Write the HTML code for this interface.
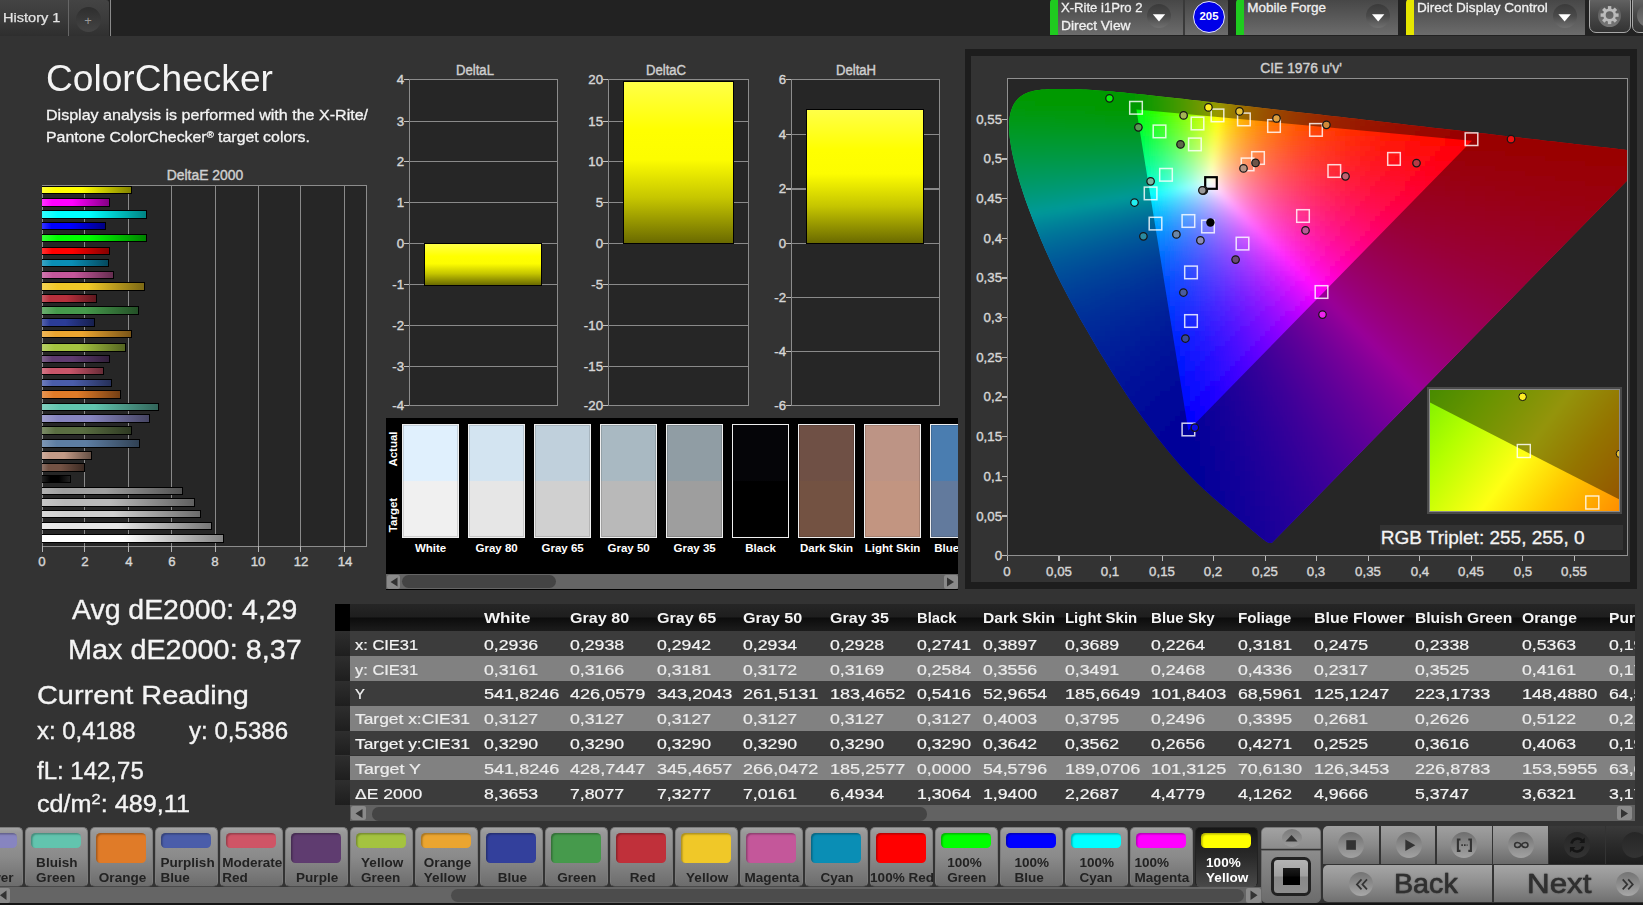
<!DOCTYPE html><html><head><meta charset="utf-8"><title>ColorChecker</title><style>
html,body{margin:0;padding:0;background:#333;}
body{width:1643px;height:905px;overflow:hidden;position:relative;font-family:"Liberation Sans",sans-serif;}
#root{position:absolute;left:0;top:0;width:1643px;height:905px;overflow:hidden;background:#333;}
#root div{position:absolute;box-sizing:border-box;}
.t{position:absolute;white-space:nowrap;line-height:1;display:inline-block;}
svg{position:absolute;left:0;top:0;overflow:visible;}
.cg rect{width:5.5px;height:5.5px;}
</style></head><body><div id="root"><div style="left:0.00px;top:0.00px;width:1643.00px;height:35.60px;background:#222;"></div><div style="left:0.00px;top:0.00px;width:68.00px;height:35.60px;background:linear-gradient(#444,#383838 60%,#2e2e2e);"></div><div style="left:68.00px;top:0.00px;width:1.20px;height:35.60px;background:#666;"></div><div style="left:69.20px;top:0.00px;width:40.30px;height:35.60px;background:linear-gradient(#444,#3a3a3a 60%,#303030);border-top-right-radius:3px;"></div><div style="left:109.50px;top:0.00px;width:1.30px;height:35.60px;background:#8a8a8a;"></div><div style="left:76.00px;top:7.00px;width:25.00px;height:25.00px;border-radius:50%;background:linear-gradient(#2e2e2e,#444);"></div><span id="t0" class="t" style="left:3.20px;transform-origin:0 0;top:11.49px;font-size:13.6px;color:#e4e4e4;transform:scaleX(1.0704);-webkit-text-stroke:0.25px #e4e4e4;">History 1</span><span id="t1" class="t" style="left:88.00px;transform-origin:0 0;top:14.00px;font-size:13px;color:#999;transform:scaleX(1.0000) translateX(-50%);">+</span><div style="left:1049.50px;top:-2.00px;width:133.50px;height:37.00px;background:linear-gradient(#454545,#5a5a5a 55%,#6c6c6c);border-radius:5px 0 0 0;"></div><div style="left:1049.50px;top:-2.00px;width:8.00px;height:37.00px;background:#1fcb1f;border-radius:5px 0 0 0;"></div><div style="left:1183.00px;top:0.00px;width:1.50px;height:35.00px;background:#3a3a3a;"></div><div style="left:1184.50px;top:-2.00px;width:43.50px;height:37.00px;background:linear-gradient(#454545,#5a5a5a 55%,#6c6c6c);border-radius:0 4px 0 0;"></div><div style="left:1235.50px;top:-2.00px;width:162.50px;height:37.00px;background:linear-gradient(#454545,#5a5a5a 55%,#6c6c6c);border-radius:5px 0 0 0;"></div><div style="left:1235.50px;top:-2.00px;width:8.00px;height:37.00px;background:#1fcb1f;border-radius:5px 0 0 0;"></div><div style="left:1406.00px;top:-2.00px;width:179.30px;height:37.00px;background:linear-gradient(#454545,#5a5a5a 55%,#6c6c6c);border-radius:5px 0 0 0;"></div><div style="left:1406.00px;top:-2.00px;width:8.00px;height:37.00px;background:#e6e600;border-radius:5px 0 0 0;"></div><div style="left:1147.00px;top:4.40px;width:24.00px;height:24.00px;border-radius:50%;background:linear-gradient(#3a3a3a,#4a4a4a 50%,#707070);"></div><svg width="1643" height="905"><path d="M1152.8 14.2h12.4l-6.2 7.2z" fill="#fff"/></svg><div style="left:1366.20px;top:4.40px;width:24.00px;height:24.00px;border-radius:50%;background:linear-gradient(#3a3a3a,#4a4a4a 50%,#707070);"></div><svg width="1643" height="905"><path d="M1372.0 14.2h12.4l-6.2 7.2z" fill="#fff"/></svg><div style="left:1552.60px;top:4.40px;width:24.00px;height:24.00px;border-radius:50%;background:linear-gradient(#3a3a3a,#4a4a4a 50%,#707070);"></div><svg width="1643" height="905"><path d="M1558.3999999999999 14.2h12.4l-6.2 7.2z" fill="#fff"/></svg><span id="t2" class="t" style="left:1061.00px;transform-origin:0 0;top:1.37px;font-size:13.5px;color:#f0f0f0;transform:scaleX(0.9702);-webkit-text-stroke:0.3px #f0f0f0;">X-Rite i1Pro 2</span><span id="t3" class="t" style="left:1061.00px;transform-origin:0 0;top:19.17px;font-size:13.5px;color:#f0f0f0;transform:scaleX(1.0221);-webkit-text-stroke:0.3px #f0f0f0;">Direct View</span><span id="t4" class="t" style="left:1247.20px;transform-origin:0 0;top:1.37px;font-size:13.5px;color:#f0f0f0;transform:scaleX(1.0000);-webkit-text-stroke:0.3px #f0f0f0;">Mobile Forge</span><span id="t5" class="t" style="left:1417.10px;transform-origin:0 0;top:1.37px;font-size:13.5px;color:#f0f0f0;transform:scaleX(1.0023);-webkit-text-stroke:0.3px #f0f0f0;">Direct Display Control</span><div style="left:1193.20px;top:0.80px;width:32.00px;height:32.00px;border-radius:50%;background:#0000e8;border:1.2px solid #e8e8ff;"></div><span id="t6" class="t" style="left:1209.20px;transform-origin:0 0;top:11.49px;font-size:11px;color:#fff;font-weight:700;transform:scaleX(1.0333) translateX(-50%);">205</span><div style="left:1589.00px;top:-6.00px;width:41.50px;height:38.70px;border:1.3px solid #a8a8a8;border-radius:7px;background:linear-gradient(#6a6a6a,#4a4a4a 50%,#333);"></div><div style="left:1631.80px;top:-6.00px;width:30.00px;height:38.70px;border:1.3px solid #a8a8a8;border-radius:7px;background:linear-gradient(#6a6a6a,#4a4a4a 50%,#333);"></div><div style="left:1598.10px;top:3.60px;width:23.00px;height:23.00px;border-radius:50%;background:linear-gradient(#555,#777);"></div><div style="left:1637.00px;top:3.60px;width:23.00px;height:23.00px;border-radius:50%;background:linear-gradient(#555,#777);"></div><svg width="1643" height="905"><rect x="1607.8999999999999" y="6.1" width="3.4" height="4" fill="#bbb" transform="rotate(0 1609.6 15.1)"/><rect x="1607.8999999999999" y="6.1" width="3.4" height="4" fill="#bbb" transform="rotate(45 1609.6 15.1)"/><rect x="1607.8999999999999" y="6.1" width="3.4" height="4" fill="#bbb" transform="rotate(90 1609.6 15.1)"/><rect x="1607.8999999999999" y="6.1" width="3.4" height="4" fill="#bbb" transform="rotate(135 1609.6 15.1)"/><rect x="1607.8999999999999" y="6.1" width="3.4" height="4" fill="#bbb" transform="rotate(180 1609.6 15.1)"/><rect x="1607.8999999999999" y="6.1" width="3.4" height="4" fill="#bbb" transform="rotate(225 1609.6 15.1)"/><rect x="1607.8999999999999" y="6.1" width="3.4" height="4" fill="#bbb" transform="rotate(270 1609.6 15.1)"/><rect x="1607.8999999999999" y="6.1" width="3.4" height="4" fill="#bbb" transform="rotate(315 1609.6 15.1)"/><circle cx="1609.6" cy="15.1" r="5.2" fill="none" stroke="#bbb" stroke-width="2.6"/></svg><span id="t7" class="t" style="left:46.40px;transform-origin:0 0;top:61.13px;font-size:36px;color:#f4f4f4;transform:scaleX(1.0309);">ColorChecker</span><span id="t8" class="t" style="left:46.40px;transform-origin:0 0;top:107.00px;font-size:15px;color:#f4f4f4;transform:scaleX(1.0701);-webkit-text-stroke:0.3px #f4f4f4;">Display analysis is performed with the X-Rite/</span><span id="t9" class="t" style="left:46.40px;transform-origin:0 0;top:128.90px;font-size:15px;color:#f4f4f4;transform:scaleX(1.0586);-webkit-text-stroke:0.3px #f4f4f4;">Pantone ColorChecker<span style="font-size:9px;position:relative;top:-4px">®</span> target colors.</span><span id="t10" class="t" style="left:204.70px;transform-origin:0 0;top:168.72px;font-size:13.8px;color:#cfcfcf;transform:scaleX(1.0066) translateX(-50%);-webkit-text-stroke:0.4px #cfcfcf;">DeltaE 2000</span><div style="left:42.00px;top:185.00px;width:325.00px;height:361.60px;background:#262626;border:1.1px solid #8c8c8c;"></div><div style="left:83.85px;top:185.00px;width:1.10px;height:361.60px;background:#8a8a8a;"></div><div style="left:127.85px;top:185.00px;width:1.10px;height:361.60px;background:#8a8a8a;"></div><div style="left:170.75px;top:185.00px;width:1.10px;height:361.60px;background:#8a8a8a;"></div><div style="left:214.55px;top:185.00px;width:1.10px;height:361.60px;background:#8a8a8a;"></div><div style="left:257.65px;top:185.00px;width:1.10px;height:361.60px;background:#8a8a8a;"></div><div style="left:300.05px;top:185.00px;width:1.10px;height:361.60px;background:#8a8a8a;"></div><div style="left:343.75px;top:185.00px;width:1.10px;height:361.60px;background:#8a8a8a;"></div><div style="left:41.90px;top:546.10px;width:1.20px;height:5.60px;background:#b4b4b4;"></div><span id="t11" class="t" style="left:41.90px;transform-origin:0 0;top:555.27px;font-size:13.5px;color:#d6d6d6;transform:scaleX(0.9800) translateX(-50%);-webkit-text-stroke:0.4px #d6d6d6;">0</span><div style="left:83.80px;top:546.10px;width:1.20px;height:5.60px;background:#b4b4b4;"></div><span id="t12" class="t" style="left:84.60px;transform-origin:0 0;top:555.27px;font-size:13.5px;color:#d6d6d6;transform:scaleX(0.9800) translateX(-50%);-webkit-text-stroke:0.4px #d6d6d6;">2</span><div style="left:127.80px;top:546.10px;width:1.20px;height:5.60px;background:#b4b4b4;"></div><span id="t13" class="t" style="left:128.60px;transform-origin:0 0;top:555.27px;font-size:13.5px;color:#d6d6d6;transform:scaleX(0.9800) translateX(-50%);-webkit-text-stroke:0.4px #d6d6d6;">4</span><div style="left:170.70px;top:546.10px;width:1.20px;height:5.60px;background:#b4b4b4;"></div><span id="t14" class="t" style="left:171.50px;transform-origin:0 0;top:555.27px;font-size:13.5px;color:#d6d6d6;transform:scaleX(0.9800) translateX(-50%);-webkit-text-stroke:0.4px #d6d6d6;">6</span><div style="left:214.50px;top:546.10px;width:1.20px;height:5.60px;background:#b4b4b4;"></div><span id="t15" class="t" style="left:215.30px;transform-origin:0 0;top:555.27px;font-size:13.5px;color:#d6d6d6;transform:scaleX(0.9800) translateX(-50%);-webkit-text-stroke:0.4px #d6d6d6;">8</span><div style="left:257.60px;top:546.10px;width:1.20px;height:5.60px;background:#b4b4b4;"></div><span id="t16" class="t" style="left:258.40px;transform-origin:0 0;top:555.27px;font-size:13.5px;color:#d6d6d6;transform:scaleX(0.9800) translateX(-50%);-webkit-text-stroke:0.4px #d6d6d6;">10</span><div style="left:300.00px;top:546.10px;width:1.20px;height:5.60px;background:#b4b4b4;"></div><span id="t17" class="t" style="left:300.80px;transform-origin:0 0;top:555.27px;font-size:13.5px;color:#d6d6d6;transform:scaleX(0.9800) translateX(-50%);-webkit-text-stroke:0.4px #d6d6d6;">12</span><div style="left:343.70px;top:546.10px;width:1.20px;height:5.60px;background:#b4b4b4;"></div><span id="t18" class="t" style="left:344.50px;transform-origin:0 0;top:555.27px;font-size:13.5px;color:#d6d6d6;transform:scaleX(0.9800) translateX(-50%);-webkit-text-stroke:0.4px #d6d6d6;">14</span><div style="left:42.40px;top:186.10px;width:89.24px;height:8.40px;background:linear-gradient(90deg,#ffff33,#ffff00 15%,#ffff00 45%,#848400);border:1.2px solid #000;border-left:none;"></div><div style="left:42.40px;top:198.20px;width:67.62px;height:8.40px;background:linear-gradient(90deg,#ff33ff,#ff00ff 15%,#ff00ff 45%,#840084);border:1.2px solid #000;border-left:none;"></div><div style="left:42.40px;top:210.20px;width:104.81px;height:8.40px;background:linear-gradient(90deg,#33ffff,#00ffff 15%,#00ffff 45%,#008484);border:1.2px solid #000;border-left:none;"></div><div style="left:42.40px;top:222.10px;width:63.30px;height:8.40px;background:linear-gradient(90deg,#3333ff,#0000ff 15%,#0000ff 45%,#000084);border:1.2px solid #000;border-left:none;"></div><div style="left:42.40px;top:233.80px;width:104.81px;height:8.40px;background:linear-gradient(90deg,#33ff33,#00ff00 15%,#00ff00 45%,#008400);border:1.2px solid #000;border-left:none;"></div><div style="left:42.40px;top:247.10px;width:68.05px;height:8.40px;background:linear-gradient(90deg,#ff3333,#ff0000 15%,#ff0000 45%,#840000);border:1.2px solid #000;border-left:none;"></div><div style="left:42.40px;top:259.00px;width:66.97px;height:8.40px;background:linear-gradient(90deg,#3ba4c3,#0a8eb5 15%,#0a8eb5 45%,#05495e);border:1.2px solid #000;border-left:none;"></div><div style="left:42.40px;top:270.70px;width:71.95px;height:8.40px;background:linear-gradient(90deg,#cf78ae,#c4579a 15%,#c4579a 45%,#652d50);border:1.2px solid #000;border-left:none;"></div><div style="left:42.40px;top:282.40px;width:102.65px;height:8.40px;background:linear-gradient(90deg,#f3d353,#f0c828 15%,#f0c828 45%,#7c6814);border:1.2px solid #000;border-left:none;"></div><div style="left:42.40px;top:294.30px;width:54.87px;height:8.40px;background:linear-gradient(90deg,#c65963,#b8303c 15%,#b8303c 45%,#5f181f);border:1.2px solid #000;border-left:none;"></div><div style="left:42.40px;top:306.30px;width:97.03px;height:8.40px;background:linear-gradient(90deg,#6bae6f,#469a4c 15%,#469a4c 45%,#245027);border:1.2px solid #000;border-left:none;"></div><div style="left:42.40px;top:318.20px;width:52.92px;height:8.40px;background:linear-gradient(90deg,#5563ab,#2b3c96 15%,#2b3c96 45%,#161f4e);border:1.2px solid #000;border-left:none;"></div><div style="left:42.40px;top:330.10px;width:89.67px;height:8.40px;background:linear-gradient(90deg,#efb759,#eba530 15%,#eba530 45%,#7a5518);border:1.2px solid #000;border-left:none;"></div><div style="left:42.40px;top:343.20px;width:83.84px;height:8.40px;background:linear-gradient(90deg,#b6cf66,#a4c340 15%,#a4c340 45%,#556521);border:1.2px solid #000;border-left:none;"></div><div style="left:42.40px;top:355.10px;width:68.05px;height:8.40px;background:linear-gradient(90deg,#7f638c,#5f3c70 15%,#5f3c70 45%,#311f3a);border:1.2px solid #000;border-left:none;"></div><div style="left:42.40px;top:366.90px;width:61.78px;height:8.40px;background:linear-gradient(90deg,#d37787,#c9566a 15%,#c9566a 45%,#682c37);border:1.2px solid #000;border-left:none;"></div><div style="left:42.40px;top:378.70px;width:69.14px;height:8.40px;background:linear-gradient(90deg,#6e7dbb,#4a5daa 15%,#4a5daa 45%,#263058);border:1.2px solid #000;border-left:none;"></div><div style="left:42.40px;top:390.40px;width:79.08px;height:8.40px;background:linear-gradient(90deg,#e69553,#e07b28 15%,#e07b28 45%,#743f14);border:1.2px solid #000;border-left:none;"></div><div style="left:42.40px;top:402.50px;width:116.70px;height:8.40px;background:linear-gradient(90deg,#81cfbe,#62c4ae 15%,#62c4ae 45%,#32655a);border:1.2px solid #000;border-left:none;"></div><div style="left:42.40px;top:414.20px;width:108.05px;height:8.40px;background:linear-gradient(90deg,#9f9dcc,#8785c0 15%,#8785c0 45%,#464563);border:1.2px solid #000;border-left:none;"></div><div style="left:42.40px;top:426.40px;width:89.89px;height:8.40px;background:linear-gradient(90deg,#7b8b67,#5a6e42 15%,#5a6e42 45%,#2e3922);border:1.2px solid #000;border-left:none;"></div><div style="left:42.40px;top:439.40px;width:97.46px;height:8.40px;background:linear-gradient(90deg,#7e97b5,#5e7ea3 15%,#5e7ea3 45%,#304154);border:1.2px solid #000;border-left:none;"></div><div style="left:42.40px;top:451.40px;width:49.68px;height:8.40px;background:linear-gradient(90deg,#cfae9e,#c39a86 15%,#c39a86 45%,#655045);border:1.2px solid #000;border-left:none;"></div><div style="left:42.40px;top:463.30px;width:42.54px;height:8.40px;background:linear-gradient(90deg,#8f7469,#735244 15%,#735244 45%,#3b2a23);border:1.2px solid #000;border-left:none;"></div><div style="left:42.40px;top:474.80px;width:28.92px;height:8.40px;background:linear-gradient(90deg,#222,#000 30%,#000 60%,#222);border:1.2px solid #000;border-left:none;"></div><div style="left:42.40px;top:486.70px;width:140.91px;height:8.40px;background:linear-gradient(90deg,#b1b1b1,#9e9e9e 15%,#9e9e9e 45%,#525252);border:1.2px solid #000;border-left:none;"></div><div style="left:42.40px;top:498.40px;width:152.37px;height:8.40px;background:linear-gradient(90deg,#c7c7c7,#b9b9b9 15%,#b9b9b9 45%,#606060);border:1.2px solid #000;border-left:none;"></div><div style="left:42.40px;top:510.10px;width:159.07px;height:8.40px;background:linear-gradient(90deg,#d9d9d9,#d0d0d0 15%,#d0d0d0 45%,#6c6c6c);border:1.2px solid #000;border-left:none;"></div><div style="left:42.40px;top:522.10px;width:169.45px;height:8.40px;background:linear-gradient(90deg,#ebebeb,#e6e6e6 15%,#e6e6e6 45%,#777777);border:1.2px solid #000;border-left:none;"></div><div style="left:42.40px;top:534.20px;width:181.56px;height:8.40px;background:linear-gradient(90deg,#ffffff,#ffffff 15%,#ffffff 45%,#848484);border:1.2px solid #000;border-left:none;"></div><span id="t19" class="t" style="left:474.90px;transform-origin:0 0;top:63.72px;font-size:13.8px;color:#cfcfcf;transform:scaleX(0.9500) translateX(-50%);-webkit-text-stroke:0.4px #cfcfcf;">DeltaL</span><div style="left:409.40px;top:78.85px;width:148.40px;height:326.90px;background:#262626;border:1.1px solid #8c8c8c;"></div><div style="left:404.40px;top:78.80px;width:5.00px;height:1.20px;background:#c0c0c0;"></div><span id="t20" class="t" style="left:404.40px;transform-origin:0 0;top:72.87px;font-size:13.5px;color:#d6d6d6;transform:scaleX(0.9800) translateX(-100%);-webkit-text-stroke:0.4px #d6d6d6;">4</span><div style="left:409.40px;top:120.85px;width:148.40px;height:1.10px;background:#8a8a8a;"></div><div style="left:404.40px;top:120.80px;width:5.00px;height:1.20px;background:#c0c0c0;"></div><span id="t21" class="t" style="left:404.40px;transform-origin:0 0;top:114.87px;font-size:13.5px;color:#d6d6d6;transform:scaleX(0.9800) translateX(-100%);-webkit-text-stroke:0.4px #d6d6d6;">3</span><div style="left:409.40px;top:160.75px;width:148.40px;height:1.10px;background:#8a8a8a;"></div><div style="left:404.40px;top:160.70px;width:5.00px;height:1.20px;background:#c0c0c0;"></div><span id="t22" class="t" style="left:404.40px;transform-origin:0 0;top:154.77px;font-size:13.5px;color:#d6d6d6;transform:scaleX(0.9800) translateX(-100%);-webkit-text-stroke:0.4px #d6d6d6;">2</span><div style="left:409.40px;top:201.75px;width:148.40px;height:1.10px;background:#8a8a8a;"></div><div style="left:404.40px;top:201.70px;width:5.00px;height:1.20px;background:#c0c0c0;"></div><span id="t23" class="t" style="left:404.40px;transform-origin:0 0;top:195.77px;font-size:13.5px;color:#d6d6d6;transform:scaleX(0.9800) translateX(-100%);-webkit-text-stroke:0.4px #d6d6d6;">1</span><div style="left:409.40px;top:242.75px;width:148.40px;height:1.10px;background:#8a8a8a;"></div><div style="left:404.40px;top:242.70px;width:5.00px;height:1.20px;background:#c0c0c0;"></div><span id="t24" class="t" style="left:404.40px;transform-origin:0 0;top:236.77px;font-size:13.5px;color:#d6d6d6;transform:scaleX(0.9800) translateX(-100%);-webkit-text-stroke:0.4px #d6d6d6;">0</span><div style="left:409.40px;top:283.95px;width:148.40px;height:1.10px;background:#8a8a8a;"></div><div style="left:404.40px;top:283.90px;width:5.00px;height:1.20px;background:#c0c0c0;"></div><span id="t25" class="t" style="left:404.40px;transform-origin:0 0;top:277.97px;font-size:13.5px;color:#d6d6d6;transform:scaleX(0.9800) translateX(-100%);-webkit-text-stroke:0.4px #d6d6d6;">-1</span><div style="left:409.40px;top:324.55px;width:148.40px;height:1.10px;background:#8a8a8a;"></div><div style="left:404.40px;top:324.50px;width:5.00px;height:1.20px;background:#c0c0c0;"></div><span id="t26" class="t" style="left:404.40px;transform-origin:0 0;top:318.57px;font-size:13.5px;color:#d6d6d6;transform:scaleX(0.9800) translateX(-100%);-webkit-text-stroke:0.4px #d6d6d6;">-2</span><div style="left:409.40px;top:365.65px;width:148.40px;height:1.10px;background:#8a8a8a;"></div><div style="left:404.40px;top:365.60px;width:5.00px;height:1.20px;background:#c0c0c0;"></div><span id="t27" class="t" style="left:404.40px;transform-origin:0 0;top:359.67px;font-size:13.5px;color:#d6d6d6;transform:scaleX(0.9800) translateX(-100%);-webkit-text-stroke:0.4px #d6d6d6;">-3</span><div style="left:404.40px;top:404.60px;width:5.00px;height:1.20px;background:#c0c0c0;"></div><span id="t28" class="t" style="left:404.40px;transform-origin:0 0;top:398.67px;font-size:13.5px;color:#d6d6d6;transform:scaleX(0.9800) translateX(-100%);-webkit-text-stroke:0.4px #d6d6d6;">-4</span><div style="left:424.00px;top:243.20px;width:118.00px;height:42.50px;background:linear-gradient(#ffff48,#ffff00 30%,#fdfd00 48%,#c6c600 72%,#6a6a00);border:1.2px solid #000;"></div><span id="t29" class="t" style="left:666.00px;transform-origin:0 0;top:63.72px;font-size:13.8px;color:#cfcfcf;transform:scaleX(0.9500) translateX(-50%);-webkit-text-stroke:0.4px #cfcfcf;">DeltaC</span><div style="left:608.40px;top:78.85px;width:140.80px;height:326.90px;background:#262626;border:1.1px solid #8c8c8c;"></div><div style="left:603.40px;top:78.80px;width:5.00px;height:1.20px;background:#c0c0c0;"></div><span id="t30" class="t" style="left:603.40px;transform-origin:0 0;top:72.87px;font-size:13.5px;color:#d6d6d6;transform:scaleX(0.9800) translateX(-100%);-webkit-text-stroke:0.4px #d6d6d6;">20</span><div style="left:608.40px;top:120.85px;width:140.80px;height:1.10px;background:#8a8a8a;"></div><div style="left:603.40px;top:120.80px;width:5.00px;height:1.20px;background:#c0c0c0;"></div><span id="t31" class="t" style="left:603.40px;transform-origin:0 0;top:114.87px;font-size:13.5px;color:#d6d6d6;transform:scaleX(0.9800) translateX(-100%);-webkit-text-stroke:0.4px #d6d6d6;">15</span><div style="left:608.40px;top:160.75px;width:140.80px;height:1.10px;background:#8a8a8a;"></div><div style="left:603.40px;top:160.70px;width:5.00px;height:1.20px;background:#c0c0c0;"></div><span id="t32" class="t" style="left:603.40px;transform-origin:0 0;top:154.77px;font-size:13.5px;color:#d6d6d6;transform:scaleX(0.9800) translateX(-100%);-webkit-text-stroke:0.4px #d6d6d6;">10</span><div style="left:608.40px;top:201.75px;width:140.80px;height:1.10px;background:#8a8a8a;"></div><div style="left:603.40px;top:201.70px;width:5.00px;height:1.20px;background:#c0c0c0;"></div><span id="t33" class="t" style="left:603.40px;transform-origin:0 0;top:195.77px;font-size:13.5px;color:#d6d6d6;transform:scaleX(0.9800) translateX(-100%);-webkit-text-stroke:0.4px #d6d6d6;">5</span><div style="left:608.40px;top:242.75px;width:140.80px;height:1.10px;background:#8a8a8a;"></div><div style="left:603.40px;top:242.70px;width:5.00px;height:1.20px;background:#c0c0c0;"></div><span id="t34" class="t" style="left:603.40px;transform-origin:0 0;top:236.77px;font-size:13.5px;color:#d6d6d6;transform:scaleX(0.9800) translateX(-100%);-webkit-text-stroke:0.4px #d6d6d6;">0</span><div style="left:608.40px;top:283.95px;width:140.80px;height:1.10px;background:#8a8a8a;"></div><div style="left:603.40px;top:283.90px;width:5.00px;height:1.20px;background:#c0c0c0;"></div><span id="t35" class="t" style="left:603.40px;transform-origin:0 0;top:277.97px;font-size:13.5px;color:#d6d6d6;transform:scaleX(0.9800) translateX(-100%);-webkit-text-stroke:0.4px #d6d6d6;">-5</span><div style="left:608.40px;top:324.55px;width:140.80px;height:1.10px;background:#8a8a8a;"></div><div style="left:603.40px;top:324.50px;width:5.00px;height:1.20px;background:#c0c0c0;"></div><span id="t36" class="t" style="left:603.40px;transform-origin:0 0;top:318.57px;font-size:13.5px;color:#d6d6d6;transform:scaleX(0.9800) translateX(-100%);-webkit-text-stroke:0.4px #d6d6d6;">-10</span><div style="left:608.40px;top:365.65px;width:140.80px;height:1.10px;background:#8a8a8a;"></div><div style="left:603.40px;top:365.60px;width:5.00px;height:1.20px;background:#c0c0c0;"></div><span id="t37" class="t" style="left:603.40px;transform-origin:0 0;top:359.67px;font-size:13.5px;color:#d6d6d6;transform:scaleX(0.9800) translateX(-100%);-webkit-text-stroke:0.4px #d6d6d6;">-15</span><div style="left:603.40px;top:404.60px;width:5.00px;height:1.20px;background:#c0c0c0;"></div><span id="t38" class="t" style="left:603.40px;transform-origin:0 0;top:398.67px;font-size:13.5px;color:#d6d6d6;transform:scaleX(0.9800) translateX(-100%);-webkit-text-stroke:0.4px #d6d6d6;">-20</span><div style="left:622.80px;top:81.20px;width:111.00px;height:162.70px;background:linear-gradient(#ffff48,#ffff00 30%,#fdfd00 48%,#c6c600 72%,#6a6a00);border:1.2px solid #000;"></div><span id="t39" class="t" style="left:856.40px;transform-origin:0 0;top:63.72px;font-size:13.8px;color:#cfcfcf;transform:scaleX(0.9500) translateX(-50%);-webkit-text-stroke:0.4px #cfcfcf;">DeltaH</span><div style="left:791.20px;top:78.85px;width:148.40px;height:326.90px;background:#262626;border:1.1px solid #8c8c8c;"></div><div style="left:786.20px;top:78.80px;width:5.00px;height:1.20px;background:#c0c0c0;"></div><span id="t40" class="t" style="left:786.20px;transform-origin:0 0;top:72.87px;font-size:13.5px;color:#d6d6d6;transform:scaleX(0.9800) translateX(-100%);-webkit-text-stroke:0.4px #d6d6d6;">6</span><div style="left:791.20px;top:134.05px;width:148.40px;height:1.10px;background:#8a8a8a;"></div><div style="left:786.20px;top:134.00px;width:5.00px;height:1.20px;background:#c0c0c0;"></div><span id="t41" class="t" style="left:786.20px;transform-origin:0 0;top:128.07px;font-size:13.5px;color:#d6d6d6;transform:scaleX(0.9800) translateX(-100%);-webkit-text-stroke:0.4px #d6d6d6;">4</span><div style="left:791.20px;top:188.45px;width:148.40px;height:1.10px;background:#8a8a8a;"></div><div style="left:786.20px;top:188.40px;width:5.00px;height:1.20px;background:#c0c0c0;"></div><span id="t42" class="t" style="left:786.20px;transform-origin:0 0;top:182.47px;font-size:13.5px;color:#d6d6d6;transform:scaleX(0.9800) translateX(-100%);-webkit-text-stroke:0.4px #d6d6d6;">2</span><div style="left:791.20px;top:242.75px;width:148.40px;height:1.10px;background:#8a8a8a;"></div><div style="left:786.20px;top:242.70px;width:5.00px;height:1.20px;background:#c0c0c0;"></div><span id="t43" class="t" style="left:786.20px;transform-origin:0 0;top:236.77px;font-size:13.5px;color:#d6d6d6;transform:scaleX(0.9800) translateX(-100%);-webkit-text-stroke:0.4px #d6d6d6;">0</span><div style="left:791.20px;top:296.75px;width:148.40px;height:1.10px;background:#8a8a8a;"></div><div style="left:786.20px;top:296.70px;width:5.00px;height:1.20px;background:#c0c0c0;"></div><span id="t44" class="t" style="left:786.20px;transform-origin:0 0;top:290.77px;font-size:13.5px;color:#d6d6d6;transform:scaleX(0.9800) translateX(-100%);-webkit-text-stroke:0.4px #d6d6d6;">-2</span><div style="left:791.20px;top:350.65px;width:148.40px;height:1.10px;background:#8a8a8a;"></div><div style="left:786.20px;top:350.60px;width:5.00px;height:1.20px;background:#c0c0c0;"></div><span id="t45" class="t" style="left:786.20px;transform-origin:0 0;top:344.67px;font-size:13.5px;color:#d6d6d6;transform:scaleX(0.9800) translateX(-100%);-webkit-text-stroke:0.4px #d6d6d6;">-4</span><div style="left:786.20px;top:404.60px;width:5.00px;height:1.20px;background:#c0c0c0;"></div><span id="t46" class="t" style="left:786.20px;transform-origin:0 0;top:398.67px;font-size:13.5px;color:#d6d6d6;transform:scaleX(0.9800) translateX(-100%);-webkit-text-stroke:0.4px #d6d6d6;">-6</span><div style="left:805.90px;top:109.30px;width:117.90px;height:134.60px;background:linear-gradient(#ffff48,#ffff00 30%,#fdfd00 48%,#c6c600 72%,#6a6a00);border:1.2px solid #000;"></div><div style="left:386.30px;top:418.00px;width:571.70px;height:171.50px;background:#000;overflow:hidden;"><div style="left:15.70px;top:6.00px;width:57.20px;height:113.80px;background:linear-gradient(#e0f0fd 49.5%,#f0f0f0 50.5%);border:1.2px solid #efefef;box-shadow:inset 0 0 0 1px rgba(0,0,0,.13);"></div><span id="t47" class="t" style="left:44.30px;transform-origin:0 0;top:124.77px;font-size:11.5px;color:#fff;font-weight:700;transform:scaleX(1.0000) translateX(-50%);">White</span><div style="left:81.70px;top:6.00px;width:57.20px;height:113.80px;background:linear-gradient(#d3e4f1 49.5%,#e6e6e6 50.5%);border:1.2px solid #efefef;box-shadow:inset 0 0 0 1px rgba(0,0,0,.13);"></div><span id="t48" class="t" style="left:110.30px;transform-origin:0 0;top:124.77px;font-size:11.5px;color:#fff;font-weight:700;transform:scaleX(1.0000) translateX(-50%);">Gray 80</span><div style="left:147.70px;top:6.00px;width:57.20px;height:113.80px;background:linear-gradient(#c0d0dc 49.5%,#d0d0d0 50.5%);border:1.2px solid #efefef;box-shadow:inset 0 0 0 1px rgba(0,0,0,.13);"></div><span id="t49" class="t" style="left:176.30px;transform-origin:0 0;top:124.77px;font-size:11.5px;color:#fff;font-weight:700;transform:scaleX(1.0000) translateX(-50%);">Gray 65</span><div style="left:213.70px;top:6.00px;width:57.20px;height:113.80px;background:linear-gradient(#a9b9c2 49.5%,#b9b9b9 50.5%);border:1.2px solid #efefef;box-shadow:inset 0 0 0 1px rgba(0,0,0,.13);"></div><span id="t50" class="t" style="left:242.30px;transform-origin:0 0;top:124.77px;font-size:11.5px;color:#fff;font-weight:700;transform:scaleX(1.0000) translateX(-50%);">Gray 50</span><div style="left:279.70px;top:6.00px;width:57.20px;height:113.80px;background:linear-gradient(#909da4 49.5%,#9e9e9e 50.5%);border:1.2px solid #efefef;box-shadow:inset 0 0 0 1px rgba(0,0,0,.13);"></div><span id="t51" class="t" style="left:308.30px;transform-origin:0 0;top:124.77px;font-size:11.5px;color:#fff;font-weight:700;transform:scaleX(1.0000) translateX(-50%);">Gray 35</span><div style="left:345.70px;top:6.00px;width:57.20px;height:113.80px;background:linear-gradient(#050508 49.5%,#000000 50.5%);border:1.2px solid #efefef;box-shadow:inset 0 0 0 1px rgba(0,0,0,.13);"></div><span id="t52" class="t" style="left:374.30px;transform-origin:0 0;top:124.77px;font-size:11.5px;color:#fff;font-weight:700;transform:scaleX(1.0000) translateX(-50%);">Black</span><div style="left:411.70px;top:6.00px;width:57.20px;height:113.80px;background:linear-gradient(#6f5045 49.5%,#735242 50.5%);border:1.2px solid #efefef;box-shadow:inset 0 0 0 1px rgba(0,0,0,.13);"></div><span id="t53" class="t" style="left:440.30px;transform-origin:0 0;top:124.77px;font-size:11.5px;color:#fff;font-weight:700;transform:scaleX(1.0000) translateX(-50%);">Dark Skin</span><div style="left:477.70px;top:6.00px;width:57.20px;height:113.80px;background:linear-gradient(#bd9485 49.5%,#c29581 50.5%);border:1.2px solid #efefef;box-shadow:inset 0 0 0 1px rgba(0,0,0,.13);"></div><span id="t54" class="t" style="left:506.30px;transform-origin:0 0;top:124.77px;font-size:11.5px;color:#fff;font-weight:700;transform:scaleX(1.0000) translateX(-50%);">Light Skin</span><div style="left:543.70px;top:6.00px;width:57.20px;height:113.80px;background:linear-gradient(#4a7db0 49.5%,#627a9d 50.5%);border:1.2px solid #efefef;box-shadow:inset 0 0 0 1px rgba(0,0,0,.13);"></div><span id="t55" class="t" style="left:572.30px;transform-origin:0 0;top:124.77px;font-size:11.5px;color:#fff;font-weight:700;transform:scaleX(1.0000) translateX(-50%);">Blue Sky</span></div><span class="t" style="left:394.3px;top:449px;font-size:11.5px;font-weight:700;color:#fff;transform:translate(-50%,-50%) rotate(-90deg);">Actual</span><span class="t" style="left:394.3px;top:514.5px;font-size:11.5px;font-weight:700;color:#fff;transform:translate(-50%,-50%) rotate(-90deg);">Target</span><div style="left:386.30px;top:574.20px;width:571.70px;height:15.30px;background:#656565;"></div><div style="left:402.00px;top:575.20px;width:153.50px;height:13.30px;background:#444;border-radius:6.5px;"></div><div style="left:386.80px;top:575.00px;width:13.50px;height:13.80px;background:#8a8a8a;border-radius:2px;"></div><div style="left:944.00px;top:575.00px;width:13.50px;height:13.80px;background:#8a8a8a;border-radius:2px;"></div><svg width="1643" height="905"><path d="M397.5 577.5v9l-7-4.500z" fill="#333"/><path d="M947 577.500v9l7-4.500z" fill="#333"/></svg><div style="left:965.00px;top:49.20px;width:671.50px;height:540.00px;background:#1d1d1d;"></div><div style="left:971.40px;top:55.90px;width:658.80px;height:526.60px;background:#333;"></div><div style="left:1006.90px;top:77.90px;width:620.80px;height:478.50px;background:#262626;border:1.3px solid #909090;"></div><span id="t56" class="t" style="left:1300.80px;transform-origin:0 0;top:61.62px;font-size:13.8px;color:#cfcfcf;transform:scaleX(1.0062) translateX(-50%);-webkit-text-stroke:0.4px #cfcfcf;">CIE 1976 u'v'</span><svg width="1643" height="905"><defs><clipPath id="cpR"><rect x="1008" y="79" width="619" height="476"/></clipPath>
<clipPath id="cpL"><polygon points="1272.3,542.6 1272.3,542.6 1272.2,542.6 1272.2,542.6 1272.1,542.6 1272.1,542.6 1272.1,542.6 1272.0,542.7 1272.0,542.7 1271.9,542.8 1271.8,542.8 1271.7,542.7 1271.6,542.7 1271.5,542.7 1271.5,542.7 1271.4,542.7 1271.4,542.8 1271.3,542.9 1271.3,543.0 1271.2,543.0 1271.2,543.1 1271.1,543.1 1271.0,543.1 1270.9,543.1 1270.8,543.1 1270.6,543.1 1270.5,543.1 1270.3,543.1 1270.2,543.1 1270.0,543.1 1269.9,543.1 1269.7,543.1 1269.6,543.1 1269.4,543.1 1269.2,543.0 1269.0,543.0 1268.8,542.9 1268.5,542.8 1268.3,542.7 1267.9,542.5 1267.5,542.3 1267.0,542.0 1266.5,541.7 1266.0,541.4 1265.4,541.0 1264.8,540.6 1264.2,540.1 1263.5,539.6 1262.8,539.0 1262.0,538.4 1261.2,537.7 1260.3,537.0 1259.3,536.3 1258.3,535.5 1257.2,534.6 1256.1,533.6 1254.9,532.6 1253.6,531.6 1252.3,530.4 1250.9,529.2 1249.5,528.0 1248.0,526.8 1246.4,525.4 1244.8,524.1 1243.0,522.6 1241.2,521.1 1239.2,519.4 1237.1,517.7 1234.9,515.9 1232.7,514.0 1230.3,512.1 1227.9,510.1 1225.3,508.0 1222.7,505.8 1219.9,503.5 1217.1,501.0 1214.1,498.5 1211.0,495.7 1207.8,492.8 1204.4,489.8 1201.0,486.6 1197.4,483.2 1193.8,479.6 1190.0,475.7 1186.0,471.5 1181.7,466.9 1177.2,461.8 1172.3,456.1 1167.1,449.8 1161.7,443.1 1156.1,435.9 1150.3,428.3 1144.4,420.3 1138.3,411.8 1132.1,402.9 1125.8,393.5 1119.3,383.6 1112.8,373.4 1106.2,362.8 1099.5,351.9 1092.9,340.8 1086.4,329.6 1079.8,318.2 1073.5,306.8 1067.3,295.2 1061.3,283.8 1055.7,272.4 1050.5,261.2 1045.5,250.2 1040.9,239.5 1036.6,229.0 1032.6,219.0 1028.9,209.2 1025.5,199.9 1022.5,191.0 1019.8,182.5 1017.5,174.5 1015.5,167.0 1013.8,160.0 1012.3,153.5 1011.2,147.4 1010.3,141.8 1009.6,136.7 1009.2,132.0 1009.0,127.6 1009.1,123.5 1009.3,119.7 1009.8,116.2 1010.4,112.9 1011.3,109.9 1012.4,107.1 1013.6,104.6 1015.0,102.2 1016.6,100.2 1018.4,98.3 1020.2,96.7 1022.3,95.3 1024.4,94.0 1026.7,93.0 1029.0,92.1 1031.4,91.4 1033.9,90.8 1036.5,90.3 1039.2,89.9 1041.9,89.6 1044.7,89.4 1047.5,89.2 1050.4,89.1 1053.3,89.0 1056.3,88.9 1059.2,88.9 1062.1,88.9 1065.0,88.9 1068.0,89.0 1070.9,89.0 1073.9,89.1 1076.9,89.2 1079.9,89.3 1083.0,89.5 1086.1,89.6 1089.2,89.8 1092.4,90.0 1095.7,90.2 1099.0,90.5 1102.4,90.7 1105.8,91.0 1109.2,91.3 1112.8,91.6 1116.4,91.9 1120.0,92.3 1123.7,92.6 1127.5,93.0 1131.4,93.4 1135.4,93.8 1139.4,94.2 1143.5,94.6 1147.7,95.1 1152.0,95.5 1156.4,96.0 1160.8,96.5 1165.4,97.0 1170.0,97.5 1174.8,98.0 1179.6,98.6 1184.5,99.1 1189.6,99.7 1194.7,100.3 1200.0,100.8 1205.3,101.5 1210.8,102.1 1216.4,102.7 1222.0,103.4 1227.8,104.0 1233.7,104.7 1239.7,105.4 1245.8,106.1 1252.0,106.8 1258.3,107.5 1264.8,108.3 1271.3,109.0 1277.9,109.8 1284.7,110.6 1291.5,111.4 1298.4,112.2 1305.5,113.0 1312.6,113.8 1319.7,114.6 1327.0,115.4 1334.3,116.3 1341.7,117.1 1349.2,118.0 1356.7,118.8 1364.3,119.7 1371.9,120.6 1379.4,121.5 1386.9,122.3 1394.3,123.2 1401.7,124.0 1408.9,124.9 1416.2,125.7 1423.4,126.5 1430.6,127.4 1437.9,128.2 1445.0,129.0 1452.0,129.8 1458.9,130.6 1465.7,131.4 1472.2,132.1 1478.6,132.9 1484.9,133.6 1491.0,134.3 1497.0,135.0 1502.9,135.7 1508.6,136.3 1514.1,136.9 1519.4,137.6 1524.6,138.2 1529.6,138.7 1534.5,139.3 1539.2,139.8 1543.7,140.4 1548.0,140.9 1552.2,141.3 1556.3,141.8 1560.2,142.3 1564.0,142.7 1567.6,143.1 1571.1,143.5 1574.5,143.9 1577.8,144.3 1581.1,144.7 1584.2,145.0 1587.3,145.4 1590.2,145.7 1593.1,146.1 1595.9,146.4 1598.6,146.7 1601.2,147.0 1603.7,147.3 1606.1,147.6 1608.4,147.8 1610.6,148.1 1612.8,148.3 1614.8,148.6 1616.8,148.8 1618.7,149.0 1620.4,149.2 1622.0,149.4 1623.6,149.6 1625.0,149.8 1626.4,149.9 1627.7,150.1 1629.0,150.2 1630.2,150.4 1631.4,150.5 1632.5,150.6 1633.5,150.8 1634.5,150.9 1635.4,151.0 1636.2,151.1 1637.0,151.2 1637.7,151.3 1638.4,151.3 1639.0,151.4 1639.5,151.5 1640.1,151.5 1640.6,151.6 1641.1,151.6 1641.6,151.7 1642.1,151.8 1642.5,151.8 1643.0,151.9 1643.4,151.9 1643.8,152.0 1644.1,152.0 1644.5,152.0 1644.9,152.1 1645.3,152.1 1645.7,152.2 1646.1,152.2 1646.5,152.3 1646.8,152.3 1647.2,152.4 1647.5,152.4 1647.9,152.4 1648.2,152.5 1648.5,152.5 1648.7,152.5 1648.9,152.6 1649.0,152.6 1649.1,152.6 1649.3,152.6 1649.4,152.6 1649.5,152.6 1649.6,152.6 1649.7,152.7 1649.8,152.7 1649.9,152.7 1649.9,152.7 1650.0,152.7 1650.0,152.7 1650.0,157.2"/></clipPath>
<filter id="fb" filterUnits="userSpaceOnUse" x="978" y="49" width="679" height="536"><feGaussianBlur stdDeviation="2.4"/></filter></defs>
<g clip-path="url(#cpR)"><g clip-path="url(#cpL)"><g filter="url(#fb)" class="cg">
<g transform="translate(990,76)"><rect x="40" fill="#00ff00"/><rect x="45" fill="#00ff00"/><rect x="50" fill="#00ff00"/><rect x="55" fill="#00ff00"/><rect x="60" fill="#00ff00"/><rect x="65" fill="#00ff00"/><rect x="70" fill="#00ff00"/><rect x="75" fill="#00ff00"/><rect x="80" fill="#00ff00"/><rect x="85" fill="#00ff00"/><rect x="90" fill="#00ff00"/><rect x="95" fill="#00ff00"/><rect x="100" fill="#00ff00"/><rect x="105" fill="#00ff00"/></g>
<g transform="translate(990,81)"><rect x="25" fill="#00ff00"/><rect x="30" fill="#00ff00"/><rect x="35" fill="#00ff00"/><rect x="40" fill="#00ff00"/><rect x="45" fill="#00ff00"/><rect x="50" fill="#00ff00"/><rect x="55" fill="#00ff00"/><rect x="60" fill="#00ff00"/><rect x="65" fill="#00ff00"/><rect x="70" fill="#00ff00"/><rect x="75" fill="#00ff00"/><rect x="80" fill="#00ff00"/><rect x="85" fill="#00ff00"/><rect x="90" fill="#00ff00"/><rect x="95" fill="#00ff00"/><rect x="100" fill="#00ff00"/><rect x="105" fill="#00ff00"/><rect x="110" fill="#00ff00"/><rect x="115" fill="#00ff00"/><rect x="120" fill="#00ff00"/><rect x="125" fill="#00ff00"/><rect x="130" fill="#00ff00"/><rect x="135" fill="#00ff00"/><rect x="140" fill="#01ff00"/><rect x="145" fill="#0cff00"/><rect x="150" fill="#18ff00"/><rect x="155" fill="#23ff00"/><rect x="160" fill="#30ff00"/></g>
<g transform="translate(990,86)"><rect x="15" fill="#00ff00"/><rect x="20" fill="#00ff00"/><rect x="25" fill="#00ff00"/><rect x="30" fill="#00ff00"/><rect x="35" fill="#00ff00"/><rect x="40" fill="#00ff00"/><rect x="45" fill="#00ff00"/><rect x="50" fill="#00ff00"/><rect x="55" fill="#00ff00"/><rect x="60" fill="#00ff00"/><rect x="65" fill="#00ff00"/><rect x="70" fill="#00ff00"/><rect x="75" fill="#00ff00"/><rect x="80" fill="#00ff00"/><rect x="85" fill="#00ff00"/><rect x="90" fill="#00ff00"/><rect x="95" fill="#00ff00"/><rect x="100" fill="#00ff00"/><rect x="105" fill="#00ff00"/><rect x="110" fill="#00ff00"/><rect x="115" fill="#00ff00"/><rect x="120" fill="#00ff00"/><rect x="125" fill="#00ff00"/><rect x="130" fill="#00ff00"/><rect x="135" fill="#00ff00"/><rect x="140" fill="#00ff00"/><rect x="145" fill="#0aff00"/><rect x="150" fill="#16ff00"/><rect x="155" fill="#22ff00"/><rect x="160" fill="#2eff00"/><rect x="165" fill="#3bff00"/><rect x="170" fill="#48ff00"/><rect x="175" fill="#56ff00"/><rect x="180" fill="#63ff00"/><rect x="185" fill="#72ff00"/><rect x="190" fill="#80ff00"/><rect x="195" fill="#8fff00"/><rect x="200" fill="#9fff00"/><rect x="205" fill="#afff00"/></g>
<g transform="translate(990,91)"><rect x="10" fill="#00ff00"/><rect x="15" fill="#00ff00"/><rect x="20" fill="#00ff00"/><rect x="25" fill="#00ff00"/><rect x="30" fill="#00ff00"/><rect x="35" fill="#00ff00"/><rect x="40" fill="#00ff00"/><rect x="45" fill="#00ff00"/><rect x="50" fill="#00ff00"/><rect x="55" fill="#00ff00"/><rect x="60" fill="#00ff00"/><rect x="65" fill="#00ff00"/><rect x="70" fill="#00ff00"/><rect x="75" fill="#00ff00"/><rect x="80" fill="#00ff00"/><rect x="85" fill="#00ff00"/><rect x="90" fill="#00ff00"/><rect x="95" fill="#00ff00"/><rect x="100" fill="#00ff00"/><rect x="105" fill="#00ff00"/><rect x="110" fill="#00ff00"/><rect x="115" fill="#00ff00"/><rect x="120" fill="#00ff00"/><rect x="125" fill="#00ff00"/><rect x="130" fill="#00ff00"/><rect x="135" fill="#00ff00"/><rect x="140" fill="#00ff00"/><rect x="145" fill="#08ff00"/><rect x="150" fill="#14ff00"/><rect x="155" fill="#21ff00"/><rect x="160" fill="#2dff00"/><rect x="165" fill="#3aff00"/><rect x="170" fill="#47ff00"/><rect x="175" fill="#55ff00"/><rect x="180" fill="#63ff00"/><rect x="185" fill="#71ff00"/><rect x="190" fill="#80ff00"/><rect x="195" fill="#8fff00"/><rect x="200" fill="#9fff00"/><rect x="205" fill="#afff00"/><rect x="210" fill="#c0ff00"/><rect x="215" fill="#d1ff00"/><rect x="220" fill="#e3ff00"/><rect x="225" fill="#f6ff00"/><rect x="230" fill="#fff600"/><rect x="235" fill="#ffe500"/><rect x="240" fill="#ffd500"/><rect x="245" fill="#ffc700"/><rect x="250" fill="#ffbb00"/></g>
<g transform="translate(990,96)"><rect x="10" fill="#00ff03"/><rect x="15" fill="#00ff02"/><rect x="20" fill="#00ff01"/><rect x="25" fill="#00ff00"/><rect x="30" fill="#00ff00"/><rect x="35" fill="#00ff00"/><rect x="40" fill="#00ff00"/><rect x="45" fill="#00ff00"/><rect x="50" fill="#00ff00"/><rect x="55" fill="#00ff00"/><rect x="60" fill="#00ff00"/><rect x="65" fill="#00ff00"/><rect x="70" fill="#00ff00"/><rect x="75" fill="#00ff00"/><rect x="80" fill="#00ff00"/><rect x="85" fill="#00ff00"/><rect x="90" fill="#00ff00"/><rect x="95" fill="#00ff00"/><rect x="100" fill="#00ff00"/><rect x="105" fill="#00ff00"/><rect x="110" fill="#00ff00"/><rect x="115" fill="#00ff00"/><rect x="120" fill="#00ff00"/><rect x="125" fill="#00ff00"/><rect x="130" fill="#00ff00"/><rect x="135" fill="#00ff00"/><rect x="140" fill="#00ff00"/><rect x="145" fill="#07ff00"/><rect x="150" fill="#13ff00"/><rect x="155" fill="#1fff00"/><rect x="160" fill="#2cff00"/><rect x="165" fill="#39ff00"/><rect x="170" fill="#46ff00"/><rect x="175" fill="#54ff00"/><rect x="180" fill="#62ff00"/><rect x="185" fill="#71ff00"/><rect x="190" fill="#80ff00"/><rect x="195" fill="#8fff00"/><rect x="200" fill="#9fff00"/><rect x="205" fill="#b0ff00"/><rect x="210" fill="#c1ff00"/><rect x="215" fill="#d2ff00"/><rect x="220" fill="#e5ff00"/><rect x="225" fill="#f7ff00"/><rect x="230" fill="#fff400"/><rect x="235" fill="#ffe300"/><rect x="240" fill="#ffd300"/><rect x="245" fill="#ffc500"/><rect x="250" fill="#ffb900"/><rect x="255" fill="#ffad00"/><rect x="260" fill="#ffa300"/><rect x="265" fill="#ff9900"/><rect x="270" fill="#ff9000"/><rect x="275" fill="#ff8800"/><rect x="280" fill="#ff8100"/><rect x="285" fill="#ff7a00"/><rect x="290" fill="#ff7300"/><rect x="295" fill="#ff6d00"/></g>
<g transform="translate(990,101)"><rect x="10" fill="#00ff0b"/><rect x="15" fill="#00ff0a"/><rect x="20" fill="#00ff0a"/><rect x="25" fill="#00ff09"/><rect x="30" fill="#00ff08"/><rect x="35" fill="#00ff07"/><rect x="40" fill="#00ff07"/><rect x="45" fill="#00ff06"/><rect x="50" fill="#00ff05"/><rect x="55" fill="#00ff04"/><rect x="60" fill="#00ff04"/><rect x="65" fill="#00ff03"/><rect x="70" fill="#00ff02"/><rect x="75" fill="#00ff01"/><rect x="80" fill="#00ff00"/><rect x="85" fill="#00ff00"/><rect x="90" fill="#00ff00"/><rect x="95" fill="#00ff00"/><rect x="100" fill="#00ff00"/><rect x="105" fill="#00ff00"/><rect x="110" fill="#00ff00"/><rect x="115" fill="#00ff00"/><rect x="120" fill="#00ff00"/><rect x="125" fill="#00ff00"/><rect x="130" fill="#00ff00"/><rect x="135" fill="#00ff00"/><rect x="140" fill="#00ff00"/><rect x="145" fill="#05ff00"/><rect x="150" fill="#11ff00"/><rect x="155" fill="#1dff00"/><rect x="160" fill="#2aff00"/><rect x="165" fill="#37ff00"/><rect x="170" fill="#45ff00"/><rect x="175" fill="#53ff00"/><rect x="180" fill="#61ff00"/><rect x="185" fill="#70ff00"/><rect x="190" fill="#7fff00"/><rect x="195" fill="#8fff00"/><rect x="200" fill="#9fff00"/><rect x="205" fill="#b0ff00"/><rect x="210" fill="#c2ff00"/><rect x="215" fill="#d3ff00"/><rect x="220" fill="#e6ff00"/><rect x="225" fill="#f9ff00"/><rect x="230" fill="#fff200"/><rect x="235" fill="#ffe100"/><rect x="240" fill="#ffd100"/><rect x="245" fill="#ffc400"/><rect x="250" fill="#ffb700"/><rect x="255" fill="#ffab00"/><rect x="260" fill="#ffa100"/><rect x="265" fill="#ff9700"/><rect x="270" fill="#ff8f00"/><rect x="275" fill="#ff8600"/><rect x="280" fill="#ff7f00"/><rect x="285" fill="#ff7800"/><rect x="290" fill="#ff7100"/><rect x="295" fill="#ff6b00"/><rect x="300" fill="#ff6500"/><rect x="305" fill="#ff6000"/><rect x="310" fill="#ff5b00"/><rect x="315" fill="#ff5600"/><rect x="320" fill="#ff5200"/><rect x="325" fill="#ff4d00"/><rect x="330" fill="#ff4900"/><rect x="335" fill="#ff4500"/></g>
<g transform="translate(990,106)"><rect x="10" fill="#00ff13"/><rect x="15" fill="#00ff13"/><rect x="20" fill="#00ff12"/><rect x="25" fill="#00ff11"/><rect x="30" fill="#00ff11"/><rect x="35" fill="#00ff10"/><rect x="40" fill="#00ff0f"/><rect x="45" fill="#00ff0f"/><rect x="50" fill="#00ff0e"/><rect x="55" fill="#00ff0d"/><rect x="60" fill="#00ff0d"/><rect x="65" fill="#00ff0c"/><rect x="70" fill="#00ff0b"/><rect x="75" fill="#00ff0b"/><rect x="80" fill="#00ff0a"/><rect x="85" fill="#00ff09"/><rect x="90" fill="#00ff08"/><rect x="95" fill="#00ff07"/><rect x="100" fill="#00ff07"/><rect x="105" fill="#00ff06"/><rect x="110" fill="#00ff05"/><rect x="115" fill="#00ff04"/><rect x="120" fill="#00ff03"/><rect x="125" fill="#00ff02"/><rect x="130" fill="#00ff01"/><rect x="135" fill="#00ff00"/><rect x="140" fill="#00ff00"/><rect x="145" fill="#03ff00"/><rect x="150" fill="#0fff00"/><rect x="155" fill="#1cff00"/><rect x="160" fill="#29ff00"/><rect x="165" fill="#36ff00"/><rect x="170" fill="#44ff00"/><rect x="175" fill="#52ff00"/><rect x="180" fill="#61ff00"/><rect x="185" fill="#70ff00"/><rect x="190" fill="#7fff00"/><rect x="195" fill="#8fff00"/><rect x="200" fill="#a0ff00"/><rect x="205" fill="#b1ff00"/><rect x="210" fill="#c2ff00"/><rect x="215" fill="#d4ff00"/><rect x="220" fill="#e7ff00"/><rect x="225" fill="#fbff00"/><rect x="230" fill="#fff000"/><rect x="235" fill="#ffdf00"/><rect x="240" fill="#ffcf00"/><rect x="245" fill="#ffc200"/><rect x="250" fill="#ffb500"/><rect x="255" fill="#ffaa00"/><rect x="260" fill="#ff9f00"/><rect x="265" fill="#ff9500"/><rect x="270" fill="#ff8d00"/><rect x="275" fill="#ff8400"/><rect x="280" fill="#ff7d00"/><rect x="285" fill="#ff7600"/><rect x="290" fill="#ff6f00"/><rect x="295" fill="#ff6900"/><rect x="300" fill="#ff6300"/><rect x="305" fill="#ff5e00"/><rect x="310" fill="#ff5900"/><rect x="315" fill="#ff5400"/><rect x="320" fill="#ff5000"/><rect x="325" fill="#ff4c00"/><rect x="330" fill="#ff4800"/><rect x="335" fill="#ff4400"/><rect x="340" fill="#ff4000"/><rect x="345" fill="#ff3d00"/><rect x="350" fill="#ff3a00"/><rect x="355" fill="#ff3600"/><rect x="360" fill="#ff3300"/><rect x="365" fill="#ff3100"/><rect x="370" fill="#ff2e00"/><rect x="375" fill="#ff2b00"/><rect x="380" fill="#ff2900"/></g>
<g transform="translate(990,111)"><rect x="10" fill="#00ff1c"/><rect x="15" fill="#00ff1b"/><rect x="20" fill="#00ff1b"/><rect x="25" fill="#00ff1a"/><rect x="30" fill="#00ff1a"/><rect x="35" fill="#00ff19"/><rect x="40" fill="#00ff18"/><rect x="45" fill="#00ff18"/><rect x="50" fill="#00ff17"/><rect x="55" fill="#00ff17"/><rect x="60" fill="#00ff16"/><rect x="65" fill="#00ff15"/><rect x="70" fill="#00ff15"/><rect x="75" fill="#00ff14"/><rect x="80" fill="#00ff14"/><rect x="85" fill="#00ff13"/><rect x="90" fill="#00ff12"/><rect x="95" fill="#00ff11"/><rect x="100" fill="#00ff11"/><rect x="105" fill="#00ff10"/><rect x="110" fill="#00ff0f"/><rect x="115" fill="#00ff0e"/><rect x="120" fill="#00ff0e"/><rect x="125" fill="#00ff0d"/><rect x="130" fill="#00ff0c"/><rect x="135" fill="#00ff0b"/><rect x="140" fill="#00ff0a"/><rect x="145" fill="#01ff09"/><rect x="150" fill="#0dff08"/><rect x="155" fill="#1aff07"/><rect x="160" fill="#27ff06"/><rect x="165" fill="#35ff05"/><rect x="170" fill="#43ff04"/><rect x="175" fill="#51ff03"/><rect x="180" fill="#60ff02"/><rect x="185" fill="#6fff01"/><rect x="190" fill="#7fff00"/><rect x="195" fill="#8fff00"/><rect x="200" fill="#a0ff00"/><rect x="205" fill="#b1ff00"/><rect x="210" fill="#c3ff00"/><rect x="215" fill="#d6ff00"/><rect x="220" fill="#e9ff00"/><rect x="225" fill="#fdff00"/><rect x="230" fill="#ffee00"/><rect x="235" fill="#ffdd00"/><rect x="240" fill="#ffcd00"/><rect x="245" fill="#ffbf00"/><rect x="250" fill="#ffb300"/><rect x="255" fill="#ffa700"/><rect x="260" fill="#ff9d00"/><rect x="265" fill="#ff9300"/><rect x="270" fill="#ff8b00"/><rect x="275" fill="#ff8300"/><rect x="280" fill="#ff7b00"/><rect x="285" fill="#ff7400"/><rect x="290" fill="#ff6d00"/><rect x="295" fill="#ff6700"/><rect x="300" fill="#ff6200"/><rect x="305" fill="#ff5c00"/><rect x="310" fill="#ff5700"/><rect x="315" fill="#ff5300"/><rect x="320" fill="#ff4e00"/><rect x="325" fill="#ff4a00"/><rect x="330" fill="#ff4600"/><rect x="335" fill="#ff4200"/><rect x="340" fill="#ff3f00"/><rect x="345" fill="#ff3b00"/><rect x="350" fill="#ff3800"/><rect x="355" fill="#ff3500"/><rect x="360" fill="#ff3200"/><rect x="365" fill="#ff2f00"/><rect x="370" fill="#ff2d00"/><rect x="375" fill="#ff2a00"/><rect x="380" fill="#ff2700"/><rect x="385" fill="#ff2500"/><rect x="390" fill="#ff2300"/><rect x="395" fill="#ff2100"/><rect x="400" fill="#ff1f00"/><rect x="405" fill="#ff1d00"/><rect x="410" fill="#ff1b00"/><rect x="415" fill="#ff1900"/><rect x="420" fill="#ff1700"/><rect x="425" fill="#ff1500"/></g>
<g transform="translate(990,116)"><rect x="10" fill="#00ff24"/><rect x="15" fill="#00ff24"/><rect x="20" fill="#00ff23"/><rect x="25" fill="#00ff23"/><rect x="30" fill="#00ff23"/><rect x="35" fill="#00ff22"/><rect x="40" fill="#00ff22"/><rect x="45" fill="#00ff21"/><rect x="50" fill="#00ff21"/><rect x="55" fill="#00ff20"/><rect x="60" fill="#00ff20"/><rect x="65" fill="#00ff1f"/><rect x="70" fill="#00ff1f"/><rect x="75" fill="#00ff1e"/><rect x="80" fill="#00ff1e"/><rect x="85" fill="#00ff1d"/><rect x="90" fill="#00ff1c"/><rect x="95" fill="#00ff1c"/><rect x="100" fill="#00ff1b"/><rect x="105" fill="#00ff1b"/><rect x="110" fill="#00ff1a"/><rect x="115" fill="#00ff19"/><rect x="120" fill="#00ff19"/><rect x="125" fill="#00ff18"/><rect x="130" fill="#00ff17"/><rect x="135" fill="#00ff16"/><rect x="140" fill="#00ff16"/><rect x="145" fill="#00ff15"/><rect x="150" fill="#0cff14"/><rect x="155" fill="#19ff13"/><rect x="160" fill="#26ff12"/><rect x="165" fill="#34ff12"/><rect x="170" fill="#42ff11"/><rect x="175" fill="#50ff10"/><rect x="180" fill="#5fff0f"/><rect x="185" fill="#6fff0e"/><rect x="190" fill="#7fff0d"/><rect x="195" fill="#8fff0c"/><rect x="200" fill="#a0ff0b"/><rect x="205" fill="#b2ff09"/><rect x="210" fill="#c4ff08"/><rect x="215" fill="#d7ff07"/><rect x="220" fill="#eaff06"/><rect x="225" fill="#ffff05"/><rect x="230" fill="#ffec03"/><rect x="235" fill="#ffdb02"/><rect x="240" fill="#ffcb00"/><rect x="245" fill="#ffbd00"/><rect x="250" fill="#ffb100"/><rect x="255" fill="#ffa500"/><rect x="260" fill="#ff9b00"/><rect x="265" fill="#ff9100"/><rect x="270" fill="#ff8900"/><rect x="275" fill="#ff8100"/><rect x="280" fill="#ff7900"/><rect x="285" fill="#ff7200"/><rect x="290" fill="#ff6c00"/><rect x="295" fill="#ff6600"/><rect x="300" fill="#ff6000"/><rect x="305" fill="#ff5b00"/><rect x="310" fill="#ff5600"/><rect x="315" fill="#ff5100"/><rect x="320" fill="#ff4c00"/><rect x="325" fill="#ff4800"/><rect x="330" fill="#ff4400"/><rect x="335" fill="#ff4100"/><rect x="340" fill="#ff3d00"/><rect x="345" fill="#ff3a00"/><rect x="350" fill="#ff3600"/><rect x="355" fill="#ff3300"/><rect x="360" fill="#ff3100"/><rect x="365" fill="#ff2e00"/><rect x="370" fill="#ff2b00"/><rect x="375" fill="#ff2900"/><rect x="380" fill="#ff2600"/><rect x="385" fill="#ff2400"/><rect x="390" fill="#ff2200"/><rect x="395" fill="#ff1f00"/><rect x="400" fill="#ff1d00"/><rect x="405" fill="#ff1b00"/><rect x="410" fill="#ff1900"/><rect x="415" fill="#ff1800"/><rect x="420" fill="#ff1600"/><rect x="425" fill="#ff1400"/><rect x="430" fill="#ff1200"/><rect x="435" fill="#ff1100"/><rect x="440" fill="#ff0f00"/><rect x="445" fill="#ff0e00"/><rect x="450" fill="#ff0c00"/><rect x="455" fill="#ff0b00"/><rect x="460" fill="#ff0a00"/><rect x="465" fill="#ff0800"/><rect x="470" fill="#ff0700"/></g>
<g transform="translate(990,121)"><rect x="10" fill="#00ff2d"/><rect x="15" fill="#00ff2d"/><rect x="20" fill="#00ff2c"/><rect x="25" fill="#00ff2c"/><rect x="30" fill="#00ff2c"/><rect x="35" fill="#00ff2b"/><rect x="40" fill="#00ff2b"/><rect x="45" fill="#00ff2b"/><rect x="50" fill="#00ff2a"/><rect x="55" fill="#00ff2a"/><rect x="60" fill="#00ff29"/><rect x="65" fill="#00ff29"/><rect x="70" fill="#00ff29"/><rect x="75" fill="#00ff28"/><rect x="80" fill="#00ff28"/><rect x="85" fill="#00ff27"/><rect x="90" fill="#00ff27"/><rect x="95" fill="#00ff26"/><rect x="100" fill="#00ff26"/><rect x="105" fill="#00ff25"/><rect x="110" fill="#00ff25"/><rect x="115" fill="#00ff24"/><rect x="120" fill="#00ff24"/><rect x="125" fill="#00ff23"/><rect x="130" fill="#00ff23"/><rect x="135" fill="#00ff22"/><rect x="140" fill="#00ff21"/><rect x="145" fill="#00ff21"/><rect x="150" fill="#0aff20"/><rect x="155" fill="#17ff20"/><rect x="160" fill="#24ff1f"/><rect x="165" fill="#32ff1e"/><rect x="170" fill="#40ff1d"/><rect x="175" fill="#4fff1d"/><rect x="180" fill="#5eff1c"/><rect x="185" fill="#6eff1b"/><rect x="190" fill="#7eff1a"/><rect x="195" fill="#8fff1a"/><rect x="200" fill="#a0ff19"/><rect x="205" fill="#b2ff18"/><rect x="210" fill="#c5ff17"/><rect x="215" fill="#d8ff16"/><rect x="220" fill="#ecff15"/><rect x="225" fill="#fffe14"/><rect x="230" fill="#ffea11"/><rect x="235" fill="#ffd90f"/><rect x="240" fill="#ffc90d"/><rect x="245" fill="#ffbb0b"/><rect x="250" fill="#ffaf0a"/><rect x="255" fill="#ffa308"/><rect x="260" fill="#ff9907"/><rect x="265" fill="#ff8f06"/><rect x="270" fill="#ff8704"/><rect x="275" fill="#ff7f03"/><rect x="280" fill="#ff7702"/><rect x="285" fill="#ff7002"/><rect x="290" fill="#ff6a01"/><rect x="295" fill="#ff6400"/><rect x="300" fill="#ff5e00"/><rect x="305" fill="#ff5900"/><rect x="310" fill="#ff5400"/><rect x="315" fill="#ff4f00"/><rect x="320" fill="#ff4b00"/><rect x="325" fill="#ff4700"/><rect x="330" fill="#ff4300"/><rect x="335" fill="#ff3f00"/><rect x="340" fill="#ff3b00"/><rect x="345" fill="#ff3800"/><rect x="350" fill="#ff3500"/><rect x="355" fill="#ff3200"/><rect x="360" fill="#ff2f00"/><rect x="365" fill="#ff2c00"/><rect x="370" fill="#ff2a00"/><rect x="375" fill="#ff2700"/><rect x="380" fill="#ff2500"/><rect x="385" fill="#ff2200"/><rect x="390" fill="#ff2000"/><rect x="395" fill="#ff1e00"/><rect x="400" fill="#ff1c00"/><rect x="405" fill="#ff1a00"/><rect x="410" fill="#ff1800"/><rect x="415" fill="#ff1600"/><rect x="420" fill="#ff1500"/><rect x="425" fill="#ff1300"/><rect x="430" fill="#ff1100"/><rect x="435" fill="#ff1000"/><rect x="440" fill="#ff0e00"/><rect x="445" fill="#ff0d00"/><rect x="450" fill="#ff0b00"/><rect x="455" fill="#ff0a00"/><rect x="460" fill="#ff0900"/><rect x="465" fill="#ff0700"/><rect x="470" fill="#ff0600"/><rect x="475" fill="#ff0500"/><rect x="480" fill="#ff0400"/><rect x="485" fill="#ff0300"/><rect x="490" fill="#ff0100"/><rect x="495" fill="#ff0000"/><rect x="500" fill="#ff0000"/><rect x="505" fill="#ff0000"/><rect x="510" fill="#ff0000"/><rect x="515" fill="#ff0000"/></g>
<g transform="translate(990,126)"><rect x="10" fill="#00ff36"/><rect x="15" fill="#00ff36"/><rect x="20" fill="#00ff36"/><rect x="25" fill="#00ff35"/><rect x="30" fill="#00ff35"/><rect x="35" fill="#00ff35"/><rect x="40" fill="#00ff35"/><rect x="45" fill="#00ff34"/><rect x="50" fill="#00ff34"/><rect x="55" fill="#00ff34"/><rect x="60" fill="#00ff33"/><rect x="65" fill="#00ff33"/><rect x="70" fill="#00ff33"/><rect x="75" fill="#00ff32"/><rect x="80" fill="#00ff32"/><rect x="85" fill="#00ff32"/><rect x="90" fill="#00ff32"/><rect x="95" fill="#00ff31"/><rect x="100" fill="#00ff31"/><rect x="105" fill="#00ff30"/><rect x="110" fill="#00ff30"/><rect x="115" fill="#00ff30"/><rect x="120" fill="#00ff2f"/><rect x="125" fill="#00ff2f"/><rect x="130" fill="#00ff2e"/><rect x="135" fill="#00ff2e"/><rect x="140" fill="#00ff2e"/><rect x="145" fill="#00ff2d"/><rect x="150" fill="#08ff2d"/><rect x="155" fill="#15ff2c"/><rect x="160" fill="#23ff2c"/><rect x="165" fill="#31ff2b"/><rect x="170" fill="#3fff2b"/><rect x="175" fill="#4eff2a"/><rect x="180" fill="#5eff2a"/><rect x="185" fill="#6dff29"/><rect x="190" fill="#7eff28"/><rect x="195" fill="#8fff28"/><rect x="200" fill="#a1ff27"/><rect x="205" fill="#b3ff26"/><rect x="210" fill="#c6ff26"/><rect x="215" fill="#d9ff25"/><rect x="220" fill="#edff24"/><rect x="225" fill="#fffc23"/><rect x="230" fill="#ffe820"/><rect x="235" fill="#ffd71d"/><rect x="240" fill="#ffc71a"/><rect x="245" fill="#ffb917"/><rect x="250" fill="#ffad15"/><rect x="255" fill="#ffa113"/><rect x="260" fill="#ff9711"/><rect x="265" fill="#ff8d10"/><rect x="270" fill="#ff850e"/><rect x="275" fill="#ff7d0d"/><rect x="280" fill="#ff750b"/><rect x="285" fill="#ff6e0a"/><rect x="290" fill="#ff6809"/><rect x="295" fill="#ff6208"/><rect x="300" fill="#ff5c07"/><rect x="305" fill="#ff5706"/><rect x="310" fill="#ff5205"/><rect x="315" fill="#ff4d04"/><rect x="320" fill="#ff4904"/><rect x="325" fill="#ff4503"/><rect x="330" fill="#ff4102"/><rect x="335" fill="#ff3d02"/><rect x="340" fill="#ff3a01"/><rect x="345" fill="#ff3700"/><rect x="350" fill="#ff3300"/><rect x="355" fill="#ff3000"/><rect x="360" fill="#ff2d00"/><rect x="365" fill="#ff2b00"/><rect x="370" fill="#ff2800"/><rect x="375" fill="#ff2600"/><rect x="380" fill="#ff2300"/><rect x="385" fill="#ff2100"/><rect x="390" fill="#ff1f00"/><rect x="395" fill="#ff1d00"/><rect x="400" fill="#ff1b00"/><rect x="405" fill="#ff1900"/><rect x="410" fill="#ff1700"/><rect x="415" fill="#ff1500"/><rect x="420" fill="#ff1300"/><rect x="425" fill="#ff1200"/><rect x="430" fill="#ff1000"/><rect x="435" fill="#ff0e00"/><rect x="440" fill="#ff0d00"/><rect x="445" fill="#ff0c00"/><rect x="450" fill="#ff0a00"/><rect x="455" fill="#ff0900"/><rect x="460" fill="#ff0700"/><rect x="465" fill="#ff0600"/><rect x="470" fill="#ff0500"/><rect x="475" fill="#ff0400"/><rect x="480" fill="#ff0300"/><rect x="485" fill="#ff0100"/><rect x="490" fill="#ff0000"/><rect x="495" fill="#ff0000"/><rect x="500" fill="#ff0000"/><rect x="505" fill="#ff0000"/><rect x="510" fill="#ff0000"/><rect x="515" fill="#ff0000"/><rect x="520" fill="#ff0000"/><rect x="525" fill="#ff0000"/><rect x="530" fill="#ff0000"/><rect x="535" fill="#ff0000"/><rect x="540" fill="#ff0000"/><rect x="545" fill="#ff0000"/><rect x="550" fill="#ff0000"/><rect x="555" fill="#ff0000"/></g>
<g transform="translate(990,131)"><rect x="10" fill="#00ff3f"/><rect x="15" fill="#00ff3f"/><rect x="20" fill="#00ff3f"/><rect x="25" fill="#00ff3f"/><rect x="30" fill="#00ff3f"/><rect x="35" fill="#00ff3e"/><rect x="40" fill="#00ff3e"/><rect x="45" fill="#00ff3e"/><rect x="50" fill="#00ff3e"/><rect x="55" fill="#00ff3e"/><rect x="60" fill="#00ff3e"/><rect x="65" fill="#00ff3d"/><rect x="70" fill="#00ff3d"/><rect x="75" fill="#00ff3d"/><rect x="80" fill="#00ff3d"/><rect x="85" fill="#00ff3d"/><rect x="90" fill="#00ff3c"/><rect x="95" fill="#00ff3c"/><rect x="100" fill="#00ff3c"/><rect x="105" fill="#00ff3c"/><rect x="110" fill="#00ff3c"/><rect x="115" fill="#00ff3b"/><rect x="120" fill="#00ff3b"/><rect x="125" fill="#00ff3b"/><rect x="130" fill="#00ff3b"/><rect x="135" fill="#00ff3a"/><rect x="140" fill="#00ff3a"/><rect x="145" fill="#00ff3a"/><rect x="150" fill="#06ff3a"/><rect x="155" fill="#13ff39"/><rect x="160" fill="#21ff39"/><rect x="165" fill="#2fff39"/><rect x="170" fill="#3eff38"/><rect x="175" fill="#4dff38"/><rect x="180" fill="#5dff38"/><rect x="185" fill="#6dff37"/><rect x="190" fill="#7eff37"/><rect x="195" fill="#8fff37"/><rect x="200" fill="#a1ff36"/><rect x="205" fill="#b3ff36"/><rect x="210" fill="#c7ff35"/><rect x="215" fill="#daff35"/><rect x="220" fill="#efff34"/><rect x="225" fill="#fffa33"/><rect x="230" fill="#ffe62e"/><rect x="235" fill="#ffd42a"/><rect x="240" fill="#ffc527"/><rect x="245" fill="#ffb724"/><rect x="250" fill="#ffaa21"/><rect x="255" fill="#ff9f1e"/><rect x="260" fill="#ff951c"/><rect x="265" fill="#ff8b1a"/><rect x="270" fill="#ff8318"/><rect x="275" fill="#ff7b16"/><rect x="280" fill="#ff7314"/><rect x="285" fill="#ff6c13"/><rect x="290" fill="#ff6611"/><rect x="295" fill="#ff6010"/><rect x="300" fill="#ff5a0f"/><rect x="305" fill="#ff550e"/><rect x="310" fill="#ff500d"/><rect x="315" fill="#ff4c0c"/><rect x="320" fill="#ff470b"/><rect x="325" fill="#ff430a"/><rect x="330" fill="#ff3f09"/><rect x="335" fill="#ff3c08"/><rect x="340" fill="#ff3807"/><rect x="345" fill="#ff3506"/><rect x="350" fill="#ff3206"/><rect x="355" fill="#ff2f05"/><rect x="360" fill="#ff2c04"/><rect x="365" fill="#ff2904"/><rect x="370" fill="#ff2703"/><rect x="375" fill="#ff2403"/><rect x="380" fill="#ff2202"/><rect x="385" fill="#ff2002"/><rect x="390" fill="#ff1d01"/><rect x="395" fill="#ff1b01"/><rect x="400" fill="#ff1900"/><rect x="405" fill="#ff1700"/><rect x="410" fill="#ff1600"/><rect x="415" fill="#ff1400"/><rect x="420" fill="#ff1200"/><rect x="425" fill="#ff1000"/><rect x="430" fill="#ff0f00"/><rect x="435" fill="#ff0d00"/><rect x="440" fill="#ff0c00"/><rect x="445" fill="#ff0a00"/><rect x="450" fill="#ff0900"/><rect x="455" fill="#ff0800"/><rect x="460" fill="#ff0600"/><rect x="465" fill="#ff0500"/><rect x="470" fill="#ff0400"/><rect x="475" fill="#ff0300"/><rect x="480" fill="#ff0200"/><rect x="485" fill="#ff0000"/><rect x="490" fill="#ff0000"/><rect x="495" fill="#ff0000"/><rect x="500" fill="#ff0000"/><rect x="505" fill="#ff0000"/><rect x="510" fill="#ff0000"/><rect x="515" fill="#ff0000"/><rect x="520" fill="#ff0000"/><rect x="525" fill="#ff0000"/><rect x="530" fill="#ff0000"/><rect x="535" fill="#ff0000"/><rect x="540" fill="#ff0000"/><rect x="545" fill="#ff0000"/><rect x="550" fill="#ff0000"/><rect x="555" fill="#ff0000"/><rect x="560" fill="#ff0000"/><rect x="565" fill="#ff0000"/><rect x="570" fill="#ff0000"/><rect x="575" fill="#ff0000"/><rect x="580" fill="#ff0000"/><rect x="585" fill="#ff0000"/><rect x="590" fill="#ff0000"/><rect x="595" fill="#ff0000"/><rect x="600" fill="#ff0000"/></g>
<g transform="translate(990,136)"><rect x="10" fill="#00ff49"/><rect x="15" fill="#00ff49"/><rect x="20" fill="#00ff49"/><rect x="25" fill="#00ff48"/><rect x="30" fill="#00ff48"/><rect x="35" fill="#00ff48"/><rect x="40" fill="#00ff48"/><rect x="45" fill="#00ff48"/><rect x="50" fill="#00ff48"/><rect x="55" fill="#00ff48"/><rect x="60" fill="#00ff48"/><rect x="65" fill="#00ff48"/><rect x="70" fill="#00ff48"/><rect x="75" fill="#00ff48"/><rect x="80" fill="#00ff48"/><rect x="85" fill="#00ff48"/><rect x="90" fill="#00ff48"/><rect x="95" fill="#00ff48"/><rect x="100" fill="#00ff48"/><rect x="105" fill="#00ff48"/><rect x="110" fill="#00ff47"/><rect x="115" fill="#00ff47"/><rect x="120" fill="#00ff47"/><rect x="125" fill="#00ff47"/><rect x="130" fill="#00ff47"/><rect x="135" fill="#00ff47"/><rect x="140" fill="#00ff47"/><rect x="145" fill="#00ff47"/><rect x="150" fill="#04ff47"/><rect x="155" fill="#11ff47"/><rect x="160" fill="#1fff47"/><rect x="165" fill="#2eff46"/><rect x="170" fill="#3dff46"/><rect x="175" fill="#4cff46"/><rect x="180" fill="#5cff46"/><rect x="185" fill="#6cff46"/><rect x="190" fill="#7dff46"/><rect x="195" fill="#8fff46"/><rect x="200" fill="#a1ff46"/><rect x="205" fill="#b4ff46"/><rect x="210" fill="#c8ff45"/><rect x="215" fill="#dcff45"/><rect x="220" fill="#f1ff45"/><rect x="225" fill="#fff743"/><rect x="230" fill="#ffe43d"/><rect x="235" fill="#ffd239"/><rect x="240" fill="#ffc334"/><rect x="245" fill="#ffb530"/><rect x="250" fill="#ffa82d"/><rect x="255" fill="#ff9d2a"/><rect x="260" fill="#ff9327"/><rect x="265" fill="#ff8924"/><rect x="270" fill="#ff8022"/><rect x="275" fill="#ff7820"/><rect x="280" fill="#ff711e"/><rect x="285" fill="#ff6a1c"/><rect x="290" fill="#ff641a"/><rect x="295" fill="#ff5e18"/><rect x="300" fill="#ff5817"/><rect x="305" fill="#ff5315"/><rect x="310" fill="#ff4e14"/><rect x="315" fill="#ff4a13"/><rect x="320" fill="#ff4512"/><rect x="325" fill="#ff4110"/><rect x="330" fill="#ff3e0f"/><rect x="335" fill="#ff3a0e"/><rect x="340" fill="#ff370d"/><rect x="345" fill="#ff330c"/><rect x="350" fill="#ff300c"/><rect x="355" fill="#ff2d0b"/><rect x="360" fill="#ff2a0a"/><rect x="365" fill="#ff2809"/><rect x="370" fill="#ff2509"/><rect x="375" fill="#ff2308"/><rect x="380" fill="#ff2007"/><rect x="385" fill="#ff1e07"/><rect x="390" fill="#ff1c06"/><rect x="395" fill="#ff1a05"/><rect x="400" fill="#ff1805"/><rect x="405" fill="#ff1604"/><rect x="410" fill="#ff1404"/><rect x="415" fill="#ff1203"/><rect x="420" fill="#ff1103"/><rect x="425" fill="#ff0f02"/><rect x="430" fill="#ff0e02"/><rect x="435" fill="#ff0c02"/><rect x="440" fill="#ff0b01"/><rect x="445" fill="#ff0901"/><rect x="450" fill="#ff0800"/><rect x="455" fill="#ff0600"/><rect x="460" fill="#ff0500"/><rect x="465" fill="#ff0400"/><rect x="470" fill="#ff0300"/><rect x="475" fill="#ff0200"/><rect x="480" fill="#ff0000"/><rect x="485" fill="#ff0000"/><rect x="490" fill="#ff0000"/><rect x="495" fill="#ff0000"/><rect x="500" fill="#ff0000"/><rect x="505" fill="#ff0000"/><rect x="510" fill="#ff0000"/><rect x="515" fill="#ff0000"/><rect x="520" fill="#ff0000"/><rect x="525" fill="#ff0000"/><rect x="530" fill="#ff0000"/><rect x="535" fill="#ff0000"/><rect x="540" fill="#ff0000"/><rect x="545" fill="#ff0000"/><rect x="550" fill="#ff0000"/><rect x="555" fill="#ff0000"/><rect x="560" fill="#ff0000"/><rect x="565" fill="#ff0000"/><rect x="570" fill="#ff0000"/><rect x="575" fill="#ff0000"/><rect x="580" fill="#ff0000"/><rect x="585" fill="#ff0000"/><rect x="590" fill="#ff0000"/><rect x="595" fill="#ff0000"/><rect x="600" fill="#ff0000"/><rect x="605" fill="#ff0000"/><rect x="610" fill="#ff0000"/><rect x="615" fill="#ff0000"/><rect x="620" fill="#ff0000"/><rect x="625" fill="#ff0000"/><rect x="630" fill="#ff0000"/><rect x="635" fill="#ff0000"/><rect x="640" fill="#ff0000"/><rect x="645" fill="#ff0000"/></g>
<g transform="translate(990,141)"><rect x="10" fill="#00ff52"/><rect x="15" fill="#00ff52"/><rect x="20" fill="#00ff52"/><rect x="25" fill="#00ff52"/><rect x="30" fill="#00ff52"/><rect x="35" fill="#00ff52"/><rect x="40" fill="#00ff53"/><rect x="45" fill="#00ff53"/><rect x="50" fill="#00ff53"/><rect x="55" fill="#00ff53"/><rect x="60" fill="#00ff53"/><rect x="65" fill="#00ff53"/><rect x="70" fill="#00ff53"/><rect x="75" fill="#00ff53"/><rect x="80" fill="#00ff53"/><rect x="85" fill="#00ff53"/><rect x="90" fill="#00ff53"/><rect x="95" fill="#00ff53"/><rect x="100" fill="#00ff53"/><rect x="105" fill="#00ff54"/><rect x="110" fill="#00ff54"/><rect x="115" fill="#00ff54"/><rect x="120" fill="#00ff54"/><rect x="125" fill="#00ff54"/><rect x="130" fill="#00ff54"/><rect x="135" fill="#00ff54"/><rect x="140" fill="#00ff54"/><rect x="145" fill="#00ff54"/><rect x="150" fill="#02ff54"/><rect x="155" fill="#0fff55"/><rect x="160" fill="#1dff55"/><rect x="165" fill="#2cff55"/><rect x="170" fill="#3bff55"/><rect x="175" fill="#4bff55"/><rect x="180" fill="#5bff55"/><rect x="185" fill="#6cff55"/><rect x="190" fill="#7dff55"/><rect x="195" fill="#8fff56"/><rect x="200" fill="#a1ff56"/><rect x="205" fill="#b5ff56"/><rect x="210" fill="#c8ff56"/><rect x="215" fill="#ddff56"/><rect x="220" fill="#f3ff56"/><rect x="225" fill="#fff553"/><rect x="230" fill="#ffe24d"/><rect x="235" fill="#ffd047"/><rect x="240" fill="#ffc142"/><rect x="245" fill="#ffb33d"/><rect x="250" fill="#ffa639"/><rect x="255" fill="#ff9b35"/><rect x="260" fill="#ff9032"/><rect x="265" fill="#ff872f"/><rect x="270" fill="#ff7e2c"/><rect x="275" fill="#ff7629"/><rect x="280" fill="#ff6f27"/><rect x="285" fill="#ff6825"/><rect x="290" fill="#ff6223"/><rect x="295" fill="#ff5c21"/><rect x="300" fill="#ff561f"/><rect x="305" fill="#ff511d"/><rect x="310" fill="#ff4d1b"/><rect x="315" fill="#ff481a"/><rect x="320" fill="#ff4419"/><rect x="325" fill="#ff4017"/><rect x="330" fill="#ff3c16"/><rect x="335" fill="#ff3815"/><rect x="340" fill="#ff3514"/><rect x="345" fill="#ff3213"/><rect x="350" fill="#ff2f12"/><rect x="355" fill="#ff2c11"/><rect x="360" fill="#ff2910"/><rect x="365" fill="#ff260f"/><rect x="370" fill="#ff240e"/><rect x="375" fill="#ff210d"/><rect x="380" fill="#ff1f0c"/><rect x="385" fill="#ff1d0c"/><rect x="390" fill="#ff1b0b"/><rect x="395" fill="#ff190a"/><rect x="400" fill="#ff170a"/><rect x="405" fill="#ff1509"/><rect x="410" fill="#ff1308"/><rect x="415" fill="#ff1108"/><rect x="420" fill="#ff1007"/><rect x="425" fill="#ff0e07"/><rect x="430" fill="#ff0c06"/><rect x="435" fill="#ff0b06"/><rect x="440" fill="#ff0905"/><rect x="445" fill="#ff0805"/><rect x="450" fill="#ff0704"/><rect x="455" fill="#ff0504"/><rect x="460" fill="#ff0403"/><rect x="465" fill="#ff0303"/><rect x="470" fill="#ff0203"/><rect x="475" fill="#ff0002"/><rect x="480" fill="#ff0002"/><rect x="485" fill="#ff0002"/><rect x="490" fill="#ff0001"/><rect x="495" fill="#ff0001"/><rect x="500" fill="#ff0001"/><rect x="505" fill="#ff0000"/><rect x="510" fill="#ff0000"/><rect x="515" fill="#ff0000"/><rect x="520" fill="#ff0000"/><rect x="525" fill="#ff0000"/><rect x="530" fill="#ff0000"/><rect x="535" fill="#ff0000"/><rect x="540" fill="#ff0000"/><rect x="545" fill="#ff0000"/><rect x="550" fill="#ff0000"/><rect x="555" fill="#ff0000"/><rect x="560" fill="#ff0000"/><rect x="565" fill="#ff0000"/><rect x="570" fill="#ff0000"/><rect x="575" fill="#ff0000"/><rect x="580" fill="#ff0000"/><rect x="585" fill="#ff0000"/><rect x="590" fill="#ff0000"/><rect x="595" fill="#ff0000"/><rect x="600" fill="#ff0000"/><rect x="605" fill="#ff0000"/><rect x="610" fill="#ff0000"/><rect x="615" fill="#ff0000"/><rect x="620" fill="#ff0000"/><rect x="625" fill="#ff0000"/><rect x="630" fill="#ff0000"/><rect x="635" fill="#ff0000"/><rect x="640" fill="#ff0000"/><rect x="645" fill="#ff0000"/><rect x="650" fill="#ff0000"/></g>
<g transform="translate(990,146)"><rect x="10" fill="#00ff5c"/><rect x="15" fill="#00ff5c"/><rect x="20" fill="#00ff5c"/><rect x="25" fill="#00ff5c"/><rect x="30" fill="#00ff5d"/><rect x="35" fill="#00ff5d"/><rect x="40" fill="#00ff5d"/><rect x="45" fill="#00ff5d"/><rect x="50" fill="#00ff5d"/><rect x="55" fill="#00ff5e"/><rect x="60" fill="#00ff5e"/><rect x="65" fill="#00ff5e"/><rect x="70" fill="#00ff5e"/><rect x="75" fill="#00ff5e"/><rect x="80" fill="#00ff5f"/><rect x="85" fill="#00ff5f"/><rect x="90" fill="#00ff5f"/><rect x="95" fill="#00ff5f"/><rect x="100" fill="#00ff60"/><rect x="105" fill="#00ff60"/><rect x="110" fill="#00ff60"/><rect x="115" fill="#00ff60"/><rect x="120" fill="#00ff61"/><rect x="125" fill="#00ff61"/><rect x="130" fill="#00ff61"/><rect x="135" fill="#00ff61"/><rect x="140" fill="#00ff62"/><rect x="145" fill="#00ff62"/><rect x="150" fill="#00ff62"/><rect x="155" fill="#0dff63"/><rect x="160" fill="#1cff63"/><rect x="165" fill="#2aff63"/><rect x="170" fill="#3aff64"/><rect x="175" fill="#4aff64"/><rect x="180" fill="#5aff65"/><rect x="185" fill="#6bff65"/><rect x="190" fill="#7dff65"/><rect x="195" fill="#8fff66"/><rect x="200" fill="#a2ff66"/><rect x="205" fill="#b5ff67"/><rect x="210" fill="#caff67"/><rect x="215" fill="#dfff68"/><rect x="220" fill="#f5ff68"/><rect x="225" fill="#fff364"/><rect x="230" fill="#ffdf5c"/><rect x="235" fill="#ffce56"/><rect x="240" fill="#ffbe50"/><rect x="245" fill="#ffb04a"/><rect x="250" fill="#ffa445"/><rect x="255" fill="#ff9841"/><rect x="260" fill="#ff8e3d"/><rect x="265" fill="#ff8539"/><rect x="270" fill="#ff7c36"/><rect x="275" fill="#ff7433"/><rect x="280" fill="#ff6d30"/><rect x="285" fill="#ff662e"/><rect x="290" fill="#ff602b"/><rect x="295" fill="#ff5a29"/><rect x="300" fill="#ff5527"/><rect x="305" fill="#ff4f25"/><rect x="310" fill="#ff4b23"/><rect x="315" fill="#ff4621"/><rect x="320" fill="#ff4220"/><rect x="325" fill="#ff3e1e"/><rect x="330" fill="#ff3a1d"/><rect x="335" fill="#ff371b"/><rect x="340" fill="#ff331a"/><rect x="345" fill="#ff3019"/><rect x="350" fill="#ff2d18"/><rect x="355" fill="#ff2a16"/><rect x="360" fill="#ff2715"/><rect x="365" fill="#ff2514"/><rect x="370" fill="#ff2213"/><rect x="375" fill="#ff2012"/><rect x="380" fill="#ff1d12"/><rect x="385" fill="#ff1b11"/><rect x="390" fill="#ff1910"/><rect x="395" fill="#ff170f"/><rect x="400" fill="#ff150e"/><rect x="405" fill="#ff130e"/><rect x="410" fill="#ff120d"/><rect x="415" fill="#ff100c"/><rect x="420" fill="#ff0e0c"/><rect x="425" fill="#ff0d0b"/><rect x="430" fill="#ff0b0a"/><rect x="435" fill="#ff0a0a"/><rect x="440" fill="#ff0809"/><rect x="445" fill="#ff0709"/><rect x="450" fill="#ff0508"/><rect x="455" fill="#ff0408"/><rect x="460" fill="#ff0307"/><rect x="465" fill="#ff0207"/><rect x="470" fill="#ff0006"/><rect x="475" fill="#ff0006"/><rect x="480" fill="#ff0006"/><rect x="485" fill="#ff0005"/><rect x="490" fill="#ff0005"/><rect x="495" fill="#ff0004"/><rect x="500" fill="#ff0004"/><rect x="505" fill="#ff0004"/><rect x="510" fill="#ff0003"/><rect x="515" fill="#ff0003"/><rect x="520" fill="#ff0003"/><rect x="525" fill="#ff0002"/><rect x="530" fill="#ff0002"/><rect x="535" fill="#ff0002"/><rect x="540" fill="#ff0001"/><rect x="545" fill="#ff0001"/><rect x="550" fill="#ff0001"/><rect x="555" fill="#ff0000"/><rect x="560" fill="#ff0000"/><rect x="565" fill="#ff0000"/><rect x="570" fill="#ff0000"/><rect x="575" fill="#ff0000"/><rect x="580" fill="#ff0000"/><rect x="585" fill="#ff0000"/><rect x="590" fill="#ff0000"/><rect x="595" fill="#ff0000"/><rect x="600" fill="#ff0000"/><rect x="605" fill="#ff0000"/><rect x="610" fill="#ff0000"/><rect x="615" fill="#ff0000"/><rect x="620" fill="#ff0000"/><rect x="625" fill="#ff0000"/><rect x="630" fill="#ff0000"/><rect x="635" fill="#ff0000"/><rect x="640" fill="#ff0000"/><rect x="645" fill="#ff0000"/><rect x="650" fill="#ff0000"/></g>
<g transform="translate(990,151)"><rect x="10" fill="#00ff66"/><rect x="15" fill="#00ff66"/><rect x="20" fill="#00ff66"/><rect x="25" fill="#00ff67"/><rect x="30" fill="#00ff67"/><rect x="35" fill="#00ff67"/><rect x="40" fill="#00ff68"/><rect x="45" fill="#00ff68"/><rect x="50" fill="#00ff68"/><rect x="55" fill="#00ff69"/><rect x="60" fill="#00ff69"/><rect x="65" fill="#00ff69"/><rect x="70" fill="#00ff6a"/><rect x="75" fill="#00ff6a"/><rect x="80" fill="#00ff6a"/><rect x="85" fill="#00ff6b"/><rect x="90" fill="#00ff6b"/><rect x="95" fill="#00ff6c"/><rect x="100" fill="#00ff6c"/><rect x="105" fill="#00ff6c"/><rect x="110" fill="#00ff6d"/><rect x="115" fill="#00ff6d"/><rect x="120" fill="#00ff6e"/><rect x="125" fill="#00ff6e"/><rect x="130" fill="#00ff6f"/><rect x="135" fill="#00ff6f"/><rect x="140" fill="#00ff70"/><rect x="145" fill="#00ff70"/><rect x="150" fill="#00ff71"/><rect x="155" fill="#0bff72"/><rect x="160" fill="#1aff72"/><rect x="165" fill="#29ff73"/><rect x="170" fill="#38ff73"/><rect x="175" fill="#48ff74"/><rect x="180" fill="#59ff75"/><rect x="185" fill="#6aff75"/><rect x="190" fill="#7cff76"/><rect x="195" fill="#8fff77"/><rect x="200" fill="#a2ff78"/><rect x="205" fill="#b6ff78"/><rect x="210" fill="#cbff79"/><rect x="215" fill="#e0ff7a"/><rect x="220" fill="#f7ff7b"/><rect x="225" fill="#fff175"/><rect x="230" fill="#ffdd6c"/><rect x="235" fill="#ffcb65"/><rect x="240" fill="#ffbc5e"/><rect x="245" fill="#ffae58"/><rect x="250" fill="#ffa152"/><rect x="255" fill="#ff964d"/><rect x="260" fill="#ff8c48"/><rect x="265" fill="#ff8344"/><rect x="270" fill="#ff7a40"/><rect x="275" fill="#ff723d"/><rect x="280" fill="#ff6b3a"/><rect x="285" fill="#ff6437"/><rect x="290" fill="#ff5e34"/><rect x="295" fill="#ff5831"/><rect x="300" fill="#ff532f"/><rect x="305" fill="#ff4e2d"/><rect x="310" fill="#ff492b"/><rect x="315" fill="#ff4429"/><rect x="320" fill="#ff4027"/><rect x="325" fill="#ff3c25"/><rect x="330" fill="#ff3823"/><rect x="335" fill="#ff3522"/><rect x="340" fill="#ff3220"/><rect x="345" fill="#ff2e1f"/><rect x="350" fill="#ff2b1e"/><rect x="355" fill="#ff281c"/><rect x="360" fill="#ff261b"/><rect x="365" fill="#ff231a"/><rect x="370" fill="#ff2119"/><rect x="375" fill="#ff1e18"/><rect x="380" fill="#ff1c17"/><rect x="385" fill="#ff1a16"/><rect x="390" fill="#ff1815"/><rect x="395" fill="#ff1614"/><rect x="400" fill="#ff1413"/><rect x="405" fill="#ff1212"/><rect x="410" fill="#ff1012"/><rect x="415" fill="#ff0f11"/><rect x="420" fill="#ff0d10"/><rect x="425" fill="#ff0b0f"/><rect x="430" fill="#ff0a0f"/><rect x="435" fill="#ff080e"/><rect x="440" fill="#ff070d"/><rect x="445" fill="#ff060d"/><rect x="450" fill="#ff040c"/><rect x="455" fill="#ff030c"/><rect x="460" fill="#ff020b"/><rect x="465" fill="#ff010b"/><rect x="470" fill="#ff000a"/><rect x="475" fill="#ff000a"/><rect x="480" fill="#ff0009"/><rect x="485" fill="#ff0009"/><rect x="490" fill="#ff0008"/><rect x="495" fill="#ff0008"/><rect x="500" fill="#ff0007"/><rect x="505" fill="#ff0007"/><rect x="510" fill="#ff0007"/><rect x="515" fill="#ff0006"/><rect x="520" fill="#ff0006"/><rect x="525" fill="#ff0005"/><rect x="530" fill="#ff0005"/><rect x="535" fill="#ff0005"/><rect x="540" fill="#ff0004"/><rect x="545" fill="#ff0004"/><rect x="550" fill="#ff0004"/><rect x="555" fill="#ff0003"/><rect x="560" fill="#ff0003"/><rect x="565" fill="#ff0003"/><rect x="570" fill="#ff0002"/><rect x="575" fill="#ff0002"/><rect x="580" fill="#ff0002"/><rect x="585" fill="#ff0002"/><rect x="590" fill="#ff0001"/><rect x="595" fill="#ff0001"/><rect x="600" fill="#ff0001"/><rect x="605" fill="#ff0001"/><rect x="610" fill="#ff0000"/><rect x="615" fill="#ff0000"/><rect x="620" fill="#ff0000"/><rect x="625" fill="#ff0000"/><rect x="630" fill="#ff0000"/><rect x="635" fill="#ff0000"/><rect x="640" fill="#ff0000"/><rect x="645" fill="#ff0000"/><rect x="650" fill="#ff0000"/></g>
<g transform="translate(990,156)"><rect x="10" fill="#00ff70"/><rect x="15" fill="#00ff71"/><rect x="20" fill="#00ff71"/><rect x="25" fill="#00ff71"/><rect x="30" fill="#00ff72"/><rect x="35" fill="#00ff72"/><rect x="40" fill="#00ff73"/><rect x="45" fill="#00ff73"/><rect x="50" fill="#00ff74"/><rect x="55" fill="#00ff74"/><rect x="60" fill="#00ff74"/><rect x="65" fill="#00ff75"/><rect x="70" fill="#00ff75"/><rect x="75" fill="#00ff76"/><rect x="80" fill="#00ff77"/><rect x="85" fill="#00ff77"/><rect x="90" fill="#00ff78"/><rect x="95" fill="#00ff78"/><rect x="100" fill="#00ff79"/><rect x="105" fill="#00ff79"/><rect x="110" fill="#00ff7a"/><rect x="115" fill="#00ff7b"/><rect x="120" fill="#00ff7b"/><rect x="125" fill="#00ff7c"/><rect x="130" fill="#00ff7d"/><rect x="135" fill="#00ff7e"/><rect x="140" fill="#00ff7e"/><rect x="145" fill="#00ff7f"/><rect x="150" fill="#00ff80"/><rect x="155" fill="#09ff81"/><rect x="160" fill="#18ff82"/><rect x="165" fill="#27ff82"/><rect x="170" fill="#37ff83"/><rect x="175" fill="#47ff84"/><rect x="180" fill="#58ff85"/><rect x="185" fill="#6aff86"/><rect x="190" fill="#7cff87"/><rect x="195" fill="#8fff88"/><rect x="200" fill="#a2ff8a"/><rect x="205" fill="#b7ff8b"/><rect x="210" fill="#ccff8c"/><rect x="215" fill="#e2ff8d"/><rect x="220" fill="#f9ff8f"/><rect x="225" fill="#ffef87"/><rect x="230" fill="#ffdb7d"/><rect x="235" fill="#ffc974"/><rect x="240" fill="#ffba6c"/><rect x="245" fill="#ffac65"/><rect x="250" fill="#ff9f5f"/><rect x="255" fill="#ff9459"/><rect x="260" fill="#ff8a54"/><rect x="265" fill="#ff804f"/><rect x="270" fill="#ff784b"/><rect x="275" fill="#ff7047"/><rect x="280" fill="#ff6943"/><rect x="285" fill="#ff6240"/><rect x="290" fill="#ff5c3d"/><rect x="295" fill="#ff563a"/><rect x="300" fill="#ff5137"/><rect x="305" fill="#ff4c35"/><rect x="310" fill="#ff4732"/><rect x="315" fill="#ff4230"/><rect x="320" fill="#ff3e2e"/><rect x="325" fill="#ff3a2c"/><rect x="330" fill="#ff372a"/><rect x="335" fill="#ff3328"/><rect x="340" fill="#ff3027"/><rect x="345" fill="#ff2d25"/><rect x="350" fill="#ff2a24"/><rect x="355" fill="#ff2722"/><rect x="360" fill="#ff2421"/><rect x="365" fill="#ff2220"/><rect x="370" fill="#ff1f1e"/><rect x="375" fill="#ff1d1d"/><rect x="380" fill="#ff1b1c"/><rect x="385" fill="#ff181b"/><rect x="390" fill="#ff161a"/><rect x="395" fill="#ff1419"/><rect x="400" fill="#ff1218"/><rect x="405" fill="#ff1117"/><rect x="410" fill="#ff0f16"/><rect x="415" fill="#ff0d15"/><rect x="420" fill="#ff0c15"/><rect x="425" fill="#ff0a14"/><rect x="430" fill="#ff0913"/><rect x="435" fill="#ff0712"/><rect x="440" fill="#ff0612"/><rect x="445" fill="#ff0411"/><rect x="450" fill="#ff0310"/><rect x="455" fill="#ff0210"/><rect x="460" fill="#ff010f"/><rect x="465" fill="#ff000e"/><rect x="470" fill="#ff000e"/><rect x="475" fill="#ff000d"/><rect x="480" fill="#ff000d"/><rect x="485" fill="#ff000c"/><rect x="490" fill="#ff000c"/><rect x="495" fill="#ff000b"/><rect x="500" fill="#ff000b"/><rect x="505" fill="#ff000a"/><rect x="510" fill="#ff000a"/><rect x="515" fill="#ff0009"/><rect x="520" fill="#ff0009"/><rect x="525" fill="#ff0009"/><rect x="530" fill="#ff0008"/><rect x="535" fill="#ff0008"/><rect x="540" fill="#ff0007"/><rect x="545" fill="#ff0007"/><rect x="550" fill="#ff0007"/><rect x="555" fill="#ff0006"/><rect x="560" fill="#ff0006"/><rect x="565" fill="#ff0006"/><rect x="570" fill="#ff0005"/><rect x="575" fill="#ff0005"/><rect x="580" fill="#ff0005"/><rect x="585" fill="#ff0004"/><rect x="590" fill="#ff0004"/><rect x="595" fill="#ff0004"/><rect x="600" fill="#ff0003"/><rect x="605" fill="#ff0003"/><rect x="610" fill="#ff0003"/><rect x="615" fill="#ff0003"/><rect x="620" fill="#ff0002"/><rect x="625" fill="#ff0002"/><rect x="630" fill="#ff0002"/><rect x="635" fill="#ff0002"/><rect x="640" fill="#ff0001"/><rect x="645" fill="#ff0001"/><rect x="650" fill="#ff0001"/></g>
<g transform="translate(990,161)"><rect x="10" fill="#00ff7b"/><rect x="15" fill="#00ff7b"/><rect x="20" fill="#00ff7c"/><rect x="25" fill="#00ff7c"/><rect x="30" fill="#00ff7d"/><rect x="35" fill="#00ff7d"/><rect x="40" fill="#00ff7e"/><rect x="45" fill="#00ff7e"/><rect x="50" fill="#00ff7f"/><rect x="55" fill="#00ff80"/><rect x="60" fill="#00ff80"/><rect x="65" fill="#00ff81"/><rect x="70" fill="#00ff82"/><rect x="75" fill="#00ff82"/><rect x="80" fill="#00ff83"/><rect x="85" fill="#00ff84"/><rect x="90" fill="#00ff84"/><rect x="95" fill="#00ff85"/><rect x="100" fill="#00ff86"/><rect x="105" fill="#00ff87"/><rect x="110" fill="#00ff88"/><rect x="115" fill="#00ff88"/><rect x="120" fill="#00ff89"/><rect x="125" fill="#00ff8a"/><rect x="130" fill="#00ff8b"/><rect x="135" fill="#00ff8c"/><rect x="140" fill="#00ff8d"/><rect x="145" fill="#00ff8e"/><rect x="150" fill="#00ff8f"/><rect x="155" fill="#07ff90"/><rect x="160" fill="#16ff91"/><rect x="165" fill="#25ff93"/><rect x="170" fill="#35ff94"/><rect x="175" fill="#46ff95"/><rect x="180" fill="#57ff96"/><rect x="185" fill="#69ff98"/><rect x="190" fill="#7bff99"/><rect x="195" fill="#8fff9b"/><rect x="200" fill="#a3ff9c"/><rect x="205" fill="#b7ff9e"/><rect x="210" fill="#cdff9f"/><rect x="215" fill="#e3ffa1"/><rect x="220" fill="#fbffa3"/><rect x="225" fill="#ffec99"/><rect x="230" fill="#ffd88d"/><rect x="235" fill="#ffc783"/><rect x="240" fill="#ffb77b"/><rect x="245" fill="#ffa973"/><rect x="250" fill="#ff9d6c"/><rect x="255" fill="#ff9265"/><rect x="260" fill="#ff8760"/><rect x="265" fill="#ff7e5a"/><rect x="270" fill="#ff7656"/><rect x="275" fill="#ff6e51"/><rect x="280" fill="#ff674d"/><rect x="285" fill="#ff6049"/><rect x="290" fill="#ff5a46"/><rect x="295" fill="#ff5443"/><rect x="300" fill="#ff4f40"/><rect x="305" fill="#ff4a3d"/><rect x="310" fill="#ff453a"/><rect x="315" fill="#ff4138"/><rect x="320" fill="#ff3c35"/><rect x="325" fill="#ff3933"/><rect x="330" fill="#ff3531"/><rect x="335" fill="#ff312f"/><rect x="340" fill="#ff2e2d"/><rect x="345" fill="#ff2b2c"/><rect x="350" fill="#ff282a"/><rect x="355" fill="#ff2528"/><rect x="360" fill="#ff2327"/><rect x="365" fill="#ff2025"/><rect x="370" fill="#ff1e24"/><rect x="375" fill="#ff1b23"/><rect x="380" fill="#ff1921"/><rect x="385" fill="#ff1720"/><rect x="390" fill="#ff151f"/><rect x="395" fill="#ff131e"/><rect x="400" fill="#ff111d"/><rect x="405" fill="#ff0f1c"/><rect x="410" fill="#ff0e1b"/><rect x="415" fill="#ff0c1a"/><rect x="420" fill="#ff0a19"/><rect x="425" fill="#ff0918"/><rect x="430" fill="#ff0717"/><rect x="435" fill="#ff0617"/><rect x="440" fill="#ff0416"/><rect x="445" fill="#ff0315"/><rect x="450" fill="#ff0214"/><rect x="455" fill="#ff0114"/><rect x="460" fill="#ff0013"/><rect x="465" fill="#ff0012"/><rect x="470" fill="#ff0012"/><rect x="475" fill="#ff0011"/><rect x="480" fill="#ff0010"/><rect x="485" fill="#ff0010"/><rect x="490" fill="#ff000f"/><rect x="495" fill="#ff000f"/><rect x="500" fill="#ff000e"/><rect x="505" fill="#ff000e"/><rect x="510" fill="#ff000d"/><rect x="515" fill="#ff000d"/><rect x="520" fill="#ff000c"/><rect x="525" fill="#ff000c"/><rect x="530" fill="#ff000b"/><rect x="535" fill="#ff000b"/><rect x="540" fill="#ff000a"/><rect x="545" fill="#ff000a"/><rect x="550" fill="#ff000a"/><rect x="555" fill="#ff0009"/><rect x="560" fill="#ff0009"/><rect x="565" fill="#ff0008"/><rect x="570" fill="#ff0008"/><rect x="575" fill="#ff0008"/><rect x="580" fill="#ff0007"/><rect x="585" fill="#ff0007"/><rect x="590" fill="#ff0007"/><rect x="595" fill="#ff0006"/><rect x="600" fill="#ff0006"/><rect x="605" fill="#ff0006"/><rect x="610" fill="#ff0005"/><rect x="615" fill="#ff0005"/><rect x="620" fill="#ff0005"/><rect x="625" fill="#ff0005"/><rect x="630" fill="#ff0004"/><rect x="635" fill="#ff0004"/><rect x="640" fill="#ff0004"/><rect x="645" fill="#ff0003"/><rect x="650" fill="#ff0003"/></g>
<g transform="translate(990,166)"><rect x="10" fill="#00ff85"/><rect x="15" fill="#00ff86"/><rect x="20" fill="#00ff86"/><rect x="25" fill="#00ff87"/><rect x="30" fill="#00ff88"/><rect x="35" fill="#00ff89"/><rect x="40" fill="#00ff89"/><rect x="45" fill="#00ff8a"/><rect x="50" fill="#00ff8b"/><rect x="55" fill="#00ff8c"/><rect x="60" fill="#00ff8c"/><rect x="65" fill="#00ff8d"/><rect x="70" fill="#00ff8e"/><rect x="75" fill="#00ff8f"/><rect x="80" fill="#00ff90"/><rect x="85" fill="#00ff91"/><rect x="90" fill="#00ff92"/><rect x="95" fill="#00ff93"/><rect x="100" fill="#00ff94"/><rect x="105" fill="#00ff95"/><rect x="110" fill="#00ff96"/><rect x="115" fill="#00ff97"/><rect x="120" fill="#00ff98"/><rect x="125" fill="#00ff99"/><rect x="130" fill="#00ff9a"/><rect x="135" fill="#00ff9b"/><rect x="140" fill="#00ff9d"/><rect x="145" fill="#00ff9e"/><rect x="150" fill="#00ff9f"/><rect x="155" fill="#04ffa1"/><rect x="160" fill="#14ffa2"/><rect x="165" fill="#23ffa3"/><rect x="170" fill="#34ffa5"/><rect x="175" fill="#45ffa7"/><rect x="180" fill="#56ffa8"/><rect x="185" fill="#68ffaa"/><rect x="190" fill="#7bffac"/><rect x="195" fill="#8effae"/><rect x="200" fill="#a3ffaf"/><rect x="205" fill="#b8ffb1"/><rect x="210" fill="#ceffb4"/><rect x="215" fill="#e5ffb6"/><rect x="220" fill="#fdffb8"/><rect x="225" fill="#ffeaab"/><rect x="230" fill="#ffd69e"/><rect x="235" fill="#ffc493"/><rect x="240" fill="#ffb589"/><rect x="245" fill="#ffa781"/><rect x="250" fill="#ff9a79"/><rect x="255" fill="#ff8f72"/><rect x="260" fill="#ff856b"/><rect x="265" fill="#ff7c66"/><rect x="270" fill="#ff7360"/><rect x="275" fill="#ff6b5b"/><rect x="280" fill="#ff6457"/><rect x="285" fill="#ff5e53"/><rect x="290" fill="#ff584f"/><rect x="295" fill="#ff524b"/><rect x="300" fill="#ff4d48"/><rect x="305" fill="#ff4845"/><rect x="310" fill="#ff4342"/><rect x="315" fill="#ff3f3f"/><rect x="320" fill="#ff3b3d"/><rect x="325" fill="#ff373a"/><rect x="330" fill="#ff3338"/><rect x="335" fill="#ff3036"/><rect x="340" fill="#ff2c34"/><rect x="345" fill="#ff2932"/><rect x="350" fill="#ff2630"/><rect x="355" fill="#ff242e"/><rect x="360" fill="#ff212d"/><rect x="365" fill="#ff1e2b"/><rect x="370" fill="#ff1c2a"/><rect x="375" fill="#ff1a28"/><rect x="380" fill="#ff1827"/><rect x="385" fill="#ff1525"/><rect x="390" fill="#ff1324"/><rect x="395" fill="#ff1223"/><rect x="400" fill="#ff1022"/><rect x="405" fill="#ff0e21"/><rect x="410" fill="#ff0c20"/><rect x="415" fill="#ff0b1f"/><rect x="420" fill="#ff091e"/><rect x="425" fill="#ff071d"/><rect x="430" fill="#ff061c"/><rect x="435" fill="#ff051b"/><rect x="440" fill="#ff031a"/><rect x="445" fill="#ff0219"/><rect x="450" fill="#ff0118"/><rect x="455" fill="#ff0018"/><rect x="460" fill="#ff0017"/><rect x="465" fill="#ff0016"/><rect x="470" fill="#ff0015"/><rect x="475" fill="#ff0015"/><rect x="480" fill="#ff0014"/><rect x="485" fill="#ff0013"/><rect x="490" fill="#ff0013"/><rect x="495" fill="#ff0012"/><rect x="500" fill="#ff0012"/><rect x="505" fill="#ff0011"/><rect x="510" fill="#ff0011"/><rect x="515" fill="#ff0010"/><rect x="520" fill="#ff000f"/><rect x="525" fill="#ff000f"/><rect x="530" fill="#ff000e"/><rect x="535" fill="#ff000e"/><rect x="540" fill="#ff000e"/><rect x="545" fill="#ff000d"/><rect x="550" fill="#ff000d"/><rect x="555" fill="#ff000c"/><rect x="560" fill="#ff000c"/><rect x="565" fill="#ff000b"/><rect x="570" fill="#ff000b"/><rect x="575" fill="#ff000b"/><rect x="580" fill="#ff000a"/><rect x="585" fill="#ff000a"/><rect x="590" fill="#ff0009"/><rect x="595" fill="#ff0009"/><rect x="600" fill="#ff0009"/><rect x="605" fill="#ff0008"/><rect x="610" fill="#ff0008"/><rect x="615" fill="#ff0008"/><rect x="620" fill="#ff0007"/><rect x="625" fill="#ff0007"/><rect x="630" fill="#ff0007"/><rect x="635" fill="#ff0006"/><rect x="640" fill="#ff0006"/><rect x="645" fill="#ff0006"/><rect x="650" fill="#ff0006"/></g>
<g transform="translate(990,171)"><rect x="15" fill="#00ff91"/><rect x="20" fill="#00ff92"/><rect x="25" fill="#00ff92"/><rect x="30" fill="#00ff93"/><rect x="35" fill="#00ff94"/><rect x="40" fill="#00ff95"/><rect x="45" fill="#00ff96"/><rect x="50" fill="#00ff97"/><rect x="55" fill="#00ff98"/><rect x="60" fill="#00ff99"/><rect x="65" fill="#00ff9a"/><rect x="70" fill="#00ff9b"/><rect x="75" fill="#00ff9c"/><rect x="80" fill="#00ff9d"/><rect x="85" fill="#00ff9e"/><rect x="90" fill="#00ff9f"/><rect x="95" fill="#00ffa0"/><rect x="100" fill="#00ffa1"/><rect x="105" fill="#00ffa3"/><rect x="110" fill="#00ffa4"/><rect x="115" fill="#00ffa5"/><rect x="120" fill="#00ffa7"/><rect x="125" fill="#00ffa8"/><rect x="130" fill="#00ffa9"/><rect x="135" fill="#00ffab"/><rect x="140" fill="#00ffac"/><rect x="145" fill="#00ffae"/><rect x="150" fill="#00ffb0"/><rect x="155" fill="#02ffb1"/><rect x="160" fill="#12ffb3"/><rect x="165" fill="#21ffb5"/><rect x="170" fill="#32ffb7"/><rect x="175" fill="#43ffb9"/><rect x="180" fill="#55ffbb"/><rect x="185" fill="#67ffbd"/><rect x="190" fill="#7bffbf"/><rect x="195" fill="#8effc1"/><rect x="200" fill="#a3ffc4"/><rect x="205" fill="#b9ffc6"/><rect x="210" fill="#cfffc9"/><rect x="215" fill="#e7ffcb"/><rect x="220" fill="#ffffce"/><rect x="225" fill="#ffe8be"/><rect x="230" fill="#ffd3b0"/><rect x="235" fill="#ffc2a3"/><rect x="240" fill="#ffb299"/><rect x="245" fill="#ffa48f"/><rect x="250" fill="#ff9886"/><rect x="255" fill="#ff8d7f"/><rect x="260" fill="#ff8378"/><rect x="265" fill="#ff7971"/><rect x="270" fill="#ff716b"/><rect x="275" fill="#ff6966"/><rect x="280" fill="#ff6261"/><rect x="285" fill="#ff5c5c"/><rect x="290" fill="#ff5558"/><rect x="295" fill="#ff5054"/><rect x="300" fill="#ff4b51"/><rect x="305" fill="#ff464d"/><rect x="310" fill="#ff414a"/><rect x="315" fill="#ff3d47"/><rect x="320" fill="#ff3944"/><rect x="325" fill="#ff3542"/><rect x="330" fill="#ff313f"/><rect x="335" fill="#ff2e3d"/><rect x="340" fill="#ff2b3a"/><rect x="345" fill="#ff2838"/><rect x="350" fill="#ff2536"/><rect x="355" fill="#ff2234"/><rect x="360" fill="#ff1f33"/><rect x="365" fill="#ff1d31"/><rect x="370" fill="#ff1a2f"/><rect x="375" fill="#ff182e"/><rect x="380" fill="#ff162c"/><rect x="385" fill="#ff142b"/><rect x="390" fill="#ff1229"/><rect x="395" fill="#ff1028"/><rect x="400" fill="#ff0e27"/><rect x="405" fill="#ff0d26"/><rect x="410" fill="#ff0b24"/><rect x="415" fill="#ff0923"/><rect x="420" fill="#ff0822"/><rect x="425" fill="#ff0621"/><rect x="430" fill="#ff0520"/><rect x="435" fill="#ff031f"/><rect x="440" fill="#ff021e"/><rect x="445" fill="#ff011d"/><rect x="450" fill="#ff001c"/><rect x="455" fill="#ff001c"/><rect x="460" fill="#ff001b"/><rect x="465" fill="#ff001a"/><rect x="470" fill="#ff0019"/><rect x="475" fill="#ff0019"/><rect x="480" fill="#ff0018"/><rect x="485" fill="#ff0017"/><rect x="490" fill="#ff0016"/><rect x="495" fill="#ff0016"/><rect x="500" fill="#ff0015"/><rect x="505" fill="#ff0015"/><rect x="510" fill="#ff0014"/><rect x="515" fill="#ff0013"/><rect x="520" fill="#ff0013"/><rect x="525" fill="#ff0012"/><rect x="530" fill="#ff0012"/><rect x="535" fill="#ff0011"/><rect x="540" fill="#ff0011"/><rect x="545" fill="#ff0010"/><rect x="550" fill="#ff0010"/><rect x="555" fill="#ff000f"/><rect x="560" fill="#ff000f"/><rect x="565" fill="#ff000e"/><rect x="570" fill="#ff000e"/><rect x="575" fill="#ff000d"/><rect x="580" fill="#ff000d"/><rect x="585" fill="#ff000d"/><rect x="590" fill="#ff000c"/><rect x="595" fill="#ff000c"/><rect x="600" fill="#ff000b"/><rect x="605" fill="#ff000b"/><rect x="610" fill="#ff000b"/><rect x="615" fill="#ff000a"/><rect x="620" fill="#ff000a"/><rect x="625" fill="#ff000a"/><rect x="630" fill="#ff0009"/><rect x="635" fill="#ff0009"/><rect x="640" fill="#ff0009"/><rect x="645" fill="#ff0008"/><rect x="650" fill="#ff0008"/></g>
<g transform="translate(990,176)"><rect x="15" fill="#00ff9c"/><rect x="20" fill="#00ff9d"/><rect x="25" fill="#00ff9e"/><rect x="30" fill="#00ff9f"/><rect x="35" fill="#00ffa0"/><rect x="40" fill="#00ffa1"/><rect x="45" fill="#00ffa2"/><rect x="50" fill="#00ffa3"/><rect x="55" fill="#00ffa4"/><rect x="60" fill="#00ffa5"/><rect x="65" fill="#00ffa7"/><rect x="70" fill="#00ffa8"/><rect x="75" fill="#00ffa9"/><rect x="80" fill="#00ffaa"/><rect x="85" fill="#00ffac"/><rect x="90" fill="#00ffad"/><rect x="95" fill="#00ffae"/><rect x="100" fill="#00ffb0"/><rect x="105" fill="#00ffb1"/><rect x="110" fill="#00ffb3"/><rect x="115" fill="#00ffb4"/><rect x="120" fill="#00ffb6"/><rect x="125" fill="#00ffb7"/><rect x="130" fill="#00ffb9"/><rect x="135" fill="#00ffbb"/><rect x="140" fill="#00ffbd"/><rect x="145" fill="#00ffbf"/><rect x="150" fill="#00ffc1"/><rect x="155" fill="#00ffc3"/><rect x="160" fill="#0fffc5"/><rect x="165" fill="#1fffc7"/><rect x="170" fill="#30ffc9"/><rect x="175" fill="#42ffcb"/><rect x="180" fill="#54ffce"/><rect x="185" fill="#67ffd0"/><rect x="190" fill="#7affd3"/><rect x="195" fill="#8effd6"/><rect x="200" fill="#a3ffd8"/><rect x="205" fill="#baffdb"/><rect x="210" fill="#d1ffde"/><rect x="215" fill="#e8ffe2"/><rect x="220" fill="#fffce3"/><rect x="225" fill="#ffe5d1"/><rect x="230" fill="#ffd1c1"/><rect x="235" fill="#ffbfb4"/><rect x="240" fill="#ffb0a8"/><rect x="245" fill="#ffa29d"/><rect x="250" fill="#ff9594"/><rect x="255" fill="#ff8a8b"/><rect x="260" fill="#ff8084"/><rect x="265" fill="#ff777d"/><rect x="270" fill="#ff6f76"/><rect x="275" fill="#ff6770"/><rect x="280" fill="#ff606b"/><rect x="285" fill="#ff5966"/><rect x="290" fill="#ff5362"/><rect x="295" fill="#ff4e5d"/><rect x="300" fill="#ff4859"/><rect x="305" fill="#ff4456"/><rect x="310" fill="#ff3f52"/><rect x="315" fill="#ff3b4f"/><rect x="320" fill="#ff374c"/><rect x="325" fill="#ff3349"/><rect x="330" fill="#ff2f46"/><rect x="335" fill="#ff2c44"/><rect x="340" fill="#ff2941"/><rect x="345" fill="#ff263f"/><rect x="350" fill="#ff233d"/><rect x="355" fill="#ff203b"/><rect x="360" fill="#ff1e39"/><rect x="365" fill="#ff1b37"/><rect x="370" fill="#ff1935"/><rect x="375" fill="#ff1733"/><rect x="380" fill="#ff1532"/><rect x="385" fill="#ff1230"/><rect x="390" fill="#ff112f"/><rect x="395" fill="#ff0f2d"/><rect x="400" fill="#ff0d2c"/><rect x="405" fill="#ff0b2a"/><rect x="410" fill="#ff0929"/><rect x="415" fill="#ff0828"/><rect x="420" fill="#ff0627"/><rect x="425" fill="#ff0526"/><rect x="430" fill="#ff0325"/><rect x="435" fill="#ff0223"/><rect x="440" fill="#ff0122"/><rect x="445" fill="#ff0022"/><rect x="450" fill="#ff0021"/><rect x="455" fill="#ff0020"/><rect x="460" fill="#ff001f"/><rect x="465" fill="#ff001e"/><rect x="470" fill="#ff001d"/><rect x="475" fill="#ff001c"/><rect x="480" fill="#ff001c"/><rect x="485" fill="#ff001b"/><rect x="490" fill="#ff001a"/><rect x="495" fill="#ff0019"/><rect x="500" fill="#ff0019"/><rect x="505" fill="#ff0018"/><rect x="510" fill="#ff0017"/><rect x="515" fill="#ff0017"/><rect x="520" fill="#ff0016"/><rect x="525" fill="#ff0015"/><rect x="530" fill="#ff0015"/><rect x="535" fill="#ff0014"/><rect x="540" fill="#ff0014"/><rect x="545" fill="#ff0013"/><rect x="550" fill="#ff0013"/><rect x="555" fill="#ff0012"/><rect x="560" fill="#ff0012"/><rect x="565" fill="#ff0011"/><rect x="570" fill="#ff0011"/><rect x="575" fill="#ff0010"/><rect x="580" fill="#ff0010"/><rect x="585" fill="#ff000f"/><rect x="590" fill="#ff000f"/><rect x="595" fill="#ff000f"/><rect x="600" fill="#ff000e"/><rect x="605" fill="#ff000e"/><rect x="610" fill="#ff000d"/><rect x="615" fill="#ff000d"/><rect x="620" fill="#ff000d"/><rect x="625" fill="#ff000c"/><rect x="630" fill="#ff000c"/><rect x="635" fill="#ff000b"/><rect x="640" fill="#ff000b"/><rect x="645" fill="#ff000b"/><rect x="650" fill="#ff000a"/></g>
<g transform="translate(990,181)"><rect x="15" fill="#00ffa8"/><rect x="20" fill="#00ffa9"/><rect x="25" fill="#00ffaa"/><rect x="30" fill="#00ffab"/><rect x="35" fill="#00ffac"/><rect x="40" fill="#00ffad"/><rect x="45" fill="#00ffaf"/><rect x="50" fill="#00ffb0"/><rect x="55" fill="#00ffb1"/><rect x="60" fill="#00ffb2"/><rect x="65" fill="#00ffb4"/><rect x="70" fill="#00ffb5"/><rect x="75" fill="#00ffb7"/><rect x="80" fill="#00ffb8"/><rect x="85" fill="#00ffba"/><rect x="90" fill="#00ffbb"/><rect x="95" fill="#00ffbd"/><rect x="100" fill="#00ffbe"/><rect x="105" fill="#00ffc0"/><rect x="110" fill="#00ffc2"/><rect x="115" fill="#00ffc4"/><rect x="120" fill="#00ffc6"/><rect x="125" fill="#00ffc8"/><rect x="130" fill="#00ffc9"/><rect x="135" fill="#00ffcc"/><rect x="140" fill="#00ffce"/><rect x="145" fill="#00ffd0"/><rect x="150" fill="#00ffd2"/><rect x="155" fill="#00ffd5"/><rect x="160" fill="#0dffd7"/><rect x="165" fill="#1dffd9"/><rect x="170" fill="#2effdc"/><rect x="175" fill="#40ffdf"/><rect x="180" fill="#53ffe2"/><rect x="185" fill="#66ffe5"/><rect x="190" fill="#7affe8"/><rect x="195" fill="#8effeb"/><rect x="200" fill="#a4ffee"/><rect x="205" fill="#bafff2"/><rect x="210" fill="#d2fff5"/><rect x="215" fill="#eafff9"/><rect x="220" fill="#fffaf8"/><rect x="225" fill="#ffe3e4"/><rect x="230" fill="#ffced4"/><rect x="235" fill="#ffbdc5"/><rect x="240" fill="#ffadb8"/><rect x="245" fill="#ff9fac"/><rect x="250" fill="#ff93a2"/><rect x="255" fill="#ff8899"/><rect x="260" fill="#ff7e90"/><rect x="265" fill="#ff7589"/><rect x="270" fill="#ff6c82"/><rect x="275" fill="#ff657b"/><rect x="280" fill="#ff5e75"/><rect x="285" fill="#ff5770"/><rect x="290" fill="#ff516b"/><rect x="295" fill="#ff4c66"/><rect x="300" fill="#ff4662"/><rect x="305" fill="#ff425e"/><rect x="310" fill="#ff3d5a"/><rect x="315" fill="#ff3957"/><rect x="320" fill="#ff3553"/><rect x="325" fill="#ff3150"/><rect x="330" fill="#ff2e4d"/><rect x="335" fill="#ff2a4a"/><rect x="340" fill="#ff2748"/><rect x="345" fill="#ff2445"/><rect x="350" fill="#ff2143"/><rect x="355" fill="#ff1f41"/><rect x="360" fill="#ff1c3f"/><rect x="365" fill="#ff1a3d"/><rect x="370" fill="#ff173b"/><rect x="375" fill="#ff1539"/><rect x="380" fill="#ff1337"/><rect x="385" fill="#ff1135"/><rect x="390" fill="#ff0f34"/><rect x="395" fill="#ff0d32"/><rect x="400" fill="#ff0b31"/><rect x="405" fill="#ff0a2f"/><rect x="410" fill="#ff082e"/><rect x="415" fill="#ff062d"/><rect x="420" fill="#ff052b"/><rect x="425" fill="#ff042a"/><rect x="430" fill="#ff0229"/><rect x="435" fill="#ff0128"/><rect x="440" fill="#ff0027"/><rect x="445" fill="#ff0026"/><rect x="450" fill="#ff0025"/><rect x="455" fill="#ff0024"/><rect x="460" fill="#ff0023"/><rect x="465" fill="#ff0022"/><rect x="470" fill="#ff0021"/><rect x="475" fill="#ff0020"/><rect x="480" fill="#ff001f"/><rect x="485" fill="#ff001e"/><rect x="490" fill="#ff001e"/><rect x="495" fill="#ff001d"/><rect x="500" fill="#ff001c"/><rect x="505" fill="#ff001b"/><rect x="510" fill="#ff001b"/><rect x="515" fill="#ff001a"/><rect x="520" fill="#ff0019"/><rect x="525" fill="#ff0019"/><rect x="530" fill="#ff0018"/><rect x="535" fill="#ff0017"/><rect x="540" fill="#ff0017"/><rect x="545" fill="#ff0016"/><rect x="550" fill="#ff0016"/><rect x="555" fill="#ff0015"/><rect x="560" fill="#ff0015"/><rect x="565" fill="#ff0014"/><rect x="570" fill="#ff0014"/><rect x="575" fill="#ff0013"/><rect x="580" fill="#ff0013"/><rect x="585" fill="#ff0012"/><rect x="590" fill="#ff0012"/><rect x="595" fill="#ff0011"/><rect x="600" fill="#ff0011"/><rect x="605" fill="#ff0010"/><rect x="610" fill="#ff0010"/><rect x="615" fill="#ff0010"/><rect x="620" fill="#ff000f"/><rect x="625" fill="#ff000f"/><rect x="630" fill="#ff000e"/><rect x="635" fill="#ff000e"/><rect x="640" fill="#ff000e"/><rect x="645" fill="#ff000d"/><rect x="650" fill="#ff000d"/></g>
<g transform="translate(990,186)"><rect x="15" fill="#00ffb3"/><rect x="20" fill="#00ffb5"/><rect x="25" fill="#00ffb6"/><rect x="30" fill="#00ffb7"/><rect x="35" fill="#00ffb9"/><rect x="40" fill="#00ffba"/><rect x="45" fill="#00ffbb"/><rect x="50" fill="#00ffbd"/><rect x="55" fill="#00ffbe"/><rect x="60" fill="#00ffc0"/><rect x="65" fill="#00ffc1"/><rect x="70" fill="#00ffc3"/><rect x="75" fill="#00ffc5"/><rect x="80" fill="#00ffc6"/><rect x="85" fill="#00ffc8"/><rect x="90" fill="#00ffca"/><rect x="95" fill="#00ffcc"/><rect x="100" fill="#00ffce"/><rect x="105" fill="#00ffd0"/><rect x="110" fill="#00ffd2"/><rect x="115" fill="#00ffd4"/><rect x="120" fill="#00ffd6"/><rect x="125" fill="#00ffd8"/><rect x="130" fill="#00ffda"/><rect x="135" fill="#00ffdd"/><rect x="140" fill="#00ffdf"/><rect x="145" fill="#00ffe2"/><rect x="150" fill="#00ffe4"/><rect x="155" fill="#00ffe7"/><rect x="160" fill="#0bffea"/><rect x="165" fill="#1bffed"/><rect x="170" fill="#2dfff0"/><rect x="175" fill="#3ffff3"/><rect x="180" fill="#51fff6"/><rect x="185" fill="#65fffa"/><rect x="190" fill="#79fffd"/><rect x="195" fill="#8dfdff"/><rect x="200" fill="#a1f9ff"/><rect x="205" fill="#b4f6ff"/><rect x="210" fill="#c8f2ff"/><rect x="215" fill="#dceeff"/><rect x="220" fill="#f1eaff"/><rect x="225" fill="#ffe0f9"/><rect x="230" fill="#ffcce6"/><rect x="235" fill="#ffbad6"/><rect x="240" fill="#ffaac8"/><rect x="245" fill="#ff9dbb"/><rect x="250" fill="#ff90b0"/><rect x="255" fill="#ff85a6"/><rect x="260" fill="#ff7b9d"/><rect x="265" fill="#ff7295"/><rect x="270" fill="#ff6a8d"/><rect x="275" fill="#ff6286"/><rect x="280" fill="#ff5b80"/><rect x="285" fill="#ff557a"/><rect x="290" fill="#ff4f74"/><rect x="295" fill="#ff496f"/><rect x="300" fill="#ff446b"/><rect x="305" fill="#ff3f66"/><rect x="310" fill="#ff3b62"/><rect x="315" fill="#ff375f"/><rect x="320" fill="#ff335b"/><rect x="325" fill="#ff2f58"/><rect x="330" fill="#ff2c54"/><rect x="335" fill="#ff2851"/><rect x="340" fill="#ff254f"/><rect x="345" fill="#ff224c"/><rect x="350" fill="#ff2049"/><rect x="355" fill="#ff1d47"/><rect x="360" fill="#ff1a45"/><rect x="365" fill="#ff1843"/><rect x="370" fill="#ff1640"/><rect x="375" fill="#ff143e"/><rect x="380" fill="#ff113d"/><rect x="385" fill="#ff0f3b"/><rect x="390" fill="#ff0e39"/><rect x="395" fill="#ff0c37"/><rect x="400" fill="#ff0a36"/><rect x="405" fill="#ff0834"/><rect x="410" fill="#ff0733"/><rect x="415" fill="#ff0531"/><rect x="420" fill="#ff0430"/><rect x="425" fill="#ff022f"/><rect x="430" fill="#ff012d"/><rect x="435" fill="#ff002c"/><rect x="440" fill="#ff002b"/><rect x="445" fill="#ff002a"/><rect x="450" fill="#ff0029"/><rect x="455" fill="#ff0028"/><rect x="460" fill="#ff0027"/><rect x="465" fill="#ff0026"/><rect x="470" fill="#ff0025"/><rect x="475" fill="#ff0024"/><rect x="480" fill="#ff0023"/><rect x="485" fill="#ff0022"/><rect x="490" fill="#ff0021"/><rect x="495" fill="#ff0020"/><rect x="500" fill="#ff0020"/><rect x="505" fill="#ff001f"/><rect x="510" fill="#ff001e"/><rect x="515" fill="#ff001d"/><rect x="520" fill="#ff001d"/><rect x="525" fill="#ff001c"/><rect x="530" fill="#ff001b"/><rect x="535" fill="#ff001b"/><rect x="540" fill="#ff001a"/><rect x="545" fill="#ff0019"/><rect x="550" fill="#ff0019"/><rect x="555" fill="#ff0018"/><rect x="560" fill="#ff0018"/><rect x="565" fill="#ff0017"/><rect x="570" fill="#ff0017"/><rect x="575" fill="#ff0016"/><rect x="580" fill="#ff0015"/><rect x="585" fill="#ff0015"/><rect x="590" fill="#ff0014"/><rect x="595" fill="#ff0014"/><rect x="600" fill="#ff0013"/><rect x="605" fill="#ff0013"/><rect x="610" fill="#ff0013"/><rect x="615" fill="#ff0012"/><rect x="620" fill="#ff0012"/><rect x="625" fill="#ff0011"/><rect x="630" fill="#ff0011"/><rect x="635" fill="#ff0010"/><rect x="640" fill="#ff0010"/><rect x="645" fill="#ff0010"/></g>
<g transform="translate(990,191)"><rect x="20" fill="#00ffc1"/><rect x="25" fill="#00ffc2"/><rect x="30" fill="#00ffc4"/><rect x="35" fill="#00ffc5"/><rect x="40" fill="#00ffc7"/><rect x="45" fill="#00ffc8"/><rect x="50" fill="#00ffca"/><rect x="55" fill="#00ffcc"/><rect x="60" fill="#00ffce"/><rect x="65" fill="#00ffcf"/><rect x="70" fill="#00ffd1"/><rect x="75" fill="#00ffd3"/><rect x="80" fill="#00ffd5"/><rect x="85" fill="#00ffd7"/><rect x="90" fill="#00ffd9"/><rect x="95" fill="#00ffdb"/><rect x="100" fill="#00ffdd"/><rect x="105" fill="#00ffdf"/><rect x="110" fill="#00ffe2"/><rect x="115" fill="#00ffe4"/><rect x="120" fill="#00ffe7"/><rect x="125" fill="#00ffe9"/><rect x="130" fill="#00ffec"/><rect x="135" fill="#00ffee"/><rect x="140" fill="#00fff1"/><rect x="145" fill="#00fff4"/><rect x="150" fill="#00fff7"/><rect x="155" fill="#00fffa"/><rect x="160" fill="#08fffd"/><rect x="165" fill="#19fdff"/><rect x="170" fill="#2afaff"/><rect x="175" fill="#3bf6ff"/><rect x="180" fill="#4cf3ff"/><rect x="185" fill="#5eefff"/><rect x="190" fill="#70ecff"/><rect x="195" fill="#81e8ff"/><rect x="200" fill="#94e5ff"/><rect x="205" fill="#a6e1ff"/><rect x="210" fill="#b9ddff"/><rect x="215" fill="#cbd9ff"/><rect x="220" fill="#ded6ff"/><rect x="225" fill="#f2d2ff"/><rect x="230" fill="#ffc9f9"/><rect x="235" fill="#ffb7e7"/><rect x="240" fill="#ffa8d8"/><rect x="245" fill="#ff9aca"/><rect x="250" fill="#ff8ebe"/><rect x="255" fill="#ff83b3"/><rect x="260" fill="#ff79aa"/><rect x="265" fill="#ff70a1"/><rect x="270" fill="#ff6799"/><rect x="275" fill="#ff6091"/><rect x="280" fill="#ff598a"/><rect x="285" fill="#ff5384"/><rect x="290" fill="#ff4d7e"/><rect x="295" fill="#ff4779"/><rect x="300" fill="#ff4274"/><rect x="305" fill="#ff3d6f"/><rect x="310" fill="#ff396b"/><rect x="315" fill="#ff3567"/><rect x="320" fill="#ff3163"/><rect x="325" fill="#ff2d5f"/><rect x="330" fill="#ff2a5c"/><rect x="335" fill="#ff2759"/><rect x="340" fill="#ff2355"/><rect x="345" fill="#ff2153"/><rect x="350" fill="#ff1e50"/><rect x="355" fill="#ff1b4d"/><rect x="360" fill="#ff194b"/><rect x="365" fill="#ff1649"/><rect x="370" fill="#ff1446"/><rect x="375" fill="#ff1244"/><rect x="380" fill="#ff1042"/><rect x="385" fill="#ff0e40"/><rect x="390" fill="#ff0c3e"/><rect x="395" fill="#ff0a3d"/><rect x="400" fill="#ff093b"/><rect x="405" fill="#ff0739"/><rect x="410" fill="#ff0538"/><rect x="415" fill="#ff0436"/><rect x="420" fill="#ff0235"/><rect x="425" fill="#ff0133"/><rect x="430" fill="#ff0032"/><rect x="435" fill="#ff0031"/><rect x="440" fill="#ff002f"/><rect x="445" fill="#ff002e"/><rect x="450" fill="#ff002d"/><rect x="455" fill="#ff002c"/><rect x="460" fill="#ff002b"/><rect x="465" fill="#ff002a"/><rect x="470" fill="#ff0029"/><rect x="475" fill="#ff0028"/><rect x="480" fill="#ff0027"/><rect x="485" fill="#ff0026"/><rect x="490" fill="#ff0025"/><rect x="495" fill="#ff0024"/><rect x="500" fill="#ff0023"/><rect x="505" fill="#ff0022"/><rect x="510" fill="#ff0022"/><rect x="515" fill="#ff0021"/><rect x="520" fill="#ff0020"/><rect x="525" fill="#ff001f"/><rect x="530" fill="#ff001f"/><rect x="535" fill="#ff001e"/><rect x="540" fill="#ff001d"/><rect x="545" fill="#ff001d"/><rect x="550" fill="#ff001c"/><rect x="555" fill="#ff001b"/><rect x="560" fill="#ff001b"/><rect x="565" fill="#ff001a"/><rect x="570" fill="#ff0019"/><rect x="575" fill="#ff0019"/><rect x="580" fill="#ff0018"/><rect x="585" fill="#ff0018"/><rect x="590" fill="#ff0017"/><rect x="595" fill="#ff0017"/><rect x="600" fill="#ff0016"/><rect x="605" fill="#ff0016"/><rect x="610" fill="#ff0015"/><rect x="615" fill="#ff0015"/><rect x="620" fill="#ff0014"/><rect x="625" fill="#ff0014"/><rect x="630" fill="#ff0013"/><rect x="635" fill="#ff0013"/><rect x="640" fill="#ff0013"/></g>
<g transform="translate(990,196)"><rect x="20" fill="#00ffcd"/><rect x="25" fill="#00ffcf"/><rect x="30" fill="#00ffd1"/><rect x="35" fill="#00ffd2"/><rect x="40" fill="#00ffd4"/><rect x="45" fill="#00ffd6"/><rect x="50" fill="#00ffd8"/><rect x="55" fill="#00ffda"/><rect x="60" fill="#00ffdc"/><rect x="65" fill="#00ffde"/><rect x="70" fill="#00ffe0"/><rect x="75" fill="#00ffe2"/><rect x="80" fill="#00ffe4"/><rect x="85" fill="#00ffe6"/><rect x="90" fill="#00ffe8"/><rect x="95" fill="#00ffeb"/><rect x="100" fill="#00ffed"/><rect x="105" fill="#00fff0"/><rect x="110" fill="#00fff2"/><rect x="115" fill="#00fff5"/><rect x="120" fill="#00fff8"/><rect x="125" fill="#00fffb"/><rect x="130" fill="#00fffe"/><rect x="135" fill="#00fdff"/><rect x="140" fill="#00faff"/><rect x="145" fill="#00f7ff"/><rect x="150" fill="#00f4ff"/><rect x="155" fill="#00f1ff"/><rect x="160" fill="#05edff"/><rect x="165" fill="#15eaff"/><rect x="170" fill="#25e7ff"/><rect x="175" fill="#35e4ff"/><rect x="180" fill="#45e0ff"/><rect x="185" fill="#56ddff"/><rect x="190" fill="#66d9ff"/><rect x="195" fill="#77d6ff"/><rect x="200" fill="#88d2ff"/><rect x="205" fill="#99cfff"/><rect x="210" fill="#abcbff"/><rect x="215" fill="#bcc8ff"/><rect x="220" fill="#cec4ff"/><rect x="225" fill="#e0c0ff"/><rect x="230" fill="#f2bcff"/><rect x="235" fill="#ffb5f9"/><rect x="240" fill="#ffa5e9"/><rect x="245" fill="#ff97da"/><rect x="250" fill="#ff8bcd"/><rect x="255" fill="#ff80c1"/><rect x="260" fill="#ff76b7"/><rect x="265" fill="#ff6dad"/><rect x="270" fill="#ff65a4"/><rect x="275" fill="#ff5d9c"/><rect x="280" fill="#ff5795"/><rect x="285" fill="#ff508e"/><rect x="290" fill="#ff4a88"/><rect x="295" fill="#ff4582"/><rect x="300" fill="#ff407d"/><rect x="305" fill="#ff3b78"/><rect x="310" fill="#ff3773"/><rect x="315" fill="#ff336f"/><rect x="320" fill="#ff2f6b"/><rect x="325" fill="#ff2b67"/><rect x="330" fill="#ff2863"/><rect x="335" fill="#ff2560"/><rect x="340" fill="#ff225c"/><rect x="345" fill="#ff1f59"/><rect x="350" fill="#ff1c56"/><rect x="355" fill="#ff1954"/><rect x="360" fill="#ff1751"/><rect x="365" fill="#ff154f"/><rect x="370" fill="#ff124c"/><rect x="375" fill="#ff104a"/><rect x="380" fill="#ff0e48"/><rect x="385" fill="#ff0c46"/><rect x="390" fill="#ff0b44"/><rect x="395" fill="#ff0942"/><rect x="400" fill="#ff0740"/><rect x="405" fill="#ff053e"/><rect x="410" fill="#ff043d"/><rect x="415" fill="#ff023b"/><rect x="420" fill="#ff0139"/><rect x="425" fill="#ff0038"/><rect x="430" fill="#ff0036"/><rect x="435" fill="#ff0035"/><rect x="440" fill="#ff0034"/><rect x="445" fill="#ff0032"/><rect x="450" fill="#ff0031"/><rect x="455" fill="#ff0030"/><rect x="460" fill="#ff002f"/><rect x="465" fill="#ff002e"/><rect x="470" fill="#ff002d"/><rect x="475" fill="#ff002c"/><rect x="480" fill="#ff002b"/><rect x="485" fill="#ff002a"/><rect x="490" fill="#ff0029"/><rect x="495" fill="#ff0028"/><rect x="500" fill="#ff0027"/><rect x="505" fill="#ff0026"/><rect x="510" fill="#ff0025"/><rect x="515" fill="#ff0024"/><rect x="520" fill="#ff0023"/><rect x="525" fill="#ff0023"/><rect x="530" fill="#ff0022"/><rect x="535" fill="#ff0021"/><rect x="540" fill="#ff0020"/><rect x="545" fill="#ff0020"/><rect x="550" fill="#ff001f"/><rect x="555" fill="#ff001e"/><rect x="560" fill="#ff001e"/><rect x="565" fill="#ff001d"/><rect x="570" fill="#ff001c"/><rect x="575" fill="#ff001c"/><rect x="580" fill="#ff001b"/><rect x="585" fill="#ff001b"/><rect x="590" fill="#ff001a"/><rect x="595" fill="#ff0019"/><rect x="600" fill="#ff0019"/><rect x="605" fill="#ff0018"/><rect x="610" fill="#ff0018"/><rect x="615" fill="#ff0017"/><rect x="620" fill="#ff0017"/><rect x="625" fill="#ff0016"/><rect x="630" fill="#ff0016"/><rect x="635" fill="#ff0015"/></g>
<g transform="translate(990,201)"><rect x="20" fill="#00ffda"/><rect x="25" fill="#00ffdc"/><rect x="30" fill="#00ffde"/><rect x="35" fill="#00ffe0"/><rect x="40" fill="#00ffe2"/><rect x="45" fill="#00ffe4"/><rect x="50" fill="#00ffe6"/><rect x="55" fill="#00ffe8"/><rect x="60" fill="#00ffea"/><rect x="65" fill="#00ffec"/><rect x="70" fill="#00ffef"/><rect x="75" fill="#00fff1"/><rect x="80" fill="#00fff3"/><rect x="85" fill="#00fff6"/><rect x="90" fill="#00fff8"/><rect x="95" fill="#00fffb"/><rect x="100" fill="#00fffe"/><rect x="105" fill="#00fdff"/><rect x="110" fill="#00fbff"/><rect x="115" fill="#00f8ff"/><rect x="120" fill="#00f5ff"/><rect x="125" fill="#00f2ff"/><rect x="130" fill="#00efff"/><rect x="135" fill="#00ecff"/><rect x="140" fill="#00e9ff"/><rect x="145" fill="#00e6ff"/><rect x="150" fill="#00e3ff"/><rect x="155" fill="#00e0ff"/><rect x="160" fill="#02dcff"/><rect x="165" fill="#11d9ff"/><rect x="170" fill="#20d6ff"/><rect x="175" fill="#30d3ff"/><rect x="180" fill="#3fd0ff"/><rect x="185" fill="#4eccff"/><rect x="190" fill="#5ec9ff"/><rect x="195" fill="#6ec6ff"/><rect x="200" fill="#7ec2ff"/><rect x="205" fill="#8ebfff"/><rect x="210" fill="#9ebbff"/><rect x="215" fill="#afb8ff"/><rect x="220" fill="#c0b4ff"/><rect x="225" fill="#d1b1ff"/><rect x="230" fill="#e2adff"/><rect x="235" fill="#f3a9ff"/><rect x="240" fill="#ffa2fa"/><rect x="245" fill="#ff94ea"/><rect x="250" fill="#ff88dc"/><rect x="255" fill="#ff7dcf"/><rect x="260" fill="#ff73c4"/><rect x="265" fill="#ff6aba"/><rect x="270" fill="#ff62b0"/><rect x="275" fill="#ff5ba8"/><rect x="280" fill="#ff54a0"/><rect x="285" fill="#ff4e99"/><rect x="290" fill="#ff4892"/><rect x="295" fill="#ff438c"/><rect x="300" fill="#ff3e86"/><rect x="305" fill="#ff3981"/><rect x="310" fill="#ff357c"/><rect x="315" fill="#ff3177"/><rect x="320" fill="#ff2d72"/><rect x="325" fill="#ff296e"/><rect x="330" fill="#ff266a"/><rect x="335" fill="#ff2367"/><rect x="340" fill="#ff2063"/><rect x="345" fill="#ff1d60"/><rect x="350" fill="#ff1a5d"/><rect x="355" fill="#ff185a"/><rect x="360" fill="#ff1557"/><rect x="365" fill="#ff1355"/><rect x="370" fill="#ff1152"/><rect x="375" fill="#ff0f50"/><rect x="380" fill="#ff0d4d"/><rect x="385" fill="#ff0b4b"/><rect x="390" fill="#ff0949"/><rect x="395" fill="#ff0747"/><rect x="400" fill="#ff0645"/><rect x="405" fill="#ff0443"/><rect x="410" fill="#ff0241"/><rect x="415" fill="#ff0140"/><rect x="420" fill="#ff003e"/><rect x="425" fill="#ff003d"/><rect x="430" fill="#ff003b"/><rect x="435" fill="#ff003a"/><rect x="440" fill="#ff0038"/><rect x="445" fill="#ff0037"/><rect x="450" fill="#ff0035"/><rect x="455" fill="#ff0034"/><rect x="460" fill="#ff0033"/><rect x="465" fill="#ff0032"/><rect x="470" fill="#ff0031"/><rect x="475" fill="#ff002f"/><rect x="480" fill="#ff002e"/><rect x="485" fill="#ff002d"/><rect x="490" fill="#ff002c"/><rect x="495" fill="#ff002b"/><rect x="500" fill="#ff002a"/><rect x="505" fill="#ff0029"/><rect x="510" fill="#ff0028"/><rect x="515" fill="#ff0028"/><rect x="520" fill="#ff0027"/><rect x="525" fill="#ff0026"/><rect x="530" fill="#ff0025"/><rect x="535" fill="#ff0024"/><rect x="540" fill="#ff0024"/><rect x="545" fill="#ff0023"/><rect x="550" fill="#ff0022"/><rect x="555" fill="#ff0021"/><rect x="560" fill="#ff0021"/><rect x="565" fill="#ff0020"/><rect x="570" fill="#ff001f"/><rect x="575" fill="#ff001f"/><rect x="580" fill="#ff001e"/><rect x="585" fill="#ff001d"/><rect x="590" fill="#ff001d"/><rect x="595" fill="#ff001c"/><rect x="600" fill="#ff001c"/><rect x="605" fill="#ff001b"/><rect x="610" fill="#ff001b"/><rect x="615" fill="#ff001a"/><rect x="620" fill="#ff001a"/><rect x="625" fill="#ff0019"/><rect x="630" fill="#ff0018"/></g>
<g transform="translate(990,206)"><rect x="25" fill="#00ffe9"/><rect x="30" fill="#00ffec"/><rect x="35" fill="#00ffee"/><rect x="40" fill="#00fff0"/><rect x="45" fill="#00fff2"/><rect x="50" fill="#00fff4"/><rect x="55" fill="#00fff7"/><rect x="60" fill="#00fff9"/><rect x="65" fill="#00fffb"/><rect x="70" fill="#00fffe"/><rect x="75" fill="#00fdff"/><rect x="80" fill="#00fbff"/><rect x="85" fill="#00f8ff"/><rect x="90" fill="#00f5ff"/><rect x="95" fill="#00f3ff"/><rect x="100" fill="#00f0ff"/><rect x="105" fill="#00edff"/><rect x="110" fill="#00eaff"/><rect x="115" fill="#00e8ff"/><rect x="120" fill="#00e5ff"/><rect x="125" fill="#00e2ff"/><rect x="130" fill="#00dfff"/><rect x="135" fill="#00dcff"/><rect x="140" fill="#00d9ff"/><rect x="145" fill="#00d6ff"/><rect x="150" fill="#00d3ff"/><rect x="155" fill="#00d0ff"/><rect x="160" fill="#00cdff"/><rect x="165" fill="#0ecaff"/><rect x="170" fill="#1cc7ff"/><rect x="175" fill="#2bc4ff"/><rect x="180" fill="#39c1ff"/><rect x="185" fill="#48beff"/><rect x="190" fill="#57baff"/><rect x="195" fill="#66b7ff"/><rect x="200" fill="#75b4ff"/><rect x="205" fill="#84b0ff"/><rect x="210" fill="#94adff"/><rect x="215" fill="#a3aaff"/><rect x="220" fill="#b3a6ff"/><rect x="225" fill="#c3a3ff"/><rect x="230" fill="#d39fff"/><rect x="235" fill="#e39cff"/><rect x="240" fill="#f398ff"/><rect x="245" fill="#ff92fa"/><rect x="250" fill="#ff85eb"/><rect x="255" fill="#ff7bdd"/><rect x="260" fill="#ff71d1"/><rect x="265" fill="#ff68c6"/><rect x="270" fill="#ff60bc"/><rect x="275" fill="#ff58b3"/><rect x="280" fill="#ff52ab"/><rect x="285" fill="#ff4ba3"/><rect x="290" fill="#ff469c"/><rect x="295" fill="#ff4095"/><rect x="300" fill="#ff3c8f"/><rect x="305" fill="#ff3789"/><rect x="310" fill="#ff3384"/><rect x="315" fill="#ff2f7f"/><rect x="320" fill="#ff2b7a"/><rect x="325" fill="#ff2776"/><rect x="330" fill="#ff2472"/><rect x="335" fill="#ff216e"/><rect x="340" fill="#ff1e6a"/><rect x="345" fill="#ff1b67"/><rect x="350" fill="#ff1964"/><rect x="355" fill="#ff1661"/><rect x="360" fill="#ff145e"/><rect x="365" fill="#ff115b"/><rect x="370" fill="#ff0f58"/><rect x="375" fill="#ff0d55"/><rect x="380" fill="#ff0b53"/><rect x="385" fill="#ff0951"/><rect x="390" fill="#ff074e"/><rect x="395" fill="#ff064c"/><rect x="400" fill="#ff044a"/><rect x="405" fill="#ff0248"/><rect x="410" fill="#ff0146"/><rect x="415" fill="#ff0045"/><rect x="420" fill="#ff0043"/><rect x="425" fill="#ff0041"/><rect x="430" fill="#ff0040"/><rect x="435" fill="#ff003e"/><rect x="440" fill="#ff003c"/><rect x="445" fill="#ff003b"/><rect x="450" fill="#ff003a"/><rect x="455" fill="#ff0038"/><rect x="460" fill="#ff0037"/><rect x="465" fill="#ff0036"/><rect x="470" fill="#ff0034"/><rect x="475" fill="#ff0033"/><rect x="480" fill="#ff0032"/><rect x="485" fill="#ff0031"/><rect x="490" fill="#ff0030"/><rect x="495" fill="#ff002f"/><rect x="500" fill="#ff002e"/><rect x="505" fill="#ff002d"/><rect x="510" fill="#ff002c"/><rect x="515" fill="#ff002b"/><rect x="520" fill="#ff002a"/><rect x="525" fill="#ff0029"/><rect x="530" fill="#ff0028"/><rect x="535" fill="#ff0028"/><rect x="540" fill="#ff0027"/><rect x="545" fill="#ff0026"/><rect x="550" fill="#ff0025"/><rect x="555" fill="#ff0024"/><rect x="560" fill="#ff0024"/><rect x="565" fill="#ff0023"/><rect x="570" fill="#ff0022"/><rect x="575" fill="#ff0022"/><rect x="580" fill="#ff0021"/><rect x="585" fill="#ff0020"/><rect x="590" fill="#ff0020"/><rect x="595" fill="#ff001f"/><rect x="600" fill="#ff001e"/><rect x="605" fill="#ff001e"/><rect x="610" fill="#ff001d"/><rect x="615" fill="#ff001d"/><rect x="620" fill="#ff001c"/><rect x="625" fill="#ff001c"/></g>
<g transform="translate(990,211)"><rect x="25" fill="#00fff7"/><rect x="30" fill="#00fff9"/><rect x="35" fill="#00fffc"/><rect x="40" fill="#00fffe"/><rect x="45" fill="#00fdff"/><rect x="50" fill="#00fbff"/><rect x="55" fill="#00f9ff"/><rect x="60" fill="#00f6ff"/><rect x="65" fill="#00f4ff"/><rect x="70" fill="#00f1ff"/><rect x="75" fill="#00eeff"/><rect x="80" fill="#00ecff"/><rect x="85" fill="#00e9ff"/><rect x="90" fill="#00e7ff"/><rect x="95" fill="#00e4ff"/><rect x="100" fill="#00e1ff"/><rect x="105" fill="#00dfff"/><rect x="110" fill="#00dcff"/><rect x="115" fill="#00d9ff"/><rect x="120" fill="#00d6ff"/><rect x="125" fill="#00d4ff"/><rect x="130" fill="#00d1ff"/><rect x="135" fill="#00ceff"/><rect x="140" fill="#00cbff"/><rect x="145" fill="#00c8ff"/><rect x="150" fill="#00c5ff"/><rect x="155" fill="#00c2ff"/><rect x="160" fill="#00bfff"/><rect x="165" fill="#0bbcff"/><rect x="170" fill="#19b9ff"/><rect x="175" fill="#27b6ff"/><rect x="180" fill="#34b3ff"/><rect x="185" fill="#42b0ff"/><rect x="190" fill="#50adff"/><rect x="195" fill="#5eaaff"/><rect x="200" fill="#6da7ff"/><rect x="205" fill="#7ba3ff"/><rect x="210" fill="#8aa0ff"/><rect x="215" fill="#999dff"/><rect x="220" fill="#a79aff"/><rect x="225" fill="#b696ff"/><rect x="230" fill="#c693ff"/><rect x="235" fill="#d58fff"/><rect x="240" fill="#e48cff"/><rect x="245" fill="#f489ff"/><rect x="250" fill="#ff83fa"/><rect x="255" fill="#ff78ec"/><rect x="260" fill="#ff6edf"/><rect x="265" fill="#ff65d3"/><rect x="270" fill="#ff5dc8"/><rect x="275" fill="#ff56bf"/><rect x="280" fill="#ff4fb6"/><rect x="285" fill="#ff49ae"/><rect x="290" fill="#ff43a6"/><rect x="295" fill="#ff3e9f"/><rect x="300" fill="#ff3998"/><rect x="305" fill="#ff3592"/><rect x="310" fill="#ff318d"/><rect x="315" fill="#ff2d88"/><rect x="320" fill="#ff2983"/><rect x="325" fill="#ff257e"/><rect x="330" fill="#ff227a"/><rect x="335" fill="#ff1f75"/><rect x="340" fill="#ff1c72"/><rect x="345" fill="#ff196e"/><rect x="350" fill="#ff176a"/><rect x="355" fill="#ff1467"/><rect x="360" fill="#ff1264"/><rect x="365" fill="#ff1061"/><rect x="370" fill="#ff0e5e"/><rect x="375" fill="#ff0b5b"/><rect x="380" fill="#ff0a59"/><rect x="385" fill="#ff0856"/><rect x="390" fill="#ff0654"/><rect x="395" fill="#ff0452"/><rect x="400" fill="#ff034f"/><rect x="405" fill="#ff014d"/><rect x="410" fill="#ff004b"/><rect x="415" fill="#ff0049"/><rect x="420" fill="#ff0048"/><rect x="425" fill="#ff0046"/><rect x="430" fill="#ff0044"/><rect x="435" fill="#ff0042"/><rect x="440" fill="#ff0041"/><rect x="445" fill="#ff003f"/><rect x="450" fill="#ff003e"/><rect x="455" fill="#ff003c"/><rect x="460" fill="#ff003b"/><rect x="465" fill="#ff003a"/><rect x="470" fill="#ff0038"/><rect x="475" fill="#ff0037"/><rect x="480" fill="#ff0036"/><rect x="485" fill="#ff0035"/><rect x="490" fill="#ff0034"/><rect x="495" fill="#ff0033"/><rect x="500" fill="#ff0031"/><rect x="505" fill="#ff0030"/><rect x="510" fill="#ff002f"/><rect x="515" fill="#ff002e"/><rect x="520" fill="#ff002e"/><rect x="525" fill="#ff002d"/><rect x="530" fill="#ff002c"/><rect x="535" fill="#ff002b"/><rect x="540" fill="#ff002a"/><rect x="545" fill="#ff0029"/><rect x="550" fill="#ff0028"/><rect x="555" fill="#ff0027"/><rect x="560" fill="#ff0027"/><rect x="565" fill="#ff0026"/><rect x="570" fill="#ff0025"/><rect x="575" fill="#ff0025"/><rect x="580" fill="#ff0024"/><rect x="585" fill="#ff0023"/><rect x="590" fill="#ff0022"/><rect x="595" fill="#ff0022"/><rect x="600" fill="#ff0021"/><rect x="605" fill="#ff0021"/><rect x="610" fill="#ff0020"/><rect x="615" fill="#ff001f"/><rect x="620" fill="#ff001f"/></g>
<g transform="translate(990,216)"><rect x="25" fill="#00f9ff"/><rect x="30" fill="#00f7ff"/><rect x="35" fill="#00f4ff"/><rect x="40" fill="#00f2ff"/><rect x="45" fill="#00f0ff"/><rect x="50" fill="#00edff"/><rect x="55" fill="#00ebff"/><rect x="60" fill="#00e8ff"/><rect x="65" fill="#00e6ff"/><rect x="70" fill="#00e3ff"/><rect x="75" fill="#00e1ff"/><rect x="80" fill="#00deff"/><rect x="85" fill="#00dcff"/><rect x="90" fill="#00d9ff"/><rect x="95" fill="#00d7ff"/><rect x="100" fill="#00d4ff"/><rect x="105" fill="#00d1ff"/><rect x="110" fill="#00cfff"/><rect x="115" fill="#00ccff"/><rect x="120" fill="#00c9ff"/><rect x="125" fill="#00c7ff"/><rect x="130" fill="#00c4ff"/><rect x="135" fill="#00c1ff"/><rect x="140" fill="#00beff"/><rect x="145" fill="#00bcff"/><rect x="150" fill="#00b9ff"/><rect x="155" fill="#00b6ff"/><rect x="160" fill="#00b3ff"/><rect x="165" fill="#09b0ff"/><rect x="170" fill="#16adff"/><rect x="175" fill="#23aaff"/><rect x="180" fill="#30a7ff"/><rect x="185" fill="#3da4ff"/><rect x="190" fill="#4aa1ff"/><rect x="195" fill="#589eff"/><rect x="200" fill="#659bff"/><rect x="205" fill="#7398ff"/><rect x="210" fill="#8195ff"/><rect x="215" fill="#8f91ff"/><rect x="220" fill="#9d8eff"/><rect x="225" fill="#ab8bff"/><rect x="230" fill="#ba88ff"/><rect x="235" fill="#c884ff"/><rect x="240" fill="#d781ff"/><rect x="245" fill="#e57eff"/><rect x="250" fill="#f47aff"/><rect x="255" fill="#ff75fb"/><rect x="260" fill="#ff6bed"/><rect x="265" fill="#ff63e0"/><rect x="270" fill="#ff5bd5"/><rect x="275" fill="#ff53cb"/><rect x="280" fill="#ff4dc1"/><rect x="285" fill="#ff47b8"/><rect x="290" fill="#ff41b0"/><rect x="295" fill="#ff3ca9"/><rect x="300" fill="#ff37a2"/><rect x="305" fill="#ff339c"/><rect x="310" fill="#ff2e96"/><rect x="315" fill="#ff2a90"/><rect x="320" fill="#ff278b"/><rect x="325" fill="#ff2386"/><rect x="330" fill="#ff2081"/><rect x="335" fill="#ff1d7d"/><rect x="340" fill="#ff1a79"/><rect x="345" fill="#ff1775"/><rect x="350" fill="#ff1571"/><rect x="355" fill="#ff126e"/><rect x="360" fill="#ff106a"/><rect x="365" fill="#ff0e67"/><rect x="370" fill="#ff0c64"/><rect x="375" fill="#ff0a61"/><rect x="380" fill="#ff085f"/><rect x="385" fill="#ff065c"/><rect x="390" fill="#ff0459"/><rect x="395" fill="#ff0357"/><rect x="400" fill="#ff0155"/><rect x="405" fill="#ff0053"/><rect x="410" fill="#ff0050"/><rect x="415" fill="#ff004e"/><rect x="420" fill="#ff004c"/><rect x="425" fill="#ff004b"/><rect x="430" fill="#ff0049"/><rect x="435" fill="#ff0047"/><rect x="440" fill="#ff0045"/><rect x="445" fill="#ff0044"/><rect x="450" fill="#ff0042"/><rect x="455" fill="#ff0041"/><rect x="460" fill="#ff003f"/><rect x="465" fill="#ff003e"/><rect x="470" fill="#ff003c"/><rect x="475" fill="#ff003b"/><rect x="480" fill="#ff003a"/><rect x="485" fill="#ff0039"/><rect x="490" fill="#ff0037"/><rect x="495" fill="#ff0036"/><rect x="500" fill="#ff0035"/><rect x="505" fill="#ff0034"/><rect x="510" fill="#ff0033"/><rect x="515" fill="#ff0032"/><rect x="520" fill="#ff0031"/><rect x="525" fill="#ff0030"/><rect x="530" fill="#ff002f"/><rect x="535" fill="#ff002e"/><rect x="540" fill="#ff002d"/><rect x="545" fill="#ff002c"/><rect x="550" fill="#ff002b"/><rect x="555" fill="#ff002b"/><rect x="560" fill="#ff002a"/><rect x="565" fill="#ff0029"/><rect x="570" fill="#ff0028"/><rect x="575" fill="#ff0027"/><rect x="580" fill="#ff0027"/><rect x="585" fill="#ff0026"/><rect x="590" fill="#ff0025"/><rect x="595" fill="#ff0025"/><rect x="600" fill="#ff0024"/><rect x="605" fill="#ff0023"/><rect x="610" fill="#ff0023"/><rect x="615" fill="#ff0022"/></g>
<g transform="translate(990,221)"><rect x="30" fill="#00eaff"/><rect x="35" fill="#00e7ff"/><rect x="40" fill="#00e5ff"/><rect x="45" fill="#00e3ff"/><rect x="50" fill="#00e0ff"/><rect x="55" fill="#00deff"/><rect x="60" fill="#00dcff"/><rect x="65" fill="#00d9ff"/><rect x="70" fill="#00d7ff"/><rect x="75" fill="#00d4ff"/><rect x="80" fill="#00d2ff"/><rect x="85" fill="#00cfff"/><rect x="90" fill="#00cdff"/><rect x="95" fill="#00caff"/><rect x="100" fill="#00c8ff"/><rect x="105" fill="#00c5ff"/><rect x="110" fill="#00c3ff"/><rect x="115" fill="#00c0ff"/><rect x="120" fill="#00bdff"/><rect x="125" fill="#00bbff"/><rect x="130" fill="#00b8ff"/><rect x="135" fill="#00b5ff"/><rect x="140" fill="#00b3ff"/><rect x="145" fill="#00b0ff"/><rect x="150" fill="#00adff"/><rect x="155" fill="#00aaff"/><rect x="160" fill="#00a8ff"/><rect x="165" fill="#06a5ff"/><rect x="170" fill="#13a2ff"/><rect x="175" fill="#1f9fff"/><rect x="180" fill="#2c9cff"/><rect x="185" fill="#3899ff"/><rect x="190" fill="#4596ff"/><rect x="195" fill="#5293ff"/><rect x="200" fill="#5f90ff"/><rect x="205" fill="#6c8dff"/><rect x="210" fill="#798aff"/><rect x="215" fill="#8687ff"/><rect x="220" fill="#9484ff"/><rect x="225" fill="#a181ff"/><rect x="230" fill="#af7eff"/><rect x="235" fill="#bc7bff"/><rect x="240" fill="#ca77ff"/><rect x="245" fill="#d874ff"/><rect x="250" fill="#e771ff"/><rect x="255" fill="#f56eff"/><rect x="260" fill="#ff68fb"/><rect x="265" fill="#ff60ee"/><rect x="270" fill="#ff58e2"/><rect x="275" fill="#ff51d7"/><rect x="280" fill="#ff4acc"/><rect x="285" fill="#ff44c3"/><rect x="290" fill="#ff3fbb"/><rect x="295" fill="#ff39b3"/><rect x="300" fill="#ff35ac"/><rect x="305" fill="#ff30a5"/><rect x="310" fill="#ff2c9e"/><rect x="315" fill="#ff2898"/><rect x="320" fill="#ff2593"/><rect x="325" fill="#ff218e"/><rect x="330" fill="#ff1e89"/><rect x="335" fill="#ff1b84"/><rect x="340" fill="#ff1880"/><rect x="345" fill="#ff167c"/><rect x="350" fill="#ff1378"/><rect x="355" fill="#ff1174"/><rect x="360" fill="#ff0e71"/><rect x="365" fill="#ff0c6d"/><rect x="370" fill="#ff0a6a"/><rect x="375" fill="#ff0867"/><rect x="380" fill="#ff0664"/><rect x="385" fill="#ff0562"/><rect x="390" fill="#ff035f"/><rect x="395" fill="#ff015c"/><rect x="400" fill="#ff005a"/><rect x="405" fill="#ff0058"/><rect x="410" fill="#ff0055"/><rect x="415" fill="#ff0053"/><rect x="420" fill="#ff0051"/><rect x="425" fill="#ff004f"/><rect x="430" fill="#ff004d"/><rect x="435" fill="#ff004c"/><rect x="440" fill="#ff004a"/><rect x="445" fill="#ff0048"/><rect x="450" fill="#ff0046"/><rect x="455" fill="#ff0045"/><rect x="460" fill="#ff0043"/><rect x="465" fill="#ff0042"/><rect x="470" fill="#ff0040"/><rect x="475" fill="#ff003f"/><rect x="480" fill="#ff003e"/><rect x="485" fill="#ff003c"/><rect x="490" fill="#ff003b"/><rect x="495" fill="#ff003a"/><rect x="500" fill="#ff0039"/><rect x="505" fill="#ff0038"/><rect x="510" fill="#ff0036"/><rect x="515" fill="#ff0035"/><rect x="520" fill="#ff0034"/><rect x="525" fill="#ff0033"/><rect x="530" fill="#ff0032"/><rect x="535" fill="#ff0031"/><rect x="540" fill="#ff0030"/><rect x="545" fill="#ff002f"/><rect x="550" fill="#ff002f"/><rect x="555" fill="#ff002e"/><rect x="560" fill="#ff002d"/><rect x="565" fill="#ff002c"/><rect x="570" fill="#ff002b"/><rect x="575" fill="#ff002a"/><rect x="580" fill="#ff002a"/><rect x="585" fill="#ff0029"/><rect x="590" fill="#ff0028"/><rect x="595" fill="#ff0027"/><rect x="600" fill="#ff0027"/><rect x="605" fill="#ff0026"/><rect x="610" fill="#ff0025"/></g>
<g transform="translate(990,226)"><rect x="30" fill="#00deff"/><rect x="35" fill="#00dbff"/><rect x="40" fill="#00d9ff"/><rect x="45" fill="#00d7ff"/><rect x="50" fill="#00d5ff"/><rect x="55" fill="#00d2ff"/><rect x="60" fill="#00d0ff"/><rect x="65" fill="#00cdff"/><rect x="70" fill="#00cbff"/><rect x="75" fill="#00c9ff"/><rect x="80" fill="#00c6ff"/><rect x="85" fill="#00c4ff"/><rect x="90" fill="#00c1ff"/><rect x="95" fill="#00bfff"/><rect x="100" fill="#00bcff"/><rect x="105" fill="#00baff"/><rect x="110" fill="#00b7ff"/><rect x="115" fill="#00b5ff"/><rect x="120" fill="#00b2ff"/><rect x="125" fill="#00b0ff"/><rect x="130" fill="#00adff"/><rect x="135" fill="#00abff"/><rect x="140" fill="#00a8ff"/><rect x="145" fill="#00a5ff"/><rect x="150" fill="#00a3ff"/><rect x="155" fill="#00a0ff"/><rect x="160" fill="#009dff"/><rect x="165" fill="#049aff"/><rect x="170" fill="#1098ff"/><rect x="175" fill="#1c95ff"/><rect x="180" fill="#2892ff"/><rect x="185" fill="#348fff"/><rect x="190" fill="#408cff"/><rect x="195" fill="#4c89ff"/><rect x="200" fill="#5987ff"/><rect x="205" fill="#6584ff"/><rect x="210" fill="#7281ff"/><rect x="215" fill="#7e7eff"/><rect x="220" fill="#8b7bff"/><rect x="225" fill="#9878ff"/><rect x="230" fill="#a575ff"/><rect x="235" fill="#b272ff"/><rect x="240" fill="#bf6eff"/><rect x="245" fill="#cc6bff"/><rect x="250" fill="#da68ff"/><rect x="255" fill="#e765ff"/><rect x="260" fill="#f562ff"/><rect x="265" fill="#ff5dfb"/><rect x="270" fill="#ff55ee"/><rect x="275" fill="#ff4ee3"/><rect x="280" fill="#ff48d8"/><rect x="285" fill="#ff42ce"/><rect x="290" fill="#ff3cc5"/><rect x="295" fill="#ff37bd"/><rect x="300" fill="#ff32b5"/><rect x="305" fill="#ff2eae"/><rect x="310" fill="#ff2aa7"/><rect x="315" fill="#ff26a1"/><rect x="320" fill="#ff239b"/><rect x="325" fill="#ff1f96"/><rect x="330" fill="#ff1c91"/><rect x="335" fill="#ff198c"/><rect x="340" fill="#ff1687"/><rect x="345" fill="#ff1483"/><rect x="350" fill="#ff117f"/><rect x="355" fill="#ff0f7b"/><rect x="360" fill="#ff0d77"/><rect x="365" fill="#ff0a74"/><rect x="370" fill="#ff0870"/><rect x="375" fill="#ff076d"/><rect x="380" fill="#ff056a"/><rect x="385" fill="#ff0367"/><rect x="390" fill="#ff0164"/><rect x="395" fill="#ff0062"/><rect x="400" fill="#ff005f"/><rect x="405" fill="#ff005d"/><rect x="410" fill="#ff005b"/><rect x="415" fill="#ff0058"/><rect x="420" fill="#ff0056"/><rect x="425" fill="#ff0054"/><rect x="430" fill="#ff0052"/><rect x="435" fill="#ff0050"/><rect x="440" fill="#ff004e"/><rect x="445" fill="#ff004d"/><rect x="450" fill="#ff004b"/><rect x="455" fill="#ff0049"/><rect x="460" fill="#ff0048"/><rect x="465" fill="#ff0046"/><rect x="470" fill="#ff0044"/><rect x="475" fill="#ff0043"/><rect x="480" fill="#ff0042"/><rect x="485" fill="#ff0040"/><rect x="490" fill="#ff003f"/><rect x="495" fill="#ff003e"/><rect x="500" fill="#ff003c"/><rect x="505" fill="#ff003b"/><rect x="510" fill="#ff003a"/><rect x="515" fill="#ff0039"/><rect x="520" fill="#ff0038"/><rect x="525" fill="#ff0037"/><rect x="530" fill="#ff0036"/><rect x="535" fill="#ff0035"/><rect x="540" fill="#ff0034"/><rect x="545" fill="#ff0033"/><rect x="550" fill="#ff0032"/><rect x="555" fill="#ff0031"/><rect x="560" fill="#ff0030"/><rect x="565" fill="#ff002f"/><rect x="570" fill="#ff002e"/><rect x="575" fill="#ff002d"/><rect x="580" fill="#ff002d"/><rect x="585" fill="#ff002c"/><rect x="590" fill="#ff002b"/><rect x="595" fill="#ff002a"/><rect x="600" fill="#ff002a"/><rect x="605" fill="#ff0029"/></g>
<g transform="translate(990,231)"><rect x="30" fill="#00d3ff"/><rect x="35" fill="#00d0ff"/><rect x="40" fill="#00ceff"/><rect x="45" fill="#00ccff"/><rect x="50" fill="#00caff"/><rect x="55" fill="#00c7ff"/><rect x="60" fill="#00c5ff"/><rect x="65" fill="#00c3ff"/><rect x="70" fill="#00c0ff"/><rect x="75" fill="#00beff"/><rect x="80" fill="#00bcff"/><rect x="85" fill="#00b9ff"/><rect x="90" fill="#00b7ff"/><rect x="95" fill="#00b5ff"/><rect x="100" fill="#00b2ff"/><rect x="105" fill="#00b0ff"/><rect x="110" fill="#00adff"/><rect x="115" fill="#00abff"/><rect x="120" fill="#00a8ff"/><rect x="125" fill="#00a6ff"/><rect x="130" fill="#00a3ff"/><rect x="135" fill="#00a1ff"/><rect x="140" fill="#009eff"/><rect x="145" fill="#009bff"/><rect x="150" fill="#0099ff"/><rect x="155" fill="#0096ff"/><rect x="160" fill="#0094ff"/><rect x="165" fill="#0291ff"/><rect x="170" fill="#0d8eff"/><rect x="175" fill="#198cff"/><rect x="180" fill="#2489ff"/><rect x="185" fill="#3086ff"/><rect x="190" fill="#3b83ff"/><rect x="195" fill="#4780ff"/><rect x="200" fill="#537eff"/><rect x="205" fill="#5f7bff"/><rect x="210" fill="#6b78ff"/><rect x="215" fill="#7775ff"/><rect x="220" fill="#8372ff"/><rect x="225" fill="#8f6fff"/><rect x="230" fill="#9c6cff"/><rect x="235" fill="#a869ff"/><rect x="240" fill="#b566ff"/><rect x="245" fill="#c263ff"/><rect x="250" fill="#ce60ff"/><rect x="255" fill="#db5dff"/><rect x="260" fill="#e85aff"/><rect x="265" fill="#f557ff"/><rect x="270" fill="#ff52fb"/><rect x="275" fill="#ff4bef"/><rect x="280" fill="#ff45e4"/><rect x="285" fill="#ff3fd9"/><rect x="290" fill="#ff3ad0"/><rect x="295" fill="#ff35c7"/><rect x="300" fill="#ff30bf"/><rect x="305" fill="#ff2cb7"/><rect x="310" fill="#ff28b0"/><rect x="315" fill="#ff24aa"/><rect x="320" fill="#ff20a4"/><rect x="325" fill="#ff1d9e"/><rect x="330" fill="#ff1a98"/><rect x="335" fill="#ff1793"/><rect x="340" fill="#ff148f"/><rect x="345" fill="#ff128a"/><rect x="350" fill="#ff0f86"/><rect x="355" fill="#ff0d82"/><rect x="360" fill="#ff0b7e"/><rect x="365" fill="#ff097a"/><rect x="370" fill="#ff0777"/><rect x="375" fill="#ff0573"/><rect x="380" fill="#ff0370"/><rect x="385" fill="#ff016d"/><rect x="390" fill="#ff006a"/><rect x="395" fill="#ff0067"/><rect x="400" fill="#ff0065"/><rect x="405" fill="#ff0062"/><rect x="410" fill="#ff0060"/><rect x="415" fill="#ff005d"/><rect x="420" fill="#ff005b"/><rect x="425" fill="#ff0059"/><rect x="430" fill="#ff0057"/><rect x="435" fill="#ff0055"/><rect x="440" fill="#ff0053"/><rect x="445" fill="#ff0051"/><rect x="450" fill="#ff004f"/><rect x="455" fill="#ff004d"/><rect x="460" fill="#ff004c"/><rect x="465" fill="#ff004a"/><rect x="470" fill="#ff0049"/><rect x="475" fill="#ff0047"/><rect x="480" fill="#ff0046"/><rect x="485" fill="#ff0044"/><rect x="490" fill="#ff0043"/><rect x="495" fill="#ff0041"/><rect x="500" fill="#ff0040"/><rect x="505" fill="#ff003f"/><rect x="510" fill="#ff003e"/><rect x="515" fill="#ff003c"/><rect x="520" fill="#ff003b"/><rect x="525" fill="#ff003a"/><rect x="530" fill="#ff0039"/><rect x="535" fill="#ff0038"/><rect x="540" fill="#ff0037"/><rect x="545" fill="#ff0036"/><rect x="550" fill="#ff0035"/><rect x="555" fill="#ff0034"/><rect x="560" fill="#ff0033"/><rect x="565" fill="#ff0032"/><rect x="570" fill="#ff0031"/><rect x="575" fill="#ff0030"/><rect x="580" fill="#ff002f"/><rect x="585" fill="#ff002f"/><rect x="590" fill="#ff002e"/><rect x="595" fill="#ff002d"/><rect x="600" fill="#ff002c"/></g>
<g transform="translate(990,236)"><rect x="35" fill="#00c6ff"/><rect x="40" fill="#00c4ff"/><rect x="45" fill="#00c2ff"/><rect x="50" fill="#00bfff"/><rect x="55" fill="#00bdff"/><rect x="60" fill="#00bbff"/><rect x="65" fill="#00b9ff"/><rect x="70" fill="#00b6ff"/><rect x="75" fill="#00b4ff"/><rect x="80" fill="#00b2ff"/><rect x="85" fill="#00b0ff"/><rect x="90" fill="#00adff"/><rect x="95" fill="#00abff"/><rect x="100" fill="#00a9ff"/><rect x="105" fill="#00a6ff"/><rect x="110" fill="#00a4ff"/><rect x="115" fill="#00a1ff"/><rect x="120" fill="#009fff"/><rect x="125" fill="#009cff"/><rect x="130" fill="#009aff"/><rect x="135" fill="#0097ff"/><rect x="140" fill="#0095ff"/><rect x="145" fill="#0092ff"/><rect x="150" fill="#0090ff"/><rect x="155" fill="#008dff"/><rect x="160" fill="#008bff"/><rect x="165" fill="#0088ff"/><rect x="170" fill="#0b86ff"/><rect x="175" fill="#1683ff"/><rect x="180" fill="#2180ff"/><rect x="185" fill="#2c7eff"/><rect x="190" fill="#377bff"/><rect x="195" fill="#4378ff"/><rect x="200" fill="#4e75ff"/><rect x="205" fill="#5973ff"/><rect x="210" fill="#6570ff"/><rect x="215" fill="#706dff"/><rect x="220" fill="#7c6aff"/><rect x="225" fill="#8867ff"/><rect x="230" fill="#9465ff"/><rect x="235" fill="#a062ff"/><rect x="240" fill="#ac5fff"/><rect x="245" fill="#b85cff"/><rect x="250" fill="#c459ff"/><rect x="255" fill="#d056ff"/><rect x="260" fill="#dd53ff"/><rect x="265" fill="#e950ff"/><rect x="270" fill="#f64dff"/><rect x="275" fill="#ff49fc"/><rect x="280" fill="#ff42f0"/><rect x="285" fill="#ff3de5"/><rect x="290" fill="#ff37db"/><rect x="295" fill="#ff32d1"/><rect x="300" fill="#ff2ec9"/><rect x="305" fill="#ff29c1"/><rect x="310" fill="#ff25ba"/><rect x="315" fill="#ff22b3"/><rect x="320" fill="#ff1eac"/><rect x="325" fill="#ff1ba6"/><rect x="330" fill="#ff18a0"/><rect x="335" fill="#ff159b"/><rect x="340" fill="#ff1296"/><rect x="345" fill="#ff1091"/><rect x="350" fill="#ff0d8d"/><rect x="355" fill="#ff0b88"/><rect x="360" fill="#ff0984"/><rect x="365" fill="#ff0780"/><rect x="370" fill="#ff057d"/><rect x="375" fill="#ff0379"/><rect x="380" fill="#ff0176"/><rect x="385" fill="#ff0073"/><rect x="390" fill="#ff0070"/><rect x="395" fill="#ff006d"/><rect x="400" fill="#ff006a"/><rect x="405" fill="#ff0067"/><rect x="410" fill="#ff0065"/><rect x="415" fill="#ff0062"/><rect x="420" fill="#ff0060"/><rect x="425" fill="#ff005e"/><rect x="430" fill="#ff005c"/><rect x="435" fill="#ff0059"/><rect x="440" fill="#ff0057"/><rect x="445" fill="#ff0055"/><rect x="450" fill="#ff0054"/><rect x="455" fill="#ff0052"/><rect x="460" fill="#ff0050"/><rect x="465" fill="#ff004e"/><rect x="470" fill="#ff004d"/><rect x="475" fill="#ff004b"/><rect x="480" fill="#ff0049"/><rect x="485" fill="#ff0048"/><rect x="490" fill="#ff0047"/><rect x="495" fill="#ff0045"/><rect x="500" fill="#ff0044"/><rect x="505" fill="#ff0042"/><rect x="510" fill="#ff0041"/><rect x="515" fill="#ff0040"/><rect x="520" fill="#ff003f"/><rect x="525" fill="#ff003e"/><rect x="530" fill="#ff003c"/><rect x="535" fill="#ff003b"/><rect x="540" fill="#ff003a"/><rect x="545" fill="#ff0039"/><rect x="550" fill="#ff0038"/><rect x="555" fill="#ff0037"/><rect x="560" fill="#ff0036"/><rect x="565" fill="#ff0035"/><rect x="570" fill="#ff0034"/><rect x="575" fill="#ff0033"/><rect x="580" fill="#ff0032"/><rect x="585" fill="#ff0032"/><rect x="590" fill="#ff0031"/><rect x="595" fill="#ff0030"/></g>
<g transform="translate(990,241)"><rect x="35" fill="#00bdff"/><rect x="40" fill="#00baff"/><rect x="45" fill="#00b8ff"/><rect x="50" fill="#00b6ff"/><rect x="55" fill="#00b4ff"/><rect x="60" fill="#00b2ff"/><rect x="65" fill="#00afff"/><rect x="70" fill="#00adff"/><rect x="75" fill="#00abff"/><rect x="80" fill="#00a9ff"/><rect x="85" fill="#00a7ff"/><rect x="90" fill="#00a4ff"/><rect x="95" fill="#00a2ff"/><rect x="100" fill="#00a0ff"/><rect x="105" fill="#009dff"/><rect x="110" fill="#009bff"/><rect x="115" fill="#0099ff"/><rect x="120" fill="#0096ff"/><rect x="125" fill="#0094ff"/><rect x="130" fill="#0091ff"/><rect x="135" fill="#008fff"/><rect x="140" fill="#008dff"/><rect x="145" fill="#008aff"/><rect x="150" fill="#0088ff"/><rect x="155" fill="#0085ff"/><rect x="160" fill="#0083ff"/><rect x="165" fill="#0080ff"/><rect x="170" fill="#097eff"/><rect x="175" fill="#147bff"/><rect x="180" fill="#1e78ff"/><rect x="185" fill="#2976ff"/><rect x="190" fill="#3373ff"/><rect x="195" fill="#3e71ff"/><rect x="200" fill="#496eff"/><rect x="205" fill="#546bff"/><rect x="210" fill="#5f68ff"/><rect x="215" fill="#6a66ff"/><rect x="220" fill="#7563ff"/><rect x="225" fill="#8160ff"/><rect x="230" fill="#8c5dff"/><rect x="235" fill="#975bff"/><rect x="240" fill="#a358ff"/><rect x="245" fill="#af55ff"/><rect x="250" fill="#ba52ff"/><rect x="255" fill="#c64fff"/><rect x="260" fill="#d24cff"/><rect x="265" fill="#de49ff"/><rect x="270" fill="#ea46ff"/><rect x="275" fill="#f644ff"/><rect x="280" fill="#ff40fc"/><rect x="285" fill="#ff3af0"/><rect x="290" fill="#ff35e6"/><rect x="295" fill="#ff30dc"/><rect x="300" fill="#ff2bd3"/><rect x="305" fill="#ff27cb"/><rect x="310" fill="#ff23c3"/><rect x="315" fill="#ff20bc"/><rect x="320" fill="#ff1cb5"/><rect x="325" fill="#ff19ae"/><rect x="330" fill="#ff16a8"/><rect x="335" fill="#ff13a3"/><rect x="340" fill="#ff109d"/><rect x="345" fill="#ff0e98"/><rect x="350" fill="#ff0c94"/><rect x="355" fill="#ff098f"/><rect x="360" fill="#ff078b"/><rect x="365" fill="#ff0587"/><rect x="370" fill="#ff0383"/><rect x="375" fill="#ff017f"/><rect x="380" fill="#ff007c"/><rect x="385" fill="#ff0079"/><rect x="390" fill="#ff0075"/><rect x="395" fill="#ff0072"/><rect x="400" fill="#ff006f"/><rect x="405" fill="#ff006d"/><rect x="410" fill="#ff006a"/><rect x="415" fill="#ff0067"/><rect x="420" fill="#ff0065"/><rect x="425" fill="#ff0063"/><rect x="430" fill="#ff0060"/><rect x="435" fill="#ff005e"/><rect x="440" fill="#ff005c"/><rect x="445" fill="#ff005a"/><rect x="450" fill="#ff0058"/><rect x="455" fill="#ff0056"/><rect x="460" fill="#ff0054"/><rect x="465" fill="#ff0052"/><rect x="470" fill="#ff0051"/><rect x="475" fill="#ff004f"/><rect x="480" fill="#ff004d"/><rect x="485" fill="#ff004c"/><rect x="490" fill="#ff004a"/><rect x="495" fill="#ff0049"/><rect x="500" fill="#ff0047"/><rect x="505" fill="#ff0046"/><rect x="510" fill="#ff0045"/><rect x="515" fill="#ff0043"/><rect x="520" fill="#ff0042"/><rect x="525" fill="#ff0041"/><rect x="530" fill="#ff0040"/><rect x="535" fill="#ff003f"/><rect x="540" fill="#ff003d"/><rect x="545" fill="#ff003c"/><rect x="550" fill="#ff003b"/><rect x="555" fill="#ff003a"/><rect x="560" fill="#ff0039"/><rect x="565" fill="#ff0038"/><rect x="570" fill="#ff0037"/><rect x="575" fill="#ff0036"/><rect x="580" fill="#ff0035"/><rect x="585" fill="#ff0035"/><rect x="590" fill="#ff0034"/><rect x="595" fill="#ff0033"/></g>
<g transform="translate(990,246)"><rect x="40" fill="#00b2ff"/><rect x="45" fill="#00afff"/><rect x="50" fill="#00adff"/><rect x="55" fill="#00abff"/><rect x="60" fill="#00a9ff"/><rect x="65" fill="#00a7ff"/><rect x="70" fill="#00a5ff"/><rect x="75" fill="#00a3ff"/><rect x="80" fill="#00a0ff"/><rect x="85" fill="#009eff"/><rect x="90" fill="#009cff"/><rect x="95" fill="#009aff"/><rect x="100" fill="#0097ff"/><rect x="105" fill="#0095ff"/><rect x="110" fill="#0093ff"/><rect x="115" fill="#0090ff"/><rect x="120" fill="#008eff"/><rect x="125" fill="#008cff"/><rect x="130" fill="#0089ff"/><rect x="135" fill="#0087ff"/><rect x="140" fill="#0085ff"/><rect x="145" fill="#0082ff"/><rect x="150" fill="#0080ff"/><rect x="155" fill="#007eff"/><rect x="160" fill="#007bff"/><rect x="165" fill="#0079ff"/><rect x="170" fill="#0776ff"/><rect x="175" fill="#1174ff"/><rect x="180" fill="#1b71ff"/><rect x="185" fill="#266fff"/><rect x="190" fill="#306cff"/><rect x="195" fill="#3a69ff"/><rect x="200" fill="#4567ff"/><rect x="205" fill="#4f64ff"/><rect x="210" fill="#5a62ff"/><rect x="215" fill="#645fff"/><rect x="220" fill="#6f5cff"/><rect x="225" fill="#7a5aff"/><rect x="230" fill="#8557ff"/><rect x="235" fill="#9054ff"/><rect x="240" fill="#9b52ff"/><rect x="245" fill="#a64fff"/><rect x="250" fill="#b14cff"/><rect x="255" fill="#bd49ff"/><rect x="260" fill="#c846ff"/><rect x="265" fill="#d344ff"/><rect x="270" fill="#df41ff"/><rect x="275" fill="#eb3eff"/><rect x="280" fill="#f63bff"/><rect x="285" fill="#ff37fc"/><rect x="290" fill="#ff32f1"/><rect x="295" fill="#ff2de7"/><rect x="300" fill="#ff29dd"/><rect x="305" fill="#ff25d4"/><rect x="310" fill="#ff21cc"/><rect x="315" fill="#ff1dc5"/><rect x="320" fill="#ff1abd"/><rect x="325" fill="#ff17b7"/><rect x="330" fill="#ff14b0"/><rect x="335" fill="#ff11ab"/><rect x="340" fill="#ff0ea5"/><rect x="345" fill="#ff0ca0"/><rect x="350" fill="#ff0a9b"/><rect x="355" fill="#ff0796"/><rect x="360" fill="#ff0592"/><rect x="365" fill="#ff038d"/><rect x="370" fill="#ff0189"/><rect x="375" fill="#ff0086"/><rect x="380" fill="#ff0082"/><rect x="385" fill="#ff007e"/><rect x="390" fill="#ff007b"/><rect x="395" fill="#ff0078"/><rect x="400" fill="#ff0075"/><rect x="405" fill="#ff0072"/><rect x="410" fill="#ff006f"/><rect x="415" fill="#ff006d"/><rect x="420" fill="#ff006a"/><rect x="425" fill="#ff0067"/><rect x="430" fill="#ff0065"/><rect x="435" fill="#ff0063"/><rect x="440" fill="#ff0061"/><rect x="445" fill="#ff005e"/><rect x="450" fill="#ff005c"/><rect x="455" fill="#ff005a"/><rect x="460" fill="#ff0058"/><rect x="465" fill="#ff0057"/><rect x="470" fill="#ff0055"/><rect x="475" fill="#ff0053"/><rect x="480" fill="#ff0051"/><rect x="485" fill="#ff0050"/><rect x="490" fill="#ff004e"/><rect x="495" fill="#ff004d"/><rect x="500" fill="#ff004b"/><rect x="505" fill="#ff004a"/><rect x="510" fill="#ff0048"/><rect x="515" fill="#ff0047"/><rect x="520" fill="#ff0046"/><rect x="525" fill="#ff0044"/><rect x="530" fill="#ff0043"/><rect x="535" fill="#ff0042"/><rect x="540" fill="#ff0041"/><rect x="545" fill="#ff0040"/><rect x="550" fill="#ff003f"/><rect x="555" fill="#ff003d"/><rect x="560" fill="#ff003c"/><rect x="565" fill="#ff003b"/><rect x="570" fill="#ff003a"/><rect x="575" fill="#ff0039"/><rect x="580" fill="#ff0038"/><rect x="585" fill="#ff0037"/><rect x="590" fill="#ff0037"/></g>
<g transform="translate(990,251)"><rect x="40" fill="#00a9ff"/><rect x="45" fill="#00a7ff"/><rect x="50" fill="#00a5ff"/><rect x="55" fill="#00a3ff"/><rect x="60" fill="#00a1ff"/><rect x="65" fill="#009fff"/><rect x="70" fill="#009dff"/><rect x="75" fill="#009bff"/><rect x="80" fill="#0098ff"/><rect x="85" fill="#0096ff"/><rect x="90" fill="#0094ff"/><rect x="95" fill="#0092ff"/><rect x="100" fill="#0090ff"/><rect x="105" fill="#008dff"/><rect x="110" fill="#008bff"/><rect x="115" fill="#0089ff"/><rect x="120" fill="#0087ff"/><rect x="125" fill="#0084ff"/><rect x="130" fill="#0082ff"/><rect x="135" fill="#0080ff"/><rect x="140" fill="#007dff"/><rect x="145" fill="#007bff"/><rect x="150" fill="#0079ff"/><rect x="155" fill="#0076ff"/><rect x="160" fill="#0074ff"/><rect x="165" fill="#0072ff"/><rect x="170" fill="#056fff"/><rect x="175" fill="#0f6dff"/><rect x="180" fill="#196aff"/><rect x="185" fill="#2368ff"/><rect x="190" fill="#2d65ff"/><rect x="195" fill="#3763ff"/><rect x="200" fill="#4160ff"/><rect x="205" fill="#4b5eff"/><rect x="210" fill="#555bff"/><rect x="215" fill="#5f59ff"/><rect x="220" fill="#6a56ff"/><rect x="225" fill="#7454ff"/><rect x="230" fill="#7e51ff"/><rect x="235" fill="#894eff"/><rect x="240" fill="#944cff"/><rect x="245" fill="#9e49ff"/><rect x="250" fill="#a946ff"/><rect x="255" fill="#b444ff"/><rect x="260" fill="#bf41ff"/><rect x="265" fill="#ca3eff"/><rect x="270" fill="#d53bff"/><rect x="275" fill="#e039ff"/><rect x="280" fill="#eb36ff"/><rect x="285" fill="#f733ff"/><rect x="290" fill="#ff2ffc"/><rect x="295" fill="#ff2bf1"/><rect x="300" fill="#ff26e7"/><rect x="305" fill="#ff22de"/><rect x="310" fill="#ff1fd6"/><rect x="315" fill="#ff1bce"/><rect x="320" fill="#ff18c6"/><rect x="325" fill="#ff15bf"/><rect x="330" fill="#ff12b9"/><rect x="335" fill="#ff0fb2"/><rect x="340" fill="#ff0cad"/><rect x="345" fill="#ff0aa7"/><rect x="350" fill="#ff08a2"/><rect x="355" fill="#ff069d"/><rect x="360" fill="#ff0498"/><rect x="365" fill="#ff0294"/><rect x="370" fill="#ff0090"/><rect x="375" fill="#ff008c"/><rect x="380" fill="#ff0088"/><rect x="385" fill="#ff0084"/><rect x="390" fill="#ff0081"/><rect x="395" fill="#ff007e"/><rect x="400" fill="#ff007a"/><rect x="405" fill="#ff0077"/><rect x="410" fill="#ff0074"/><rect x="415" fill="#ff0072"/><rect x="420" fill="#ff006f"/><rect x="425" fill="#ff006c"/><rect x="430" fill="#ff006a"/><rect x="435" fill="#ff0068"/><rect x="440" fill="#ff0065"/><rect x="445" fill="#ff0063"/><rect x="450" fill="#ff0061"/><rect x="455" fill="#ff005f"/><rect x="460" fill="#ff005d"/><rect x="465" fill="#ff005b"/><rect x="470" fill="#ff0059"/><rect x="475" fill="#ff0057"/><rect x="480" fill="#ff0055"/><rect x="485" fill="#ff0054"/><rect x="490" fill="#ff0052"/><rect x="495" fill="#ff0051"/><rect x="500" fill="#ff004f"/><rect x="505" fill="#ff004d"/><rect x="510" fill="#ff004c"/><rect x="515" fill="#ff004b"/><rect x="520" fill="#ff0049"/><rect x="525" fill="#ff0048"/><rect x="530" fill="#ff0047"/><rect x="535" fill="#ff0045"/><rect x="540" fill="#ff0044"/><rect x="545" fill="#ff0043"/><rect x="550" fill="#ff0042"/><rect x="555" fill="#ff0041"/><rect x="560" fill="#ff0040"/><rect x="565" fill="#ff003e"/><rect x="570" fill="#ff003d"/><rect x="575" fill="#ff003c"/><rect x="580" fill="#ff003b"/><rect x="585" fill="#ff003a"/></g>
<g transform="translate(990,256)"><rect x="45" fill="#009fff"/><rect x="50" fill="#009dff"/><rect x="55" fill="#009bff"/><rect x="60" fill="#0099ff"/><rect x="65" fill="#0097ff"/><rect x="70" fill="#0095ff"/><rect x="75" fill="#0093ff"/><rect x="80" fill="#0091ff"/><rect x="85" fill="#008fff"/><rect x="90" fill="#008dff"/><rect x="95" fill="#008bff"/><rect x="100" fill="#0088ff"/><rect x="105" fill="#0086ff"/><rect x="110" fill="#0084ff"/><rect x="115" fill="#0082ff"/><rect x="120" fill="#0080ff"/><rect x="125" fill="#007dff"/><rect x="130" fill="#007bff"/><rect x="135" fill="#0079ff"/><rect x="140" fill="#0077ff"/><rect x="145" fill="#0074ff"/><rect x="150" fill="#0072ff"/><rect x="155" fill="#0070ff"/><rect x="160" fill="#006dff"/><rect x="165" fill="#006bff"/><rect x="170" fill="#0469ff"/><rect x="175" fill="#0d66ff"/><rect x="180" fill="#1664ff"/><rect x="185" fill="#2062ff"/><rect x="190" fill="#2a5fff"/><rect x="195" fill="#335dff"/><rect x="200" fill="#3d5aff"/><rect x="205" fill="#4758ff"/><rect x="210" fill="#5055ff"/><rect x="215" fill="#5a53ff"/><rect x="220" fill="#6450ff"/><rect x="225" fill="#6e4eff"/><rect x="230" fill="#784bff"/><rect x="235" fill="#8349ff"/><rect x="240" fill="#8d46ff"/><rect x="245" fill="#9744ff"/><rect x="250" fill="#a141ff"/><rect x="255" fill="#ac3eff"/><rect x="260" fill="#b63cff"/><rect x="265" fill="#c139ff"/><rect x="270" fill="#cc36ff"/><rect x="275" fill="#d634ff"/><rect x="280" fill="#e131ff"/><rect x="285" fill="#ec2eff"/><rect x="290" fill="#f72bff"/><rect x="295" fill="#ff28fc"/><rect x="300" fill="#ff24f2"/><rect x="305" fill="#ff20e8"/><rect x="310" fill="#ff1cdf"/><rect x="315" fill="#ff19d7"/><rect x="320" fill="#ff15cf"/><rect x="325" fill="#ff12c8"/><rect x="330" fill="#ff10c1"/><rect x="335" fill="#ff0dba"/><rect x="340" fill="#ff0ab4"/><rect x="345" fill="#ff08af"/><rect x="350" fill="#ff06a9"/><rect x="355" fill="#ff04a4"/><rect x="360" fill="#ff029f"/><rect x="365" fill="#ff009b"/><rect x="370" fill="#ff0096"/><rect x="375" fill="#ff0092"/><rect x="380" fill="#ff008e"/><rect x="385" fill="#ff008a"/><rect x="390" fill="#ff0087"/><rect x="395" fill="#ff0083"/><rect x="400" fill="#ff0080"/><rect x="405" fill="#ff007d"/><rect x="410" fill="#ff007a"/><rect x="415" fill="#ff0077"/><rect x="420" fill="#ff0074"/><rect x="425" fill="#ff0071"/><rect x="430" fill="#ff006f"/><rect x="435" fill="#ff006c"/><rect x="440" fill="#ff006a"/><rect x="445" fill="#ff0068"/><rect x="450" fill="#ff0065"/><rect x="455" fill="#ff0063"/><rect x="460" fill="#ff0061"/><rect x="465" fill="#ff005f"/><rect x="470" fill="#ff005d"/><rect x="475" fill="#ff005b"/><rect x="480" fill="#ff0059"/><rect x="485" fill="#ff0058"/><rect x="490" fill="#ff0056"/><rect x="495" fill="#ff0054"/><rect x="500" fill="#ff0053"/><rect x="505" fill="#ff0051"/><rect x="510" fill="#ff0050"/><rect x="515" fill="#ff004e"/><rect x="520" fill="#ff004d"/><rect x="525" fill="#ff004b"/><rect x="530" fill="#ff004a"/><rect x="535" fill="#ff0049"/><rect x="540" fill="#ff0047"/><rect x="545" fill="#ff0046"/><rect x="550" fill="#ff0045"/><rect x="555" fill="#ff0044"/><rect x="560" fill="#ff0043"/><rect x="565" fill="#ff0042"/><rect x="570" fill="#ff0040"/><rect x="575" fill="#ff003f"/><rect x="580" fill="#ff003e"/></g>
<g transform="translate(990,261)"><rect x="45" fill="#0098ff"/><rect x="50" fill="#0096ff"/><rect x="55" fill="#0094ff"/><rect x="60" fill="#0092ff"/><rect x="65" fill="#0090ff"/><rect x="70" fill="#008eff"/><rect x="75" fill="#008cff"/><rect x="80" fill="#008aff"/><rect x="85" fill="#0088ff"/><rect x="90" fill="#0086ff"/><rect x="95" fill="#0084ff"/><rect x="100" fill="#0082ff"/><rect x="105" fill="#0080ff"/><rect x="110" fill="#007dff"/><rect x="115" fill="#007bff"/><rect x="120" fill="#0079ff"/><rect x="125" fill="#0077ff"/><rect x="130" fill="#0075ff"/><rect x="135" fill="#0073ff"/><rect x="140" fill="#0070ff"/><rect x="145" fill="#006eff"/><rect x="150" fill="#006cff"/><rect x="155" fill="#006aff"/><rect x="160" fill="#0067ff"/><rect x="165" fill="#0065ff"/><rect x="170" fill="#0263ff"/><rect x="175" fill="#0b60ff"/><rect x="180" fill="#145eff"/><rect x="185" fill="#1d5cff"/><rect x="190" fill="#2759ff"/><rect x="195" fill="#3057ff"/><rect x="200" fill="#3955ff"/><rect x="205" fill="#4352ff"/><rect x="210" fill="#4c50ff"/><rect x="215" fill="#564dff"/><rect x="220" fill="#5f4bff"/><rect x="225" fill="#6949ff"/><rect x="230" fill="#7346ff"/><rect x="235" fill="#7d44ff"/><rect x="240" fill="#8641ff"/><rect x="245" fill="#903fff"/><rect x="250" fill="#9a3cff"/><rect x="255" fill="#a439ff"/><rect x="260" fill="#ae37ff"/><rect x="265" fill="#b934ff"/><rect x="270" fill="#c332ff"/><rect x="275" fill="#cd2fff"/><rect x="280" fill="#d72cff"/><rect x="285" fill="#e22aff"/><rect x="290" fill="#ec27ff"/><rect x="295" fill="#f724ff"/><rect x="300" fill="#ff21fc"/><rect x="305" fill="#ff1df2"/><rect x="310" fill="#ff1ae9"/><rect x="315" fill="#ff16e0"/><rect x="320" fill="#ff13d8"/><rect x="325" fill="#ff10d0"/><rect x="330" fill="#ff0dc9"/><rect x="335" fill="#ff0bc2"/><rect x="340" fill="#ff08bc"/><rect x="345" fill="#ff06b6"/><rect x="350" fill="#ff04b1"/><rect x="355" fill="#ff02ab"/><rect x="360" fill="#ff00a6"/><rect x="365" fill="#ff00a1"/><rect x="370" fill="#ff009d"/><rect x="375" fill="#ff0098"/><rect x="380" fill="#ff0094"/><rect x="385" fill="#ff0090"/><rect x="390" fill="#ff008d"/><rect x="395" fill="#ff0089"/><rect x="400" fill="#ff0086"/><rect x="405" fill="#ff0082"/><rect x="410" fill="#ff007f"/><rect x="415" fill="#ff007c"/><rect x="420" fill="#ff0079"/><rect x="425" fill="#ff0076"/><rect x="430" fill="#ff0074"/><rect x="435" fill="#ff0071"/><rect x="440" fill="#ff006f"/><rect x="445" fill="#ff006c"/><rect x="450" fill="#ff006a"/><rect x="455" fill="#ff0068"/><rect x="460" fill="#ff0065"/><rect x="465" fill="#ff0063"/><rect x="470" fill="#ff0061"/><rect x="475" fill="#ff005f"/><rect x="480" fill="#ff005e"/><rect x="485" fill="#ff005c"/><rect x="490" fill="#ff005a"/><rect x="495" fill="#ff0058"/><rect x="500" fill="#ff0057"/><rect x="505" fill="#ff0055"/><rect x="510" fill="#ff0053"/><rect x="515" fill="#ff0052"/><rect x="520" fill="#ff0050"/><rect x="525" fill="#ff004f"/><rect x="530" fill="#ff004d"/><rect x="535" fill="#ff004c"/><rect x="540" fill="#ff004b"/><rect x="545" fill="#ff004a"/><rect x="550" fill="#ff0048"/><rect x="555" fill="#ff0047"/><rect x="560" fill="#ff0046"/><rect x="565" fill="#ff0045"/><rect x="570" fill="#ff0044"/><rect x="575" fill="#ff0042"/></g>
<g transform="translate(990,266)"><rect x="45" fill="#0091ff"/><rect x="50" fill="#008fff"/><rect x="55" fill="#008dff"/><rect x="60" fill="#008cff"/><rect x="65" fill="#008aff"/><rect x="70" fill="#0088ff"/><rect x="75" fill="#0086ff"/><rect x="80" fill="#0084ff"/><rect x="85" fill="#0081ff"/><rect x="90" fill="#007fff"/><rect x="95" fill="#007dff"/><rect x="100" fill="#007bff"/><rect x="105" fill="#0079ff"/><rect x="110" fill="#0077ff"/><rect x="115" fill="#0075ff"/><rect x="120" fill="#0073ff"/><rect x="125" fill="#0071ff"/><rect x="130" fill="#006fff"/><rect x="135" fill="#006dff"/><rect x="140" fill="#006aff"/><rect x="145" fill="#0068ff"/><rect x="150" fill="#0066ff"/><rect x="155" fill="#0064ff"/><rect x="160" fill="#0062ff"/><rect x="165" fill="#005fff"/><rect x="170" fill="#015dff"/><rect x="175" fill="#095bff"/><rect x="180" fill="#1259ff"/><rect x="185" fill="#1b56ff"/><rect x="190" fill="#2454ff"/><rect x="195" fill="#2d52ff"/><rect x="200" fill="#364fff"/><rect x="205" fill="#3f4dff"/><rect x="210" fill="#484bff"/><rect x="215" fill="#5148ff"/><rect x="220" fill="#5b46ff"/><rect x="225" fill="#6444ff"/><rect x="230" fill="#6d41ff"/><rect x="235" fill="#773fff"/><rect x="240" fill="#803cff"/><rect x="245" fill="#8a3aff"/><rect x="250" fill="#9437ff"/><rect x="255" fill="#9d35ff"/><rect x="260" fill="#a732ff"/><rect x="265" fill="#b130ff"/><rect x="270" fill="#bb2dff"/><rect x="275" fill="#c52bff"/><rect x="280" fill="#cf28ff"/><rect x="285" fill="#d926ff"/><rect x="290" fill="#e323ff"/><rect x="295" fill="#ed20ff"/><rect x="300" fill="#f71eff"/><rect x="305" fill="#ff1bfc"/><rect x="310" fill="#ff17f3"/><rect x="315" fill="#ff14ea"/><rect x="320" fill="#ff11e1"/><rect x="325" fill="#ff0ed9"/><rect x="330" fill="#ff0bd2"/><rect x="335" fill="#ff09cb"/><rect x="340" fill="#ff06c4"/><rect x="345" fill="#ff04be"/><rect x="350" fill="#ff02b8"/><rect x="355" fill="#ff00b2"/><rect x="360" fill="#ff00ad"/><rect x="365" fill="#ff00a8"/><rect x="370" fill="#ff00a3"/><rect x="375" fill="#ff009f"/><rect x="380" fill="#ff009b"/><rect x="385" fill="#ff0096"/><rect x="390" fill="#ff0092"/><rect x="395" fill="#ff008f"/><rect x="400" fill="#ff008b"/><rect x="405" fill="#ff0088"/><rect x="410" fill="#ff0084"/><rect x="415" fill="#ff0081"/><rect x="420" fill="#ff007e"/><rect x="425" fill="#ff007b"/><rect x="430" fill="#ff0079"/><rect x="435" fill="#ff0076"/><rect x="440" fill="#ff0073"/><rect x="445" fill="#ff0071"/><rect x="450" fill="#ff006e"/><rect x="455" fill="#ff006c"/><rect x="460" fill="#ff006a"/><rect x="465" fill="#ff0068"/><rect x="470" fill="#ff0066"/><rect x="475" fill="#ff0064"/><rect x="480" fill="#ff0062"/><rect x="485" fill="#ff0060"/><rect x="490" fill="#ff005e"/><rect x="495" fill="#ff005c"/><rect x="500" fill="#ff005a"/><rect x="505" fill="#ff0059"/><rect x="510" fill="#ff0057"/><rect x="515" fill="#ff0055"/><rect x="520" fill="#ff0054"/><rect x="525" fill="#ff0052"/><rect x="530" fill="#ff0051"/><rect x="535" fill="#ff0050"/><rect x="540" fill="#ff004e"/><rect x="545" fill="#ff004d"/><rect x="550" fill="#ff004c"/><rect x="555" fill="#ff004a"/><rect x="560" fill="#ff0049"/><rect x="565" fill="#ff0048"/><rect x="570" fill="#ff0047"/></g>
<g transform="translate(990,271)"><rect x="50" fill="#0089ff"/><rect x="55" fill="#0087ff"/><rect x="60" fill="#0085ff"/><rect x="65" fill="#0083ff"/><rect x="70" fill="#0081ff"/><rect x="75" fill="#007fff"/><rect x="80" fill="#007dff"/><rect x="85" fill="#007bff"/><rect x="90" fill="#0079ff"/><rect x="95" fill="#0077ff"/><rect x="100" fill="#0075ff"/><rect x="105" fill="#0073ff"/><rect x="110" fill="#0071ff"/><rect x="115" fill="#006fff"/><rect x="120" fill="#006dff"/><rect x="125" fill="#006bff"/><rect x="130" fill="#0069ff"/><rect x="135" fill="#0067ff"/><rect x="140" fill="#0065ff"/><rect x="145" fill="#0063ff"/><rect x="150" fill="#0061ff"/><rect x="155" fill="#005eff"/><rect x="160" fill="#005cff"/><rect x="165" fill="#005aff"/><rect x="170" fill="#0058ff"/><rect x="175" fill="#0856ff"/><rect x="180" fill="#1053ff"/><rect x="185" fill="#1951ff"/><rect x="190" fill="#214fff"/><rect x="195" fill="#2a4dff"/><rect x="200" fill="#334aff"/><rect x="205" fill="#3c48ff"/><rect x="210" fill="#4546ff"/><rect x="215" fill="#4d44ff"/><rect x="220" fill="#5641ff"/><rect x="225" fill="#5f3fff"/><rect x="230" fill="#693dff"/><rect x="235" fill="#723aff"/><rect x="240" fill="#7b38ff"/><rect x="245" fill="#8436ff"/><rect x="250" fill="#8d33ff"/><rect x="255" fill="#9731ff"/><rect x="260" fill="#a02eff"/><rect x="265" fill="#aa2cff"/><rect x="270" fill="#b329ff"/><rect x="275" fill="#bd27ff"/><rect x="280" fill="#c624ff"/><rect x="285" fill="#d022ff"/><rect x="290" fill="#da1fff"/><rect x="295" fill="#e41dff"/><rect x="300" fill="#ed1aff"/><rect x="305" fill="#f718ff"/><rect x="310" fill="#ff15fd"/><rect x="315" fill="#ff12f3"/><rect x="320" fill="#ff0fea"/><rect x="325" fill="#ff0ce2"/><rect x="330" fill="#ff09da"/><rect x="335" fill="#ff07d3"/><rect x="340" fill="#ff04cc"/><rect x="345" fill="#ff02c5"/><rect x="350" fill="#ff00bf"/><rect x="355" fill="#ff00ba"/><rect x="360" fill="#ff00b4"/><rect x="365" fill="#ff00af"/><rect x="370" fill="#ff00aa"/><rect x="375" fill="#ff00a5"/><rect x="380" fill="#ff00a1"/><rect x="385" fill="#ff009d"/><rect x="390" fill="#ff0098"/><rect x="395" fill="#ff0095"/><rect x="400" fill="#ff0091"/><rect x="405" fill="#ff008d"/><rect x="410" fill="#ff008a"/><rect x="415" fill="#ff0087"/><rect x="420" fill="#ff0083"/><rect x="425" fill="#ff0080"/><rect x="430" fill="#ff007e"/><rect x="435" fill="#ff007b"/><rect x="440" fill="#ff0078"/><rect x="445" fill="#ff0075"/><rect x="450" fill="#ff0073"/><rect x="455" fill="#ff0071"/><rect x="460" fill="#ff006e"/><rect x="465" fill="#ff006c"/><rect x="470" fill="#ff006a"/><rect x="475" fill="#ff0068"/><rect x="480" fill="#ff0066"/><rect x="485" fill="#ff0064"/><rect x="490" fill="#ff0062"/><rect x="495" fill="#ff0060"/><rect x="500" fill="#ff005e"/><rect x="505" fill="#ff005c"/><rect x="510" fill="#ff005b"/><rect x="515" fill="#ff0059"/><rect x="520" fill="#ff0057"/><rect x="525" fill="#ff0056"/><rect x="530" fill="#ff0054"/><rect x="535" fill="#ff0053"/><rect x="540" fill="#ff0052"/><rect x="545" fill="#ff0050"/><rect x="550" fill="#ff004f"/><rect x="555" fill="#ff004d"/><rect x="560" fill="#ff004c"/><rect x="565" fill="#ff004b"/></g>
<g transform="translate(990,276)"><rect x="50" fill="#0083ff"/><rect x="55" fill="#0081ff"/><rect x="60" fill="#007fff"/><rect x="65" fill="#007dff"/><rect x="70" fill="#007bff"/><rect x="75" fill="#007aff"/><rect x="80" fill="#0078ff"/><rect x="85" fill="#0076ff"/><rect x="90" fill="#0074ff"/><rect x="95" fill="#0072ff"/><rect x="100" fill="#0070ff"/><rect x="105" fill="#006eff"/><rect x="110" fill="#006cff"/><rect x="115" fill="#006aff"/><rect x="120" fill="#0068ff"/><rect x="125" fill="#0066ff"/><rect x="130" fill="#0064ff"/><rect x="135" fill="#0062ff"/><rect x="140" fill="#0060ff"/><rect x="145" fill="#005dff"/><rect x="150" fill="#005bff"/><rect x="155" fill="#0059ff"/><rect x="160" fill="#0057ff"/><rect x="165" fill="#0055ff"/><rect x="170" fill="#0053ff"/><rect x="175" fill="#0651ff"/><rect x="180" fill="#0e4fff"/><rect x="185" fill="#174cff"/><rect x="190" fill="#1f4aff"/><rect x="195" fill="#2848ff"/><rect x="200" fill="#3046ff"/><rect x="205" fill="#3944ff"/><rect x="210" fill="#4141ff"/><rect x="215" fill="#4a3fff"/><rect x="220" fill="#523dff"/><rect x="225" fill="#5b3bff"/><rect x="230" fill="#6438ff"/><rect x="235" fill="#6d36ff"/><rect x="240" fill="#7634ff"/><rect x="245" fill="#7f31ff"/><rect x="250" fill="#882fff"/><rect x="255" fill="#912dff"/><rect x="260" fill="#9a2aff"/><rect x="265" fill="#a328ff"/><rect x="270" fill="#ac26ff"/><rect x="275" fill="#b523ff"/><rect x="280" fill="#bf21ff"/><rect x="285" fill="#c81eff"/><rect x="290" fill="#d11cff"/><rect x="295" fill="#db19ff"/><rect x="300" fill="#e417ff"/><rect x="305" fill="#ee14ff"/><rect x="310" fill="#f812ff"/><rect x="315" fill="#ff0ffd"/><rect x="320" fill="#ff0cf3"/><rect x="325" fill="#ff09eb"/><rect x="330" fill="#ff07e3"/><rect x="335" fill="#ff04db"/><rect x="340" fill="#ff02d4"/><rect x="345" fill="#ff00cd"/><rect x="350" fill="#ff00c7"/><rect x="355" fill="#ff00c1"/><rect x="360" fill="#ff00bb"/><rect x="365" fill="#ff00b6"/><rect x="370" fill="#ff00b1"/><rect x="375" fill="#ff00ac"/><rect x="380" fill="#ff00a7"/><rect x="385" fill="#ff00a3"/><rect x="390" fill="#ff009e"/><rect x="395" fill="#ff009a"/><rect x="400" fill="#ff0097"/><rect x="405" fill="#ff0093"/><rect x="410" fill="#ff008f"/><rect x="415" fill="#ff008c"/><rect x="420" fill="#ff0089"/><rect x="425" fill="#ff0086"/><rect x="430" fill="#ff0082"/><rect x="435" fill="#ff0080"/><rect x="440" fill="#ff007d"/><rect x="445" fill="#ff007a"/><rect x="450" fill="#ff0078"/><rect x="455" fill="#ff0075"/><rect x="460" fill="#ff0073"/><rect x="465" fill="#ff0070"/><rect x="470" fill="#ff006e"/><rect x="475" fill="#ff006c"/><rect x="480" fill="#ff006a"/><rect x="485" fill="#ff0068"/><rect x="490" fill="#ff0066"/><rect x="495" fill="#ff0064"/><rect x="500" fill="#ff0062"/><rect x="505" fill="#ff0060"/><rect x="510" fill="#ff005e"/><rect x="515" fill="#ff005d"/><rect x="520" fill="#ff005b"/><rect x="525" fill="#ff0059"/><rect x="530" fill="#ff0058"/><rect x="535" fill="#ff0056"/><rect x="540" fill="#ff0055"/><rect x="545" fill="#ff0054"/><rect x="550" fill="#ff0052"/><rect x="555" fill="#ff0051"/><rect x="560" fill="#ff004f"/></g>
<g transform="translate(990,281)"><rect x="55" fill="#007bff"/><rect x="60" fill="#007aff"/><rect x="65" fill="#0078ff"/><rect x="70" fill="#0076ff"/><rect x="75" fill="#0074ff"/><rect x="80" fill="#0072ff"/><rect x="85" fill="#0070ff"/><rect x="90" fill="#006eff"/><rect x="95" fill="#006cff"/><rect x="100" fill="#006aff"/><rect x="105" fill="#0068ff"/><rect x="110" fill="#0067ff"/><rect x="115" fill="#0065ff"/><rect x="120" fill="#0063ff"/><rect x="125" fill="#0061ff"/><rect x="130" fill="#005fff"/><rect x="135" fill="#005dff"/><rect x="140" fill="#005bff"/><rect x="145" fill="#0059ff"/><rect x="150" fill="#0057ff"/><rect x="155" fill="#0054ff"/><rect x="160" fill="#0052ff"/><rect x="165" fill="#0050ff"/><rect x="170" fill="#004eff"/><rect x="175" fill="#054cff"/><rect x="180" fill="#0d4aff"/><rect x="185" fill="#1548ff"/><rect x="190" fill="#1d46ff"/><rect x="195" fill="#2544ff"/><rect x="200" fill="#2d41ff"/><rect x="205" fill="#363fff"/><rect x="210" fill="#3e3dff"/><rect x="215" fill="#463bff"/><rect x="220" fill="#4f39ff"/><rect x="225" fill="#5737ff"/><rect x="230" fill="#6034ff"/><rect x="235" fill="#6832ff"/><rect x="240" fill="#7130ff"/><rect x="245" fill="#792eff"/><rect x="250" fill="#822bff"/><rect x="255" fill="#8b29ff"/><rect x="260" fill="#9427ff"/><rect x="265" fill="#9c24ff"/><rect x="270" fill="#a522ff"/><rect x="275" fill="#ae20ff"/><rect x="280" fill="#b71dff"/><rect x="285" fill="#c01bff"/><rect x="290" fill="#c919ff"/><rect x="295" fill="#d316ff"/><rect x="300" fill="#dc14ff"/><rect x="305" fill="#e511ff"/><rect x="310" fill="#ee0fff"/><rect x="315" fill="#f80cff"/><rect x="320" fill="#ff0afd"/><rect x="325" fill="#ff07f4"/><rect x="330" fill="#ff05eb"/><rect x="335" fill="#ff02e3"/><rect x="340" fill="#ff00dc"/><rect x="345" fill="#ff00d5"/><rect x="350" fill="#ff00ce"/><rect x="355" fill="#ff00c8"/><rect x="360" fill="#ff00c2"/><rect x="365" fill="#ff00bd"/><rect x="370" fill="#ff00b7"/><rect x="375" fill="#ff00b2"/><rect x="380" fill="#ff00ad"/><rect x="385" fill="#ff00a9"/><rect x="390" fill="#ff00a4"/><rect x="395" fill="#ff00a0"/><rect x="400" fill="#ff009c"/><rect x="405" fill="#ff0098"/><rect x="410" fill="#ff0095"/><rect x="415" fill="#ff0091"/><rect x="420" fill="#ff008e"/><rect x="425" fill="#ff008b"/><rect x="430" fill="#ff0088"/><rect x="435" fill="#ff0085"/><rect x="440" fill="#ff0082"/><rect x="445" fill="#ff007f"/><rect x="450" fill="#ff007c"/><rect x="455" fill="#ff007a"/><rect x="460" fill="#ff0077"/><rect x="465" fill="#ff0075"/><rect x="470" fill="#ff0072"/><rect x="475" fill="#ff0070"/><rect x="480" fill="#ff006e"/><rect x="485" fill="#ff006c"/><rect x="490" fill="#ff006a"/><rect x="495" fill="#ff0068"/><rect x="500" fill="#ff0066"/><rect x="505" fill="#ff0064"/><rect x="510" fill="#ff0062"/><rect x="515" fill="#ff0060"/><rect x="520" fill="#ff005f"/><rect x="525" fill="#ff005d"/><rect x="530" fill="#ff005b"/><rect x="535" fill="#ff005a"/><rect x="540" fill="#ff0058"/><rect x="545" fill="#ff0057"/><rect x="550" fill="#ff0055"/><rect x="555" fill="#ff0054"/></g>
<g transform="translate(990,286)"><rect x="55" fill="#0076ff"/><rect x="60" fill="#0074ff"/><rect x="65" fill="#0072ff"/><rect x="70" fill="#0071ff"/><rect x="75" fill="#006fff"/><rect x="80" fill="#006dff"/><rect x="85" fill="#006bff"/><rect x="90" fill="#0069ff"/><rect x="95" fill="#0067ff"/><rect x="100" fill="#0065ff"/><rect x="105" fill="#0064ff"/><rect x="110" fill="#0062ff"/><rect x="115" fill="#0060ff"/><rect x="120" fill="#005eff"/><rect x="125" fill="#005cff"/><rect x="130" fill="#005aff"/><rect x="135" fill="#0058ff"/><rect x="140" fill="#0056ff"/><rect x="145" fill="#0054ff"/><rect x="150" fill="#0052ff"/><rect x="155" fill="#0050ff"/><rect x="160" fill="#004eff"/><rect x="165" fill="#004cff"/><rect x="170" fill="#004aff"/><rect x="175" fill="#0348ff"/><rect x="180" fill="#0b46ff"/><rect x="185" fill="#1344ff"/><rect x="190" fill="#1b42ff"/><rect x="195" fill="#233fff"/><rect x="200" fill="#2b3dff"/><rect x="205" fill="#333bff"/><rect x="210" fill="#3b39ff"/><rect x="215" fill="#4337ff"/><rect x="220" fill="#4b35ff"/><rect x="225" fill="#5333ff"/><rect x="230" fill="#5b31ff"/><rect x="235" fill="#642eff"/><rect x="240" fill="#6c2cff"/><rect x="245" fill="#742aff"/><rect x="250" fill="#7d28ff"/><rect x="255" fill="#8525ff"/><rect x="260" fill="#8e23ff"/><rect x="265" fill="#9621ff"/><rect x="270" fill="#9f1fff"/><rect x="275" fill="#a81cff"/><rect x="280" fill="#b01aff"/><rect x="285" fill="#b918ff"/><rect x="290" fill="#c215ff"/><rect x="295" fill="#cb13ff"/><rect x="300" fill="#d411ff"/><rect x="305" fill="#dd0eff"/><rect x="310" fill="#e60cff"/><rect x="315" fill="#ef0aff"/><rect x="320" fill="#f807ff"/><rect x="325" fill="#ff05fd"/><rect x="330" fill="#ff02f4"/><rect x="335" fill="#ff00ec"/><rect x="340" fill="#ff00e4"/><rect x="345" fill="#ff00dd"/><rect x="350" fill="#ff00d6"/><rect x="355" fill="#ff00d0"/><rect x="360" fill="#ff00c9"/><rect x="365" fill="#ff00c4"/><rect x="370" fill="#ff00be"/><rect x="375" fill="#ff00b9"/><rect x="380" fill="#ff00b4"/><rect x="385" fill="#ff00af"/><rect x="390" fill="#ff00ab"/><rect x="395" fill="#ff00a6"/><rect x="400" fill="#ff00a2"/><rect x="405" fill="#ff009e"/><rect x="410" fill="#ff009a"/><rect x="415" fill="#ff0097"/><rect x="420" fill="#ff0093"/><rect x="425" fill="#ff0090"/><rect x="430" fill="#ff008d"/><rect x="435" fill="#ff0089"/><rect x="440" fill="#ff0086"/><rect x="445" fill="#ff0084"/><rect x="450" fill="#ff0081"/><rect x="455" fill="#ff007e"/><rect x="460" fill="#ff007c"/><rect x="465" fill="#ff0079"/><rect x="470" fill="#ff0077"/><rect x="475" fill="#ff0074"/><rect x="480" fill="#ff0072"/><rect x="485" fill="#ff0070"/><rect x="490" fill="#ff006e"/><rect x="495" fill="#ff006c"/><rect x="500" fill="#ff006a"/><rect x="505" fill="#ff0068"/><rect x="510" fill="#ff0066"/><rect x="515" fill="#ff0064"/><rect x="520" fill="#ff0062"/><rect x="525" fill="#ff0061"/><rect x="530" fill="#ff005f"/><rect x="535" fill="#ff005d"/><rect x="540" fill="#ff005c"/><rect x="545" fill="#ff005a"/><rect x="550" fill="#ff0059"/></g>
<g transform="translate(990,291)"><rect x="60" fill="#006fff"/><rect x="65" fill="#006dff"/><rect x="70" fill="#006cff"/><rect x="75" fill="#006aff"/><rect x="80" fill="#0068ff"/><rect x="85" fill="#0066ff"/><rect x="90" fill="#0064ff"/><rect x="95" fill="#0063ff"/><rect x="100" fill="#0061ff"/><rect x="105" fill="#005fff"/><rect x="110" fill="#005dff"/><rect x="115" fill="#005bff"/><rect x="120" fill="#0059ff"/><rect x="125" fill="#0057ff"/><rect x="130" fill="#0055ff"/><rect x="135" fill="#0053ff"/><rect x="140" fill="#0051ff"/><rect x="145" fill="#0050ff"/><rect x="150" fill="#004eff"/><rect x="155" fill="#004cff"/><rect x="160" fill="#004aff"/><rect x="165" fill="#0048ff"/><rect x="170" fill="#0046ff"/><rect x="175" fill="#0244ff"/><rect x="180" fill="#0a42ff"/><rect x="185" fill="#1140ff"/><rect x="190" fill="#193eff"/><rect x="195" fill="#213cff"/><rect x="200" fill="#2839ff"/><rect x="205" fill="#3037ff"/><rect x="210" fill="#3835ff"/><rect x="215" fill="#4033ff"/><rect x="220" fill="#4831ff"/><rect x="225" fill="#502fff"/><rect x="230" fill="#582dff"/><rect x="235" fill="#602bff"/><rect x="240" fill="#6829ff"/><rect x="245" fill="#7027ff"/><rect x="250" fill="#7824ff"/><rect x="255" fill="#8022ff"/><rect x="260" fill="#8920ff"/><rect x="265" fill="#911eff"/><rect x="270" fill="#991cff"/><rect x="275" fill="#a219ff"/><rect x="280" fill="#aa17ff"/><rect x="285" fill="#b215ff"/><rect x="290" fill="#bb13ff"/><rect x="295" fill="#c410ff"/><rect x="300" fill="#cc0eff"/><rect x="305" fill="#d50cff"/><rect x="310" fill="#de09ff"/><rect x="315" fill="#e607ff"/><rect x="320" fill="#ef05ff"/><rect x="325" fill="#f802ff"/><rect x="330" fill="#ff00fd"/><rect x="335" fill="#ff00f4"/><rect x="340" fill="#ff00ec"/><rect x="345" fill="#ff00e5"/><rect x="350" fill="#ff00de"/><rect x="355" fill="#ff00d7"/><rect x="360" fill="#ff00d1"/><rect x="365" fill="#ff00cb"/><rect x="370" fill="#ff00c5"/><rect x="375" fill="#ff00bf"/><rect x="380" fill="#ff00ba"/><rect x="385" fill="#ff00b5"/><rect x="390" fill="#ff00b1"/><rect x="395" fill="#ff00ac"/><rect x="400" fill="#ff00a8"/><rect x="405" fill="#ff00a4"/><rect x="410" fill="#ff00a0"/><rect x="415" fill="#ff009c"/><rect x="420" fill="#ff0098"/><rect x="425" fill="#ff0095"/><rect x="430" fill="#ff0092"/><rect x="435" fill="#ff008e"/><rect x="440" fill="#ff008b"/><rect x="445" fill="#ff0088"/><rect x="450" fill="#ff0085"/><rect x="455" fill="#ff0083"/><rect x="460" fill="#ff0080"/><rect x="465" fill="#ff007d"/><rect x="470" fill="#ff007b"/><rect x="475" fill="#ff0079"/><rect x="480" fill="#ff0076"/><rect x="485" fill="#ff0074"/><rect x="490" fill="#ff0072"/><rect x="495" fill="#ff0070"/><rect x="500" fill="#ff006e"/><rect x="505" fill="#ff006c"/><rect x="510" fill="#ff006a"/><rect x="515" fill="#ff0068"/><rect x="520" fill="#ff0066"/><rect x="525" fill="#ff0064"/><rect x="530" fill="#ff0063"/><rect x="535" fill="#ff0061"/><rect x="540" fill="#ff005f"/><rect x="545" fill="#ff005e"/></g>
<g transform="translate(990,296)"><rect x="60" fill="#006aff"/><rect x="65" fill="#0069ff"/><rect x="70" fill="#0067ff"/><rect x="75" fill="#0065ff"/><rect x="80" fill="#0063ff"/><rect x="85" fill="#0062ff"/><rect x="90" fill="#0060ff"/><rect x="95" fill="#005eff"/><rect x="100" fill="#005cff"/><rect x="105" fill="#005aff"/><rect x="110" fill="#0058ff"/><rect x="115" fill="#0057ff"/><rect x="120" fill="#0055ff"/><rect x="125" fill="#0053ff"/><rect x="130" fill="#0051ff"/><rect x="135" fill="#004fff"/><rect x="140" fill="#004dff"/><rect x="145" fill="#004bff"/><rect x="150" fill="#0049ff"/><rect x="155" fill="#0048ff"/><rect x="160" fill="#0046ff"/><rect x="165" fill="#0044ff"/><rect x="170" fill="#0042ff"/><rect x="175" fill="#0140ff"/><rect x="180" fill="#083eff"/><rect x="185" fill="#0f3cff"/><rect x="190" fill="#173aff"/><rect x="195" fill="#1e38ff"/><rect x="200" fill="#2636ff"/><rect x="205" fill="#2e34ff"/><rect x="210" fill="#3532ff"/><rect x="215" fill="#3d30ff"/><rect x="220" fill="#442eff"/><rect x="225" fill="#4c2cff"/><rect x="230" fill="#542aff"/><rect x="235" fill="#5c27ff"/><rect x="240" fill="#6425ff"/><rect x="245" fill="#6c23ff"/><rect x="250" fill="#7321ff"/><rect x="255" fill="#7b1fff"/><rect x="260" fill="#831dff"/><rect x="265" fill="#8b1bff"/><rect x="270" fill="#9419ff"/><rect x="275" fill="#9c16ff"/><rect x="280" fill="#a414ff"/><rect x="285" fill="#ac12ff"/><rect x="290" fill="#b410ff"/><rect x="295" fill="#bd0eff"/><rect x="300" fill="#c50bff"/><rect x="305" fill="#ce09ff"/><rect x="310" fill="#d607ff"/><rect x="315" fill="#de05ff"/><rect x="320" fill="#e702ff"/><rect x="325" fill="#f000ff"/><rect x="330" fill="#f800ff"/><rect x="335" fill="#ff00fd"/><rect x="340" fill="#ff00f5"/><rect x="345" fill="#ff00ed"/><rect x="350" fill="#ff00e6"/><rect x="355" fill="#ff00df"/><rect x="360" fill="#ff00d8"/><rect x="365" fill="#ff00d2"/><rect x="370" fill="#ff00cc"/><rect x="375" fill="#ff00c6"/><rect x="380" fill="#ff00c1"/><rect x="385" fill="#ff00bc"/><rect x="390" fill="#ff00b7"/><rect x="395" fill="#ff00b2"/><rect x="400" fill="#ff00ae"/><rect x="405" fill="#ff00a9"/><rect x="410" fill="#ff00a5"/><rect x="415" fill="#ff00a2"/><rect x="420" fill="#ff009e"/><rect x="425" fill="#ff009a"/><rect x="430" fill="#ff0097"/><rect x="435" fill="#ff0093"/><rect x="440" fill="#ff0090"/><rect x="445" fill="#ff008d"/><rect x="450" fill="#ff008a"/><rect x="455" fill="#ff0087"/><rect x="460" fill="#ff0085"/><rect x="465" fill="#ff0082"/><rect x="470" fill="#ff007f"/><rect x="475" fill="#ff007d"/><rect x="480" fill="#ff007a"/><rect x="485" fill="#ff0078"/><rect x="490" fill="#ff0076"/><rect x="495" fill="#ff0074"/><rect x="500" fill="#ff0072"/><rect x="505" fill="#ff006f"/><rect x="510" fill="#ff006d"/><rect x="515" fill="#ff006c"/><rect x="520" fill="#ff006a"/><rect x="525" fill="#ff0068"/><rect x="530" fill="#ff0066"/><rect x="535" fill="#ff0064"/><rect x="540" fill="#ff0063"/></g>
<g transform="translate(990,301)"><rect x="65" fill="#0064ff"/><rect x="70" fill="#0062ff"/><rect x="75" fill="#0061ff"/><rect x="80" fill="#005fff"/><rect x="85" fill="#005dff"/><rect x="90" fill="#005bff"/><rect x="95" fill="#005aff"/><rect x="100" fill="#0058ff"/><rect x="105" fill="#0056ff"/><rect x="110" fill="#0054ff"/><rect x="115" fill="#0052ff"/><rect x="120" fill="#0051ff"/><rect x="125" fill="#004fff"/><rect x="130" fill="#004dff"/><rect x="135" fill="#004bff"/><rect x="140" fill="#0049ff"/><rect x="145" fill="#0047ff"/><rect x="150" fill="#0046ff"/><rect x="155" fill="#0044ff"/><rect x="160" fill="#0042ff"/><rect x="165" fill="#0040ff"/><rect x="170" fill="#003eff"/><rect x="175" fill="#003cff"/><rect x="180" fill="#073aff"/><rect x="185" fill="#0e38ff"/><rect x="190" fill="#1536ff"/><rect x="195" fill="#1c34ff"/><rect x="200" fill="#2432ff"/><rect x="205" fill="#2b30ff"/><rect x="210" fill="#332eff"/><rect x="215" fill="#3a2cff"/><rect x="220" fill="#412aff"/><rect x="225" fill="#4928ff"/><rect x="230" fill="#5126ff"/><rect x="235" fill="#5824ff"/><rect x="240" fill="#6022ff"/><rect x="245" fill="#6720ff"/><rect x="250" fill="#6f1eff"/><rect x="255" fill="#771cff"/><rect x="260" fill="#7f1aff"/><rect x="265" fill="#8618ff"/><rect x="270" fill="#8e16ff"/><rect x="275" fill="#9614ff"/><rect x="280" fill="#9e12ff"/><rect x="285" fill="#a60fff"/><rect x="290" fill="#ae0dff"/><rect x="295" fill="#b60bff"/><rect x="300" fill="#be09ff"/><rect x="305" fill="#c707ff"/><rect x="310" fill="#cf05ff"/><rect x="315" fill="#d702ff"/><rect x="320" fill="#df00ff"/><rect x="325" fill="#e800ff"/><rect x="330" fill="#f000ff"/><rect x="335" fill="#f800ff"/><rect x="340" fill="#ff00fd"/><rect x="345" fill="#ff00f5"/><rect x="350" fill="#ff00ed"/><rect x="355" fill="#ff00e6"/><rect x="360" fill="#ff00df"/><rect x="365" fill="#ff00d9"/><rect x="370" fill="#ff00d3"/><rect x="375" fill="#ff00cd"/><rect x="380" fill="#ff00c7"/><rect x="385" fill="#ff00c2"/><rect x="390" fill="#ff00bd"/><rect x="395" fill="#ff00b8"/><rect x="400" fill="#ff00b4"/><rect x="405" fill="#ff00af"/><rect x="410" fill="#ff00ab"/><rect x="415" fill="#ff00a7"/><rect x="420" fill="#ff00a3"/><rect x="425" fill="#ff009f"/><rect x="430" fill="#ff009c"/><rect x="435" fill="#ff0098"/><rect x="440" fill="#ff0095"/><rect x="445" fill="#ff0092"/><rect x="450" fill="#ff008f"/><rect x="455" fill="#ff008c"/><rect x="460" fill="#ff0089"/><rect x="465" fill="#ff0086"/><rect x="470" fill="#ff0084"/><rect x="475" fill="#ff0081"/><rect x="480" fill="#ff007f"/><rect x="485" fill="#ff007c"/><rect x="490" fill="#ff007a"/><rect x="495" fill="#ff0078"/><rect x="500" fill="#ff0075"/><rect x="505" fill="#ff0073"/><rect x="510" fill="#ff0071"/><rect x="515" fill="#ff006f"/><rect x="520" fill="#ff006d"/><rect x="525" fill="#ff006b"/><rect x="530" fill="#ff006a"/><rect x="535" fill="#ff0068"/></g>
<g transform="translate(990,306)"><rect x="65" fill="#0060ff"/><rect x="70" fill="#005eff"/><rect x="75" fill="#005cff"/><rect x="80" fill="#005bff"/><rect x="85" fill="#0059ff"/><rect x="90" fill="#0057ff"/><rect x="95" fill="#0056ff"/><rect x="100" fill="#0054ff"/><rect x="105" fill="#0052ff"/><rect x="110" fill="#0050ff"/><rect x="115" fill="#004fff"/><rect x="120" fill="#004dff"/><rect x="125" fill="#004bff"/><rect x="130" fill="#0049ff"/><rect x="135" fill="#0047ff"/><rect x="140" fill="#0046ff"/><rect x="145" fill="#0044ff"/><rect x="150" fill="#0042ff"/><rect x="155" fill="#0040ff"/><rect x="160" fill="#003eff"/><rect x="165" fill="#003cff"/><rect x="170" fill="#003aff"/><rect x="175" fill="#0039ff"/><rect x="180" fill="#0537ff"/><rect x="185" fill="#0c35ff"/><rect x="190" fill="#1333ff"/><rect x="195" fill="#1b31ff"/><rect x="200" fill="#222fff"/><rect x="205" fill="#292dff"/><rect x="210" fill="#302bff"/><rect x="215" fill="#3729ff"/><rect x="220" fill="#3f27ff"/><rect x="225" fill="#4625ff"/><rect x="230" fill="#4d23ff"/><rect x="235" fill="#5521ff"/><rect x="240" fill="#5c1fff"/><rect x="245" fill="#641dff"/><rect x="250" fill="#6b1bff"/><rect x="255" fill="#7319ff"/><rect x="260" fill="#7a17ff"/><rect x="265" fill="#8215ff"/><rect x="270" fill="#8913ff"/><rect x="275" fill="#9111ff"/><rect x="280" fill="#990fff"/><rect x="285" fill="#a10dff"/><rect x="290" fill="#a80bff"/><rect x="295" fill="#b009ff"/><rect x="300" fill="#b807ff"/><rect x="305" fill="#c004ff"/><rect x="310" fill="#c802ff"/><rect x="315" fill="#d000ff"/><rect x="320" fill="#d800ff"/><rect x="325" fill="#e000ff"/><rect x="330" fill="#e800ff"/><rect x="335" fill="#f000ff"/><rect x="340" fill="#f900ff"/><rect x="345" fill="#ff00fd"/><rect x="350" fill="#ff00f5"/><rect x="355" fill="#ff00ee"/><rect x="360" fill="#ff00e7"/><rect x="365" fill="#ff00e0"/><rect x="370" fill="#ff00da"/><rect x="375" fill="#ff00d4"/><rect x="380" fill="#ff00ce"/><rect x="385" fill="#ff00c9"/><rect x="390" fill="#ff00c3"/><rect x="395" fill="#ff00be"/><rect x="400" fill="#ff00ba"/><rect x="405" fill="#ff00b5"/><rect x="410" fill="#ff00b1"/><rect x="415" fill="#ff00ad"/><rect x="420" fill="#ff00a9"/><rect x="425" fill="#ff00a5"/><rect x="430" fill="#ff00a1"/><rect x="435" fill="#ff009d"/><rect x="440" fill="#ff009a"/><rect x="445" fill="#ff0097"/><rect x="450" fill="#ff0094"/><rect x="455" fill="#ff0091"/><rect x="460" fill="#ff008e"/><rect x="465" fill="#ff008b"/><rect x="470" fill="#ff0088"/><rect x="475" fill="#ff0085"/><rect x="480" fill="#ff0083"/><rect x="485" fill="#ff0080"/><rect x="490" fill="#ff007e"/><rect x="495" fill="#ff007c"/><rect x="500" fill="#ff0079"/><rect x="505" fill="#ff0077"/><rect x="510" fill="#ff0075"/><rect x="515" fill="#ff0073"/><rect x="520" fill="#ff0071"/><rect x="525" fill="#ff006f"/><rect x="530" fill="#ff006d"/></g>
<g transform="translate(990,311)"><rect x="70" fill="#005aff"/><rect x="75" fill="#0058ff"/><rect x="80" fill="#0057ff"/><rect x="85" fill="#0055ff"/><rect x="90" fill="#0053ff"/><rect x="95" fill="#0052ff"/><rect x="100" fill="#0050ff"/><rect x="105" fill="#004eff"/><rect x="110" fill="#004cff"/><rect x="115" fill="#004bff"/><rect x="120" fill="#0049ff"/><rect x="125" fill="#0047ff"/><rect x="130" fill="#0045ff"/><rect x="135" fill="#0044ff"/><rect x="140" fill="#0042ff"/><rect x="145" fill="#0040ff"/><rect x="150" fill="#003eff"/><rect x="155" fill="#003dff"/><rect x="160" fill="#003bff"/><rect x="165" fill="#0039ff"/><rect x="170" fill="#0037ff"/><rect x="175" fill="#0035ff"/><rect x="180" fill="#0433ff"/><rect x="185" fill="#0b32ff"/><rect x="190" fill="#1230ff"/><rect x="195" fill="#192eff"/><rect x="200" fill="#202cff"/><rect x="205" fill="#272aff"/><rect x="210" fill="#2e28ff"/><rect x="215" fill="#3526ff"/><rect x="220" fill="#3c24ff"/><rect x="225" fill="#4322ff"/><rect x="230" fill="#4a20ff"/><rect x="235" fill="#511fff"/><rect x="240" fill="#591dff"/><rect x="245" fill="#601bff"/><rect x="250" fill="#6719ff"/><rect x="255" fill="#6e17ff"/><rect x="260" fill="#7615ff"/><rect x="265" fill="#7d13ff"/><rect x="270" fill="#8511ff"/><rect x="275" fill="#8c0fff"/><rect x="280" fill="#940dff"/><rect x="285" fill="#9b0bff"/><rect x="290" fill="#a308ff"/><rect x="295" fill="#aa06ff"/><rect x="300" fill="#b204ff"/><rect x="305" fill="#ba02ff"/><rect x="310" fill="#c100ff"/><rect x="315" fill="#c900ff"/><rect x="320" fill="#d100ff"/><rect x="325" fill="#d900ff"/><rect x="330" fill="#e100ff"/><rect x="335" fill="#e900ff"/><rect x="340" fill="#f100ff"/><rect x="345" fill="#f900ff"/><rect x="350" fill="#ff00fd"/><rect x="355" fill="#ff00f6"/><rect x="360" fill="#ff00ee"/><rect x="365" fill="#ff00e7"/><rect x="370" fill="#ff00e1"/><rect x="375" fill="#ff00db"/><rect x="380" fill="#ff00d5"/><rect x="385" fill="#ff00cf"/><rect x="390" fill="#ff00ca"/><rect x="395" fill="#ff00c4"/><rect x="400" fill="#ff00c0"/><rect x="405" fill="#ff00bb"/><rect x="410" fill="#ff00b6"/><rect x="415" fill="#ff00b2"/><rect x="420" fill="#ff00ae"/><rect x="425" fill="#ff00aa"/><rect x="430" fill="#ff00a6"/><rect x="435" fill="#ff00a3"/><rect x="440" fill="#ff009f"/><rect x="445" fill="#ff009c"/><rect x="450" fill="#ff0098"/><rect x="455" fill="#ff0095"/><rect x="460" fill="#ff0092"/><rect x="465" fill="#ff008f"/><rect x="470" fill="#ff008d"/><rect x="475" fill="#ff008a"/><rect x="480" fill="#ff0087"/><rect x="485" fill="#ff0085"/><rect x="490" fill="#ff0082"/><rect x="495" fill="#ff0080"/><rect x="500" fill="#ff007d"/><rect x="505" fill="#ff007b"/><rect x="510" fill="#ff0079"/><rect x="515" fill="#ff0077"/><rect x="520" fill="#ff0075"/><rect x="525" fill="#ff0073"/></g>
<g transform="translate(990,316)"><rect x="75" fill="#0055ff"/><rect x="80" fill="#0053ff"/><rect x="85" fill="#0051ff"/><rect x="90" fill="#0050ff"/><rect x="95" fill="#004eff"/><rect x="100" fill="#004cff"/><rect x="105" fill="#004bff"/><rect x="110" fill="#0049ff"/><rect x="115" fill="#0047ff"/><rect x="120" fill="#0045ff"/><rect x="125" fill="#0044ff"/><rect x="130" fill="#0042ff"/><rect x="135" fill="#0040ff"/><rect x="140" fill="#003eff"/><rect x="145" fill="#003dff"/><rect x="150" fill="#003bff"/><rect x="155" fill="#0039ff"/><rect x="160" fill="#0037ff"/><rect x="165" fill="#0036ff"/><rect x="170" fill="#0034ff"/><rect x="175" fill="#0032ff"/><rect x="180" fill="#0330ff"/><rect x="185" fill="#0a2eff"/><rect x="190" fill="#102dff"/><rect x="195" fill="#172bff"/><rect x="200" fill="#1e29ff"/><rect x="205" fill="#2527ff"/><rect x="210" fill="#2c25ff"/><rect x="215" fill="#3223ff"/><rect x="220" fill="#3921ff"/><rect x="225" fill="#4020ff"/><rect x="230" fill="#471eff"/><rect x="235" fill="#4e1cff"/><rect x="240" fill="#551aff"/><rect x="245" fill="#5c18ff"/><rect x="250" fill="#6316ff"/><rect x="255" fill="#6b14ff"/><rect x="260" fill="#7212ff"/><rect x="265" fill="#7910ff"/><rect x="270" fill="#800eff"/><rect x="275" fill="#870cff"/><rect x="280" fill="#8f0aff"/><rect x="285" fill="#9608ff"/><rect x="290" fill="#9d06ff"/><rect x="295" fill="#a504ff"/><rect x="300" fill="#ac02ff"/><rect x="305" fill="#b400ff"/><rect x="310" fill="#bb00ff"/><rect x="315" fill="#c300ff"/><rect x="320" fill="#ca00ff"/><rect x="325" fill="#d200ff"/><rect x="330" fill="#da00ff"/><rect x="335" fill="#e100ff"/><rect x="340" fill="#e900ff"/><rect x="345" fill="#f100ff"/><rect x="350" fill="#f900ff"/><rect x="355" fill="#ff00fd"/><rect x="360" fill="#ff00f6"/><rect x="365" fill="#ff00ef"/><rect x="370" fill="#ff00e8"/><rect x="375" fill="#ff00e1"/><rect x="380" fill="#ff00db"/><rect x="385" fill="#ff00d6"/><rect x="390" fill="#ff00d0"/><rect x="395" fill="#ff00cb"/><rect x="400" fill="#ff00c6"/><rect x="405" fill="#ff00c1"/><rect x="410" fill="#ff00bc"/><rect x="415" fill="#ff00b8"/><rect x="420" fill="#ff00b3"/><rect x="425" fill="#ff00af"/><rect x="430" fill="#ff00ab"/><rect x="435" fill="#ff00a8"/><rect x="440" fill="#ff00a4"/><rect x="445" fill="#ff00a1"/><rect x="450" fill="#ff009d"/><rect x="455" fill="#ff009a"/><rect x="460" fill="#ff0097"/><rect x="465" fill="#ff0094"/><rect x="470" fill="#ff0091"/><rect x="475" fill="#ff008e"/><rect x="480" fill="#ff008b"/><rect x="485" fill="#ff0089"/><rect x="490" fill="#ff0086"/><rect x="495" fill="#ff0084"/><rect x="500" fill="#ff0081"/><rect x="505" fill="#ff007f"/><rect x="510" fill="#ff007d"/><rect x="515" fill="#ff007b"/><rect x="520" fill="#ff0079"/></g>
<g transform="translate(990,321)"><rect x="75" fill="#0051ff"/><rect x="80" fill="#004fff"/><rect x="85" fill="#004eff"/><rect x="90" fill="#004cff"/><rect x="95" fill="#004aff"/><rect x="100" fill="#0049ff"/><rect x="105" fill="#0047ff"/><rect x="110" fill="#0045ff"/><rect x="115" fill="#0044ff"/><rect x="120" fill="#0042ff"/><rect x="125" fill="#0040ff"/><rect x="130" fill="#003fff"/><rect x="135" fill="#003dff"/><rect x="140" fill="#003bff"/><rect x="145" fill="#003aff"/><rect x="150" fill="#0038ff"/><rect x="155" fill="#0036ff"/><rect x="160" fill="#0034ff"/><rect x="165" fill="#0033ff"/><rect x="170" fill="#0031ff"/><rect x="175" fill="#002fff"/><rect x="180" fill="#022dff"/><rect x="185" fill="#082bff"/><rect x="190" fill="#0f2aff"/><rect x="195" fill="#1528ff"/><rect x="200" fill="#1c26ff"/><rect x="205" fill="#2324ff"/><rect x="210" fill="#2922ff"/><rect x="215" fill="#3021ff"/><rect x="220" fill="#371fff"/><rect x="225" fill="#3e1dff"/><rect x="230" fill="#441bff"/><rect x="235" fill="#4b19ff"/><rect x="240" fill="#5217ff"/><rect x="245" fill="#5916ff"/><rect x="250" fill="#6014ff"/><rect x="255" fill="#6712ff"/><rect x="260" fill="#6e10ff"/><rect x="265" fill="#750eff"/><rect x="270" fill="#7c0cff"/><rect x="275" fill="#830aff"/><rect x="280" fill="#8a08ff"/><rect x="285" fill="#9106ff"/><rect x="290" fill="#9804ff"/><rect x="295" fill="#a002ff"/><rect x="300" fill="#a700ff"/><rect x="305" fill="#ae00ff"/><rect x="310" fill="#b500ff"/><rect x="315" fill="#bd00ff"/><rect x="320" fill="#c400ff"/><rect x="325" fill="#cc00ff"/><rect x="330" fill="#d300ff"/><rect x="335" fill="#db00ff"/><rect x="340" fill="#e200ff"/><rect x="345" fill="#ea00ff"/><rect x="350" fill="#f100ff"/><rect x="355" fill="#f900ff"/><rect x="360" fill="#ff00fd"/><rect x="365" fill="#ff00f6"/><rect x="370" fill="#ff00ef"/><rect x="375" fill="#ff00e8"/><rect x="380" fill="#ff00e2"/><rect x="385" fill="#ff00dc"/><rect x="390" fill="#ff00d6"/><rect x="395" fill="#ff00d1"/><rect x="400" fill="#ff00cc"/><rect x="405" fill="#ff00c7"/><rect x="410" fill="#ff00c2"/><rect x="415" fill="#ff00bd"/><rect x="420" fill="#ff00b9"/><rect x="425" fill="#ff00b5"/><rect x="430" fill="#ff00b1"/><rect x="435" fill="#ff00ad"/><rect x="440" fill="#ff00a9"/><rect x="445" fill="#ff00a6"/><rect x="450" fill="#ff00a2"/><rect x="455" fill="#ff009f"/><rect x="460" fill="#ff009c"/><rect x="465" fill="#ff0098"/><rect x="470" fill="#ff0095"/><rect x="475" fill="#ff0093"/><rect x="480" fill="#ff0090"/><rect x="485" fill="#ff008d"/><rect x="490" fill="#ff008a"/><rect x="495" fill="#ff0088"/><rect x="500" fill="#ff0085"/><rect x="505" fill="#ff0083"/><rect x="510" fill="#ff0081"/><rect x="515" fill="#ff007e"/></g>
<g transform="translate(990,326)"><rect x="80" fill="#004cff"/><rect x="85" fill="#004aff"/><rect x="90" fill="#0049ff"/><rect x="95" fill="#0047ff"/><rect x="100" fill="#0045ff"/><rect x="105" fill="#0044ff"/><rect x="110" fill="#0042ff"/><rect x="115" fill="#0040ff"/><rect x="120" fill="#003fff"/><rect x="125" fill="#003dff"/><rect x="130" fill="#003bff"/><rect x="135" fill="#003aff"/><rect x="140" fill="#0038ff"/><rect x="145" fill="#0036ff"/><rect x="150" fill="#0035ff"/><rect x="155" fill="#0033ff"/><rect x="160" fill="#0031ff"/><rect x="165" fill="#0030ff"/><rect x="170" fill="#002eff"/><rect x="175" fill="#002cff"/><rect x="180" fill="#012aff"/><rect x="185" fill="#0729ff"/><rect x="190" fill="#0e27ff"/><rect x="195" fill="#1425ff"/><rect x="200" fill="#1a23ff"/><rect x="205" fill="#2122ff"/><rect x="210" fill="#2720ff"/><rect x="215" fill="#2e1eff"/><rect x="220" fill="#351cff"/><rect x="225" fill="#3b1aff"/><rect x="230" fill="#4219ff"/><rect x="235" fill="#4817ff"/><rect x="240" fill="#4f15ff"/><rect x="245" fill="#5613ff"/><rect x="250" fill="#5d11ff"/><rect x="255" fill="#630fff"/><rect x="260" fill="#6a0eff"/><rect x="265" fill="#710cff"/><rect x="270" fill="#780aff"/><rect x="275" fill="#7f08ff"/><rect x="280" fill="#8606ff"/><rect x="285" fill="#8d04ff"/><rect x="290" fill="#9402ff"/><rect x="295" fill="#9b00ff"/><rect x="300" fill="#a200ff"/><rect x="305" fill="#a900ff"/><rect x="310" fill="#b000ff"/><rect x="315" fill="#b700ff"/><rect x="320" fill="#be00ff"/><rect x="325" fill="#c500ff"/><rect x="330" fill="#cd00ff"/><rect x="335" fill="#d400ff"/><rect x="340" fill="#db00ff"/><rect x="345" fill="#e300ff"/><rect x="350" fill="#ea00ff"/><rect x="355" fill="#f100ff"/><rect x="360" fill="#f900ff"/><rect x="365" fill="#ff00fe"/><rect x="370" fill="#ff00f6"/><rect x="375" fill="#ff00ef"/><rect x="380" fill="#ff00e9"/><rect x="385" fill="#ff00e3"/><rect x="390" fill="#ff00dd"/><rect x="395" fill="#ff00d7"/><rect x="400" fill="#ff00d2"/><rect x="405" fill="#ff00cd"/><rect x="410" fill="#ff00c8"/><rect x="415" fill="#ff00c3"/><rect x="420" fill="#ff00bf"/><rect x="425" fill="#ff00ba"/><rect x="430" fill="#ff00b6"/><rect x="435" fill="#ff00b2"/><rect x="440" fill="#ff00ae"/><rect x="445" fill="#ff00aa"/><rect x="450" fill="#ff00a7"/><rect x="455" fill="#ff00a4"/><rect x="460" fill="#ff00a0"/><rect x="465" fill="#ff009d"/><rect x="470" fill="#ff009a"/><rect x="475" fill="#ff0097"/><rect x="480" fill="#ff0094"/><rect x="485" fill="#ff0091"/><rect x="490" fill="#ff008f"/><rect x="495" fill="#ff008c"/><rect x="500" fill="#ff0089"/><rect x="505" fill="#ff0087"/><rect x="510" fill="#ff0085"/></g>
<g transform="translate(990,331)"><rect x="80" fill="#0048ff"/><rect x="85" fill="#0047ff"/><rect x="90" fill="#0045ff"/><rect x="95" fill="#0044ff"/><rect x="100" fill="#0042ff"/><rect x="105" fill="#0041ff"/><rect x="110" fill="#003fff"/><rect x="115" fill="#003dff"/><rect x="120" fill="#003cff"/><rect x="125" fill="#003aff"/><rect x="130" fill="#0038ff"/><rect x="135" fill="#0037ff"/><rect x="140" fill="#0035ff"/><rect x="145" fill="#0033ff"/><rect x="150" fill="#0032ff"/><rect x="155" fill="#0030ff"/><rect x="160" fill="#002eff"/><rect x="165" fill="#002dff"/><rect x="170" fill="#002bff"/><rect x="175" fill="#0029ff"/><rect x="180" fill="#0028ff"/><rect x="185" fill="#0626ff"/><rect x="190" fill="#0c24ff"/><rect x="195" fill="#1223ff"/><rect x="200" fill="#1921ff"/><rect x="205" fill="#1f1fff"/><rect x="210" fill="#251dff"/><rect x="215" fill="#2c1cff"/><rect x="220" fill="#321aff"/><rect x="225" fill="#3918ff"/><rect x="230" fill="#3f16ff"/><rect x="235" fill="#4614ff"/><rect x="240" fill="#4c13ff"/><rect x="245" fill="#5311ff"/><rect x="250" fill="#590fff"/><rect x="255" fill="#600dff"/><rect x="260" fill="#670bff"/><rect x="265" fill="#6d0aff"/><rect x="270" fill="#7408ff"/><rect x="275" fill="#7b06ff"/><rect x="280" fill="#8104ff"/><rect x="285" fill="#8802ff"/><rect x="290" fill="#8f00ff"/><rect x="295" fill="#9600ff"/><rect x="300" fill="#9d00ff"/><rect x="305" fill="#a400ff"/><rect x="310" fill="#ab00ff"/><rect x="315" fill="#b200ff"/><rect x="320" fill="#b900ff"/><rect x="325" fill="#c000ff"/><rect x="330" fill="#c700ff"/><rect x="335" fill="#ce00ff"/><rect x="340" fill="#d500ff"/><rect x="345" fill="#dc00ff"/><rect x="350" fill="#e300ff"/><rect x="355" fill="#eb00ff"/><rect x="360" fill="#f200ff"/><rect x="365" fill="#f900ff"/><rect x="370" fill="#ff00fe"/><rect x="375" fill="#ff00f7"/><rect x="380" fill="#ff00f0"/><rect x="385" fill="#ff00e9"/><rect x="390" fill="#ff00e3"/><rect x="395" fill="#ff00de"/><rect x="400" fill="#ff00d8"/><rect x="405" fill="#ff00d3"/><rect x="410" fill="#ff00ce"/><rect x="415" fill="#ff00c9"/><rect x="420" fill="#ff00c4"/><rect x="425" fill="#ff00c0"/><rect x="430" fill="#ff00bb"/><rect x="435" fill="#ff00b7"/><rect x="440" fill="#ff00b3"/><rect x="445" fill="#ff00af"/><rect x="450" fill="#ff00ac"/><rect x="455" fill="#ff00a8"/><rect x="460" fill="#ff00a5"/><rect x="465" fill="#ff00a2"/><rect x="470" fill="#ff009e"/><rect x="475" fill="#ff009b"/><rect x="480" fill="#ff0098"/><rect x="485" fill="#ff0096"/><rect x="490" fill="#ff0093"/><rect x="495" fill="#ff0090"/><rect x="500" fill="#ff008d"/><rect x="505" fill="#ff008b"/></g>
<g transform="translate(990,336)"><rect x="85" fill="#0044ff"/><rect x="90" fill="#0042ff"/><rect x="95" fill="#0041ff"/><rect x="100" fill="#003fff"/><rect x="105" fill="#003dff"/><rect x="110" fill="#003cff"/><rect x="115" fill="#003aff"/><rect x="120" fill="#0039ff"/><rect x="125" fill="#0037ff"/><rect x="130" fill="#0036ff"/><rect x="135" fill="#0034ff"/><rect x="140" fill="#0032ff"/><rect x="145" fill="#0031ff"/><rect x="150" fill="#002fff"/><rect x="155" fill="#002dff"/><rect x="160" fill="#002cff"/><rect x="165" fill="#002aff"/><rect x="170" fill="#0028ff"/><rect x="175" fill="#0027ff"/><rect x="180" fill="#0025ff"/><rect x="185" fill="#0523ff"/><rect x="190" fill="#0b22ff"/><rect x="195" fill="#1120ff"/><rect x="200" fill="#171eff"/><rect x="205" fill="#1d1dff"/><rect x="210" fill="#241bff"/><rect x="215" fill="#2a19ff"/><rect x="220" fill="#3017ff"/><rect x="225" fill="#3616ff"/><rect x="230" fill="#3d14ff"/><rect x="235" fill="#4312ff"/><rect x="240" fill="#4911ff"/><rect x="245" fill="#500fff"/><rect x="250" fill="#560dff"/><rect x="255" fill="#5d0bff"/><rect x="260" fill="#6309ff"/><rect x="265" fill="#6a08ff"/><rect x="270" fill="#7006ff"/><rect x="275" fill="#7704ff"/><rect x="280" fill="#7d02ff"/><rect x="285" fill="#8400ff"/><rect x="290" fill="#8b00ff"/><rect x="295" fill="#9100ff"/><rect x="300" fill="#9800ff"/><rect x="305" fill="#9f00ff"/><rect x="310" fill="#a600ff"/><rect x="315" fill="#ac00ff"/><rect x="320" fill="#b300ff"/><rect x="325" fill="#ba00ff"/><rect x="330" fill="#c100ff"/><rect x="335" fill="#c800ff"/><rect x="340" fill="#cf00ff"/><rect x="345" fill="#d600ff"/><rect x="350" fill="#dd00ff"/><rect x="355" fill="#e400ff"/><rect x="360" fill="#eb00ff"/><rect x="365" fill="#f200ff"/><rect x="370" fill="#f900ff"/><rect x="375" fill="#ff00fe"/><rect x="380" fill="#ff00f7"/><rect x="385" fill="#ff00f0"/><rect x="390" fill="#ff00ea"/><rect x="395" fill="#ff00e4"/><rect x="400" fill="#ff00de"/><rect x="405" fill="#ff00d9"/><rect x="410" fill="#ff00d4"/><rect x="415" fill="#ff00cf"/><rect x="420" fill="#ff00ca"/><rect x="425" fill="#ff00c5"/><rect x="430" fill="#ff00c1"/><rect x="435" fill="#ff00bd"/><rect x="440" fill="#ff00b8"/><rect x="445" fill="#ff00b5"/><rect x="450" fill="#ff00b1"/><rect x="455" fill="#ff00ad"/><rect x="460" fill="#ff00aa"/><rect x="465" fill="#ff00a6"/><rect x="470" fill="#ff00a3"/><rect x="475" fill="#ff00a0"/><rect x="480" fill="#ff009d"/><rect x="485" fill="#ff009a"/><rect x="490" fill="#ff0097"/><rect x="495" fill="#ff0094"/><rect x="500" fill="#ff0092"/></g>
<g transform="translate(990,341)"><rect x="85" fill="#0041ff"/><rect x="90" fill="#003fff"/><rect x="95" fill="#003eff"/><rect x="100" fill="#003cff"/><rect x="105" fill="#003bff"/><rect x="110" fill="#0039ff"/><rect x="115" fill="#0037ff"/><rect x="120" fill="#0036ff"/><rect x="125" fill="#0034ff"/><rect x="130" fill="#0033ff"/><rect x="135" fill="#0031ff"/><rect x="140" fill="#0030ff"/><rect x="145" fill="#002eff"/><rect x="150" fill="#002cff"/><rect x="155" fill="#002bff"/><rect x="160" fill="#0029ff"/><rect x="165" fill="#0028ff"/><rect x="170" fill="#0026ff"/><rect x="175" fill="#0024ff"/><rect x="180" fill="#0023ff"/><rect x="185" fill="#0421ff"/><rect x="190" fill="#0a1fff"/><rect x="195" fill="#101eff"/><rect x="200" fill="#161cff"/><rect x="205" fill="#1c1aff"/><rect x="210" fill="#2219ff"/><rect x="215" fill="#2817ff"/><rect x="220" fill="#2e15ff"/><rect x="225" fill="#3414ff"/><rect x="230" fill="#3a12ff"/><rect x="235" fill="#4110ff"/><rect x="240" fill="#470eff"/><rect x="245" fill="#4d0dff"/><rect x="250" fill="#530bff"/><rect x="255" fill="#5a09ff"/><rect x="260" fill="#6007ff"/><rect x="265" fill="#6606ff"/><rect x="270" fill="#6d04ff"/><rect x="275" fill="#7302ff"/><rect x="280" fill="#7a00ff"/><rect x="285" fill="#8000ff"/><rect x="290" fill="#8700ff"/><rect x="295" fill="#8d00ff"/><rect x="300" fill="#9400ff"/><rect x="305" fill="#9a00ff"/><rect x="310" fill="#a100ff"/><rect x="315" fill="#a700ff"/><rect x="320" fill="#ae00ff"/><rect x="325" fill="#b500ff"/><rect x="330" fill="#bb00ff"/><rect x="335" fill="#c200ff"/><rect x="340" fill="#c900ff"/><rect x="345" fill="#d000ff"/><rect x="350" fill="#d700ff"/><rect x="355" fill="#dd00ff"/><rect x="360" fill="#e400ff"/><rect x="365" fill="#eb00ff"/><rect x="370" fill="#f200ff"/><rect x="375" fill="#f900ff"/><rect x="380" fill="#ff00fe"/><rect x="385" fill="#ff00f7"/><rect x="390" fill="#ff00f0"/><rect x="395" fill="#ff00ea"/><rect x="400" fill="#ff00e4"/><rect x="405" fill="#ff00df"/><rect x="410" fill="#ff00d9"/><rect x="415" fill="#ff00d4"/><rect x="420" fill="#ff00cf"/><rect x="425" fill="#ff00cb"/><rect x="430" fill="#ff00c6"/><rect x="435" fill="#ff00c2"/><rect x="440" fill="#ff00be"/><rect x="445" fill="#ff00ba"/><rect x="450" fill="#ff00b6"/><rect x="455" fill="#ff00b2"/><rect x="460" fill="#ff00ae"/><rect x="465" fill="#ff00ab"/><rect x="470" fill="#ff00a8"/><rect x="475" fill="#ff00a4"/><rect x="480" fill="#ff00a1"/><rect x="485" fill="#ff009e"/><rect x="490" fill="#ff009b"/><rect x="495" fill="#ff0098"/></g>
<g transform="translate(990,346)"><rect x="90" fill="#003cff"/><rect x="95" fill="#003bff"/><rect x="100" fill="#0039ff"/><rect x="105" fill="#0038ff"/><rect x="110" fill="#0036ff"/><rect x="115" fill="#0035ff"/><rect x="120" fill="#0033ff"/><rect x="125" fill="#0032ff"/><rect x="130" fill="#0030ff"/><rect x="135" fill="#002fff"/><rect x="140" fill="#002dff"/><rect x="145" fill="#002bff"/><rect x="150" fill="#002aff"/><rect x="155" fill="#0028ff"/><rect x="160" fill="#0027ff"/><rect x="165" fill="#0025ff"/><rect x="170" fill="#0023ff"/><rect x="175" fill="#0022ff"/><rect x="180" fill="#0020ff"/><rect x="185" fill="#031fff"/><rect x="190" fill="#091dff"/><rect x="195" fill="#0e1bff"/><rect x="200" fill="#141aff"/><rect x="205" fill="#1a18ff"/><rect x="210" fill="#2016ff"/><rect x="215" fill="#2615ff"/><rect x="220" fill="#2c13ff"/><rect x="225" fill="#3211ff"/><rect x="230" fill="#3810ff"/><rect x="235" fill="#3e0eff"/><rect x="240" fill="#440cff"/><rect x="245" fill="#4a0bff"/><rect x="250" fill="#5109ff"/><rect x="255" fill="#5707ff"/><rect x="260" fill="#5d06ff"/><rect x="265" fill="#6304ff"/><rect x="270" fill="#6902ff"/><rect x="275" fill="#7000ff"/><rect x="280" fill="#7600ff"/><rect x="285" fill="#7c00ff"/><rect x="290" fill="#8300ff"/><rect x="295" fill="#8900ff"/><rect x="300" fill="#8f00ff"/><rect x="305" fill="#9600ff"/><rect x="310" fill="#9c00ff"/><rect x="315" fill="#a300ff"/><rect x="320" fill="#a900ff"/><rect x="325" fill="#b000ff"/><rect x="330" fill="#b600ff"/><rect x="335" fill="#bd00ff"/><rect x="340" fill="#c300ff"/><rect x="345" fill="#ca00ff"/><rect x="350" fill="#d100ff"/><rect x="355" fill="#d700ff"/><rect x="360" fill="#de00ff"/><rect x="365" fill="#e500ff"/><rect x="370" fill="#ec00ff"/><rect x="375" fill="#f300ff"/><rect x="380" fill="#f900ff"/><rect x="385" fill="#ff00fe"/><rect x="390" fill="#ff00f7"/><rect x="395" fill="#ff00f1"/><rect x="400" fill="#ff00eb"/><rect x="405" fill="#ff00e5"/><rect x="410" fill="#ff00df"/><rect x="415" fill="#ff00da"/><rect x="420" fill="#ff00d5"/><rect x="425" fill="#ff00d0"/><rect x="430" fill="#ff00cc"/><rect x="435" fill="#ff00c7"/><rect x="440" fill="#ff00c3"/><rect x="445" fill="#ff00bf"/><rect x="450" fill="#ff00bb"/><rect x="455" fill="#ff00b7"/><rect x="460" fill="#ff00b3"/><rect x="465" fill="#ff00b0"/><rect x="470" fill="#ff00ac"/><rect x="475" fill="#ff00a9"/><rect x="480" fill="#ff00a6"/><rect x="485" fill="#ff00a3"/><rect x="490" fill="#ff00a0"/></g>
<g transform="translate(990,351)"><rect x="90" fill="#003aff"/><rect x="95" fill="#0038ff"/><rect x="100" fill="#0037ff"/><rect x="105" fill="#0035ff"/><rect x="110" fill="#0034ff"/><rect x="115" fill="#0032ff"/><rect x="120" fill="#0031ff"/><rect x="125" fill="#002fff"/><rect x="130" fill="#002eff"/><rect x="135" fill="#002cff"/><rect x="140" fill="#002aff"/><rect x="145" fill="#0029ff"/><rect x="150" fill="#0027ff"/><rect x="155" fill="#0026ff"/><rect x="160" fill="#0024ff"/><rect x="165" fill="#0023ff"/><rect x="170" fill="#0021ff"/><rect x="175" fill="#0020ff"/><rect x="180" fill="#001eff"/><rect x="185" fill="#021cff"/><rect x="190" fill="#071bff"/><rect x="195" fill="#0d19ff"/><rect x="200" fill="#1318ff"/><rect x="205" fill="#1916ff"/><rect x="210" fill="#1f14ff"/><rect x="215" fill="#2413ff"/><rect x="220" fill="#2a11ff"/><rect x="225" fill="#300fff"/><rect x="230" fill="#360eff"/><rect x="235" fill="#3c0cff"/><rect x="240" fill="#420bff"/><rect x="245" fill="#4809ff"/><rect x="250" fill="#4e07ff"/><rect x="255" fill="#5405ff"/><rect x="260" fill="#5a04ff"/><rect x="265" fill="#6002ff"/><rect x="270" fill="#6600ff"/><rect x="275" fill="#6c00ff"/><rect x="280" fill="#7200ff"/><rect x="285" fill="#7900ff"/><rect x="290" fill="#7f00ff"/><rect x="295" fill="#8500ff"/><rect x="300" fill="#8b00ff"/><rect x="305" fill="#9200ff"/><rect x="310" fill="#9800ff"/><rect x="315" fill="#9e00ff"/><rect x="320" fill="#a400ff"/><rect x="325" fill="#ab00ff"/><rect x="330" fill="#b100ff"/><rect x="335" fill="#b800ff"/><rect x="340" fill="#be00ff"/><rect x="345" fill="#c500ff"/><rect x="350" fill="#cb00ff"/><rect x="355" fill="#d200ff"/><rect x="360" fill="#d800ff"/><rect x="365" fill="#df00ff"/><rect x="370" fill="#e500ff"/><rect x="375" fill="#ec00ff"/><rect x="380" fill="#f300ff"/><rect x="385" fill="#f900ff"/><rect x="390" fill="#ff00fe"/><rect x="395" fill="#ff00f7"/><rect x="400" fill="#ff00f1"/><rect x="405" fill="#ff00eb"/><rect x="410" fill="#ff00e5"/><rect x="415" fill="#ff00e0"/><rect x="420" fill="#ff00db"/><rect x="425" fill="#ff00d6"/><rect x="430" fill="#ff00d1"/><rect x="435" fill="#ff00cc"/><rect x="440" fill="#ff00c8"/><rect x="445" fill="#ff00c4"/><rect x="450" fill="#ff00c0"/><rect x="455" fill="#ff00bc"/><rect x="460" fill="#ff00b8"/><rect x="465" fill="#ff00b4"/><rect x="470" fill="#ff00b1"/><rect x="475" fill="#ff00ad"/><rect x="480" fill="#ff00aa"/><rect x="485" fill="#ff00a7"/></g>
<g transform="translate(990,356)"><rect x="95" fill="#0035ff"/><rect x="100" fill="#0034ff"/><rect x="105" fill="#0032ff"/><rect x="110" fill="#0031ff"/><rect x="115" fill="#0030ff"/><rect x="120" fill="#002eff"/><rect x="125" fill="#002dff"/><rect x="130" fill="#002bff"/><rect x="135" fill="#002aff"/><rect x="140" fill="#0028ff"/><rect x="145" fill="#0027ff"/><rect x="150" fill="#0025ff"/><rect x="155" fill="#0023ff"/><rect x="160" fill="#0022ff"/><rect x="165" fill="#0020ff"/><rect x="170" fill="#001fff"/><rect x="175" fill="#001dff"/><rect x="180" fill="#001cff"/><rect x="185" fill="#011aff"/><rect x="190" fill="#0619ff"/><rect x="195" fill="#0c17ff"/><rect x="200" fill="#1216ff"/><rect x="205" fill="#1714ff"/><rect x="210" fill="#1d12ff"/><rect x="215" fill="#2311ff"/><rect x="220" fill="#280fff"/><rect x="225" fill="#2e0eff"/><rect x="230" fill="#340cff"/><rect x="235" fill="#3a0aff"/><rect x="240" fill="#4009ff"/><rect x="245" fill="#4507ff"/><rect x="250" fill="#4b05ff"/><rect x="255" fill="#5104ff"/><rect x="260" fill="#5702ff"/><rect x="265" fill="#5d00ff"/><rect x="270" fill="#6300ff"/><rect x="275" fill="#6900ff"/><rect x="280" fill="#6f00ff"/><rect x="285" fill="#7500ff"/><rect x="290" fill="#7b00ff"/><rect x="295" fill="#8100ff"/><rect x="300" fill="#8700ff"/><rect x="305" fill="#8d00ff"/><rect x="310" fill="#9400ff"/><rect x="315" fill="#9a00ff"/><rect x="320" fill="#a000ff"/><rect x="325" fill="#a600ff"/><rect x="330" fill="#ac00ff"/><rect x="335" fill="#b300ff"/><rect x="340" fill="#b900ff"/><rect x="345" fill="#bf00ff"/><rect x="350" fill="#c600ff"/><rect x="355" fill="#cc00ff"/><rect x="360" fill="#d300ff"/><rect x="365" fill="#d900ff"/><rect x="370" fill="#df00ff"/><rect x="375" fill="#e600ff"/><rect x="380" fill="#ec00ff"/><rect x="385" fill="#f300ff"/><rect x="390" fill="#fa00ff"/><rect x="395" fill="#ff00fe"/><rect x="400" fill="#ff00f8"/><rect x="405" fill="#ff00f1"/><rect x="410" fill="#ff00ec"/><rect x="415" fill="#ff00e6"/><rect x="420" fill="#ff00e1"/><rect x="425" fill="#ff00db"/><rect x="430" fill="#ff00d7"/><rect x="435" fill="#ff00d2"/><rect x="440" fill="#ff00cd"/><rect x="445" fill="#ff00c9"/><rect x="450" fill="#ff00c5"/><rect x="455" fill="#ff00c1"/><rect x="460" fill="#ff00bd"/><rect x="465" fill="#ff00b9"/><rect x="470" fill="#ff00b5"/><rect x="475" fill="#ff00b2"/><rect x="480" fill="#ff00af"/></g>
<g transform="translate(990,361)"><rect x="100" fill="#0031ff"/><rect x="105" fill="#0030ff"/><rect x="110" fill="#002fff"/><rect x="115" fill="#002dff"/><rect x="120" fill="#002cff"/><rect x="125" fill="#002aff"/><rect x="130" fill="#0029ff"/><rect x="135" fill="#0027ff"/><rect x="140" fill="#0026ff"/><rect x="145" fill="#0024ff"/><rect x="150" fill="#0023ff"/><rect x="155" fill="#0021ff"/><rect x="160" fill="#0020ff"/><rect x="165" fill="#001eff"/><rect x="170" fill="#001dff"/><rect x="175" fill="#001bff"/><rect x="180" fill="#001aff"/><rect x="185" fill="#0018ff"/><rect x="190" fill="#0517ff"/><rect x="195" fill="#0b15ff"/><rect x="200" fill="#1014ff"/><rect x="205" fill="#1612ff"/><rect x="210" fill="#1c10ff"/><rect x="215" fill="#210fff"/><rect x="220" fill="#270dff"/><rect x="225" fill="#2c0cff"/><rect x="230" fill="#320aff"/><rect x="235" fill="#3809ff"/><rect x="240" fill="#3d07ff"/><rect x="245" fill="#4305ff"/><rect x="250" fill="#4904ff"/><rect x="255" fill="#4f02ff"/><rect x="260" fill="#5400ff"/><rect x="265" fill="#5a00ff"/><rect x="270" fill="#6000ff"/><rect x="275" fill="#6600ff"/><rect x="280" fill="#6c00ff"/><rect x="285" fill="#7200ff"/><rect x="290" fill="#7800ff"/><rect x="295" fill="#7e00ff"/><rect x="300" fill="#8400ff"/><rect x="305" fill="#8a00ff"/><rect x="310" fill="#9000ff"/><rect x="315" fill="#9600ff"/><rect x="320" fill="#9c00ff"/><rect x="325" fill="#a200ff"/><rect x="330" fill="#a800ff"/><rect x="335" fill="#ae00ff"/><rect x="340" fill="#b400ff"/><rect x="345" fill="#ba00ff"/><rect x="350" fill="#c100ff"/><rect x="355" fill="#c700ff"/><rect x="360" fill="#cd00ff"/><rect x="365" fill="#d300ff"/><rect x="370" fill="#da00ff"/><rect x="375" fill="#e000ff"/><rect x="380" fill="#e600ff"/><rect x="385" fill="#ed00ff"/><rect x="390" fill="#f300ff"/><rect x="395" fill="#fa00ff"/><rect x="400" fill="#ff00fe"/><rect x="405" fill="#ff00f8"/><rect x="410" fill="#ff00f2"/><rect x="415" fill="#ff00ec"/><rect x="420" fill="#ff00e6"/><rect x="425" fill="#ff00e1"/><rect x="430" fill="#ff00dc"/><rect x="435" fill="#ff00d7"/><rect x="440" fill="#ff00d3"/><rect x="445" fill="#ff00ce"/><rect x="450" fill="#ff00ca"/><rect x="455" fill="#ff00c6"/><rect x="460" fill="#ff00c2"/><rect x="465" fill="#ff00be"/><rect x="470" fill="#ff00ba"/><rect x="475" fill="#ff00b7"/></g>
<g transform="translate(990,366)"><rect x="100" fill="#002fff"/><rect x="105" fill="#002eff"/><rect x="110" fill="#002cff"/><rect x="115" fill="#002bff"/><rect x="120" fill="#0029ff"/><rect x="125" fill="#0028ff"/><rect x="130" fill="#0026ff"/><rect x="135" fill="#0025ff"/><rect x="140" fill="#0024ff"/><rect x="145" fill="#0022ff"/><rect x="150" fill="#0021ff"/><rect x="155" fill="#001fff"/><rect x="160" fill="#001eff"/><rect x="165" fill="#001cff"/><rect x="170" fill="#001bff"/><rect x="175" fill="#0019ff"/><rect x="180" fill="#0018ff"/><rect x="185" fill="#0016ff"/><rect x="190" fill="#0415ff"/><rect x="195" fill="#0a13ff"/><rect x="200" fill="#0f12ff"/><rect x="205" fill="#1510ff"/><rect x="210" fill="#1a0fff"/><rect x="215" fill="#200dff"/><rect x="220" fill="#250bff"/><rect x="225" fill="#2b0aff"/><rect x="230" fill="#3008ff"/><rect x="235" fill="#3607ff"/><rect x="240" fill="#3b05ff"/><rect x="245" fill="#4104ff"/><rect x="250" fill="#4702ff"/><rect x="255" fill="#4c00ff"/><rect x="260" fill="#5200ff"/><rect x="265" fill="#5800ff"/><rect x="270" fill="#5d00ff"/><rect x="275" fill="#6300ff"/><rect x="280" fill="#6900ff"/><rect x="285" fill="#6f00ff"/><rect x="290" fill="#7400ff"/><rect x="295" fill="#7a00ff"/><rect x="300" fill="#8000ff"/><rect x="305" fill="#8600ff"/><rect x="310" fill="#8c00ff"/><rect x="315" fill="#9200ff"/><rect x="320" fill="#9800ff"/><rect x="325" fill="#9e00ff"/><rect x="330" fill="#a300ff"/><rect x="335" fill="#a900ff"/><rect x="340" fill="#b000ff"/><rect x="345" fill="#b600ff"/><rect x="350" fill="#bc00ff"/><rect x="355" fill="#c200ff"/><rect x="360" fill="#c800ff"/><rect x="365" fill="#ce00ff"/><rect x="370" fill="#d400ff"/><rect x="375" fill="#da00ff"/><rect x="380" fill="#e100ff"/><rect x="385" fill="#e700ff"/><rect x="390" fill="#ed00ff"/><rect x="395" fill="#f300ff"/><rect x="400" fill="#fa00ff"/><rect x="405" fill="#ff00fe"/><rect x="410" fill="#ff00f8"/><rect x="415" fill="#ff00f2"/><rect x="420" fill="#ff00ec"/><rect x="425" fill="#ff00e7"/><rect x="430" fill="#ff00e2"/><rect x="435" fill="#ff00dd"/><rect x="440" fill="#ff00d8"/><rect x="445" fill="#ff00d3"/><rect x="450" fill="#ff00cf"/><rect x="455" fill="#ff00cb"/><rect x="460" fill="#ff00c7"/><rect x="465" fill="#ff00c3"/><rect x="470" fill="#ff00bf"/></g>
<g transform="translate(990,371)"><rect x="105" fill="#002bff"/><rect x="110" fill="#002aff"/><rect x="115" fill="#0029ff"/><rect x="120" fill="#0027ff"/><rect x="125" fill="#0026ff"/><rect x="130" fill="#0024ff"/><rect x="135" fill="#0023ff"/><rect x="140" fill="#0021ff"/><rect x="145" fill="#0020ff"/><rect x="150" fill="#001fff"/><rect x="155" fill="#001dff"/><rect x="160" fill="#001cff"/><rect x="165" fill="#001aff"/><rect x="170" fill="#0019ff"/><rect x="175" fill="#0017ff"/><rect x="180" fill="#0016ff"/><rect x="185" fill="#0014ff"/><rect x="190" fill="#0313ff"/><rect x="195" fill="#0911ff"/><rect x="200" fill="#0e10ff"/><rect x="205" fill="#130eff"/><rect x="210" fill="#190dff"/><rect x="215" fill="#1e0bff"/><rect x="220" fill="#240aff"/><rect x="225" fill="#2908ff"/><rect x="230" fill="#2e07ff"/><rect x="235" fill="#3405ff"/><rect x="240" fill="#3904ff"/><rect x="245" fill="#3f02ff"/><rect x="250" fill="#4401ff"/><rect x="255" fill="#4a00ff"/><rect x="260" fill="#4f00ff"/><rect x="265" fill="#5500ff"/><rect x="270" fill="#5b00ff"/><rect x="275" fill="#6000ff"/><rect x="280" fill="#6600ff"/><rect x="285" fill="#6b00ff"/><rect x="290" fill="#7100ff"/><rect x="295" fill="#7700ff"/><rect x="300" fill="#7d00ff"/><rect x="305" fill="#8200ff"/><rect x="310" fill="#8800ff"/><rect x="315" fill="#8e00ff"/><rect x="320" fill="#9400ff"/><rect x="325" fill="#9900ff"/><rect x="330" fill="#9f00ff"/><rect x="335" fill="#a500ff"/><rect x="340" fill="#ab00ff"/><rect x="345" fill="#b100ff"/><rect x="350" fill="#b700ff"/><rect x="355" fill="#bd00ff"/><rect x="360" fill="#c300ff"/><rect x="365" fill="#c900ff"/><rect x="370" fill="#cf00ff"/><rect x="375" fill="#d500ff"/><rect x="380" fill="#db00ff"/><rect x="385" fill="#e100ff"/><rect x="390" fill="#e700ff"/><rect x="395" fill="#ed00ff"/><rect x="400" fill="#f400ff"/><rect x="405" fill="#fa00ff"/><rect x="410" fill="#ff00fe"/><rect x="415" fill="#ff00f8"/><rect x="420" fill="#ff00f2"/><rect x="425" fill="#ff00ed"/><rect x="430" fill="#ff00e7"/><rect x="435" fill="#ff00e2"/><rect x="440" fill="#ff00dd"/><rect x="445" fill="#ff00d9"/><rect x="450" fill="#ff00d4"/><rect x="455" fill="#ff00d0"/><rect x="460" fill="#ff00cc"/><rect x="465" fill="#ff00c7"/></g>
<g transform="translate(990,376)"><rect x="110" fill="#0028ff"/><rect x="115" fill="#0026ff"/><rect x="120" fill="#0025ff"/><rect x="125" fill="#0024ff"/><rect x="130" fill="#0022ff"/><rect x="135" fill="#0021ff"/><rect x="140" fill="#001fff"/><rect x="145" fill="#001eff"/><rect x="150" fill="#001cff"/><rect x="155" fill="#001bff"/><rect x="160" fill="#001aff"/><rect x="165" fill="#0018ff"/><rect x="170" fill="#0017ff"/><rect x="175" fill="#0015ff"/><rect x="180" fill="#0014ff"/><rect x="185" fill="#0012ff"/><rect x="190" fill="#0311ff"/><rect x="195" fill="#080fff"/><rect x="200" fill="#0d0eff"/><rect x="205" fill="#120dff"/><rect x="210" fill="#170bff"/><rect x="215" fill="#1d0aff"/><rect x="220" fill="#2208ff"/><rect x="225" fill="#2707ff"/><rect x="230" fill="#2d05ff"/><rect x="235" fill="#3204ff"/><rect x="240" fill="#3702ff"/><rect x="245" fill="#3d01ff"/><rect x="250" fill="#4200ff"/><rect x="255" fill="#4800ff"/><rect x="260" fill="#4d00ff"/><rect x="265" fill="#5200ff"/><rect x="270" fill="#5800ff"/><rect x="275" fill="#5d00ff"/><rect x="280" fill="#6300ff"/><rect x="285" fill="#6800ff"/><rect x="290" fill="#6e00ff"/><rect x="295" fill="#7400ff"/><rect x="300" fill="#7900ff"/><rect x="305" fill="#7f00ff"/><rect x="310" fill="#8400ff"/><rect x="315" fill="#8a00ff"/><rect x="320" fill="#9000ff"/><rect x="325" fill="#9600ff"/><rect x="330" fill="#9b00ff"/><rect x="335" fill="#a100ff"/><rect x="340" fill="#a700ff"/><rect x="345" fill="#ad00ff"/><rect x="350" fill="#b200ff"/><rect x="355" fill="#b800ff"/><rect x="360" fill="#be00ff"/><rect x="365" fill="#c400ff"/><rect x="370" fill="#ca00ff"/><rect x="375" fill="#d000ff"/><rect x="380" fill="#d600ff"/><rect x="385" fill="#dc00ff"/><rect x="390" fill="#e200ff"/><rect x="395" fill="#e800ff"/><rect x="400" fill="#ee00ff"/><rect x="405" fill="#f400ff"/><rect x="410" fill="#fa00ff"/><rect x="415" fill="#ff00fe"/><rect x="420" fill="#ff00f8"/><rect x="425" fill="#ff00f2"/><rect x="430" fill="#ff00ed"/><rect x="435" fill="#ff00e8"/><rect x="440" fill="#ff00e3"/><rect x="445" fill="#ff00de"/><rect x="450" fill="#ff00d9"/><rect x="455" fill="#ff00d5"/><rect x="460" fill="#ff00d0"/></g>
<g transform="translate(990,381)"><rect x="110" fill="#0026ff"/><rect x="115" fill="#0024ff"/><rect x="120" fill="#0023ff"/><rect x="125" fill="#0021ff"/><rect x="130" fill="#0020ff"/><rect x="135" fill="#001fff"/><rect x="140" fill="#001dff"/><rect x="145" fill="#001cff"/><rect x="150" fill="#001bff"/><rect x="155" fill="#0019ff"/><rect x="160" fill="#0018ff"/><rect x="165" fill="#0016ff"/><rect x="170" fill="#0015ff"/><rect x="175" fill="#0013ff"/><rect x="180" fill="#0012ff"/><rect x="185" fill="#0011ff"/><rect x="190" fill="#020fff"/><rect x="195" fill="#070eff"/><rect x="200" fill="#0c0cff"/><rect x="205" fill="#110bff"/><rect x="210" fill="#1609ff"/><rect x="215" fill="#1b08ff"/><rect x="220" fill="#2106ff"/><rect x="225" fill="#2605ff"/><rect x="230" fill="#2b04ff"/><rect x="235" fill="#3002ff"/><rect x="240" fill="#3501ff"/><rect x="245" fill="#3b00ff"/><rect x="250" fill="#4000ff"/><rect x="255" fill="#4500ff"/><rect x="260" fill="#4b00ff"/><rect x="265" fill="#5000ff"/><rect x="270" fill="#5500ff"/><rect x="275" fill="#5b00ff"/><rect x="280" fill="#6000ff"/><rect x="285" fill="#6600ff"/><rect x="290" fill="#6b00ff"/><rect x="295" fill="#7100ff"/><rect x="300" fill="#7600ff"/><rect x="305" fill="#7c00ff"/><rect x="310" fill="#8100ff"/><rect x="315" fill="#8700ff"/><rect x="320" fill="#8c00ff"/><rect x="325" fill="#9200ff"/><rect x="330" fill="#9700ff"/><rect x="335" fill="#9d00ff"/><rect x="340" fill="#a300ff"/><rect x="345" fill="#a800ff"/><rect x="350" fill="#ae00ff"/><rect x="355" fill="#b400ff"/><rect x="360" fill="#b900ff"/><rect x="365" fill="#bf00ff"/><rect x="370" fill="#c500ff"/><rect x="375" fill="#cb00ff"/><rect x="380" fill="#d100ff"/><rect x="385" fill="#d600ff"/><rect x="390" fill="#dc00ff"/><rect x="395" fill="#e200ff"/><rect x="400" fill="#e800ff"/><rect x="405" fill="#ee00ff"/><rect x="410" fill="#f400ff"/><rect x="415" fill="#fa00ff"/><rect x="420" fill="#ff00fe"/><rect x="425" fill="#ff00f8"/><rect x="430" fill="#ff00f3"/><rect x="435" fill="#ff00ed"/><rect x="440" fill="#ff00e8"/><rect x="445" fill="#ff00e3"/><rect x="450" fill="#ff00de"/><rect x="455" fill="#ff00da"/></g>
<g transform="translate(990,386)"><rect x="115" fill="#0022ff"/><rect x="120" fill="#0021ff"/><rect x="125" fill="#0020ff"/><rect x="130" fill="#001eff"/><rect x="135" fill="#001dff"/><rect x="140" fill="#001bff"/><rect x="145" fill="#001aff"/><rect x="150" fill="#0019ff"/><rect x="155" fill="#0017ff"/><rect x="160" fill="#0016ff"/><rect x="165" fill="#0015ff"/><rect x="170" fill="#0013ff"/><rect x="175" fill="#0012ff"/><rect x="180" fill="#0010ff"/><rect x="185" fill="#000fff"/><rect x="190" fill="#010eff"/><rect x="195" fill="#060cff"/><rect x="200" fill="#0b0bff"/><rect x="205" fill="#1009ff"/><rect x="210" fill="#1508ff"/><rect x="215" fill="#1a06ff"/><rect x="220" fill="#1f05ff"/><rect x="225" fill="#2403ff"/><rect x="230" fill="#2902ff"/><rect x="235" fill="#2e01ff"/><rect x="240" fill="#3400ff"/><rect x="245" fill="#3900ff"/><rect x="250" fill="#3e00ff"/><rect x="255" fill="#4300ff"/><rect x="260" fill="#4800ff"/><rect x="265" fill="#4e00ff"/><rect x="270" fill="#5300ff"/><rect x="275" fill="#5800ff"/><rect x="280" fill="#5e00ff"/><rect x="285" fill="#6300ff"/><rect x="290" fill="#6800ff"/><rect x="295" fill="#6e00ff"/><rect x="300" fill="#7300ff"/><rect x="305" fill="#7800ff"/><rect x="310" fill="#7e00ff"/><rect x="315" fill="#8300ff"/><rect x="320" fill="#8900ff"/><rect x="325" fill="#8e00ff"/><rect x="330" fill="#9400ff"/><rect x="335" fill="#9900ff"/><rect x="340" fill="#9f00ff"/><rect x="345" fill="#a400ff"/><rect x="350" fill="#aa00ff"/><rect x="355" fill="#af00ff"/><rect x="360" fill="#b500ff"/><rect x="365" fill="#bb00ff"/><rect x="370" fill="#c000ff"/><rect x="375" fill="#c600ff"/><rect x="380" fill="#cc00ff"/><rect x="385" fill="#d100ff"/><rect x="390" fill="#d700ff"/><rect x="395" fill="#dd00ff"/><rect x="400" fill="#e300ff"/><rect x="405" fill="#e800ff"/><rect x="410" fill="#ee00ff"/><rect x="415" fill="#f400ff"/><rect x="420" fill="#fa00ff"/><rect x="425" fill="#ff00fe"/><rect x="430" fill="#ff00f8"/><rect x="435" fill="#ff00f3"/><rect x="440" fill="#ff00ee"/><rect x="445" fill="#ff00e9"/><rect x="450" fill="#ff00e4"/></g>
<g transform="translate(990,391)"><rect x="115" fill="#0020ff"/><rect x="120" fill="#001fff"/><rect x="125" fill="#001eff"/><rect x="130" fill="#001cff"/><rect x="135" fill="#001bff"/><rect x="140" fill="#001aff"/><rect x="145" fill="#0018ff"/><rect x="150" fill="#0017ff"/><rect x="155" fill="#0016ff"/><rect x="160" fill="#0014ff"/><rect x="165" fill="#0013ff"/><rect x="170" fill="#0011ff"/><rect x="175" fill="#0010ff"/><rect x="180" fill="#000fff"/><rect x="185" fill="#000dff"/><rect x="190" fill="#000cff"/><rect x="195" fill="#050aff"/><rect x="200" fill="#0a09ff"/><rect x="205" fill="#0f08ff"/><rect x="210" fill="#1406ff"/><rect x="215" fill="#1905ff"/><rect x="220" fill="#1e03ff"/><rect x="225" fill="#2302ff"/><rect x="230" fill="#2801ff"/><rect x="235" fill="#2d00ff"/><rect x="240" fill="#3200ff"/><rect x="245" fill="#3700ff"/><rect x="250" fill="#3c00ff"/><rect x="255" fill="#4100ff"/><rect x="260" fill="#4600ff"/><rect x="265" fill="#4b00ff"/><rect x="270" fill="#5100ff"/><rect x="275" fill="#5600ff"/><rect x="280" fill="#5b00ff"/><rect x="285" fill="#6000ff"/><rect x="290" fill="#6500ff"/><rect x="295" fill="#6b00ff"/><rect x="300" fill="#7000ff"/><rect x="305" fill="#7500ff"/><rect x="310" fill="#7b00ff"/><rect x="315" fill="#8000ff"/><rect x="320" fill="#8500ff"/><rect x="325" fill="#8b00ff"/><rect x="330" fill="#9000ff"/><rect x="335" fill="#9500ff"/><rect x="340" fill="#9b00ff"/><rect x="345" fill="#a000ff"/><rect x="350" fill="#a600ff"/><rect x="355" fill="#ab00ff"/><rect x="360" fill="#b100ff"/><rect x="365" fill="#b600ff"/><rect x="370" fill="#bc00ff"/><rect x="375" fill="#c100ff"/><rect x="380" fill="#c700ff"/><rect x="385" fill="#cc00ff"/><rect x="390" fill="#d200ff"/><rect x="395" fill="#d800ff"/><rect x="400" fill="#dd00ff"/><rect x="405" fill="#e300ff"/><rect x="410" fill="#e900ff"/><rect x="415" fill="#ef00ff"/><rect x="420" fill="#f400ff"/><rect x="425" fill="#fa00ff"/><rect x="430" fill="#ff00fe"/><rect x="435" fill="#ff00f9"/><rect x="440" fill="#ff00f3"/><rect x="445" fill="#ff00ee"/></g>
<g transform="translate(990,396)"><rect x="120" fill="#001dff"/><rect x="125" fill="#001cff"/><rect x="130" fill="#001aff"/><rect x="135" fill="#0019ff"/><rect x="140" fill="#0018ff"/><rect x="145" fill="#0016ff"/><rect x="150" fill="#0015ff"/><rect x="155" fill="#0014ff"/><rect x="160" fill="#0012ff"/><rect x="165" fill="#0011ff"/><rect x="170" fill="#0010ff"/><rect x="175" fill="#000eff"/><rect x="180" fill="#000dff"/><rect x="185" fill="#000cff"/><rect x="190" fill="#000aff"/><rect x="195" fill="#0409ff"/><rect x="200" fill="#0908ff"/><rect x="205" fill="#0e06ff"/><rect x="210" fill="#1305ff"/><rect x="215" fill="#1803ff"/><rect x="220" fill="#1c02ff"/><rect x="225" fill="#2101ff"/><rect x="230" fill="#2600ff"/><rect x="235" fill="#2b00ff"/><rect x="240" fill="#3000ff"/><rect x="245" fill="#3500ff"/><rect x="250" fill="#3a00ff"/><rect x="255" fill="#3f00ff"/><rect x="260" fill="#4400ff"/><rect x="265" fill="#4900ff"/><rect x="270" fill="#4e00ff"/><rect x="275" fill="#5300ff"/><rect x="280" fill="#5900ff"/><rect x="285" fill="#5e00ff"/><rect x="290" fill="#6300ff"/><rect x="295" fill="#6800ff"/><rect x="300" fill="#6d00ff"/><rect x="305" fill="#7200ff"/><rect x="310" fill="#7800ff"/><rect x="315" fill="#7d00ff"/><rect x="320" fill="#8200ff"/><rect x="325" fill="#8700ff"/><rect x="330" fill="#8d00ff"/><rect x="335" fill="#9200ff"/><rect x="340" fill="#9700ff"/><rect x="345" fill="#9c00ff"/><rect x="350" fill="#a200ff"/><rect x="355" fill="#a700ff"/><rect x="360" fill="#ad00ff"/><rect x="365" fill="#b200ff"/><rect x="370" fill="#b700ff"/><rect x="375" fill="#bd00ff"/><rect x="380" fill="#c200ff"/><rect x="385" fill="#c800ff"/><rect x="390" fill="#cd00ff"/><rect x="395" fill="#d300ff"/><rect x="400" fill="#d800ff"/><rect x="405" fill="#de00ff"/><rect x="410" fill="#e400ff"/><rect x="415" fill="#e900ff"/><rect x="420" fill="#ef00ff"/><rect x="425" fill="#f400ff"/><rect x="430" fill="#fa00ff"/><rect x="435" fill="#ff00fe"/><rect x="440" fill="#ff00f9"/></g>
<g transform="translate(990,401)"><rect x="125" fill="#001aff"/><rect x="130" fill="#0019ff"/><rect x="135" fill="#0017ff"/><rect x="140" fill="#0016ff"/><rect x="145" fill="#0015ff"/><rect x="150" fill="#0013ff"/><rect x="155" fill="#0012ff"/><rect x="160" fill="#0011ff"/><rect x="165" fill="#0010ff"/><rect x="170" fill="#000eff"/><rect x="175" fill="#000dff"/><rect x="180" fill="#000bff"/><rect x="185" fill="#000aff"/><rect x="190" fill="#0009ff"/><rect x="195" fill="#0307ff"/><rect x="200" fill="#0806ff"/><rect x="205" fill="#0d05ff"/><rect x="210" fill="#1203ff"/><rect x="215" fill="#1602ff"/><rect x="220" fill="#1b01ff"/><rect x="225" fill="#2000ff"/><rect x="230" fill="#2500ff"/><rect x="235" fill="#2a00ff"/><rect x="240" fill="#2f00ff"/><rect x="245" fill="#3300ff"/><rect x="250" fill="#3800ff"/><rect x="255" fill="#3d00ff"/><rect x="260" fill="#4200ff"/><rect x="265" fill="#4700ff"/><rect x="270" fill="#4c00ff"/><rect x="275" fill="#5100ff"/><rect x="280" fill="#5600ff"/><rect x="285" fill="#5b00ff"/><rect x="290" fill="#6000ff"/><rect x="295" fill="#6500ff"/><rect x="300" fill="#6a00ff"/><rect x="305" fill="#6f00ff"/><rect x="310" fill="#7500ff"/><rect x="315" fill="#7a00ff"/><rect x="320" fill="#7f00ff"/><rect x="325" fill="#8400ff"/><rect x="330" fill="#8900ff"/><rect x="335" fill="#8e00ff"/><rect x="340" fill="#9400ff"/><rect x="345" fill="#9900ff"/><rect x="350" fill="#9e00ff"/><rect x="355" fill="#a300ff"/><rect x="360" fill="#a900ff"/><rect x="365" fill="#ae00ff"/><rect x="370" fill="#b300ff"/><rect x="375" fill="#b900ff"/><rect x="380" fill="#be00ff"/><rect x="385" fill="#c300ff"/><rect x="390" fill="#c900ff"/><rect x="395" fill="#ce00ff"/><rect x="400" fill="#d400ff"/><rect x="405" fill="#d900ff"/><rect x="410" fill="#de00ff"/><rect x="415" fill="#e400ff"/><rect x="420" fill="#e900ff"/><rect x="425" fill="#ef00ff"/><rect x="430" fill="#f500ff"/><rect x="435" fill="#fa00ff"/></g>
<g transform="translate(990,406)"><rect x="125" fill="#0018ff"/><rect x="130" fill="#0017ff"/><rect x="135" fill="#0016ff"/><rect x="140" fill="#0014ff"/><rect x="145" fill="#0013ff"/><rect x="150" fill="#0012ff"/><rect x="155" fill="#0011ff"/><rect x="160" fill="#000fff"/><rect x="165" fill="#000eff"/><rect x="170" fill="#000dff"/><rect x="175" fill="#000bff"/><rect x="180" fill="#000aff"/><rect x="185" fill="#0009ff"/><rect x="190" fill="#0007ff"/><rect x="195" fill="#0206ff"/><rect x="200" fill="#0705ff"/><rect x="205" fill="#0c03ff"/><rect x="210" fill="#1102ff"/><rect x="215" fill="#1501ff"/><rect x="220" fill="#1a00ff"/><rect x="225" fill="#1f00ff"/><rect x="230" fill="#2300ff"/><rect x="235" fill="#2800ff"/><rect x="240" fill="#2d00ff"/><rect x="245" fill="#3200ff"/><rect x="250" fill="#3700ff"/><rect x="255" fill="#3b00ff"/><rect x="260" fill="#4000ff"/><rect x="265" fill="#4500ff"/><rect x="270" fill="#4a00ff"/><rect x="275" fill="#4f00ff"/><rect x="280" fill="#5400ff"/><rect x="285" fill="#5900ff"/><rect x="290" fill="#5e00ff"/><rect x="295" fill="#6300ff"/><rect x="300" fill="#6800ff"/><rect x="305" fill="#6d00ff"/><rect x="310" fill="#7200ff"/><rect x="315" fill="#7700ff"/><rect x="320" fill="#7c00ff"/><rect x="325" fill="#8100ff"/><rect x="330" fill="#8600ff"/><rect x="335" fill="#8b00ff"/><rect x="340" fill="#9000ff"/><rect x="345" fill="#9500ff"/><rect x="350" fill="#9a00ff"/><rect x="355" fill="#a000ff"/><rect x="360" fill="#a500ff"/><rect x="365" fill="#aa00ff"/><rect x="370" fill="#af00ff"/><rect x="375" fill="#b400ff"/><rect x="380" fill="#ba00ff"/><rect x="385" fill="#bf00ff"/><rect x="390" fill="#c400ff"/><rect x="395" fill="#ca00ff"/><rect x="400" fill="#cf00ff"/><rect x="405" fill="#d400ff"/><rect x="410" fill="#da00ff"/><rect x="415" fill="#df00ff"/><rect x="420" fill="#e400ff"/><rect x="425" fill="#ea00ff"/><rect x="430" fill="#ef00ff"/></g>
<g transform="translate(990,411)"><rect x="130" fill="#0015ff"/><rect x="135" fill="#0014ff"/><rect x="140" fill="#0013ff"/><rect x="145" fill="#0012ff"/><rect x="150" fill="#0010ff"/><rect x="155" fill="#000fff"/><rect x="160" fill="#000eff"/><rect x="165" fill="#000cff"/><rect x="170" fill="#000bff"/><rect x="175" fill="#000aff"/><rect x="180" fill="#0009ff"/><rect x="185" fill="#0007ff"/><rect x="190" fill="#0006ff"/><rect x="195" fill="#0205ff"/><rect x="200" fill="#0603ff"/><rect x="205" fill="#0b02ff"/><rect x="210" fill="#0f01ff"/><rect x="215" fill="#1400ff"/><rect x="220" fill="#1900ff"/><rect x="225" fill="#1d00ff"/><rect x="230" fill="#2200ff"/><rect x="235" fill="#2700ff"/><rect x="240" fill="#2c00ff"/><rect x="245" fill="#3000ff"/><rect x="250" fill="#3500ff"/><rect x="255" fill="#3a00ff"/><rect x="260" fill="#3e00ff"/><rect x="265" fill="#4300ff"/><rect x="270" fill="#4800ff"/><rect x="275" fill="#4d00ff"/><rect x="280" fill="#5200ff"/><rect x="285" fill="#5700ff"/><rect x="290" fill="#5b00ff"/><rect x="295" fill="#6000ff"/><rect x="300" fill="#6500ff"/><rect x="305" fill="#6a00ff"/><rect x="310" fill="#6f00ff"/><rect x="315" fill="#7400ff"/><rect x="320" fill="#7900ff"/><rect x="325" fill="#7e00ff"/><rect x="330" fill="#8300ff"/><rect x="335" fill="#8800ff"/><rect x="340" fill="#8d00ff"/><rect x="345" fill="#9200ff"/><rect x="350" fill="#9700ff"/><rect x="355" fill="#9c00ff"/><rect x="360" fill="#a100ff"/><rect x="365" fill="#a600ff"/><rect x="370" fill="#ab00ff"/><rect x="375" fill="#b000ff"/><rect x="380" fill="#b600ff"/><rect x="385" fill="#bb00ff"/><rect x="390" fill="#c000ff"/><rect x="395" fill="#c500ff"/><rect x="400" fill="#ca00ff"/><rect x="405" fill="#d000ff"/><rect x="410" fill="#d500ff"/><rect x="415" fill="#da00ff"/><rect x="420" fill="#e000ff"/><rect x="425" fill="#e500ff"/></g>
<g transform="translate(990,416)"><rect x="135" fill="#0013ff"/><rect x="140" fill="#0011ff"/><rect x="145" fill="#0010ff"/><rect x="150" fill="#000fff"/><rect x="155" fill="#000dff"/><rect x="160" fill="#000cff"/><rect x="165" fill="#000bff"/><rect x="170" fill="#000aff"/><rect x="175" fill="#0008ff"/><rect x="180" fill="#0007ff"/><rect x="185" fill="#0006ff"/><rect x="190" fill="#0005ff"/><rect x="195" fill="#0103ff"/><rect x="200" fill="#0502ff"/><rect x="205" fill="#0a01ff"/><rect x="210" fill="#0f00ff"/><rect x="215" fill="#1300ff"/><rect x="220" fill="#1800ff"/><rect x="225" fill="#1c00ff"/><rect x="230" fill="#2100ff"/><rect x="235" fill="#2500ff"/><rect x="240" fill="#2a00ff"/><rect x="245" fill="#2f00ff"/><rect x="250" fill="#3300ff"/><rect x="255" fill="#3800ff"/><rect x="260" fill="#3d00ff"/><rect x="265" fill="#4100ff"/><rect x="270" fill="#4600ff"/><rect x="275" fill="#4b00ff"/><rect x="280" fill="#5000ff"/><rect x="285" fill="#5400ff"/><rect x="290" fill="#5900ff"/><rect x="295" fill="#5e00ff"/><rect x="300" fill="#6300ff"/><rect x="305" fill="#6800ff"/><rect x="310" fill="#6c00ff"/><rect x="315" fill="#7100ff"/><rect x="320" fill="#7600ff"/><rect x="325" fill="#7b00ff"/><rect x="330" fill="#8000ff"/><rect x="335" fill="#8500ff"/><rect x="340" fill="#8a00ff"/><rect x="345" fill="#8f00ff"/><rect x="350" fill="#9400ff"/><rect x="355" fill="#9900ff"/><rect x="360" fill="#9e00ff"/><rect x="365" fill="#a300ff"/><rect x="370" fill="#a800ff"/><rect x="375" fill="#ad00ff"/><rect x="380" fill="#b200ff"/><rect x="385" fill="#b700ff"/><rect x="390" fill="#bc00ff"/><rect x="395" fill="#c100ff"/><rect x="400" fill="#c600ff"/><rect x="405" fill="#cb00ff"/><rect x="410" fill="#d000ff"/><rect x="415" fill="#d600ff"/><rect x="420" fill="#db00ff"/></g>
<g transform="translate(990,421)"><rect x="140" fill="#0010ff"/><rect x="145" fill="#000fff"/><rect x="150" fill="#000dff"/><rect x="155" fill="#000cff"/><rect x="160" fill="#000bff"/><rect x="165" fill="#000aff"/><rect x="170" fill="#0008ff"/><rect x="175" fill="#0007ff"/><rect x="180" fill="#0006ff"/><rect x="185" fill="#0005ff"/><rect x="190" fill="#0003ff"/><rect x="195" fill="#0002ff"/><rect x="200" fill="#0501ff"/><rect x="205" fill="#0900ff"/><rect x="210" fill="#0e00ff"/><rect x="215" fill="#1200ff"/><rect x="220" fill="#1700ff"/><rect x="225" fill="#1b00ff"/><rect x="230" fill="#2000ff"/><rect x="235" fill="#2400ff"/><rect x="240" fill="#2900ff"/><rect x="245" fill="#2d00ff"/><rect x="250" fill="#3200ff"/><rect x="255" fill="#3600ff"/><rect x="260" fill="#3b00ff"/><rect x="265" fill="#4000ff"/><rect x="270" fill="#4400ff"/><rect x="275" fill="#4900ff"/><rect x="280" fill="#4e00ff"/><rect x="285" fill="#5200ff"/><rect x="290" fill="#5700ff"/><rect x="295" fill="#5c00ff"/><rect x="300" fill="#6000ff"/><rect x="305" fill="#6500ff"/><rect x="310" fill="#6a00ff"/><rect x="315" fill="#6f00ff"/><rect x="320" fill="#7300ff"/><rect x="325" fill="#7800ff"/><rect x="330" fill="#7d00ff"/><rect x="335" fill="#8200ff"/><rect x="340" fill="#8700ff"/><rect x="345" fill="#8b00ff"/><rect x="350" fill="#9000ff"/><rect x="355" fill="#9500ff"/><rect x="360" fill="#9a00ff"/><rect x="365" fill="#9f00ff"/><rect x="370" fill="#a400ff"/><rect x="375" fill="#a900ff"/><rect x="380" fill="#ae00ff"/><rect x="385" fill="#b300ff"/><rect x="390" fill="#b800ff"/><rect x="395" fill="#bd00ff"/><rect x="400" fill="#c200ff"/><rect x="405" fill="#c700ff"/><rect x="410" fill="#cc00ff"/><rect x="415" fill="#d100ff"/></g>
<g transform="translate(990,426)"><rect x="140" fill="#000eff"/><rect x="145" fill="#000dff"/><rect x="150" fill="#000cff"/><rect x="155" fill="#000bff"/><rect x="160" fill="#0009ff"/><rect x="165" fill="#0008ff"/><rect x="170" fill="#0007ff"/><rect x="175" fill="#0006ff"/><rect x="180" fill="#0004ff"/><rect x="185" fill="#0003ff"/><rect x="190" fill="#0002ff"/><rect x="195" fill="#0001ff"/><rect x="200" fill="#0400ff"/><rect x="205" fill="#0800ff"/><rect x="210" fill="#0d00ff"/><rect x="215" fill="#1100ff"/><rect x="220" fill="#1500ff"/><rect x="225" fill="#1a00ff"/><rect x="230" fill="#1e00ff"/><rect x="235" fill="#2300ff"/><rect x="240" fill="#2700ff"/><rect x="245" fill="#2c00ff"/><rect x="250" fill="#3000ff"/><rect x="255" fill="#3500ff"/><rect x="260" fill="#3900ff"/><rect x="265" fill="#3e00ff"/><rect x="270" fill="#4200ff"/><rect x="275" fill="#4700ff"/><rect x="280" fill="#4c00ff"/><rect x="285" fill="#5000ff"/><rect x="290" fill="#5500ff"/><rect x="295" fill="#5900ff"/><rect x="300" fill="#5e00ff"/><rect x="305" fill="#6300ff"/><rect x="310" fill="#6700ff"/><rect x="315" fill="#6c00ff"/><rect x="320" fill="#7100ff"/><rect x="325" fill="#7500ff"/><rect x="330" fill="#7a00ff"/><rect x="335" fill="#7f00ff"/><rect x="340" fill="#8400ff"/><rect x="345" fill="#8800ff"/><rect x="350" fill="#8d00ff"/><rect x="355" fill="#9200ff"/><rect x="360" fill="#9700ff"/><rect x="365" fill="#9c00ff"/><rect x="370" fill="#a000ff"/><rect x="375" fill="#a500ff"/><rect x="380" fill="#aa00ff"/><rect x="385" fill="#af00ff"/><rect x="390" fill="#b400ff"/><rect x="395" fill="#b900ff"/><rect x="400" fill="#be00ff"/><rect x="405" fill="#c300ff"/><rect x="410" fill="#c800ff"/></g>
<g transform="translate(990,431)"><rect x="145" fill="#000cff"/><rect x="150" fill="#000aff"/><rect x="155" fill="#0009ff"/><rect x="160" fill="#0008ff"/><rect x="165" fill="#0007ff"/><rect x="170" fill="#0006ff"/><rect x="175" fill="#0004ff"/><rect x="180" fill="#0003ff"/><rect x="185" fill="#0002ff"/><rect x="190" fill="#0001ff"/><rect x="195" fill="#0000ff"/><rect x="200" fill="#0300ff"/><rect x="205" fill="#0700ff"/><rect x="210" fill="#0c00ff"/><rect x="215" fill="#1000ff"/><rect x="220" fill="#1400ff"/><rect x="225" fill="#1900ff"/><rect x="230" fill="#1d00ff"/><rect x="235" fill="#2200ff"/><rect x="240" fill="#2600ff"/><rect x="245" fill="#2a00ff"/><rect x="250" fill="#2f00ff"/><rect x="255" fill="#3300ff"/><rect x="260" fill="#3800ff"/><rect x="265" fill="#3c00ff"/><rect x="270" fill="#4100ff"/><rect x="275" fill="#4500ff"/><rect x="280" fill="#4a00ff"/><rect x="285" fill="#4e00ff"/><rect x="290" fill="#5300ff"/><rect x="295" fill="#5700ff"/><rect x="300" fill="#5c00ff"/><rect x="305" fill="#6000ff"/><rect x="310" fill="#6500ff"/><rect x="315" fill="#6a00ff"/><rect x="320" fill="#6e00ff"/><rect x="325" fill="#7300ff"/><rect x="330" fill="#7700ff"/><rect x="335" fill="#7c00ff"/><rect x="340" fill="#8100ff"/><rect x="345" fill="#8500ff"/><rect x="350" fill="#8a00ff"/><rect x="355" fill="#8f00ff"/><rect x="360" fill="#9400ff"/><rect x="365" fill="#9800ff"/><rect x="370" fill="#9d00ff"/><rect x="375" fill="#a200ff"/><rect x="380" fill="#a700ff"/><rect x="385" fill="#ab00ff"/><rect x="390" fill="#b000ff"/><rect x="395" fill="#b500ff"/><rect x="400" fill="#ba00ff"/><rect x="405" fill="#bf00ff"/></g>
<g transform="translate(990,436)"><rect x="150" fill="#0009ff"/><rect x="155" fill="#0008ff"/><rect x="160" fill="#0007ff"/><rect x="165" fill="#0006ff"/><rect x="170" fill="#0004ff"/><rect x="175" fill="#0003ff"/><rect x="180" fill="#0002ff"/><rect x="185" fill="#0001ff"/><rect x="190" fill="#0000ff"/><rect x="195" fill="#0000ff"/><rect x="200" fill="#0200ff"/><rect x="205" fill="#0700ff"/><rect x="210" fill="#0b00ff"/><rect x="215" fill="#0f00ff"/><rect x="220" fill="#1300ff"/><rect x="225" fill="#1800ff"/><rect x="230" fill="#1c00ff"/><rect x="235" fill="#2000ff"/><rect x="240" fill="#2500ff"/><rect x="245" fill="#2900ff"/><rect x="250" fill="#2d00ff"/><rect x="255" fill="#3200ff"/><rect x="260" fill="#3600ff"/><rect x="265" fill="#3a00ff"/><rect x="270" fill="#3f00ff"/><rect x="275" fill="#4300ff"/><rect x="280" fill="#4800ff"/><rect x="285" fill="#4c00ff"/><rect x="290" fill="#5100ff"/><rect x="295" fill="#5500ff"/><rect x="300" fill="#5a00ff"/><rect x="305" fill="#5e00ff"/><rect x="310" fill="#6300ff"/><rect x="315" fill="#6700ff"/><rect x="320" fill="#6c00ff"/><rect x="325" fill="#7000ff"/><rect x="330" fill="#7500ff"/><rect x="335" fill="#7900ff"/><rect x="340" fill="#7e00ff"/><rect x="345" fill="#8300ff"/><rect x="350" fill="#8700ff"/><rect x="355" fill="#8c00ff"/><rect x="360" fill="#9000ff"/><rect x="365" fill="#9500ff"/><rect x="370" fill="#9a00ff"/><rect x="375" fill="#9f00ff"/><rect x="380" fill="#a300ff"/><rect x="385" fill="#a800ff"/><rect x="390" fill="#ad00ff"/><rect x="395" fill="#b100ff"/><rect x="400" fill="#b600ff"/></g>
<g transform="translate(990,441)"><rect x="150" fill="#0008ff"/><rect x="155" fill="#0007ff"/><rect x="160" fill="#0005ff"/><rect x="165" fill="#0004ff"/><rect x="170" fill="#0003ff"/><rect x="175" fill="#0002ff"/><rect x="180" fill="#0001ff"/><rect x="185" fill="#0000ff"/><rect x="190" fill="#0000ff"/><rect x="195" fill="#0000ff"/><rect x="200" fill="#0200ff"/><rect x="205" fill="#0600ff"/><rect x="210" fill="#0a00ff"/><rect x="215" fill="#0e00ff"/><rect x="220" fill="#1200ff"/><rect x="225" fill="#1700ff"/><rect x="230" fill="#1b00ff"/><rect x="235" fill="#1f00ff"/><rect x="240" fill="#2300ff"/><rect x="245" fill="#2800ff"/><rect x="250" fill="#2c00ff"/><rect x="255" fill="#3000ff"/><rect x="260" fill="#3500ff"/><rect x="265" fill="#3900ff"/><rect x="270" fill="#3d00ff"/><rect x="275" fill="#4200ff"/><rect x="280" fill="#4600ff"/><rect x="285" fill="#4a00ff"/><rect x="290" fill="#4f00ff"/><rect x="295" fill="#5300ff"/><rect x="300" fill="#5800ff"/><rect x="305" fill="#5c00ff"/><rect x="310" fill="#6000ff"/><rect x="315" fill="#6500ff"/><rect x="320" fill="#6900ff"/><rect x="325" fill="#6e00ff"/><rect x="330" fill="#7200ff"/><rect x="335" fill="#7700ff"/><rect x="340" fill="#7b00ff"/><rect x="345" fill="#8000ff"/><rect x="350" fill="#8400ff"/><rect x="355" fill="#8900ff"/><rect x="360" fill="#8d00ff"/><rect x="365" fill="#9200ff"/><rect x="370" fill="#9700ff"/><rect x="375" fill="#9b00ff"/><rect x="380" fill="#a000ff"/><rect x="385" fill="#a500ff"/><rect x="390" fill="#a900ff"/><rect x="395" fill="#ae00ff"/></g>
<g transform="translate(990,446)"><rect x="155" fill="#0005ff"/><rect x="160" fill="#0004ff"/><rect x="165" fill="#0003ff"/><rect x="170" fill="#0002ff"/><rect x="175" fill="#0001ff"/><rect x="180" fill="#0000ff"/><rect x="185" fill="#0000ff"/><rect x="190" fill="#0000ff"/><rect x="195" fill="#0000ff"/><rect x="200" fill="#0100ff"/><rect x="205" fill="#0500ff"/><rect x="210" fill="#0900ff"/><rect x="215" fill="#0d00ff"/><rect x="220" fill="#1100ff"/><rect x="225" fill="#1600ff"/><rect x="230" fill="#1a00ff"/><rect x="235" fill="#1e00ff"/><rect x="240" fill="#2200ff"/><rect x="245" fill="#2600ff"/><rect x="250" fill="#2b00ff"/><rect x="255" fill="#2f00ff"/><rect x="260" fill="#3300ff"/><rect x="265" fill="#3700ff"/><rect x="270" fill="#3c00ff"/><rect x="275" fill="#4000ff"/><rect x="280" fill="#4400ff"/><rect x="285" fill="#4800ff"/><rect x="290" fill="#4d00ff"/><rect x="295" fill="#5100ff"/><rect x="300" fill="#5500ff"/><rect x="305" fill="#5a00ff"/><rect x="310" fill="#5e00ff"/><rect x="315" fill="#6300ff"/><rect x="320" fill="#6700ff"/><rect x="325" fill="#6b00ff"/><rect x="330" fill="#7000ff"/><rect x="335" fill="#7400ff"/><rect x="340" fill="#7900ff"/><rect x="345" fill="#7d00ff"/><rect x="350" fill="#8200ff"/><rect x="355" fill="#8600ff"/><rect x="360" fill="#8b00ff"/><rect x="365" fill="#8f00ff"/><rect x="370" fill="#9400ff"/><rect x="375" fill="#9800ff"/><rect x="380" fill="#9d00ff"/><rect x="385" fill="#a100ff"/><rect x="390" fill="#a600ff"/></g>
<g transform="translate(990,451)"><rect x="160" fill="#0003ff"/><rect x="165" fill="#0002ff"/><rect x="170" fill="#0001ff"/><rect x="175" fill="#0000ff"/><rect x="180" fill="#0000ff"/><rect x="185" fill="#0000ff"/><rect x="190" fill="#0000ff"/><rect x="195" fill="#0000ff"/><rect x="200" fill="#0000ff"/><rect x="205" fill="#0400ff"/><rect x="210" fill="#0800ff"/><rect x="215" fill="#0c00ff"/><rect x="220" fill="#1100ff"/><rect x="225" fill="#1500ff"/><rect x="230" fill="#1900ff"/><rect x="235" fill="#1d00ff"/><rect x="240" fill="#2100ff"/><rect x="245" fill="#2500ff"/><rect x="250" fill="#2900ff"/><rect x="255" fill="#2d00ff"/><rect x="260" fill="#3200ff"/><rect x="265" fill="#3600ff"/><rect x="270" fill="#3a00ff"/><rect x="275" fill="#3e00ff"/><rect x="280" fill="#4200ff"/><rect x="285" fill="#4700ff"/><rect x="290" fill="#4b00ff"/><rect x="295" fill="#4f00ff"/><rect x="300" fill="#5400ff"/><rect x="305" fill="#5800ff"/><rect x="310" fill="#5c00ff"/><rect x="315" fill="#6000ff"/><rect x="320" fill="#6500ff"/><rect x="325" fill="#6900ff"/><rect x="330" fill="#6d00ff"/><rect x="335" fill="#7200ff"/><rect x="340" fill="#7600ff"/><rect x="345" fill="#7b00ff"/><rect x="350" fill="#7f00ff"/><rect x="355" fill="#8300ff"/><rect x="360" fill="#8800ff"/><rect x="365" fill="#8c00ff"/><rect x="370" fill="#9100ff"/><rect x="375" fill="#9500ff"/><rect x="380" fill="#9a00ff"/><rect x="385" fill="#9e00ff"/></g>
<g transform="translate(990,456)"><rect x="165" fill="#0001ff"/><rect x="170" fill="#0000ff"/><rect x="175" fill="#0000ff"/><rect x="180" fill="#0000ff"/><rect x="185" fill="#0000ff"/><rect x="190" fill="#0000ff"/><rect x="195" fill="#0000ff"/><rect x="200" fill="#0000ff"/><rect x="205" fill="#0400ff"/><rect x="210" fill="#0800ff"/><rect x="215" fill="#0c00ff"/><rect x="220" fill="#1000ff"/><rect x="225" fill="#1400ff"/><rect x="230" fill="#1800ff"/><rect x="235" fill="#1c00ff"/><rect x="240" fill="#2000ff"/><rect x="245" fill="#2400ff"/><rect x="250" fill="#2800ff"/><rect x="255" fill="#2c00ff"/><rect x="260" fill="#3000ff"/><rect x="265" fill="#3400ff"/><rect x="270" fill="#3900ff"/><rect x="275" fill="#3d00ff"/><rect x="280" fill="#4100ff"/><rect x="285" fill="#4500ff"/><rect x="290" fill="#4900ff"/><rect x="295" fill="#4d00ff"/><rect x="300" fill="#5200ff"/><rect x="305" fill="#5600ff"/><rect x="310" fill="#5a00ff"/><rect x="315" fill="#5e00ff"/><rect x="320" fill="#6300ff"/><rect x="325" fill="#6700ff"/><rect x="330" fill="#6b00ff"/><rect x="335" fill="#6f00ff"/><rect x="340" fill="#7400ff"/><rect x="345" fill="#7800ff"/><rect x="350" fill="#7c00ff"/><rect x="355" fill="#8100ff"/><rect x="360" fill="#8500ff"/><rect x="365" fill="#8900ff"/><rect x="370" fill="#8e00ff"/><rect x="375" fill="#9200ff"/><rect x="380" fill="#9700ff"/></g>
<g transform="translate(990,461)"><rect x="170" fill="#0000ff"/><rect x="175" fill="#0000ff"/><rect x="180" fill="#0000ff"/><rect x="185" fill="#0000ff"/><rect x="190" fill="#0000ff"/><rect x="195" fill="#0000ff"/><rect x="200" fill="#0000ff"/><rect x="205" fill="#0300ff"/><rect x="210" fill="#0700ff"/><rect x="215" fill="#0b00ff"/><rect x="220" fill="#0f00ff"/><rect x="225" fill="#1300ff"/><rect x="230" fill="#1700ff"/><rect x="235" fill="#1b00ff"/><rect x="240" fill="#1f00ff"/><rect x="245" fill="#2300ff"/><rect x="250" fill="#2700ff"/><rect x="255" fill="#2b00ff"/><rect x="260" fill="#2f00ff"/><rect x="265" fill="#3300ff"/><rect x="270" fill="#3700ff"/><rect x="275" fill="#3b00ff"/><rect x="280" fill="#3f00ff"/><rect x="285" fill="#4300ff"/><rect x="290" fill="#4700ff"/><rect x="295" fill="#4c00ff"/><rect x="300" fill="#5000ff"/><rect x="305" fill="#5400ff"/><rect x="310" fill="#5800ff"/><rect x="315" fill="#5c00ff"/><rect x="320" fill="#6000ff"/><rect x="325" fill="#6500ff"/><rect x="330" fill="#6900ff"/><rect x="335" fill="#6d00ff"/><rect x="340" fill="#7100ff"/><rect x="345" fill="#7600ff"/><rect x="350" fill="#7a00ff"/><rect x="355" fill="#7e00ff"/><rect x="360" fill="#8200ff"/><rect x="365" fill="#8700ff"/><rect x="370" fill="#8b00ff"/><rect x="375" fill="#8f00ff"/></g>
<g transform="translate(990,466)"><rect x="170" fill="#0000ff"/><rect x="175" fill="#0000ff"/><rect x="180" fill="#0000ff"/><rect x="185" fill="#0000ff"/><rect x="190" fill="#0000ff"/><rect x="195" fill="#0000ff"/><rect x="200" fill="#0000ff"/><rect x="205" fill="#0200ff"/><rect x="210" fill="#0600ff"/><rect x="215" fill="#0a00ff"/><rect x="220" fill="#0e00ff"/><rect x="225" fill="#1200ff"/><rect x="230" fill="#1600ff"/><rect x="235" fill="#1a00ff"/><rect x="240" fill="#1e00ff"/><rect x="245" fill="#2200ff"/><rect x="250" fill="#2600ff"/><rect x="255" fill="#2a00ff"/><rect x="260" fill="#2e00ff"/><rect x="265" fill="#3200ff"/><rect x="270" fill="#3600ff"/><rect x="275" fill="#3a00ff"/><rect x="280" fill="#3e00ff"/><rect x="285" fill="#4200ff"/><rect x="290" fill="#4600ff"/><rect x="295" fill="#4a00ff"/><rect x="300" fill="#4e00ff"/><rect x="305" fill="#5200ff"/><rect x="310" fill="#5600ff"/><rect x="315" fill="#5a00ff"/><rect x="320" fill="#5e00ff"/><rect x="325" fill="#6300ff"/><rect x="330" fill="#6700ff"/><rect x="335" fill="#6b00ff"/><rect x="340" fill="#6f00ff"/><rect x="345" fill="#7300ff"/><rect x="350" fill="#7700ff"/><rect x="355" fill="#7c00ff"/><rect x="360" fill="#8000ff"/><rect x="365" fill="#8400ff"/><rect x="370" fill="#8800ff"/></g>
<g transform="translate(990,471)"><rect x="175" fill="#0000ff"/><rect x="180" fill="#0000ff"/><rect x="185" fill="#0000ff"/><rect x="190" fill="#0000ff"/><rect x="195" fill="#0000ff"/><rect x="200" fill="#0000ff"/><rect x="205" fill="#0200ff"/><rect x="210" fill="#0500ff"/><rect x="215" fill="#0900ff"/><rect x="220" fill="#0d00ff"/><rect x="225" fill="#1100ff"/><rect x="230" fill="#1500ff"/><rect x="235" fill="#1900ff"/><rect x="240" fill="#1d00ff"/><rect x="245" fill="#2100ff"/><rect x="250" fill="#2400ff"/><rect x="255" fill="#2800ff"/><rect x="260" fill="#2c00ff"/><rect x="265" fill="#3000ff"/><rect x="270" fill="#3400ff"/><rect x="275" fill="#3800ff"/><rect x="280" fill="#3c00ff"/><rect x="285" fill="#4000ff"/><rect x="290" fill="#4400ff"/><rect x="295" fill="#4800ff"/><rect x="300" fill="#4c00ff"/><rect x="305" fill="#5000ff"/><rect x="310" fill="#5400ff"/><rect x="315" fill="#5800ff"/><rect x="320" fill="#5c00ff"/><rect x="325" fill="#6000ff"/><rect x="330" fill="#6500ff"/><rect x="335" fill="#6900ff"/><rect x="340" fill="#6d00ff"/><rect x="345" fill="#7100ff"/><rect x="350" fill="#7500ff"/><rect x="355" fill="#7900ff"/><rect x="360" fill="#7d00ff"/><rect x="365" fill="#8100ff"/></g>
<g transform="translate(990,476)"><rect x="180" fill="#0000ff"/><rect x="185" fill="#0000ff"/><rect x="190" fill="#0000ff"/><rect x="195" fill="#0000ff"/><rect x="200" fill="#0000ff"/><rect x="205" fill="#0100ff"/><rect x="210" fill="#0500ff"/><rect x="215" fill="#0900ff"/><rect x="220" fill="#0c00ff"/><rect x="225" fill="#1000ff"/><rect x="230" fill="#1400ff"/><rect x="235" fill="#1800ff"/><rect x="240" fill="#1c00ff"/><rect x="245" fill="#1f00ff"/><rect x="250" fill="#2300ff"/><rect x="255" fill="#2700ff"/><rect x="260" fill="#2b00ff"/><rect x="265" fill="#2f00ff"/><rect x="270" fill="#3300ff"/><rect x="275" fill="#3700ff"/><rect x="280" fill="#3b00ff"/><rect x="285" fill="#3f00ff"/><rect x="290" fill="#4300ff"/><rect x="295" fill="#4700ff"/><rect x="300" fill="#4a00ff"/><rect x="305" fill="#4e00ff"/><rect x="310" fill="#5200ff"/><rect x="315" fill="#5600ff"/><rect x="320" fill="#5a00ff"/><rect x="325" fill="#5e00ff"/><rect x="330" fill="#6200ff"/><rect x="335" fill="#6700ff"/><rect x="340" fill="#6b00ff"/><rect x="345" fill="#6f00ff"/><rect x="350" fill="#7300ff"/><rect x="355" fill="#7700ff"/><rect x="360" fill="#7b00ff"/></g>
<g transform="translate(990,481)"><rect x="185" fill="#0000ff"/><rect x="190" fill="#0000ff"/><rect x="195" fill="#0000ff"/><rect x="200" fill="#0000ff"/><rect x="205" fill="#0000ff"/><rect x="210" fill="#0400ff"/><rect x="215" fill="#0800ff"/><rect x="220" fill="#0c00ff"/><rect x="225" fill="#0f00ff"/><rect x="230" fill="#1300ff"/><rect x="235" fill="#1700ff"/><rect x="240" fill="#1b00ff"/><rect x="245" fill="#1e00ff"/><rect x="250" fill="#2200ff"/><rect x="255" fill="#2600ff"/><rect x="260" fill="#2a00ff"/><rect x="265" fill="#2e00ff"/><rect x="270" fill="#3200ff"/><rect x="275" fill="#3500ff"/><rect x="280" fill="#3900ff"/><rect x="285" fill="#3d00ff"/><rect x="290" fill="#4100ff"/><rect x="295" fill="#4500ff"/><rect x="300" fill="#4900ff"/><rect x="305" fill="#4d00ff"/><rect x="310" fill="#5100ff"/><rect x="315" fill="#5500ff"/><rect x="320" fill="#5900ff"/><rect x="325" fill="#5d00ff"/><rect x="330" fill="#6000ff"/><rect x="335" fill="#6400ff"/><rect x="340" fill="#6800ff"/><rect x="345" fill="#6c00ff"/><rect x="350" fill="#7000ff"/><rect x="355" fill="#7400ff"/><rect x="360" fill="#7800ff"/></g>
<g transform="translate(990,486)"><rect x="190" fill="#0000ff"/><rect x="195" fill="#0000ff"/><rect x="200" fill="#0000ff"/><rect x="205" fill="#0000ff"/><rect x="210" fill="#0300ff"/><rect x="215" fill="#0700ff"/><rect x="220" fill="#0b00ff"/><rect x="225" fill="#0f00ff"/><rect x="230" fill="#1200ff"/><rect x="235" fill="#1600ff"/><rect x="240" fill="#1a00ff"/><rect x="245" fill="#1d00ff"/><rect x="250" fill="#2100ff"/><rect x="255" fill="#2500ff"/><rect x="260" fill="#2900ff"/><rect x="265" fill="#2d00ff"/><rect x="270" fill="#3000ff"/><rect x="275" fill="#3400ff"/><rect x="280" fill="#3800ff"/><rect x="285" fill="#3c00ff"/><rect x="290" fill="#4000ff"/><rect x="295" fill="#4300ff"/><rect x="300" fill="#4700ff"/><rect x="305" fill="#4b00ff"/><rect x="310" fill="#4f00ff"/><rect x="315" fill="#5300ff"/><rect x="320" fill="#5700ff"/><rect x="325" fill="#5b00ff"/><rect x="330" fill="#5f00ff"/><rect x="335" fill="#6200ff"/><rect x="340" fill="#6600ff"/><rect x="345" fill="#6a00ff"/><rect x="350" fill="#6e00ff"/><rect x="355" fill="#7200ff"/></g>
<g transform="translate(990,491)"><rect x="195" fill="#0000ff"/><rect x="200" fill="#0000ff"/><rect x="205" fill="#0000ff"/><rect x="210" fill="#0300ff"/><rect x="215" fill="#0600ff"/><rect x="220" fill="#0a00ff"/><rect x="225" fill="#0e00ff"/><rect x="230" fill="#1100ff"/><rect x="235" fill="#1500ff"/><rect x="240" fill="#1900ff"/><rect x="245" fill="#1c00ff"/><rect x="250" fill="#2000ff"/><rect x="255" fill="#2400ff"/><rect x="260" fill="#2800ff"/><rect x="265" fill="#2b00ff"/><rect x="270" fill="#2f00ff"/><rect x="275" fill="#3300ff"/><rect x="280" fill="#3700ff"/><rect x="285" fill="#3a00ff"/><rect x="290" fill="#3e00ff"/><rect x="295" fill="#4200ff"/><rect x="300" fill="#4600ff"/><rect x="305" fill="#4900ff"/><rect x="310" fill="#4d00ff"/><rect x="315" fill="#5100ff"/><rect x="320" fill="#5500ff"/><rect x="325" fill="#5900ff"/><rect x="330" fill="#5d00ff"/><rect x="335" fill="#6000ff"/><rect x="340" fill="#6400ff"/><rect x="345" fill="#6800ff"/><rect x="350" fill="#6c00ff"/></g>
<g transform="translate(990,496)"><rect x="200" fill="#0000ff"/><rect x="205" fill="#0000ff"/><rect x="210" fill="#0200ff"/><rect x="215" fill="#0600ff"/><rect x="220" fill="#0900ff"/><rect x="225" fill="#0d00ff"/><rect x="230" fill="#1100ff"/><rect x="235" fill="#1400ff"/><rect x="240" fill="#1800ff"/><rect x="245" fill="#1b00ff"/><rect x="250" fill="#1f00ff"/><rect x="255" fill="#2300ff"/><rect x="260" fill="#2600ff"/><rect x="265" fill="#2a00ff"/><rect x="270" fill="#2e00ff"/><rect x="275" fill="#3200ff"/><rect x="280" fill="#3500ff"/><rect x="285" fill="#3900ff"/><rect x="290" fill="#3d00ff"/><rect x="295" fill="#4000ff"/><rect x="300" fill="#4400ff"/><rect x="305" fill="#4800ff"/><rect x="310" fill="#4c00ff"/><rect x="315" fill="#4f00ff"/><rect x="320" fill="#5300ff"/><rect x="325" fill="#5700ff"/><rect x="330" fill="#5b00ff"/><rect x="335" fill="#5f00ff"/><rect x="340" fill="#6200ff"/><rect x="345" fill="#6600ff"/></g>
<g transform="translate(990,501)"><rect x="205" fill="#0000ff"/><rect x="210" fill="#0200ff"/><rect x="215" fill="#0500ff"/><rect x="220" fill="#0900ff"/><rect x="225" fill="#0c00ff"/><rect x="230" fill="#1000ff"/><rect x="235" fill="#1300ff"/><rect x="240" fill="#1700ff"/><rect x="245" fill="#1b00ff"/><rect x="250" fill="#1e00ff"/><rect x="255" fill="#2200ff"/><rect x="260" fill="#2500ff"/><rect x="265" fill="#2900ff"/><rect x="270" fill="#2d00ff"/><rect x="275" fill="#3000ff"/><rect x="280" fill="#3400ff"/><rect x="285" fill="#3800ff"/><rect x="290" fill="#3b00ff"/><rect x="295" fill="#3f00ff"/><rect x="300" fill="#4300ff"/><rect x="305" fill="#4600ff"/><rect x="310" fill="#4a00ff"/><rect x="315" fill="#4e00ff"/><rect x="320" fill="#5200ff"/><rect x="325" fill="#5500ff"/><rect x="330" fill="#5900ff"/><rect x="335" fill="#5d00ff"/><rect x="340" fill="#6100ff"/></g>
<g transform="translate(990,506)"><rect x="210" fill="#0100ff"/><rect x="215" fill="#0500ff"/><rect x="220" fill="#0800ff"/><rect x="225" fill="#0c00ff"/><rect x="230" fill="#0f00ff"/><rect x="235" fill="#1300ff"/><rect x="240" fill="#1600ff"/><rect x="245" fill="#1a00ff"/><rect x="250" fill="#1d00ff"/><rect x="255" fill="#2100ff"/><rect x="260" fill="#2400ff"/><rect x="265" fill="#2800ff"/><rect x="270" fill="#2c00ff"/><rect x="275" fill="#2f00ff"/><rect x="280" fill="#3300ff"/><rect x="285" fill="#3600ff"/><rect x="290" fill="#3a00ff"/><rect x="295" fill="#3e00ff"/><rect x="300" fill="#4100ff"/><rect x="305" fill="#4500ff"/><rect x="310" fill="#4900ff"/><rect x="315" fill="#4c00ff"/><rect x="320" fill="#5000ff"/><rect x="325" fill="#5400ff"/><rect x="330" fill="#5700ff"/><rect x="335" fill="#5b00ff"/></g>
<g transform="translate(990,511)"><rect x="215" fill="#0400ff"/><rect x="220" fill="#0700ff"/><rect x="225" fill="#0b00ff"/><rect x="230" fill="#0e00ff"/><rect x="235" fill="#1200ff"/><rect x="240" fill="#1500ff"/><rect x="245" fill="#1900ff"/><rect x="250" fill="#1c00ff"/><rect x="255" fill="#2000ff"/><rect x="260" fill="#2300ff"/><rect x="265" fill="#2700ff"/><rect x="270" fill="#2a00ff"/><rect x="275" fill="#2e00ff"/><rect x="280" fill="#3100ff"/><rect x="285" fill="#3500ff"/><rect x="290" fill="#3900ff"/><rect x="295" fill="#3c00ff"/><rect x="300" fill="#4000ff"/><rect x="305" fill="#4300ff"/><rect x="310" fill="#4700ff"/><rect x="315" fill="#4b00ff"/><rect x="320" fill="#4e00ff"/><rect x="325" fill="#5200ff"/><rect x="330" fill="#5600ff"/></g>
<g transform="translate(990,516)"><rect x="225" fill="#0a00ff"/><rect x="230" fill="#0e00ff"/><rect x="235" fill="#1100ff"/><rect x="240" fill="#1400ff"/><rect x="245" fill="#1800ff"/><rect x="250" fill="#1b00ff"/><rect x="255" fill="#1f00ff"/><rect x="260" fill="#2200ff"/><rect x="265" fill="#2600ff"/><rect x="270" fill="#2900ff"/><rect x="275" fill="#2d00ff"/><rect x="280" fill="#3000ff"/><rect x="285" fill="#3400ff"/><rect x="290" fill="#3700ff"/><rect x="295" fill="#3b00ff"/><rect x="300" fill="#3e00ff"/><rect x="305" fill="#4200ff"/><rect x="310" fill="#4600ff"/><rect x="315" fill="#4900ff"/><rect x="320" fill="#4d00ff"/><rect x="325" fill="#5000ff"/></g>
<g transform="translate(990,521)"><rect x="230" fill="#0d00ff"/><rect x="235" fill="#1000ff"/><rect x="240" fill="#1400ff"/><rect x="245" fill="#1700ff"/><rect x="250" fill="#1a00ff"/><rect x="255" fill="#1e00ff"/><rect x="260" fill="#2100ff"/><rect x="265" fill="#2500ff"/><rect x="270" fill="#2800ff"/><rect x="275" fill="#2c00ff"/><rect x="280" fill="#2f00ff"/><rect x="285" fill="#3300ff"/><rect x="290" fill="#3600ff"/><rect x="295" fill="#3a00ff"/><rect x="300" fill="#3d00ff"/><rect x="305" fill="#4100ff"/><rect x="310" fill="#4400ff"/><rect x="315" fill="#4800ff"/><rect x="320" fill="#4b00ff"/></g>
<g transform="translate(990,526)"><rect x="235" fill="#1000ff"/><rect x="240" fill="#1300ff"/><rect x="245" fill="#1600ff"/><rect x="250" fill="#1a00ff"/><rect x="255" fill="#1d00ff"/><rect x="260" fill="#2000ff"/><rect x="265" fill="#2400ff"/><rect x="270" fill="#2700ff"/><rect x="275" fill="#2b00ff"/><rect x="280" fill="#2e00ff"/><rect x="285" fill="#3100ff"/><rect x="290" fill="#3500ff"/><rect x="295" fill="#3800ff"/><rect x="300" fill="#3c00ff"/><rect x="305" fill="#3f00ff"/><rect x="310" fill="#4300ff"/><rect x="315" fill="#4600ff"/></g>
<g transform="translate(990,531)"><rect x="240" fill="#1200ff"/><rect x="245" fill="#1500ff"/><rect x="250" fill="#1900ff"/><rect x="255" fill="#1c00ff"/><rect x="260" fill="#1f00ff"/><rect x="265" fill="#2300ff"/><rect x="270" fill="#2600ff"/><rect x="275" fill="#2a00ff"/><rect x="280" fill="#2d00ff"/><rect x="285" fill="#3000ff"/><rect x="290" fill="#3400ff"/><rect x="295" fill="#3700ff"/><rect x="300" fill="#3b00ff"/><rect x="305" fill="#3e00ff"/><rect x="310" fill="#4100ff"/></g>
<g transform="translate(990,536)"><rect x="250" fill="#1800ff"/><rect x="255" fill="#1b00ff"/><rect x="260" fill="#1f00ff"/><rect x="265" fill="#2200ff"/><rect x="270" fill="#2500ff"/><rect x="275" fill="#2900ff"/><rect x="280" fill="#2c00ff"/><rect x="285" fill="#2f00ff"/><rect x="290" fill="#3300ff"/><rect x="295" fill="#3600ff"/><rect x="300" fill="#3900ff"/><rect x="305" fill="#3d00ff"/></g>
<g transform="translate(990,541)"><rect x="255" fill="#1a00ff"/><rect x="260" fill="#1e00ff"/><rect x="265" fill="#2100ff"/><rect x="270" fill="#2400ff"/><rect x="275" fill="#2800ff"/><rect x="280" fill="#2b00ff"/><rect x="285" fill="#2e00ff"/><rect x="290" fill="#3100ff"/><rect x="295" fill="#3500ff"/><rect x="300" fill="#3800ff"/></g>
<g transform="translate(990,546)"><rect x="260" fill="#1d00ff"/><rect x="265" fill="#2000ff"/><rect x="270" fill="#2300ff"/><rect x="275" fill="#2700ff"/><rect x="280" fill="#2a00ff"/><rect x="285" fill="#2d00ff"/><rect x="290" fill="#3000ff"/><rect x="295" fill="#3400ff"/></g>
<g transform="translate(990,551)"><rect x="265" fill="#1f00ff"/><rect x="270" fill="#2200ff"/><rect x="275" fill="#2600ff"/><rect x="280" fill="#2900ff"/><rect x="285" fill="#2c00ff"/><rect x="290" fill="#2f00ff"/></g>
</g>
<path d="M1272.3 542.6 L1272.3 542.6 L1272.2 542.6 L1272.2 542.6 L1272.1 542.6 L1272.1 542.6 L1272.1 542.6 L1272.0 542.7 L1272.0 542.7 L1271.9 542.8 L1271.8 542.8 L1271.7 542.7 L1271.6 542.7 L1271.5 542.7 L1271.5 542.7 L1271.4 542.7 L1271.4 542.8 L1271.3 542.9 L1271.3 543.0 L1271.2 543.0 L1271.2 543.1 L1271.1 543.1 L1271.0 543.1 L1270.9 543.1 L1270.8 543.1 L1270.6 543.1 L1270.5 543.1 L1270.3 543.1 L1270.2 543.1 L1270.0 543.1 L1269.9 543.1 L1269.7 543.1 L1269.6 543.1 L1269.4 543.1 L1269.2 543.0 L1269.0 543.0 L1268.8 542.9 L1268.5 542.8 L1268.3 542.7 L1267.9 542.5 L1267.5 542.3 L1267.0 542.0 L1266.5 541.7 L1266.0 541.4 L1265.4 541.0 L1264.8 540.6 L1264.2 540.1 L1263.5 539.6 L1262.8 539.0 L1262.0 538.4 L1261.2 537.7 L1260.3 537.0 L1259.3 536.3 L1258.3 535.5 L1257.2 534.6 L1256.1 533.6 L1254.9 532.6 L1253.6 531.6 L1252.3 530.4 L1250.9 529.2 L1249.5 528.0 L1248.0 526.8 L1246.4 525.4 L1244.8 524.1 L1243.0 522.6 L1241.2 521.1 L1239.2 519.4 L1237.1 517.7 L1234.9 515.9 L1232.7 514.0 L1230.3 512.1 L1227.9 510.1 L1225.3 508.0 L1222.7 505.8 L1219.9 503.5 L1217.1 501.0 L1214.1 498.5 L1211.0 495.7 L1207.8 492.8 L1204.4 489.8 L1201.0 486.6 L1197.4 483.2 L1193.8 479.6 L1190.0 475.7 L1186.0 471.5 L1181.7 466.9 L1177.2 461.8 L1172.3 456.1 L1167.1 449.8 L1161.7 443.1 L1156.1 435.9 L1150.3 428.3 L1144.4 420.3 L1138.3 411.8 L1132.1 402.9 L1125.8 393.5 L1119.3 383.6 L1112.8 373.4 L1106.2 362.8 L1099.5 351.9 L1092.9 340.8 L1086.4 329.6 L1079.8 318.2 L1073.5 306.8 L1067.3 295.2 L1061.3 283.8 L1055.7 272.4 L1050.5 261.2 L1045.5 250.2 L1040.9 239.5 L1036.6 229.0 L1032.6 219.0 L1028.9 209.2 L1025.5 199.9 L1022.5 191.0 L1019.8 182.5 L1017.5 174.5 L1015.5 167.0 L1013.8 160.0 L1012.3 153.5 L1011.2 147.4 L1010.3 141.8 L1009.6 136.7 L1009.2 132.0 L1009.0 127.6 L1009.1 123.5 L1009.3 119.7 L1009.8 116.2 L1010.4 112.9 L1011.3 109.9 L1012.4 107.1 L1013.6 104.6 L1015.0 102.2 L1016.6 100.2 L1018.4 98.3 L1020.2 96.7 L1022.3 95.3 L1024.4 94.0 L1026.7 93.0 L1029.0 92.1 L1031.4 91.4 L1033.9 90.8 L1036.5 90.3 L1039.2 89.9 L1041.9 89.6 L1044.7 89.4 L1047.5 89.2 L1050.4 89.1 L1053.3 89.0 L1056.3 88.9 L1059.2 88.9 L1062.1 88.9 L1065.0 88.9 L1068.0 89.0 L1070.9 89.0 L1073.9 89.1 L1076.9 89.2 L1079.9 89.3 L1083.0 89.5 L1086.1 89.6 L1089.2 89.8 L1092.4 90.0 L1095.7 90.2 L1099.0 90.5 L1102.4 90.7 L1105.8 91.0 L1109.2 91.3 L1112.8 91.6 L1116.4 91.9 L1120.0 92.3 L1123.7 92.6 L1127.5 93.0 L1131.4 93.4 L1135.4 93.8 L1139.4 94.2 L1143.5 94.6 L1147.7 95.1 L1152.0 95.5 L1156.4 96.0 L1160.8 96.5 L1165.4 97.0 L1170.0 97.5 L1174.8 98.0 L1179.6 98.6 L1184.5 99.1 L1189.6 99.7 L1194.7 100.3 L1200.0 100.8 L1205.3 101.5 L1210.8 102.1 L1216.4 102.7 L1222.0 103.4 L1227.8 104.0 L1233.7 104.7 L1239.7 105.4 L1245.8 106.1 L1252.0 106.8 L1258.3 107.5 L1264.8 108.3 L1271.3 109.0 L1277.9 109.8 L1284.7 110.6 L1291.5 111.4 L1298.4 112.2 L1305.5 113.0 L1312.6 113.8 L1319.7 114.6 L1327.0 115.4 L1334.3 116.3 L1341.7 117.1 L1349.2 118.0 L1356.7 118.8 L1364.3 119.7 L1371.9 120.6 L1379.4 121.5 L1386.9 122.3 L1394.3 123.2 L1401.7 124.0 L1408.9 124.9 L1416.2 125.7 L1423.4 126.5 L1430.6 127.4 L1437.9 128.2 L1445.0 129.0 L1452.0 129.8 L1458.9 130.6 L1465.7 131.4 L1472.2 132.1 L1478.6 132.9 L1484.9 133.6 L1491.0 134.3 L1497.0 135.0 L1502.9 135.7 L1508.6 136.3 L1514.1 136.9 L1519.4 137.6 L1524.6 138.2 L1529.6 138.7 L1534.5 139.3 L1539.2 139.8 L1543.7 140.4 L1548.0 140.9 L1552.2 141.3 L1556.3 141.8 L1560.2 142.3 L1564.0 142.7 L1567.6 143.1 L1571.1 143.5 L1574.5 143.9 L1577.8 144.3 L1581.1 144.7 L1584.2 145.0 L1587.3 145.4 L1590.2 145.7 L1593.1 146.1 L1595.9 146.4 L1598.6 146.7 L1601.2 147.0 L1603.7 147.3 L1606.1 147.6 L1608.4 147.8 L1610.6 148.1 L1612.8 148.3 L1614.8 148.6 L1616.8 148.8 L1618.7 149.0 L1620.4 149.2 L1622.0 149.4 L1623.6 149.6 L1625.0 149.8 L1626.4 149.9 L1627.7 150.1 L1629.0 150.2 L1630.2 150.4 L1631.4 150.5 L1632.5 150.6 L1633.5 150.8 L1634.5 150.9 L1635.4 151.0 L1636.2 151.1 L1637.0 151.2 L1637.7 151.3 L1638.4 151.3 L1639.0 151.4 L1639.5 151.5 L1640.1 151.5 L1640.6 151.6 L1641.1 151.6 L1641.6 151.7 L1642.1 151.8 L1642.5 151.8 L1643.0 151.9 L1643.4 151.9 L1643.8 152.0 L1644.1 152.0 L1644.5 152.0 L1644.9 152.1 L1645.3 152.1 L1645.7 152.2 L1646.1 152.2 L1646.5 152.3 L1646.8 152.3 L1647.2 152.4 L1647.5 152.4 L1647.9 152.4 L1648.2 152.5 L1648.5 152.5 L1648.7 152.5 L1648.9 152.6 L1649.0 152.6 L1649.1 152.6 L1649.3 152.6 L1649.4 152.6 L1649.5 152.6 L1649.6 152.6 L1649.7 152.7 L1649.8 152.7 L1649.9 152.7 L1649.9 152.7 L1650.0 152.7 L1650.0 152.7 L1650.0 157.2Z M1472.0 140.8 L1136.4 109.4 L1188.3 430.4Z" fill="rgba(0,0,0,0.4)" fill-rule="evenodd"/>
</g></g><rect x="1129.7" y="101.5" width="12.6" height="12.6" fill="none" stroke="#fff" stroke-opacity=".82" stroke-width="1.5"/><rect x="1153.2" y="125.1" width="12.6" height="12.6" fill="none" stroke="#fff" stroke-opacity=".82" stroke-width="1.5"/><rect x="1191.2" y="117.2" width="12.6" height="12.6" fill="none" stroke="#fff" stroke-opacity=".82" stroke-width="1.5"/><rect x="1211.2" y="109.1" width="12.6" height="12.6" fill="none" stroke="#fff" stroke-opacity=".82" stroke-width="1.5"/><rect x="1237.6" y="113.1" width="12.6" height="12.6" fill="none" stroke="#fff" stroke-opacity=".82" stroke-width="1.5"/><rect x="1267.7" y="119.7" width="12.6" height="12.6" fill="none" stroke="#fff" stroke-opacity=".82" stroke-width="1.5"/><rect x="1188.6" y="138.1" width="12.6" height="12.6" fill="none" stroke="#fff" stroke-opacity=".82" stroke-width="1.5"/><rect x="1159.7" y="168.5" width="12.6" height="12.6" fill="none" stroke="#fff" stroke-opacity=".82" stroke-width="1.5"/><rect x="1251.7" y="151.7" width="12.6" height="12.6" fill="none" stroke="#fff" stroke-opacity=".82" stroke-width="1.5"/><rect x="1241.3" y="158.1" width="12.6" height="12.6" fill="none" stroke="#fff" stroke-opacity=".82" stroke-width="1.5"/><rect x="1144.3" y="187.1" width="12.6" height="12.6" fill="none" stroke="#fff" stroke-opacity=".82" stroke-width="1.5"/><rect x="1149.2" y="217.3" width="12.6" height="12.6" fill="none" stroke="#fff" stroke-opacity=".82" stroke-width="1.5"/><rect x="1182.1" y="214.7" width="12.6" height="12.6" fill="none" stroke="#fff" stroke-opacity=".82" stroke-width="1.5"/><rect x="1201.7" y="220.2" width="12.6" height="12.6" fill="none" stroke="#fff" stroke-opacity=".82" stroke-width="1.5"/><rect x="1236.2" y="237.3" width="12.6" height="12.6" fill="none" stroke="#fff" stroke-opacity=".82" stroke-width="1.5"/><rect x="1184.7" y="266.1" width="12.6" height="12.6" fill="none" stroke="#fff" stroke-opacity=".82" stroke-width="1.5"/><rect x="1184.7" y="314.7" width="12.6" height="12.6" fill="none" stroke="#fff" stroke-opacity=".82" stroke-width="1.5"/><rect x="1315.2" y="285.7" width="12.6" height="12.6" fill="none" stroke="#fff" stroke-opacity=".82" stroke-width="1.5"/><rect x="1309.7" y="123.6" width="12.6" height="12.6" fill="none" stroke="#fff" stroke-opacity=".82" stroke-width="1.5"/><rect x="1465.2" y="132.9" width="12.6" height="12.6" fill="none" stroke="#fff" stroke-opacity=".82" stroke-width="1.5"/><rect x="1387.7" y="152.6" width="12.6" height="12.6" fill="none" stroke="#fff" stroke-opacity=".82" stroke-width="1.5"/><rect x="1328.0" y="164.7" width="12.6" height="12.6" fill="none" stroke="#fff" stroke-opacity=".82" stroke-width="1.5"/><rect x="1296.7" y="209.7" width="12.6" height="12.6" fill="none" stroke="#fff" stroke-opacity=".82" stroke-width="1.5"/><rect x="1182.1" y="423.2" width="12.6" height="12.6" fill="none" stroke="#fff" stroke-opacity=".82" stroke-width="1.5"/><rect x="1205.2" y="177.2" width="11.6" height="11.6" fill="none" stroke="#000" stroke-width="2.2"/><circle cx="1109.5" cy="98.3" r="3.75" fill="#0cf00c" stroke="#161616" stroke-width="1.25"/><circle cx="1138.4" cy="127.3" r="3.75" fill="#5a9a55" stroke="#161616" stroke-width="1.25"/><circle cx="1183.6" cy="115.4" r="3.75" fill="#a3b554" stroke="#161616" stroke-width="1.25"/><circle cx="1208.4" cy="107.4" r="3.75" fill="#ffee22" stroke="#161616" stroke-width="1.25"/><circle cx="1239.5" cy="111.4" r="3.75" fill="#e6c136" stroke="#161616" stroke-width="1.25"/><circle cx="1276.5" cy="118.4" r="3.75" fill="#e0a040" stroke="#161616" stroke-width="1.25"/><circle cx="1180.5" cy="144.4" r="3.75" fill="#5c6a48" stroke="#161616" stroke-width="1.25"/><circle cx="1150.6" cy="181.3" r="3.75" fill="#7ab5a0" stroke="#161616" stroke-width="1.25"/><circle cx="1255.5" cy="162.9" r="3.75" fill="#6e5448" stroke="#161616" stroke-width="1.25"/><circle cx="1243.5" cy="168.4" r="3.75" fill="#b89584" stroke="#161616" stroke-width="1.25"/><circle cx="1134.5" cy="202.5" r="3.75" fill="#22eef0" stroke="#161616" stroke-width="1.25"/><circle cx="1143.4" cy="236.3" r="3.75" fill="#2a8aa0" stroke="#161616" stroke-width="1.25"/><circle cx="1176.4" cy="234.4" r="3.75" fill="#6a86a8" stroke="#161616" stroke-width="1.25"/><circle cx="1200.4" cy="240.4" r="3.75" fill="#8c8cb8" stroke="#161616" stroke-width="1.25"/><circle cx="1235.6" cy="259.6" r="3.75" fill="#6a4a74" stroke="#161616" stroke-width="1.25"/><circle cx="1183.4" cy="292.5" r="3.75" fill="#4a5c9c" stroke="#161616" stroke-width="1.25"/><circle cx="1185.4" cy="338.5" r="3.75" fill="#3a4a98" stroke="#161616" stroke-width="1.25"/><circle cx="1322.5" cy="314.6" r="3.75" fill="#ee22ee" stroke="#161616" stroke-width="1.25"/><circle cx="1326.4" cy="124.8" r="3.75" fill="#d08a3a" stroke="#161616" stroke-width="1.25"/><circle cx="1511.0" cy="139.2" r="3.75" fill="#ee1111" stroke="#161616" stroke-width="1.25"/><circle cx="1416.5" cy="163.1" r="3.75" fill="#b83a44" stroke="#161616" stroke-width="1.25"/><circle cx="1345.5" cy="176.3" r="3.75" fill="#c06070" stroke="#161616" stroke-width="1.25"/><circle cx="1305.5" cy="230.4" r="3.75" fill="#b85a96" stroke="#161616" stroke-width="1.25"/><circle cx="1194.8" cy="427.6" r="3.75" fill="#0a0ae6" stroke="#161616" stroke-width="1.25"/><circle cx="1203.8" cy="190.4" r="3.75" fill="#c8c8c8" stroke="#161616" stroke-width="1.25"/><circle cx="1203.0" cy="190.4" r="3.75" fill="#b0b0b0" stroke="#161616" stroke-width="1.25"/><circle cx="1202.4" cy="190.3" r="3.75" fill="#9a9a9a" stroke="#161616" stroke-width="1.25"/><circle cx="1210.4" cy="222.5" r="4.2" fill="#000"/></svg><div style="left:1002.00px;top:555.05px;width:5.00px;height:1.30px;background:#bbb;"></div><span id="t57" class="t" style="left:1001.60px;transform-origin:0 0;top:549.17px;font-size:13.5px;color:#d6d6d6;transform:scaleX(0.9800) translateX(-100%);-webkit-text-stroke:0.4px #d6d6d6;">0</span><div style="left:1006.95px;top:556.20px;width:1.30px;height:5.20px;background:#bbb;"></div><span id="t58" class="t" style="left:1007.30px;transform-origin:0 0;top:564.97px;font-size:13.5px;color:#d6d6d6;transform:scaleX(0.9800) translateX(-50%);-webkit-text-stroke:0.4px #d6d6d6;">0</span><div style="left:1002.00px;top:515.38px;width:5.00px;height:1.30px;background:#bbb;"></div><span id="t59" class="t" style="left:1001.60px;transform-origin:0 0;top:509.50px;font-size:13.5px;color:#d6d6d6;transform:scaleX(0.9800) translateX(-100%);-webkit-text-stroke:0.4px #d6d6d6;">0,05</span><div style="left:1058.47px;top:556.20px;width:1.30px;height:5.20px;background:#bbb;"></div><span id="t60" class="t" style="left:1058.83px;transform-origin:0 0;top:564.97px;font-size:13.5px;color:#d6d6d6;transform:scaleX(0.9800) translateX(-50%);-webkit-text-stroke:0.4px #d6d6d6;">0,05</span><div style="left:1002.00px;top:475.70px;width:5.00px;height:1.30px;background:#bbb;"></div><span id="t61" class="t" style="left:1001.60px;transform-origin:0 0;top:469.82px;font-size:13.5px;color:#d6d6d6;transform:scaleX(0.9800) translateX(-100%);-webkit-text-stroke:0.4px #d6d6d6;">0,1</span><div style="left:1110.00px;top:556.20px;width:1.30px;height:5.20px;background:#bbb;"></div><span id="t62" class="t" style="left:1110.35px;transform-origin:0 0;top:564.97px;font-size:13.5px;color:#d6d6d6;transform:scaleX(0.9800) translateX(-50%);-webkit-text-stroke:0.4px #d6d6d6;">0,1</span><div style="left:1002.00px;top:436.03px;width:5.00px;height:1.30px;background:#bbb;"></div><span id="t63" class="t" style="left:1001.60px;transform-origin:0 0;top:430.15px;font-size:13.5px;color:#d6d6d6;transform:scaleX(0.9800) translateX(-100%);-webkit-text-stroke:0.4px #d6d6d6;">0,15</span><div style="left:1161.52px;top:556.20px;width:1.30px;height:5.20px;background:#bbb;"></div><span id="t64" class="t" style="left:1161.88px;transform-origin:0 0;top:564.97px;font-size:13.5px;color:#d6d6d6;transform:scaleX(0.9800) translateX(-50%);-webkit-text-stroke:0.4px #d6d6d6;">0,15</span><div style="left:1002.00px;top:396.35px;width:5.00px;height:1.30px;background:#bbb;"></div><span id="t65" class="t" style="left:1001.60px;transform-origin:0 0;top:390.47px;font-size:13.5px;color:#d6d6d6;transform:scaleX(0.9800) translateX(-100%);-webkit-text-stroke:0.4px #d6d6d6;">0,2</span><div style="left:1213.05px;top:556.20px;width:1.30px;height:5.20px;background:#bbb;"></div><span id="t66" class="t" style="left:1213.40px;transform-origin:0 0;top:564.97px;font-size:13.5px;color:#d6d6d6;transform:scaleX(0.9800) translateX(-50%);-webkit-text-stroke:0.4px #d6d6d6;">0,2</span><div style="left:1002.00px;top:356.68px;width:5.00px;height:1.30px;background:#bbb;"></div><span id="t67" class="t" style="left:1001.60px;transform-origin:0 0;top:350.80px;font-size:13.5px;color:#d6d6d6;transform:scaleX(0.9800) translateX(-100%);-webkit-text-stroke:0.4px #d6d6d6;">0,25</span><div style="left:1264.57px;top:556.20px;width:1.30px;height:5.20px;background:#bbb;"></div><span id="t68" class="t" style="left:1264.92px;transform-origin:0 0;top:564.97px;font-size:13.5px;color:#d6d6d6;transform:scaleX(0.9800) translateX(-50%);-webkit-text-stroke:0.4px #d6d6d6;">0,25</span><div style="left:1002.00px;top:317.00px;width:5.00px;height:1.30px;background:#bbb;"></div><span id="t69" class="t" style="left:1001.60px;transform-origin:0 0;top:311.12px;font-size:13.5px;color:#d6d6d6;transform:scaleX(0.9800) translateX(-100%);-webkit-text-stroke:0.4px #d6d6d6;">0,3</span><div style="left:1316.10px;top:556.20px;width:1.30px;height:5.20px;background:#bbb;"></div><span id="t70" class="t" style="left:1316.45px;transform-origin:0 0;top:564.97px;font-size:13.5px;color:#d6d6d6;transform:scaleX(0.9800) translateX(-50%);-webkit-text-stroke:0.4px #d6d6d6;">0,3</span><div style="left:1002.00px;top:277.33px;width:5.00px;height:1.30px;background:#bbb;"></div><span id="t71" class="t" style="left:1001.60px;transform-origin:0 0;top:271.45px;font-size:13.5px;color:#d6d6d6;transform:scaleX(0.9800) translateX(-100%);-webkit-text-stroke:0.4px #d6d6d6;">0,35</span><div style="left:1367.62px;top:556.20px;width:1.30px;height:5.20px;background:#bbb;"></div><span id="t72" class="t" style="left:1367.98px;transform-origin:0 0;top:564.97px;font-size:13.5px;color:#d6d6d6;transform:scaleX(0.9800) translateX(-50%);-webkit-text-stroke:0.4px #d6d6d6;">0,35</span><div style="left:1002.00px;top:237.65px;width:5.00px;height:1.30px;background:#bbb;"></div><span id="t73" class="t" style="left:1001.60px;transform-origin:0 0;top:231.77px;font-size:13.5px;color:#d6d6d6;transform:scaleX(0.9800) translateX(-100%);-webkit-text-stroke:0.4px #d6d6d6;">0,4</span><div style="left:1419.15px;top:556.20px;width:1.30px;height:5.20px;background:#bbb;"></div><span id="t74" class="t" style="left:1419.50px;transform-origin:0 0;top:564.97px;font-size:13.5px;color:#d6d6d6;transform:scaleX(0.9800) translateX(-50%);-webkit-text-stroke:0.4px #d6d6d6;">0,4</span><div style="left:1002.00px;top:197.98px;width:5.00px;height:1.30px;background:#bbb;"></div><span id="t75" class="t" style="left:1001.60px;transform-origin:0 0;top:192.10px;font-size:13.5px;color:#d6d6d6;transform:scaleX(0.9800) translateX(-100%);-webkit-text-stroke:0.4px #d6d6d6;">0,45</span><div style="left:1470.67px;top:556.20px;width:1.30px;height:5.20px;background:#bbb;"></div><span id="t76" class="t" style="left:1471.03px;transform-origin:0 0;top:564.97px;font-size:13.5px;color:#d6d6d6;transform:scaleX(0.9800) translateX(-50%);-webkit-text-stroke:0.4px #d6d6d6;">0,45</span><div style="left:1002.00px;top:158.30px;width:5.00px;height:1.30px;background:#bbb;"></div><span id="t77" class="t" style="left:1001.60px;transform-origin:0 0;top:152.42px;font-size:13.5px;color:#d6d6d6;transform:scaleX(0.9800) translateX(-100%);-webkit-text-stroke:0.4px #d6d6d6;">0,5</span><div style="left:1522.20px;top:556.20px;width:1.30px;height:5.20px;background:#bbb;"></div><span id="t78" class="t" style="left:1522.55px;transform-origin:0 0;top:564.97px;font-size:13.5px;color:#d6d6d6;transform:scaleX(0.9800) translateX(-50%);-webkit-text-stroke:0.4px #d6d6d6;">0,5</span><div style="left:1002.00px;top:118.63px;width:5.00px;height:1.30px;background:#bbb;"></div><span id="t79" class="t" style="left:1001.60px;transform-origin:0 0;top:112.75px;font-size:13.5px;color:#d6d6d6;transform:scaleX(0.9800) translateX(-100%);-webkit-text-stroke:0.4px #d6d6d6;">0,55</span><div style="left:1573.72px;top:556.20px;width:1.30px;height:5.20px;background:#bbb;"></div><span id="t80" class="t" style="left:1574.08px;transform-origin:0 0;top:564.97px;font-size:13.5px;color:#d6d6d6;transform:scaleX(0.9800) translateX(-50%);-webkit-text-stroke:0.4px #d6d6d6;">0,55</span><div style="left:1426.60px;top:387.20px;width:195.00px;height:127.00px;background:#4a4a4a;"></div><div style="left:1428.50px;top:389.10px;width:191.20px;height:123.40px;overflow:hidden;border:1px solid #8a8a8a;"><div style="left:0.00px;top:0.00px;width:191.20px;height:123.40px;background:linear-gradient(127deg,#7cf000 0%,#b4ff00 22%,#ffff14 50%,#ffc800 72%,#ff8c00 100%);"></div><svg width="192" height="124" style="left:0;top:0"><path d="M0 12.6 L191.2 110.5 V0 H0Z" fill="rgba(0,0,0,.42)"/><rect x="87.3" y="54.5" width="13" height="13" fill="none" stroke="#fff" stroke-opacity=".85" stroke-width="1.4"/><rect x="155.8" y="106" width="13" height="13" fill="none" stroke="#fff" stroke-opacity=".85" stroke-width="1.4"/><circle cx="92.6" cy="6.8" r="3.8" fill="#ffee22" stroke="#111"/><circle cx="190" cy="63.8" r="3.8" fill="#e6c136" stroke="#111"/></svg></div><div style="left:1379.90px;top:524.50px;width:243.20px;height:25.00px;background:#333;"></div><span id="t81" class="t" style="left:1380.70px;transform-origin:0 0;top:528.32px;font-size:19px;color:#f4f4f4;transform:scaleX(1.0000);-webkit-text-stroke:0.3px #f4f4f4;">RGB Triplet: 255, 255, 0</span><span id="t82" class="t" style="left:71.80px;transform-origin:0 0;top:597.14px;font-size:27px;color:#f4f4f4;transform:scaleX(1.0523);-webkit-text-stroke:0.35px #f4f4f4;">Avg dE2000: 4,29</span><span id="t83" class="t" style="left:67.70px;transform-origin:0 0;top:636.74px;font-size:27px;color:#f4f4f4;transform:scaleX(1.0662);-webkit-text-stroke:0.35px #f4f4f4;">Max dE2000: 8,37</span><span id="t84" class="t" style="left:37.30px;transform-origin:0 0;top:681.87px;font-size:26.5px;color:#f4f4f4;transform:scaleX(1.0897);-webkit-text-stroke:0.35px #f4f4f4;">Current Reading</span><span id="t85" class="t" style="left:37.30px;transform-origin:0 0;top:720.23px;font-size:23px;color:#f4f4f4;transform:scaleX(1.0411);-webkit-text-stroke:0.35px #f4f4f4;">x: 0,4188</span><span id="t86" class="t" style="left:188.70px;transform-origin:0 0;top:720.23px;font-size:23px;color:#f4f4f4;transform:scaleX(1.0474);-webkit-text-stroke:0.35px #f4f4f4;">y: 0,5386</span><span id="t87" class="t" style="left:37.30px;transform-origin:0 0;top:760.03px;font-size:23px;color:#f4f4f4;transform:scaleX(1.0431);-webkit-text-stroke:0.35px #f4f4f4;">fL: 142,75</span><span id="t88" class="t" style="left:37.30px;transform-origin:0 0;top:792.63px;font-size:23px;color:#f4f4f4;transform:scaleX(1.0957);-webkit-text-stroke:0.35px #f4f4f4;">cd/m<span style="font-size:15px;position:relative;top:-7.5px">2</span>: 489,11</span><div style="left:335.20px;top:604.00px;width:1299.80px;height:27.00px;background:linear-gradient(#262626,#1e1e1e 48%,#0c0c0c 52%,#1c1c1c);"></div><div style="left:335.20px;top:604.00px;width:15.00px;height:27.00px;background:#000;"></div><div style="left:335.20px;top:631.00px;width:1299.80px;height:24.90px;background:#3c3c3c;"></div><div style="left:335.20px;top:631.00px;width:15.00px;height:24.90px;background:linear-gradient(#2e2e2e,#1e1e1e);"></div><div style="left:335.20px;top:655.90px;width:1299.80px;height:24.90px;background:#818181;"></div><div style="left:335.20px;top:655.90px;width:15.00px;height:24.90px;background:linear-gradient(#2e2e2e,#1e1e1e);"></div><div style="left:335.20px;top:680.80px;width:1299.80px;height:24.90px;background:#3c3c3c;"></div><div style="left:335.20px;top:680.80px;width:15.00px;height:24.90px;background:linear-gradient(#2e2e2e,#1e1e1e);"></div><div style="left:335.20px;top:705.70px;width:1299.80px;height:24.90px;background:#818181;"></div><div style="left:335.20px;top:705.70px;width:15.00px;height:24.90px;background:linear-gradient(#2e2e2e,#1e1e1e);"></div><div style="left:335.20px;top:730.60px;width:1299.80px;height:24.90px;background:#3c3c3c;"></div><div style="left:335.20px;top:730.60px;width:15.00px;height:24.90px;background:linear-gradient(#2e2e2e,#1e1e1e);"></div><div style="left:335.20px;top:755.50px;width:1299.80px;height:24.90px;background:#818181;"></div><div style="left:335.20px;top:755.50px;width:15.00px;height:24.90px;background:linear-gradient(#2e2e2e,#1e1e1e);"></div><div style="left:335.20px;top:780.40px;width:1299.80px;height:24.90px;background:#3c3c3c;"></div><div style="left:335.20px;top:780.40px;width:15.00px;height:24.90px;background:linear-gradient(#2e2e2e,#1e1e1e);"></div><div style="left:350.00px;top:805.30px;width:1285.00px;height:16.20px;background:#626262;"></div><div style="left:371.50px;top:807.00px;width:555.50px;height:13.50px;background:#444;border-radius:6.7px;"></div><div style="left:351.00px;top:806.30px;width:15.00px;height:14.20px;background:#8a8a8a;border-radius:2px;"></div><div style="left:1617.00px;top:806.30px;width:15.00px;height:14.20px;background:#8a8a8a;border-radius:2px;"></div><svg width="1643" height="905"><path d="M362.5 809v9l-7-4.5z" fill="#333"/><path d="M1621 809v9l7-4.5z" fill="#333"/></svg><div style="left:335.20px;top:600.00px;width:1299.80px;height:206.00px;overflow:hidden;"><span id="t89" class="t" style="left:148.50px;transform-origin:0 0;top:11.18px;font-size:14.2px;color:#f4f4f4;font-weight:700;transform:scaleX(1.2026);">White</span><span id="t90" class="t" style="left:235.00px;transform-origin:0 0;top:11.18px;font-size:14.2px;color:#f4f4f4;font-weight:700;transform:scaleX(1.1365);">Gray 80</span><span id="t91" class="t" style="left:321.50px;transform-origin:0 0;top:11.18px;font-size:14.2px;color:#f4f4f4;font-weight:700;transform:scaleX(1.1365);">Gray 65</span><span id="t92" class="t" style="left:408.10px;transform-origin:0 0;top:11.18px;font-size:14.2px;color:#f4f4f4;font-weight:700;transform:scaleX(1.1365);">Gray 50</span><span id="t93" class="t" style="left:494.80px;transform-origin:0 0;top:11.18px;font-size:14.2px;color:#f4f4f4;font-weight:700;transform:scaleX(1.1327);">Gray 35</span><span id="t94" class="t" style="left:581.60px;transform-origin:0 0;top:11.18px;font-size:14.2px;color:#f4f4f4;font-weight:700;transform:scaleX(1.0421);">Black</span><span id="t95" class="t" style="left:648.00px;transform-origin:0 0;top:11.18px;font-size:14.2px;color:#f4f4f4;font-weight:700;transform:scaleX(1.0985);">Dark Skin</span><span id="t96" class="t" style="left:729.50px;transform-origin:0 0;top:11.18px;font-size:14.2px;color:#f4f4f4;font-weight:700;transform:scaleX(1.0522);">Light Skin</span><span id="t97" class="t" style="left:816.30px;transform-origin:0 0;top:11.18px;font-size:14.2px;color:#f4f4f4;font-weight:700;transform:scaleX(1.0633);">Blue Sky</span><span id="t98" class="t" style="left:903.10px;transform-origin:0 0;top:11.18px;font-size:14.2px;color:#f4f4f4;font-weight:700;transform:scaleX(1.0740);">Foliage</span><span id="t99" class="t" style="left:979.30px;transform-origin:0 0;top:11.18px;font-size:14.2px;color:#f4f4f4;font-weight:700;transform:scaleX(1.1250);">Blue Flower</span><span id="t100" class="t" style="left:1079.80px;transform-origin:0 0;top:11.18px;font-size:14.2px;color:#f4f4f4;font-weight:700;transform:scaleX(1.1011);">Bluish Green</span><span id="t101" class="t" style="left:1186.80px;transform-origin:0 0;top:11.18px;font-size:14.2px;color:#f4f4f4;font-weight:700;transform:scaleX(1.1060);">Orange</span><span id="t102" class="t" style="left:1273.50px;transform-origin:0 0;top:11.18px;font-size:14.2px;color:#f4f4f4;font-weight:700;transform:scaleX(1.0989);">Purplish Blue</span><span id="t103" class="t" style="left:20.00px;transform-origin:0 0;top:37.65px;font-size:14px;color:#f4f4f4;transform:scaleX(1.1759);-webkit-text-stroke:0.2px #f4f4f4;">x: CIE31</span><span id="t104" class="t" style="left:148.50px;transform-origin:0 0;top:37.65px;font-size:14px;color:#f4f4f4;transform:scaleX(1.2628);-webkit-text-stroke:0.2px #f4f4f4;">0,2936</span><span id="t105" class="t" style="left:235.00px;transform-origin:0 0;top:37.65px;font-size:14px;color:#f4f4f4;transform:scaleX(1.2628);-webkit-text-stroke:0.2px #f4f4f4;">0,2938</span><span id="t106" class="t" style="left:321.50px;transform-origin:0 0;top:37.65px;font-size:14px;color:#f4f4f4;transform:scaleX(1.2628);-webkit-text-stroke:0.2px #f4f4f4;">0,2942</span><span id="t107" class="t" style="left:408.10px;transform-origin:0 0;top:37.65px;font-size:14px;color:#f4f4f4;transform:scaleX(1.2628);-webkit-text-stroke:0.2px #f4f4f4;">0,2934</span><span id="t108" class="t" style="left:494.80px;transform-origin:0 0;top:37.65px;font-size:14px;color:#f4f4f4;transform:scaleX(1.2628);-webkit-text-stroke:0.2px #f4f4f4;">0,2928</span><span id="t109" class="t" style="left:581.60px;transform-origin:0 0;top:37.65px;font-size:14px;color:#f4f4f4;transform:scaleX(1.2628);-webkit-text-stroke:0.2px #f4f4f4;">0,2741</span><span id="t110" class="t" style="left:648.00px;transform-origin:0 0;top:37.65px;font-size:14px;color:#f4f4f4;transform:scaleX(1.2628);-webkit-text-stroke:0.2px #f4f4f4;">0,3897</span><span id="t111" class="t" style="left:729.50px;transform-origin:0 0;top:37.65px;font-size:14px;color:#f4f4f4;transform:scaleX(1.2628);-webkit-text-stroke:0.2px #f4f4f4;">0,3689</span><span id="t112" class="t" style="left:816.30px;transform-origin:0 0;top:37.65px;font-size:14px;color:#f4f4f4;transform:scaleX(1.2628);-webkit-text-stroke:0.2px #f4f4f4;">0,2264</span><span id="t113" class="t" style="left:903.10px;transform-origin:0 0;top:37.65px;font-size:14px;color:#f4f4f4;transform:scaleX(1.2628);-webkit-text-stroke:0.2px #f4f4f4;">0,3181</span><span id="t114" class="t" style="left:979.30px;transform-origin:0 0;top:37.65px;font-size:14px;color:#f4f4f4;transform:scaleX(1.2628);-webkit-text-stroke:0.2px #f4f4f4;">0,2475</span><span id="t115" class="t" style="left:1079.80px;transform-origin:0 0;top:37.65px;font-size:14px;color:#f4f4f4;transform:scaleX(1.2628);-webkit-text-stroke:0.2px #f4f4f4;">0,2338</span><span id="t116" class="t" style="left:1186.80px;transform-origin:0 0;top:37.65px;font-size:14px;color:#f4f4f4;transform:scaleX(1.2628);-webkit-text-stroke:0.2px #f4f4f4;">0,5363</span><span id="t117" class="t" style="left:1273.50px;transform-origin:0 0;top:37.65px;font-size:14px;color:#f4f4f4;transform:scaleX(1.2628);-webkit-text-stroke:0.2px #f4f4f4;">0,1972</span><span id="t118" class="t" style="left:20.00px;transform-origin:0 0;top:62.55px;font-size:14px;color:#ececec;transform:scaleX(1.1759);-webkit-text-stroke:0.2px #ececec;">y: CIE31</span><span id="t119" class="t" style="left:148.50px;transform-origin:0 0;top:62.55px;font-size:14px;color:#ececec;transform:scaleX(1.2628);-webkit-text-stroke:0.2px #ececec;">0,3161</span><span id="t120" class="t" style="left:235.00px;transform-origin:0 0;top:62.55px;font-size:14px;color:#ececec;transform:scaleX(1.2628);-webkit-text-stroke:0.2px #ececec;">0,3166</span><span id="t121" class="t" style="left:321.50px;transform-origin:0 0;top:62.55px;font-size:14px;color:#ececec;transform:scaleX(1.2628);-webkit-text-stroke:0.2px #ececec;">0,3181</span><span id="t122" class="t" style="left:408.10px;transform-origin:0 0;top:62.55px;font-size:14px;color:#ececec;transform:scaleX(1.2628);-webkit-text-stroke:0.2px #ececec;">0,3172</span><span id="t123" class="t" style="left:494.80px;transform-origin:0 0;top:62.55px;font-size:14px;color:#ececec;transform:scaleX(1.2628);-webkit-text-stroke:0.2px #ececec;">0,3169</span><span id="t124" class="t" style="left:581.60px;transform-origin:0 0;top:62.55px;font-size:14px;color:#ececec;transform:scaleX(1.2628);-webkit-text-stroke:0.2px #ececec;">0,2584</span><span id="t125" class="t" style="left:648.00px;transform-origin:0 0;top:62.55px;font-size:14px;color:#ececec;transform:scaleX(1.2628);-webkit-text-stroke:0.2px #ececec;">0,3556</span><span id="t126" class="t" style="left:729.50px;transform-origin:0 0;top:62.55px;font-size:14px;color:#ececec;transform:scaleX(1.2628);-webkit-text-stroke:0.2px #ececec;">0,3491</span><span id="t127" class="t" style="left:816.30px;transform-origin:0 0;top:62.55px;font-size:14px;color:#ececec;transform:scaleX(1.2628);-webkit-text-stroke:0.2px #ececec;">0,2468</span><span id="t128" class="t" style="left:903.10px;transform-origin:0 0;top:62.55px;font-size:14px;color:#ececec;transform:scaleX(1.2628);-webkit-text-stroke:0.2px #ececec;">0,4336</span><span id="t129" class="t" style="left:979.30px;transform-origin:0 0;top:62.55px;font-size:14px;color:#ececec;transform:scaleX(1.2628);-webkit-text-stroke:0.2px #ececec;">0,2317</span><span id="t130" class="t" style="left:1079.80px;transform-origin:0 0;top:62.55px;font-size:14px;color:#ececec;transform:scaleX(1.2628);-webkit-text-stroke:0.2px #ececec;">0,3525</span><span id="t131" class="t" style="left:1186.80px;transform-origin:0 0;top:62.55px;font-size:14px;color:#ececec;transform:scaleX(1.2628);-webkit-text-stroke:0.2px #ececec;">0,4161</span><span id="t132" class="t" style="left:1273.50px;transform-origin:0 0;top:62.55px;font-size:14px;color:#ececec;transform:scaleX(1.2628);-webkit-text-stroke:0.2px #ececec;">0,1745</span><span id="t133" class="t" style="left:20.00px;transform-origin:0 0;top:87.45px;font-size:14px;color:#f4f4f4;transform:scaleX(1.0556);-webkit-text-stroke:0.2px #f4f4f4;">Y</span><span id="t134" class="t" style="left:148.50px;transform-origin:0 0;top:87.45px;font-size:14px;color:#f4f4f4;transform:scaleX(1.2897);-webkit-text-stroke:0.2px #f4f4f4;">541,8246</span><span id="t135" class="t" style="left:235.00px;transform-origin:0 0;top:87.45px;font-size:14px;color:#f4f4f4;transform:scaleX(1.2897);-webkit-text-stroke:0.2px #f4f4f4;">426,0579</span><span id="t136" class="t" style="left:321.50px;transform-origin:0 0;top:87.45px;font-size:14px;color:#f4f4f4;transform:scaleX(1.2897);-webkit-text-stroke:0.2px #f4f4f4;">343,2043</span><span id="t137" class="t" style="left:408.10px;transform-origin:0 0;top:87.45px;font-size:14px;color:#f4f4f4;transform:scaleX(1.2897);-webkit-text-stroke:0.2px #f4f4f4;">261,5131</span><span id="t138" class="t" style="left:494.80px;transform-origin:0 0;top:87.45px;font-size:14px;color:#f4f4f4;transform:scaleX(1.2897);-webkit-text-stroke:0.2px #f4f4f4;">183,4652</span><span id="t139" class="t" style="left:581.60px;transform-origin:0 0;top:87.45px;font-size:14px;color:#f4f4f4;transform:scaleX(1.2628);-webkit-text-stroke:0.2px #f4f4f4;">0,5416</span><span id="t140" class="t" style="left:648.00px;transform-origin:0 0;top:87.45px;font-size:14px;color:#f4f4f4;transform:scaleX(1.2647);-webkit-text-stroke:0.2px #f4f4f4;">52,9654</span><span id="t141" class="t" style="left:729.50px;transform-origin:0 0;top:87.45px;font-size:14px;color:#f4f4f4;transform:scaleX(1.2897);-webkit-text-stroke:0.2px #f4f4f4;">185,6649</span><span id="t142" class="t" style="left:816.30px;transform-origin:0 0;top:87.45px;font-size:14px;color:#f4f4f4;transform:scaleX(1.2897);-webkit-text-stroke:0.2px #f4f4f4;">101,8403</span><span id="t143" class="t" style="left:903.10px;transform-origin:0 0;top:87.45px;font-size:14px;color:#f4f4f4;transform:scaleX(1.2647);-webkit-text-stroke:0.2px #f4f4f4;">68,5961</span><span id="t144" class="t" style="left:979.30px;transform-origin:0 0;top:87.45px;font-size:14px;color:#f4f4f4;transform:scaleX(1.2897);-webkit-text-stroke:0.2px #f4f4f4;">125,1247</span><span id="t145" class="t" style="left:1079.80px;transform-origin:0 0;top:87.45px;font-size:14px;color:#f4f4f4;transform:scaleX(1.2897);-webkit-text-stroke:0.2px #f4f4f4;">223,1733</span><span id="t146" class="t" style="left:1186.80px;transform-origin:0 0;top:87.45px;font-size:14px;color:#f4f4f4;transform:scaleX(1.2897);-webkit-text-stroke:0.2px #f4f4f4;">148,4880</span><span id="t147" class="t" style="left:1273.50px;transform-origin:0 0;top:87.45px;font-size:14px;color:#f4f4f4;transform:scaleX(1.2647);-webkit-text-stroke:0.2px #f4f4f4;">64,5123</span><span id="t148" class="t" style="left:20.00px;transform-origin:0 0;top:112.35px;font-size:14px;color:#ececec;transform:scaleX(1.2419);-webkit-text-stroke:0.2px #ececec;">Target x:CIE31</span><span id="t149" class="t" style="left:148.50px;transform-origin:0 0;top:112.35px;font-size:14px;color:#ececec;transform:scaleX(1.2628);-webkit-text-stroke:0.2px #ececec;">0,3127</span><span id="t150" class="t" style="left:235.00px;transform-origin:0 0;top:112.35px;font-size:14px;color:#ececec;transform:scaleX(1.2628);-webkit-text-stroke:0.2px #ececec;">0,3127</span><span id="t151" class="t" style="left:321.50px;transform-origin:0 0;top:112.35px;font-size:14px;color:#ececec;transform:scaleX(1.2628);-webkit-text-stroke:0.2px #ececec;">0,3127</span><span id="t152" class="t" style="left:408.10px;transform-origin:0 0;top:112.35px;font-size:14px;color:#ececec;transform:scaleX(1.2628);-webkit-text-stroke:0.2px #ececec;">0,3127</span><span id="t153" class="t" style="left:494.80px;transform-origin:0 0;top:112.35px;font-size:14px;color:#ececec;transform:scaleX(1.2628);-webkit-text-stroke:0.2px #ececec;">0,3127</span><span id="t154" class="t" style="left:581.60px;transform-origin:0 0;top:112.35px;font-size:14px;color:#ececec;transform:scaleX(1.2628);-webkit-text-stroke:0.2px #ececec;">0,3127</span><span id="t155" class="t" style="left:648.00px;transform-origin:0 0;top:112.35px;font-size:14px;color:#ececec;transform:scaleX(1.2628);-webkit-text-stroke:0.2px #ececec;">0,4003</span><span id="t156" class="t" style="left:729.50px;transform-origin:0 0;top:112.35px;font-size:14px;color:#ececec;transform:scaleX(1.2628);-webkit-text-stroke:0.2px #ececec;">0,3795</span><span id="t157" class="t" style="left:816.30px;transform-origin:0 0;top:112.35px;font-size:14px;color:#ececec;transform:scaleX(1.2628);-webkit-text-stroke:0.2px #ececec;">0,2496</span><span id="t158" class="t" style="left:903.10px;transform-origin:0 0;top:112.35px;font-size:14px;color:#ececec;transform:scaleX(1.2628);-webkit-text-stroke:0.2px #ececec;">0,3395</span><span id="t159" class="t" style="left:979.30px;transform-origin:0 0;top:112.35px;font-size:14px;color:#ececec;transform:scaleX(1.2628);-webkit-text-stroke:0.2px #ececec;">0,2681</span><span id="t160" class="t" style="left:1079.80px;transform-origin:0 0;top:112.35px;font-size:14px;color:#ececec;transform:scaleX(1.2628);-webkit-text-stroke:0.2px #ececec;">0,2626</span><span id="t161" class="t" style="left:1186.80px;transform-origin:0 0;top:112.35px;font-size:14px;color:#ececec;transform:scaleX(1.2628);-webkit-text-stroke:0.2px #ececec;">0,5122</span><span id="t162" class="t" style="left:1273.50px;transform-origin:0 0;top:112.35px;font-size:14px;color:#ececec;transform:scaleX(1.2628);-webkit-text-stroke:0.2px #ececec;">0,2138</span><span id="t163" class="t" style="left:20.00px;transform-origin:0 0;top:137.25px;font-size:14px;color:#f4f4f4;transform:scaleX(1.2419);-webkit-text-stroke:0.2px #f4f4f4;">Target y:CIE31</span><span id="t164" class="t" style="left:148.50px;transform-origin:0 0;top:137.25px;font-size:14px;color:#f4f4f4;transform:scaleX(1.2628);-webkit-text-stroke:0.2px #f4f4f4;">0,3290</span><span id="t165" class="t" style="left:235.00px;transform-origin:0 0;top:137.25px;font-size:14px;color:#f4f4f4;transform:scaleX(1.2628);-webkit-text-stroke:0.2px #f4f4f4;">0,3290</span><span id="t166" class="t" style="left:321.50px;transform-origin:0 0;top:137.25px;font-size:14px;color:#f4f4f4;transform:scaleX(1.2628);-webkit-text-stroke:0.2px #f4f4f4;">0,3290</span><span id="t167" class="t" style="left:408.10px;transform-origin:0 0;top:137.25px;font-size:14px;color:#f4f4f4;transform:scaleX(1.2628);-webkit-text-stroke:0.2px #f4f4f4;">0,3290</span><span id="t168" class="t" style="left:494.80px;transform-origin:0 0;top:137.25px;font-size:14px;color:#f4f4f4;transform:scaleX(1.2628);-webkit-text-stroke:0.2px #f4f4f4;">0,3290</span><span id="t169" class="t" style="left:581.60px;transform-origin:0 0;top:137.25px;font-size:14px;color:#f4f4f4;transform:scaleX(1.2628);-webkit-text-stroke:0.2px #f4f4f4;">0,3290</span><span id="t170" class="t" style="left:648.00px;transform-origin:0 0;top:137.25px;font-size:14px;color:#f4f4f4;transform:scaleX(1.2628);-webkit-text-stroke:0.2px #f4f4f4;">0,3642</span><span id="t171" class="t" style="left:729.50px;transform-origin:0 0;top:137.25px;font-size:14px;color:#f4f4f4;transform:scaleX(1.2628);-webkit-text-stroke:0.2px #f4f4f4;">0,3562</span><span id="t172" class="t" style="left:816.30px;transform-origin:0 0;top:137.25px;font-size:14px;color:#f4f4f4;transform:scaleX(1.2628);-webkit-text-stroke:0.2px #f4f4f4;">0,2656</span><span id="t173" class="t" style="left:903.10px;transform-origin:0 0;top:137.25px;font-size:14px;color:#f4f4f4;transform:scaleX(1.2628);-webkit-text-stroke:0.2px #f4f4f4;">0,4271</span><span id="t174" class="t" style="left:979.30px;transform-origin:0 0;top:137.25px;font-size:14px;color:#f4f4f4;transform:scaleX(1.2628);-webkit-text-stroke:0.2px #f4f4f4;">0,2525</span><span id="t175" class="t" style="left:1079.80px;transform-origin:0 0;top:137.25px;font-size:14px;color:#f4f4f4;transform:scaleX(1.2628);-webkit-text-stroke:0.2px #f4f4f4;">0,3616</span><span id="t176" class="t" style="left:1186.80px;transform-origin:0 0;top:137.25px;font-size:14px;color:#f4f4f4;transform:scaleX(1.2628);-webkit-text-stroke:0.2px #f4f4f4;">0,4063</span><span id="t177" class="t" style="left:1273.50px;transform-origin:0 0;top:137.25px;font-size:14px;color:#f4f4f4;transform:scaleX(1.2628);-webkit-text-stroke:0.2px #f4f4f4;">0,1905</span><span id="t178" class="t" style="left:20.00px;transform-origin:0 0;top:162.15px;font-size:14px;color:#ececec;transform:scaleX(1.2692);-webkit-text-stroke:0.2px #ececec;">Target Y</span><span id="t179" class="t" style="left:148.50px;transform-origin:0 0;top:162.15px;font-size:14px;color:#ececec;transform:scaleX(1.2897);-webkit-text-stroke:0.2px #ececec;">541,8246</span><span id="t180" class="t" style="left:235.00px;transform-origin:0 0;top:162.15px;font-size:14px;color:#ececec;transform:scaleX(1.2897);-webkit-text-stroke:0.2px #ececec;">428,7447</span><span id="t181" class="t" style="left:321.50px;transform-origin:0 0;top:162.15px;font-size:14px;color:#ececec;transform:scaleX(1.2897);-webkit-text-stroke:0.2px #ececec;">345,4657</span><span id="t182" class="t" style="left:408.10px;transform-origin:0 0;top:162.15px;font-size:14px;color:#ececec;transform:scaleX(1.2897);-webkit-text-stroke:0.2px #ececec;">266,0472</span><span id="t183" class="t" style="left:494.80px;transform-origin:0 0;top:162.15px;font-size:14px;color:#ececec;transform:scaleX(1.2897);-webkit-text-stroke:0.2px #ececec;">185,2577</span><span id="t184" class="t" style="left:581.60px;transform-origin:0 0;top:162.15px;font-size:14px;color:#ececec;transform:scaleX(1.2628);-webkit-text-stroke:0.2px #ececec;">0,0000</span><span id="t185" class="t" style="left:648.00px;transform-origin:0 0;top:162.15px;font-size:14px;color:#ececec;transform:scaleX(1.2647);-webkit-text-stroke:0.2px #ececec;">54,5796</span><span id="t186" class="t" style="left:729.50px;transform-origin:0 0;top:162.15px;font-size:14px;color:#ececec;transform:scaleX(1.2897);-webkit-text-stroke:0.2px #ececec;">189,0706</span><span id="t187" class="t" style="left:816.30px;transform-origin:0 0;top:162.15px;font-size:14px;color:#ececec;transform:scaleX(1.2897);-webkit-text-stroke:0.2px #ececec;">101,3125</span><span id="t188" class="t" style="left:903.10px;transform-origin:0 0;top:162.15px;font-size:14px;color:#ececec;transform:scaleX(1.2647);-webkit-text-stroke:0.2px #ececec;">70,6130</span><span id="t189" class="t" style="left:979.30px;transform-origin:0 0;top:162.15px;font-size:14px;color:#ececec;transform:scaleX(1.2897);-webkit-text-stroke:0.2px #ececec;">126,3453</span><span id="t190" class="t" style="left:1079.80px;transform-origin:0 0;top:162.15px;font-size:14px;color:#ececec;transform:scaleX(1.2897);-webkit-text-stroke:0.2px #ececec;">226,8783</span><span id="t191" class="t" style="left:1186.80px;transform-origin:0 0;top:162.15px;font-size:14px;color:#ececec;transform:scaleX(1.2897);-webkit-text-stroke:0.2px #ececec;">153,5955</span><span id="t192" class="t" style="left:1273.50px;transform-origin:0 0;top:162.15px;font-size:14px;color:#ececec;transform:scaleX(1.2647);-webkit-text-stroke:0.2px #ececec;">63,6421</span><span id="t193" class="t" style="left:20.00px;transform-origin:0 0;top:187.05px;font-size:14px;color:#f4f4f4;transform:scaleX(1.2500);-webkit-text-stroke:0.2px #f4f4f4;">ΔE 2000</span><span id="t194" class="t" style="left:148.50px;transform-origin:0 0;top:187.05px;font-size:14px;color:#f4f4f4;transform:scaleX(1.2628);-webkit-text-stroke:0.2px #f4f4f4;">8,3653</span><span id="t195" class="t" style="left:235.00px;transform-origin:0 0;top:187.05px;font-size:14px;color:#f4f4f4;transform:scaleX(1.2628);-webkit-text-stroke:0.2px #f4f4f4;">7,8077</span><span id="t196" class="t" style="left:321.50px;transform-origin:0 0;top:187.05px;font-size:14px;color:#f4f4f4;transform:scaleX(1.2628);-webkit-text-stroke:0.2px #f4f4f4;">7,3277</span><span id="t197" class="t" style="left:408.10px;transform-origin:0 0;top:187.05px;font-size:14px;color:#f4f4f4;transform:scaleX(1.2628);-webkit-text-stroke:0.2px #f4f4f4;">7,0161</span><span id="t198" class="t" style="left:494.80px;transform-origin:0 0;top:187.05px;font-size:14px;color:#f4f4f4;transform:scaleX(1.2628);-webkit-text-stroke:0.2px #f4f4f4;">6,4934</span><span id="t199" class="t" style="left:581.60px;transform-origin:0 0;top:187.05px;font-size:14px;color:#f4f4f4;transform:scaleX(1.2628);-webkit-text-stroke:0.2px #f4f4f4;">1,3064</span><span id="t200" class="t" style="left:648.00px;transform-origin:0 0;top:187.05px;font-size:14px;color:#f4f4f4;transform:scaleX(1.2628);-webkit-text-stroke:0.2px #f4f4f4;">1,9400</span><span id="t201" class="t" style="left:729.50px;transform-origin:0 0;top:187.05px;font-size:14px;color:#f4f4f4;transform:scaleX(1.2628);-webkit-text-stroke:0.2px #f4f4f4;">2,2687</span><span id="t202" class="t" style="left:816.30px;transform-origin:0 0;top:187.05px;font-size:14px;color:#f4f4f4;transform:scaleX(1.2628);-webkit-text-stroke:0.2px #f4f4f4;">4,4779</span><span id="t203" class="t" style="left:903.10px;transform-origin:0 0;top:187.05px;font-size:14px;color:#f4f4f4;transform:scaleX(1.2628);-webkit-text-stroke:0.2px #f4f4f4;">4,1262</span><span id="t204" class="t" style="left:979.30px;transform-origin:0 0;top:187.05px;font-size:14px;color:#f4f4f4;transform:scaleX(1.2628);-webkit-text-stroke:0.2px #f4f4f4;">4,9666</span><span id="t205" class="t" style="left:1079.80px;transform-origin:0 0;top:187.05px;font-size:14px;color:#f4f4f4;transform:scaleX(1.2628);-webkit-text-stroke:0.2px #f4f4f4;">5,3747</span><span id="t206" class="t" style="left:1186.80px;transform-origin:0 0;top:187.05px;font-size:14px;color:#f4f4f4;transform:scaleX(1.2628);-webkit-text-stroke:0.2px #f4f4f4;">3,6321</span><span id="t207" class="t" style="left:1273.50px;transform-origin:0 0;top:187.05px;font-size:14px;color:#f4f4f4;transform:scaleX(1.2628);-webkit-text-stroke:0.2px #f4f4f4;">3,1712</span></div><div style="left:0.00px;top:822.00px;width:1643.00px;height:83.00px;background:#333;"></div><div style="left:0.00px;top:887.30px;width:1262.00px;height:16.00px;background:#656565;"></div><div style="left:0.00px;top:903.00px;width:1643.00px;height:2.00px;background:#151515;"></div><div style="left:451.00px;top:888.50px;width:793.00px;height:13.50px;background:#4c4c4c;border-radius:6.7px;"></div><div style="left:-5.00px;top:888.00px;width:14.50px;height:14.50px;background:#8a8a8a;border-radius:2px;"></div><div style="left:1246.00px;top:888.00px;width:14.50px;height:14.50px;background:#8a8a8a;border-radius:2px;"></div><svg width="1643" height="905"><path d="M6.5 890.5v9.5l-6.5-4.7z" fill="#333"/><path d="M1250.5 890.5v9.5l7-4.7z" fill="#333"/></svg><div style="left:-40.20px;top:826.90px;width:62.80px;height:60.30px;background:linear-gradient(#a4a4a4,#989898 8%,#8a8a8a 50%,#6c6c6c);border-radius:5px;border:1px solid #7c7c7c;border-bottom-color:#4a4a4a;"><div style="left:5.70px;top:4.90px;width:50.00px;height:15.00px;background:#8785c0;border-radius:4.5px;box-shadow:inset 1.5px 1.5px 1.5px rgba(0,0,0,.28);"></div><div style="left:-10px;top:28.3px;width:82.8px;text-align:center;"><span style="display:inline-block;text-align:left;font-size:12.3px;line-height:15px;font-weight:700;color:#222;white-space:nowrap;vertical-align:top;transform:scaleX(1.1);">Blue<br>Flower</span></div></div><div style="left:24.80px;top:826.90px;width:62.80px;height:60.30px;background:linear-gradient(#a4a4a4,#989898 8%,#8a8a8a 50%,#6c6c6c);border-radius:5px;border:1px solid #7c7c7c;border-bottom-color:#4a4a4a;"><div style="left:5.70px;top:4.90px;width:50.00px;height:15.00px;background:#62c4ae;border-radius:4.5px;box-shadow:inset 1.5px 1.5px 1.5px rgba(0,0,0,.28);"></div><div style="left:-10px;top:28.3px;width:82.8px;text-align:center;"><span style="display:inline-block;text-align:left;font-size:12.3px;line-height:15px;font-weight:700;color:#222;white-space:nowrap;vertical-align:top;transform:scaleX(1.1);">Bluish<br>Green</span></div></div><div style="left:89.80px;top:826.90px;width:62.80px;height:60.30px;background:linear-gradient(#a4a4a4,#989898 8%,#8a8a8a 50%,#6c6c6c);border-radius:5px;border:1px solid #7c7c7c;border-bottom-color:#4a4a4a;"><div style="left:5.70px;top:4.90px;width:50.00px;height:30.00px;background:#e07b28;border-radius:4.5px;box-shadow:inset 1.5px 1.5px 1.5px rgba(0,0,0,.28);"></div><div style="left:-10px;top:43.3px;width:82.8px;text-align:center;"><span style="display:inline-block;text-align:left;font-size:12.3px;line-height:15px;font-weight:700;color:#222;white-space:nowrap;vertical-align:top;transform:scaleX(1.1);">Orange</span></div></div><div style="left:154.80px;top:826.90px;width:62.80px;height:60.30px;background:linear-gradient(#a4a4a4,#989898 8%,#8a8a8a 50%,#6c6c6c);border-radius:5px;border:1px solid #7c7c7c;border-bottom-color:#4a4a4a;"><div style="left:5.70px;top:4.90px;width:50.00px;height:15.00px;background:#4a5daa;border-radius:4.5px;box-shadow:inset 1.5px 1.5px 1.5px rgba(0,0,0,.28);"></div><div style="left:-10px;top:28.3px;width:82.8px;text-align:center;"><span style="display:inline-block;text-align:left;font-size:12.3px;line-height:15px;font-weight:700;color:#222;white-space:nowrap;vertical-align:top;transform:scaleX(1.1);">Purplish<br>Blue</span></div></div><div style="left:219.80px;top:826.90px;width:62.80px;height:60.30px;background:linear-gradient(#a4a4a4,#989898 8%,#8a8a8a 50%,#6c6c6c);border-radius:5px;border:1px solid #7c7c7c;border-bottom-color:#4a4a4a;"><div style="left:5.70px;top:4.90px;width:50.00px;height:15.00px;background:#cf5566;border-radius:4.5px;box-shadow:inset 1.5px 1.5px 1.5px rgba(0,0,0,.28);"></div><div style="left:-10px;top:28.3px;width:82.8px;text-align:center;"><span style="display:inline-block;text-align:left;font-size:12.3px;line-height:15px;font-weight:700;color:#222;white-space:nowrap;vertical-align:top;transform:scaleX(1.1);">Moderate<br>Red</span></div></div><div style="left:284.80px;top:826.90px;width:62.80px;height:60.30px;background:linear-gradient(#a4a4a4,#989898 8%,#8a8a8a 50%,#6c6c6c);border-radius:5px;border:1px solid #7c7c7c;border-bottom-color:#4a4a4a;"><div style="left:5.70px;top:4.90px;width:50.00px;height:30.00px;background:#5f3c70;border-radius:4.5px;box-shadow:inset 1.5px 1.5px 1.5px rgba(0,0,0,.28);"></div><div style="left:-10px;top:43.3px;width:82.8px;text-align:center;"><span style="display:inline-block;text-align:left;font-size:12.3px;line-height:15px;font-weight:700;color:#222;white-space:nowrap;vertical-align:top;transform:scaleX(1.1);">Purple</span></div></div><div style="left:349.80px;top:826.90px;width:62.80px;height:60.30px;background:linear-gradient(#a4a4a4,#989898 8%,#8a8a8a 50%,#6c6c6c);border-radius:5px;border:1px solid #7c7c7c;border-bottom-color:#4a4a4a;"><div style="left:5.70px;top:4.90px;width:50.00px;height:15.00px;background:#a4c340;border-radius:4.5px;box-shadow:inset 1.5px 1.5px 1.5px rgba(0,0,0,.28);"></div><div style="left:-10px;top:28.3px;width:82.8px;text-align:center;"><span style="display:inline-block;text-align:left;font-size:12.3px;line-height:15px;font-weight:700;color:#222;white-space:nowrap;vertical-align:top;transform:scaleX(1.1);">Yellow<br>Green</span></div></div><div style="left:414.80px;top:826.90px;width:62.80px;height:60.30px;background:linear-gradient(#a4a4a4,#989898 8%,#8a8a8a 50%,#6c6c6c);border-radius:5px;border:1px solid #7c7c7c;border-bottom-color:#4a4a4a;"><div style="left:5.70px;top:4.90px;width:50.00px;height:15.00px;background:#eba530;border-radius:4.5px;box-shadow:inset 1.5px 1.5px 1.5px rgba(0,0,0,.28);"></div><div style="left:-10px;top:28.3px;width:82.8px;text-align:center;"><span style="display:inline-block;text-align:left;font-size:12.3px;line-height:15px;font-weight:700;color:#222;white-space:nowrap;vertical-align:top;transform:scaleX(1.1);">Orange<br>Yellow</span></div></div><div style="left:479.80px;top:826.90px;width:62.80px;height:60.30px;background:linear-gradient(#a4a4a4,#989898 8%,#8a8a8a 50%,#6c6c6c);border-radius:5px;border:1px solid #7c7c7c;border-bottom-color:#4a4a4a;"><div style="left:5.70px;top:4.90px;width:50.00px;height:30.00px;background:#33409c;border-radius:4.5px;box-shadow:inset 1.5px 1.5px 1.5px rgba(0,0,0,.28);"></div><div style="left:-10px;top:43.3px;width:82.8px;text-align:center;"><span style="display:inline-block;text-align:left;font-size:12.3px;line-height:15px;font-weight:700;color:#222;white-space:nowrap;vertical-align:top;transform:scaleX(1.1);">Blue</span></div></div><div style="left:544.80px;top:826.90px;width:62.80px;height:60.30px;background:linear-gradient(#a4a4a4,#989898 8%,#8a8a8a 50%,#6c6c6c);border-radius:5px;border:1px solid #7c7c7c;border-bottom-color:#4a4a4a;"><div style="left:5.70px;top:4.90px;width:50.00px;height:30.00px;background:#469a4c;border-radius:4.5px;box-shadow:inset 1.5px 1.5px 1.5px rgba(0,0,0,.28);"></div><div style="left:-10px;top:43.3px;width:82.8px;text-align:center;"><span style="display:inline-block;text-align:left;font-size:12.3px;line-height:15px;font-weight:700;color:#222;white-space:nowrap;vertical-align:top;transform:scaleX(1.1);">Green</span></div></div><div style="left:609.80px;top:826.90px;width:62.80px;height:60.30px;background:linear-gradient(#a4a4a4,#989898 8%,#8a8a8a 50%,#6c6c6c);border-radius:5px;border:1px solid #7c7c7c;border-bottom-color:#4a4a4a;"><div style="left:5.70px;top:4.90px;width:50.00px;height:30.00px;background:#c0303a;border-radius:4.5px;box-shadow:inset 1.5px 1.5px 1.5px rgba(0,0,0,.28);"></div><div style="left:-10px;top:43.3px;width:82.8px;text-align:center;"><span style="display:inline-block;text-align:left;font-size:12.3px;line-height:15px;font-weight:700;color:#222;white-space:nowrap;vertical-align:top;transform:scaleX(1.1);">Red</span></div></div><div style="left:674.80px;top:826.90px;width:62.80px;height:60.30px;background:linear-gradient(#a4a4a4,#989898 8%,#8a8a8a 50%,#6c6c6c);border-radius:5px;border:1px solid #7c7c7c;border-bottom-color:#4a4a4a;"><div style="left:5.70px;top:4.90px;width:50.00px;height:30.00px;background:#f0c828;border-radius:4.5px;box-shadow:inset 1.5px 1.5px 1.5px rgba(0,0,0,.28);"></div><div style="left:-10px;top:43.3px;width:82.8px;text-align:center;"><span style="display:inline-block;text-align:left;font-size:12.3px;line-height:15px;font-weight:700;color:#222;white-space:nowrap;vertical-align:top;transform:scaleX(1.1);">Yellow</span></div></div><div style="left:739.80px;top:826.90px;width:62.80px;height:60.30px;background:linear-gradient(#a4a4a4,#989898 8%,#8a8a8a 50%,#6c6c6c);border-radius:5px;border:1px solid #7c7c7c;border-bottom-color:#4a4a4a;"><div style="left:5.70px;top:4.90px;width:50.00px;height:30.00px;background:#c4579a;border-radius:4.5px;box-shadow:inset 1.5px 1.5px 1.5px rgba(0,0,0,.28);"></div><div style="left:-10px;top:43.3px;width:82.8px;text-align:center;"><span style="display:inline-block;text-align:left;font-size:12.3px;line-height:15px;font-weight:700;color:#222;white-space:nowrap;vertical-align:top;transform:scaleX(1.1);">Magenta</span></div></div><div style="left:804.80px;top:826.90px;width:62.80px;height:60.30px;background:linear-gradient(#a4a4a4,#989898 8%,#8a8a8a 50%,#6c6c6c);border-radius:5px;border:1px solid #7c7c7c;border-bottom-color:#4a4a4a;"><div style="left:5.70px;top:4.90px;width:50.00px;height:30.00px;background:#0a8eb5;border-radius:4.5px;box-shadow:inset 1.5px 1.5px 1.5px rgba(0,0,0,.28);"></div><div style="left:-10px;top:43.3px;width:82.8px;text-align:center;"><span style="display:inline-block;text-align:left;font-size:12.3px;line-height:15px;font-weight:700;color:#222;white-space:nowrap;vertical-align:top;transform:scaleX(1.1);">Cyan</span></div></div><div style="left:869.80px;top:826.90px;width:62.80px;height:60.30px;background:linear-gradient(#a4a4a4,#989898 8%,#8a8a8a 50%,#6c6c6c);border-radius:5px;border:1px solid #7c7c7c;border-bottom-color:#4a4a4a;"><div style="left:5.70px;top:4.90px;width:50.00px;height:30.00px;background:#ff0000;border-radius:4.5px;box-shadow:inset 1.5px 1.5px 1.5px rgba(0,0,0,.28);"></div><div style="left:-10px;top:43.3px;width:82.8px;text-align:center;"><span style="display:inline-block;text-align:left;font-size:12.3px;line-height:15px;font-weight:700;color:#222;white-space:nowrap;vertical-align:top;transform:scaleX(1.1);">100% Red</span></div></div><div style="left:934.80px;top:826.90px;width:62.80px;height:60.30px;background:linear-gradient(#a4a4a4,#989898 8%,#8a8a8a 50%,#6c6c6c);border-radius:5px;border:1px solid #7c7c7c;border-bottom-color:#4a4a4a;"><div style="left:5.70px;top:4.90px;width:50.00px;height:15.00px;background:#00ff00;border-radius:4.5px;box-shadow:inset 1.5px 1.5px 1.5px rgba(0,0,0,.28);"></div><div style="left:-10px;top:28.3px;width:82.8px;text-align:center;"><span style="display:inline-block;text-align:left;font-size:12.3px;line-height:15px;font-weight:700;color:#222;white-space:nowrap;vertical-align:top;transform:scaleX(1.1);">100%<br>Green</span></div></div><div style="left:999.80px;top:826.90px;width:62.80px;height:60.30px;background:linear-gradient(#a4a4a4,#989898 8%,#8a8a8a 50%,#6c6c6c);border-radius:5px;border:1px solid #7c7c7c;border-bottom-color:#4a4a4a;"><div style="left:5.70px;top:4.90px;width:50.00px;height:15.00px;background:#0000ff;border-radius:4.5px;box-shadow:inset 1.5px 1.5px 1.5px rgba(0,0,0,.28);"></div><div style="left:-10px;top:28.3px;width:82.8px;text-align:center;"><span style="display:inline-block;text-align:left;font-size:12.3px;line-height:15px;font-weight:700;color:#222;white-space:nowrap;vertical-align:top;transform:scaleX(1.1);">100%<br>Blue</span></div></div><div style="left:1064.80px;top:826.90px;width:62.80px;height:60.30px;background:linear-gradient(#a4a4a4,#989898 8%,#8a8a8a 50%,#6c6c6c);border-radius:5px;border:1px solid #7c7c7c;border-bottom-color:#4a4a4a;"><div style="left:5.70px;top:4.90px;width:50.00px;height:15.00px;background:#00ffff;border-radius:4.5px;box-shadow:inset 1.5px 1.5px 1.5px rgba(0,0,0,.28);"></div><div style="left:-10px;top:28.3px;width:82.8px;text-align:center;"><span style="display:inline-block;text-align:left;font-size:12.3px;line-height:15px;font-weight:700;color:#222;white-space:nowrap;vertical-align:top;transform:scaleX(1.1);">100%<br>Cyan</span></div></div><div style="left:1129.80px;top:826.90px;width:62.80px;height:60.30px;background:linear-gradient(#a4a4a4,#989898 8%,#8a8a8a 50%,#6c6c6c);border-radius:5px;border:1px solid #7c7c7c;border-bottom-color:#4a4a4a;"><div style="left:5.70px;top:4.90px;width:50.00px;height:15.00px;background:#ff00ff;border-radius:4.5px;box-shadow:inset 1.5px 1.5px 1.5px rgba(0,0,0,.28);"></div><div style="left:-10px;top:28.3px;width:82.8px;text-align:center;"><span style="display:inline-block;text-align:left;font-size:12.3px;line-height:15px;font-weight:700;color:#222;white-space:nowrap;vertical-align:top;transform:scaleX(1.1);">100%<br>Magenta</span></div></div><div style="left:1194.80px;top:826.90px;width:62.80px;height:60.30px;background:linear-gradient(#161616,#2a2a2a 50%,#484848);border-radius:5px;border:1px solid #222;border-bottom-color:#4a4a4a;"><div style="left:5.70px;top:4.90px;width:50.00px;height:15.00px;background:#ffff00;border-radius:4.5px;box-shadow:inset 1.5px 1.5px 1.5px rgba(0,0,0,.28);"></div><div style="left:-10px;top:28.3px;width:82.8px;text-align:center;"><span style="display:inline-block;text-align:left;font-size:12.3px;line-height:15px;font-weight:700;color:#fff;white-space:nowrap;vertical-align:top;transform:scaleX(1.1);">100%<br>Yellow</span></div></div><div style="left:1261.40px;top:826.50px;width:59.60px;height:22.60px;background:linear-gradient(#a2a2a2,#8c8c8c);border-radius:5px 5px 0 0;border:1px solid #777;"></div><div style="left:1261.40px;top:850.00px;width:59.60px;height:52.50px;background:linear-gradient(#8c8c8c,#6c6c6c);border-radius:0 0 5px 5px;border:1px solid #6a6a6a;"></div><div style="left:1281.50px;top:829.00px;width:20.00px;height:18.00px;border-radius:50%;background:linear-gradient(#7a7a7a,#9c9c9c);"></div><div style="left:1271.20px;top:856.60px;width:39.90px;height:39.20px;border-radius:6.5px;border:3px solid #222;background:linear-gradient(#b4b4b4,#a0a0a0 49%,#888 51%,#8e8e8e);"></div><div style="left:1282.80px;top:868.30px;width:17.40px;height:16.50px;background:linear-gradient(#1c1c1c,#0a0a0a 49%,#000 51%);"></div><div style="left:1322.60px;top:826.00px;width:56.80px;height:37.50px;background:linear-gradient(#a0a0a0,#8a8a8a 50%,#6a6a6a);border-radius:5px 0 0 0;"></div><div style="left:1338.10px;top:832.00px;width:26.00px;height:26.00px;border-radius:50%;background:linear-gradient(#6e6e6e,#8a8a8a 50%,#a2a2a2);"></div><div style="left:1380.60px;top:826.00px;width:54.80px;height:37.50px;background:linear-gradient(#a0a0a0,#8a8a8a 50%,#6a6a6a);"></div><div style="left:1396.20px;top:832.00px;width:26.00px;height:26.00px;border-radius:50%;background:linear-gradient(#6e6e6e,#8a8a8a 50%,#a2a2a2);"></div><div style="left:1436.60px;top:826.00px;width:55.20px;height:37.50px;background:linear-gradient(#a0a0a0,#8a8a8a 50%,#6a6a6a);"></div><div style="left:1451.40px;top:832.00px;width:26.00px;height:26.00px;border-radius:50%;background:linear-gradient(#6e6e6e,#8a8a8a 50%,#a2a2a2);"></div><div style="left:1493.00px;top:826.00px;width:55.20px;height:37.50px;background:linear-gradient(#a0a0a0,#8a8a8a 50%,#6a6a6a);"></div><div style="left:1508.30px;top:832.00px;width:26.00px;height:26.00px;border-radius:50%;background:linear-gradient(#6e6e6e,#8a8a8a 50%,#a2a2a2);"></div><div style="left:1549.40px;top:826.00px;width:55.20px;height:37.50px;background:linear-gradient(#3a3a3a,#2a2a2a 50%,#1e1e1e);"></div><div style="left:1564.30px;top:832.00px;width:26.00px;height:26.00px;border-radius:50%;background:linear-gradient(#262626,#333);"></div><div style="left:1605.80px;top:826.00px;width:55.20px;height:37.50px;background:linear-gradient(#3a3a3a,#2a2a2a 50%,#1e1e1e);"></div><div style="left:1622.00px;top:832.00px;width:26.00px;height:26.00px;border-radius:50%;background:linear-gradient(#262626,#333);"></div><div style="left:1322.60px;top:865.20px;width:169.60px;height:37.30px;background:linear-gradient(#a6a6a6,#8e8e8e 50%,#707070);border-radius:5px 0 0 5px;"></div><div style="left:1493.60px;top:865.20px;width:160.00px;height:37.30px;background:linear-gradient(#a6a6a6,#8e8e8e 50%,#707070);"></div><div style="left:1349.40px;top:872.40px;width:24.00px;height:24.00px;border-radius:50%;background:linear-gradient(#747474,#8c8c8c 50%,#a8a8a8);"></div><div style="left:1616.30px;top:872.40px;width:24.00px;height:24.00px;border-radius:50%;background:linear-gradient(#747474,#8c8c8c 50%,#a8a8a8);"></div><span id="t208" class="t" style="left:1393.60px;transform-origin:0 0;top:870.22px;font-size:27.5px;color:#303030;transform:scaleX(1.0426);text-shadow:0 0 1.5px #333;-webkit-text-stroke:0.5px #303030;">Back</span><span id="t209" class="t" style="left:1527.40px;transform-origin:0 0;top:870.22px;font-size:27.5px;color:#303030;transform:scaleX(1.1404);text-shadow:0 0 1.5px #333;-webkit-text-stroke:0.5px #303030;">Next</span><svg width="1643" height="905"><path d="M1285.5 841.5l6-6.5l6 6.5z" fill="#333"/><rect x="1346.3" y="840.2" width="9.6" height="9.6" fill="#333"/><path d="M1405.3 839.5v11.4l10-5.7z" fill="#333"/><path d="M1460.5 839.5h-2.6v11.4h2.6M1468.3 839.5h2.6v11.4h-2.6" fill="none" stroke="#333" stroke-width="2.1"/><path d="M1461.300 845.200h6.200" stroke="#333" stroke-width="1.8" stroke-dasharray="1.600 1.100"/><path d="M1521.3 845c-2-3.2-6.6-3.4-6.6 0s4.600 3.2 6.6 0c2-3.200 6.600-3.400 6.600 0s-4.600 3.200-6.600 0z" fill="none" stroke="#333" stroke-width="1.7"/><path d="M1571.500 843.500a6.200 6.200 0 0 1 11-2.500M1583.100 846.500a6.200 6.200 0 0 1-11 2.500" fill="none" stroke="#151515" stroke-width="2.6"/><path d="M1584.700 837.500v5.500h-5.500zM1569.900 852.500v-5.500h5.500z" fill="#151515"/><path d="M1361.500 879.400l-4.600 5l4.600 5M1367 879.400l-4.600 5l4.600 5" fill="none" stroke="#333" stroke-width="1.7"/><path d="M1622.700 879.400l4.600 5l-4.600 5M1628.200 879.400l4.600 5l-4.600 5" fill="none" stroke="#333" stroke-width="1.7"/></svg></div></body></html>
